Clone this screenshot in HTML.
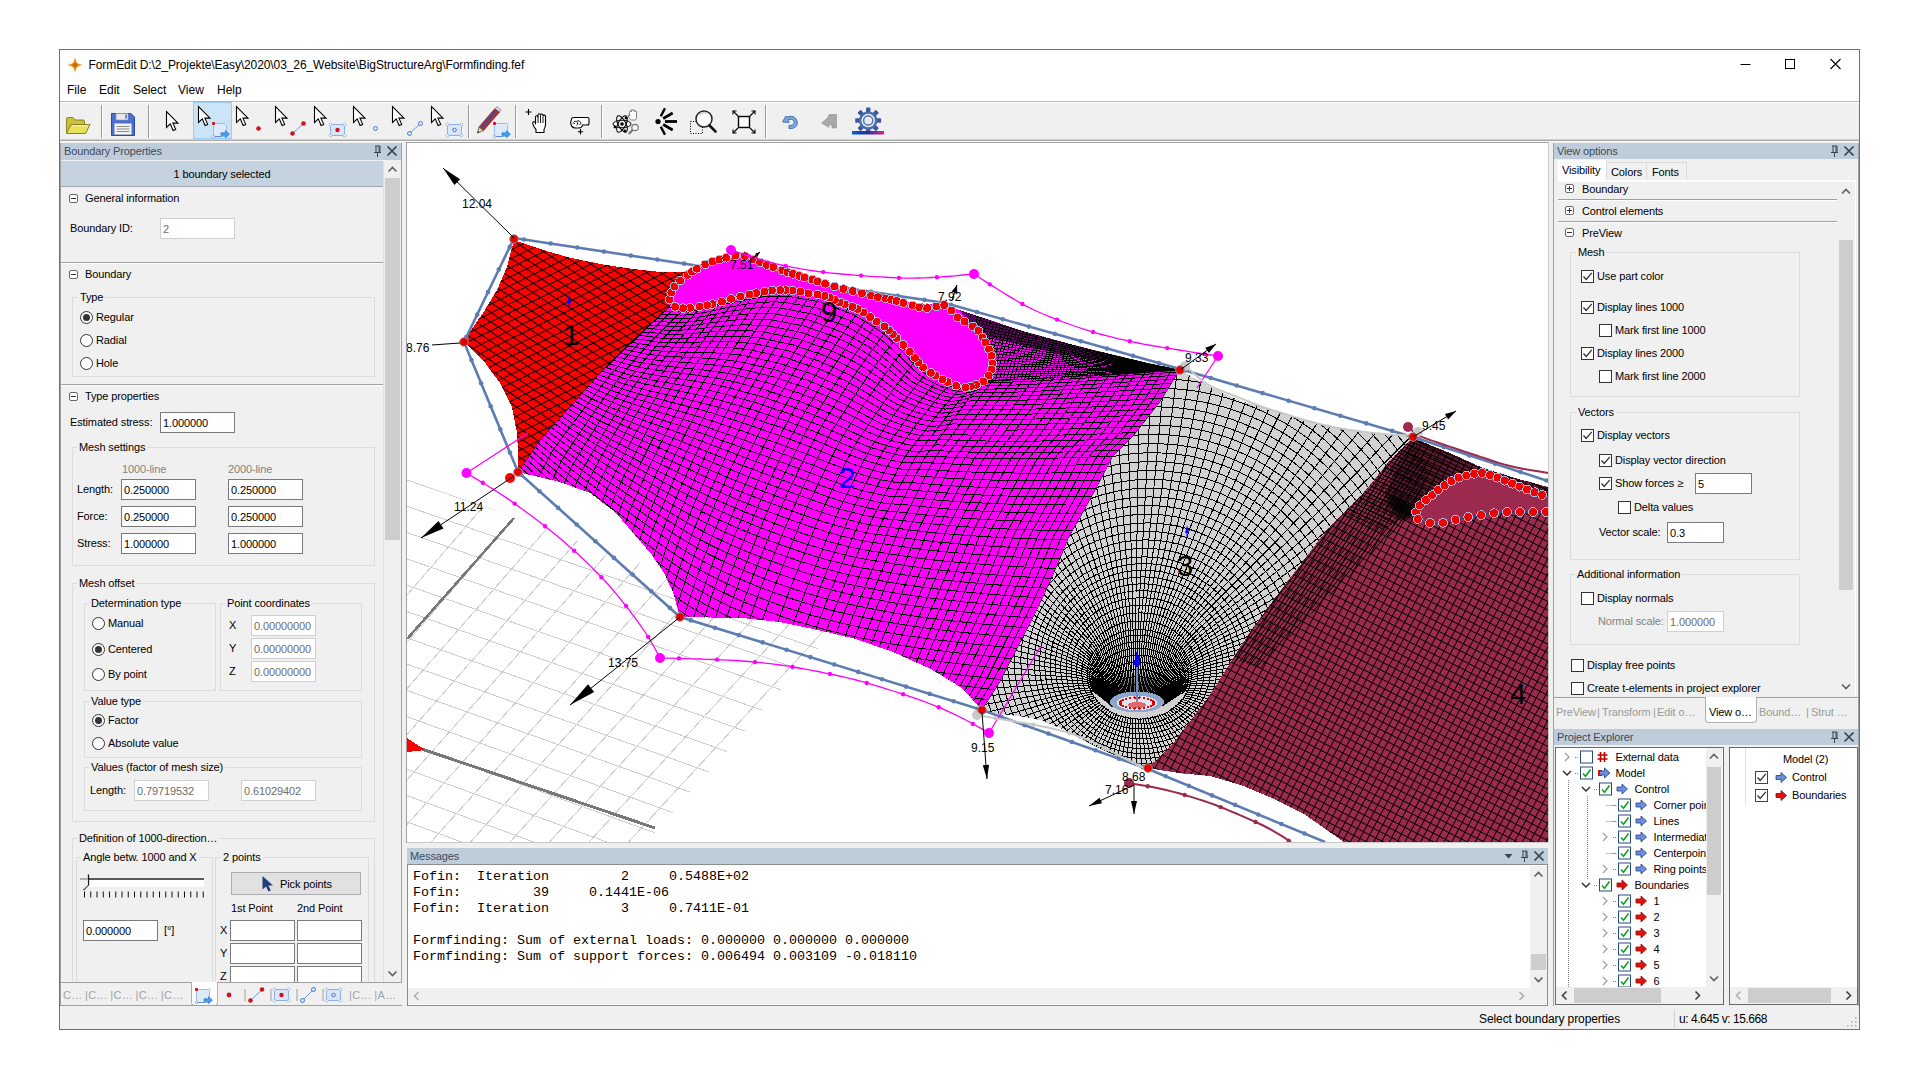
<!DOCTYPE html><html><head><meta charset="utf-8"><title>FormEdit</title><style>
*{box-sizing:border-box;margin:0;padding:0}
html,body{width:1920px;height:1080px;overflow:hidden;background:#fff}
body{font-family:"Liberation Sans",sans-serif;font-size:11px;color:#000;position:relative}
div,span,svg{position:absolute}
span{white-space:pre;line-height:14px}
.t{font-size:11px;letter-spacing:-0.12px}
.tt{font-size:12px;line-height:16px}
.m{font-family:"Liberation Mono",monospace;font-size:13.33px;line-height:16px}
</style></head><body><div style="left:59px;top:49px;width:1801px;height:981px;border:1px solid #707070;background:#f0f0f0"></div><div style="left:60px;top:50px;width:1799px;height:51px;background:#fff"></div><svg style="left:67px;top:57px" width="16" height="16" viewBox="0 0 16 16"><path d="M8 0.5 L10 6 L15.5 8 L10 10 L8 15.5 L6 10 L0.5 8 L6 6 Z" fill="#f39a1d"/><circle cx="8" cy="8" r="2.6" fill="#e0801a"/><path d="M8 5v6M5 8h6" stroke="#a85a10" stroke-width="0.7"/></svg><span class="tt" style="left:88.5px;top:56.5px;letter-spacing:-0.09px">FormEdit D:\2_Projekte\Easy\2020\03_26_Website\BigStructureArg\Formfinding.fef</span><svg style="left:1720px;top:50px" width="140" height="30" viewBox="1720 50 140 30"><path d="M1740.5 64.5 h10" stroke="#000" stroke-width="1" fill="none"/><rect x="1785.5" y="59.5" width="9" height="9" fill="none" stroke="#000" stroke-width="1"/><path d="M1830.5 59 L1840.5 69 M1840.5 59 L1830.5 69" stroke="#000" stroke-width="1.1" fill="none"/></svg><span class="tt" style="left:67px;top:82px">File</span><span class="tt" style="left:99px;top:82px">Edit</span><span class="tt" style="left:133px;top:82px">Select</span><span class="tt" style="left:178px;top:82px">View</span><span class="tt" style="left:217px;top:82px">Help</span><div style="left:60px;top:101px;width:1799px;height:1px;background:#b8b8b8"></div><div style="left:60px;top:102px;width:1799px;height:1px;background:#fdfdfd"></div><div style="left:60px;top:139px;width:1799px;height:1px;background:#d0d0d0"></div><div style="left:60px;top:140px;width:1799px;height:1px;background:#a8a8a8"></div><div style="left:60px;top:141px;width:1799px;height:1px;background:#fafafa"></div><div style="left:193px;top:102px;width:39px;height:37px;background:#cce4f7;border:1px solid #9ccbf0"></div><svg style="left:60px;top:102px" width="900" height="38" viewBox="60 102 900 38"><path d="M101.5 105 V138" stroke="#9a9a9a" stroke-width="1"/><path d="M102.5 105 V138" stroke="#fff" stroke-width="1"/><path d="M148.5 105 V138" stroke="#9a9a9a" stroke-width="1"/><path d="M149.5 105 V138" stroke="#fff" stroke-width="1"/><path d="M468.5 105 V138" stroke="#9a9a9a" stroke-width="1"/><path d="M469.5 105 V138" stroke="#fff" stroke-width="1"/><path d="M515.5 105 V138" stroke="#9a9a9a" stroke-width="1"/><path d="M516.5 105 V138" stroke="#fff" stroke-width="1"/><path d="M601.5 105 V138" stroke="#9a9a9a" stroke-width="1"/><path d="M602.5 105 V138" stroke="#fff" stroke-width="1"/><path d="M765.5 105 V138" stroke="#9a9a9a" stroke-width="1"/><path d="M766.5 105 V138" stroke="#fff" stroke-width="1"/><path d="M66.5 133.5 V119 q0-1.5 1.5-1.5 h5 l2 2.5 h8 q1.5 0 1.5 1.5 v3" fill="#c9c23a" stroke="#8a8420" stroke-width="1"/><path d="M66.5 133.5 L71 124.5 H90 L85.5 133.5 Z" fill="#e6e05a" stroke="#8a8420" stroke-width="1"/><path d="M72 126 H88" stroke="#f6f3a0" stroke-width="1.2"/><path d="M111.5 113.5 H131 L134.5 117 V135.5 H111.5 Z" fill="#4a6fd0" stroke="#2d49a0" stroke-width="1"/><rect x="116" y="113.5" width="12" height="6.5" fill="#e8e8ee" stroke="#9090a8" stroke-width="0.6"/><rect x="125" y="114.5" width="2" height="4" fill="#8088a0"/><rect x="114.5" y="123.5" width="17" height="11" fill="#f4f4f4" stroke="#b0b0c0" stroke-width="0.6"/><path d="M116.5 126.5 h13 M116.5 129 h13 M116.5 131.5 h13" stroke="#8a8a8a" stroke-width="1"/><path transform="translate(166.5,111.5)" d="M0 0 L0 16 L3.8 12.4 L6.6 19 L9.2 17.9 L6.4 11.6 L11.5 11.6 Z" fill="#fff" stroke="#000" stroke-width="1.1" stroke-linejoin="miter"/><path transform="translate(198.5,106.5)" d="M0 0 L0 16 L3.8 12.4 L6.6 19 L9.2 17.9 L6.4 11.6 L11.5 11.6 Z" fill="#fff" stroke="#000" stroke-width="1.1" stroke-linejoin="miter"/><rect x="213.5" y="123.5" width="13" height="13" fill="#dfeaf8" stroke="#9dbbe6" stroke-width="1"/><circle cx="213.5" cy="136.5" r="1.4" fill="#fff" stroke="#7fa3dc" stroke-width="0.8"/><circle cx="226.5" cy="123.5" r="1.2" fill="#fff" stroke="#9dbbe6" stroke-width="0.6"/><path d="M214.5 136.5 H221.5" stroke="#5d8fdc" stroke-width="1"/><path d="M221.0 132.8 h4.5 v-2.2 l4 3.6 l-4 3.6 v-2.2 h-4.5 z" fill="#3fa0f0" stroke="#2a6fc8" stroke-width="0.6"/><rect x="212.0" y="122.0" width="3" height="3" rx="1" fill="#d01020"/><path transform="translate(236.5,106.5)" d="M0 0 L0 16 L3.8 12.4 L6.6 19 L9.2 17.9 L6.4 11.6 L11.5 11.6 Z" fill="#fff" stroke="#000" stroke-width="1.1" stroke-linejoin="miter"/><circle cx="258.5" cy="128.5" r="2.3" fill="#d01020"/><path transform="translate(275.5,106.5)" d="M0 0 L0 16 L3.8 12.4 L6.6 19 L9.2 17.9 L6.4 11.6 L11.5 11.6 Z" fill="#fff" stroke="#000" stroke-width="1.1" stroke-linejoin="miter"/><path d="M292.5 133.5 L303.5 123.5" stroke="#6a9be0" stroke-width="1"/><circle cx="292.5" cy="133.5" r="2.3" fill="#d01020"/><circle cx="303.5" cy="123.5" r="2.3" fill="#d01020"/><path transform="translate(314.5,106.5)" d="M0 0 L0 16 L3.8 12.4 L6.6 19 L9.2 17.9 L6.4 11.6 L11.5 11.6 Z" fill="#fff" stroke="#000" stroke-width="1.1" stroke-linejoin="miter"/><rect x="330.5" y="124.5" width="14" height="11" fill="#d9e6f7" stroke="#8fb0e0" stroke-width="1"/><circle cx="330.5" cy="124.5" r="1.4" fill="#fff" stroke="#8fb0e0" stroke-width="0.8"/><circle cx="344.5" cy="124.5" r="1.4" fill="#fff" stroke="#8fb0e0" stroke-width="0.8"/><circle cx="330.5" cy="135.5" r="1.4" fill="#fff" stroke="#8fb0e0" stroke-width="0.8"/><circle cx="344.5" cy="135.5" r="1.4" fill="#fff" stroke="#8fb0e0" stroke-width="0.8"/><circle cx="337.5" cy="130.0" r="2.2" fill="#d01020"/><path transform="translate(353.5,106.5)" d="M0 0 L0 16 L3.8 12.4 L6.6 19 L9.2 17.9 L6.4 11.6 L11.5 11.6 Z" fill="#fff" stroke="#000" stroke-width="1.1" stroke-linejoin="miter"/><circle cx="375.5" cy="128.5" r="2" fill="#dbe8fa" stroke="#4a7ad0" stroke-width="1"/><path transform="translate(392.5,106.5)" d="M0 0 L0 16 L3.8 12.4 L6.6 19 L9.2 17.9 L6.4 11.6 L11.5 11.6 Z" fill="#fff" stroke="#000" stroke-width="1.1" stroke-linejoin="miter"/><path d="M409.5 133.5 L420.5 123.5" stroke="#6a9be0" stroke-width="1"/><circle cx="409.5" cy="133.5" r="2" fill="#dbe8fa" stroke="#4a7ad0" stroke-width="1"/><circle cx="420.5" cy="123.5" r="2" fill="#dbe8fa" stroke="#4a7ad0" stroke-width="1"/><path transform="translate(431.5,106.5)" d="M0 0 L0 16 L3.8 12.4 L6.6 19 L9.2 17.9 L6.4 11.6 L11.5 11.6 Z" fill="#fff" stroke="#000" stroke-width="1.1" stroke-linejoin="miter"/><rect x="447.5" y="124.5" width="14" height="11" fill="#d9e6f7" stroke="#8fb0e0" stroke-width="1"/><circle cx="447.5" cy="124.5" r="1.4" fill="#fff" stroke="#8fb0e0" stroke-width="0.8"/><circle cx="461.5" cy="124.5" r="1.4" fill="#fff" stroke="#8fb0e0" stroke-width="0.8"/><circle cx="447.5" cy="135.5" r="1.4" fill="#fff" stroke="#8fb0e0" stroke-width="0.8"/><circle cx="461.5" cy="135.5" r="1.4" fill="#fff" stroke="#8fb0e0" stroke-width="0.8"/><circle cx="454.5" cy="130" r="1.8" fill="#dbe8fa" stroke="#4a7ad0" stroke-width="1"/><path d="M479 127 L495 108.5 L499.5 112 L483.5 130.5 Z" fill="#b03030" stroke="#5a2020" stroke-width="0.7"/><path d="M480.5 128.5 L496.5 110" stroke="#3050b0" stroke-width="1.6"/><path d="M495 108.5 L497 106.5 L501 110 L499.5 112 Z" fill="#f0d0d0" stroke="#806060" stroke-width="0.6"/><path d="M479 127 L477.5 133 L483.5 130.5 Z" fill="#e8d8a0" stroke="#404040" stroke-width="0.7"/><path d="M477.5 133 l1.8-0.8 l-1.3-1.2 z" fill="#000"/><rect x="494.5" y="123.5" width="13" height="13" fill="#dfeaf8" stroke="#9dbbe6" stroke-width="1"/><circle cx="494.5" cy="136.5" r="1.4" fill="#fff" stroke="#7fa3dc" stroke-width="0.8"/><circle cx="507.5" cy="123.5" r="1.2" fill="#fff" stroke="#9dbbe6" stroke-width="0.6"/><path d="M495.5 136.5 H502.5" stroke="#5d8fdc" stroke-width="1"/><path d="M502.0 132.8 h4.5 v-2.2 l4 3.6 l-4 3.6 v-2.2 h-4.5 z" fill="#3fa0f0" stroke="#2a6fc8" stroke-width="0.6"/><rect x="493.0" y="122.0" width="3" height="3" rx="1" fill="#d01020"/><path d="M528.5 109 v6 M525.5 112 h6" stroke="#000" stroke-width="1.1"/><path d="M535.5 124 v-7 q0-1.3 1.2-1.3 q1.3 0 1.3 1.3 v-2 q0-1.3 1.3-1.3 q1.2 0 1.2 1.3 v0.3 q0-1.3 1.3-1.3 q1.2 0 1.2 1.3 v1 q0-1.2 1.2-1.2 q1.3 0 1.3 1.3 v8.2 q0 2.5-1.5 4.7 v3.2 h-8 v-3 q-2-2-3.2-5.5 q-0.5-1.6 0.8-2.2 q1.2-0.4 1.9 1 z" fill="#fff" stroke="#000" stroke-width="1.1" stroke-linejoin="round"/><path d="M538 117 v6 M540.5 116 v7 M543 117 v6" stroke="#000" stroke-width="0.9"/><path d="M571.5 119.5 q0-2 2-2 h14 q1.5 0 1.5 1.5 v4 q0 2-2 2 h-4.5 q-0.5 3-3.5 3 h-3 q-4 0-5-3.5 q-1-2.5 0.5-5 z" fill="#fff" stroke="#000" stroke-width="1.1"/><path d="M574 121.5 q2.5-1 3.5 1 q1 2-1 3 M577 121 q2.5-1 3.5 1.2 q0.6 1.8-1 2.8 M572.5 123 q1.5-0.6 2.5 0.8" fill="none" stroke="#000" stroke-width="0.9"/><path d="M580.5 129 v5.5 M577.8 131.7 h5.4" stroke="#000" stroke-width="1.1"/><g fill="none" stroke="#000" stroke-width="1"><ellipse cx="622" cy="124" rx="9" ry="3.8" transform="rotate(0 622 124)"/><ellipse cx="622" cy="124" rx="9" ry="3.8" transform="rotate(62 622 124)"/><ellipse cx="622" cy="124" rx="9" ry="3.8" transform="rotate(-62 622 124)"/></g><circle cx="622" cy="124" r="1.8" fill="#000"/><circle cx="615" cy="127" r="1.4" fill="#000"/><circle cx="626" cy="118" r="1.4" fill="#000"/><circle cx="625" cy="131" r="1.4" fill="#000"/><path d="M629.5 116 v-4 q0-1 0.9-1 q0.9 0 0.9 1 v-1.5 q0-1 0.9-1 t0.9 1 v0.5 q0-1 0.9-1 t0.9 1 v1 q0-0.9 0.8-0.9 t0.8 0.9 v5 q0 2-1 3 h-4.6 q-2-1.8-2.7-4 q-0.3-1.1 0.6-1.3 q0.8-0.2 1.3 0.8 z" fill="#fff" stroke="#666" stroke-width="0.8"/><circle cx="635" cy="127.5" r="3.2" fill="#f4f4f4" stroke="#777" stroke-width="1.2"/><path d="M632.6 130 L628.8 134" stroke="#777" stroke-width="2"/><circle cx="658" cy="121.5" r="2.6" fill="#000"/><path d="M660.8 116.2 L665.0 108.3" stroke="#000" stroke-width="2.4" stroke-linecap="butt"/><path d="M663.2 118.5 L672.7 113.0" stroke="#000" stroke-width="2.6" stroke-linecap="butt"/><path d="M665.0 121.5 L677.0 121.5" stroke="#000" stroke-width="2.8" stroke-linecap="butt"/><path d="M663.2 124.5 L672.7 130.0" stroke="#000" stroke-width="2.6" stroke-linecap="butt"/><path d="M660.8 126.8 L665.0 134.7" stroke="#000" stroke-width="2.4" stroke-linecap="butt"/><rect x="690.5" y="121.5" width="12" height="12" fill="none" stroke="#000" stroke-width="1" stroke-dasharray="1 1.5"/><circle cx="704" cy="119" r="8" fill="#fafafa" stroke="#222" stroke-width="1.5"/><path d="M699.5 115 q3-3.5 7.5-2" stroke="#ccc" stroke-width="1.5" fill="none"/><path d="M709.5 125.5 L715.5 131.5" stroke="#111" stroke-width="2.6" stroke-linecap="round"/><rect x="738.5" y="116.5" width="11" height="11" fill="#fafafa" stroke="#000" stroke-width="1.4"/><path d="M733 111 L738 116 M755 111 L750 116 M733 133 L738 128 M755 133 L750 128" stroke="#000" stroke-width="1.1"/><path d="M733 114.5 V111 H736.5 M751.5 111 H755 V114.5 M733 129.5 V133 H736.5 M751.5 133 H755 V129.5" stroke="#000" stroke-width="1.1" fill="none"/><path d="M786.5 117 q8-2.5 10.5 3.5 q1.8 6-4.5 8 h-3.5 v-3.2 h3 q3-1 2-4 q-1.5-3-6-1.5 l1.2 2.6 l-6.7-0.4 l3.3-6 z" fill="#7aa6d8" stroke="#3f6fb0" stroke-width="0.9" stroke-linejoin="round"/><path d="M829 114.5 h7.5 v13.5 h-4.5 v-3 h-3.5 l0.5 2.5 l-7.5-4.5 l6.5-5.5 z" fill="#a8a8a8" stroke="#909090" stroke-width="0.6"/><rect x="866" y="107.5" width="4.4" height="5" rx="0.8" fill="#3c5a9a" transform="rotate(0 868.2 120.5)"/><rect x="866" y="107.5" width="4.4" height="5" rx="0.8" fill="#3c5a9a" transform="rotate(45 868.2 120.5)"/><rect x="866" y="107.5" width="4.4" height="5" rx="0.8" fill="#3c5a9a" transform="rotate(90 868.2 120.5)"/><rect x="866" y="107.5" width="4.4" height="5" rx="0.8" fill="#3c5a9a" transform="rotate(135 868.2 120.5)"/><rect x="866" y="107.5" width="4.4" height="5" rx="0.8" fill="#3c5a9a" transform="rotate(180 868.2 120.5)"/><rect x="866" y="107.5" width="4.4" height="5" rx="0.8" fill="#3c5a9a" transform="rotate(225 868.2 120.5)"/><rect x="866" y="107.5" width="4.4" height="5" rx="0.8" fill="#3c5a9a" transform="rotate(270 868.2 120.5)"/><rect x="866" y="107.5" width="4.4" height="5" rx="0.8" fill="#3c5a9a" transform="rotate(315 868.2 120.5)"/><circle cx="868.2" cy="120.5" r="9.3" fill="#4a6cb0"/><circle cx="868.2" cy="120.5" r="6.8" fill="#f0f0f0"/><circle cx="868.2" cy="120.5" r="4.6" fill="none" stroke="#5a7cc0" stroke-width="1.6"/><circle cx="868.2" cy="120.5" r="2" fill="#dfe6f5"/><defs><linearGradient id="gbar" x1="0" x2="1"><stop offset="0" stop-color="#1060d0"/><stop offset="0.45" stop-color="#2030a0"/><stop offset="0.75" stop-color="#8030a0"/><stop offset="1" stop-color="#e02080"/></linearGradient></defs><rect x="852" y="131" width="32" height="3.5" fill="url(#gbar)"/></svg><div style="left:61px;top:143px;width:341px;height:17px;background:#bfcddb"></div><span class="t" style="left:64px;top:144px;color:#3d4a57">Boundary Properties</span><svg style="left:370px;top:143px" width="32" height="16" viewBox="370 143 32 16"><path d="M375.0 146 h5 M376.0 146 v6 M379.0 146 v6 M380.0 146 v6 M374.0 152.5 h7 M377.5 152.5 v4.5" fill="none" stroke="#35444e" stroke-width="1"/><path d="M387.5 146.5 L396.5 155.5 M396.5 146.5 L387.5 155.5" fill="none" stroke="#35444e" stroke-width="1.7"/></svg><div style="left:60px;top:143px;width:1px;height:863px;background:#a0a0a0"></div><div style="left:0;top:0;width:384px;height:982px;overflow:hidden;clip-path:inset(160px 0 0 61px)"><div style="left:61px;top:161px;width:322px;height:25px;background:#c5d2e0;background-image:radial-gradient(#b4c3d4 0.6px,transparent 0.7px);background-size:2px 2px"></div><div style="left:61px;top:186px;width:322px;height:1px;background:#a0a8b4"></div><span class="t" style="left:61px;top:167px;width:322px;text-align:center">1 boundary selected</span><div style="left:68.5px;top:193.5px;width:9px;height:9px;border:1px solid #6a6a6a;border-radius:2px;background:#fff"><div style="left:1px;top:3px;width:5px;height:1px;background:#333"></div></div><span class="t" style="left:85px;top:191px;">General information</span><span class="t" style="left:70px;top:221px;">Boundary ID:</span><div style="left:160px;top:218px;width:75px;height:21px;border:1px solid #d0d0d0;background:#fff"><span class="t" style="left:2px;top:2.5px;color:#6d6d6d">2</span></div><div style="left:61px;top:262px;width:322px;height:1px;background:#a0a0a0"></div><div style="left:61px;top:263px;width:322px;height:1px;background:#fff"></div><div style="left:68.5px;top:269.5px;width:9px;height:9px;border:1px solid #6a6a6a;border-radius:2px;background:#fff"><div style="left:1px;top:3px;width:5px;height:1px;background:#333"></div></div><span class="t" style="left:85px;top:267px;">Boundary</span><div style="left:72px;top:297px;width:303px;height:80px;border:1px solid #dcdcdc"></div><span class="t" style="left:78px;top:290px;background:#f0f0f0;padding:0 2px">Type</span><div style="left:80.0px;top:310.5px;width:13px;height:13px;border:1px solid #333;border-radius:50%;background:#fff"><div style="left:2px;top:2px;width:7px;height:7px;border-radius:50%;background:#333"></div></div><span class="t" style="left:96px;top:310px;">Regular</span><div style="left:80.0px;top:333.5px;width:13px;height:13px;border:1px solid #333;border-radius:50%;background:#fff"></div><span class="t" style="left:96px;top:333px;">Radial</span><div style="left:80.0px;top:356.5px;width:13px;height:13px;border:1px solid #333;border-radius:50%;background:#fff"></div><span class="t" style="left:96px;top:356px;">Hole</span><div style="left:61px;top:384px;width:322px;height:1px;background:#a0a0a0"></div><div style="left:61px;top:385px;width:322px;height:1px;background:#fff"></div><div style="left:68.5px;top:391.5px;width:9px;height:9px;border:1px solid #6a6a6a;border-radius:2px;background:#fff"><div style="left:1px;top:3px;width:5px;height:1px;background:#333"></div></div><span class="t" style="left:85px;top:389px;">Type properties</span><span class="t" style="left:70px;top:415px;">Estimated stress:</span><div style="left:160px;top:412px;width:75px;height:21px;border:1px solid #7a7a7a;background:#fff"><span class="t" style="left:2px;top:2.5px;color:#000">1.000000</span></div><div style="left:72px;top:447px;width:303px;height:119px;border:1px solid #dcdcdc"></div><span class="t" style="left:77px;top:440px;background:#f0f0f0;padding:0 2px">Mesh settings</span><span class="t" style="left:122px;top:462px;color:#838383">1000-line</span><span class="t" style="left:228px;top:462px;color:#838383">2000-line</span><span class="t" style="left:77px;top:482px;">Length:</span><div style="left:121px;top:479px;width:75px;height:21px;border:1px solid #7a7a7a;background:#fff"><span class="t" style="left:2px;top:2.5px;color:#000">0.250000</span></div><div style="left:228px;top:479px;width:75px;height:21px;border:1px solid #7a7a7a;background:#fff"><span class="t" style="left:2px;top:2.5px;color:#000">0.250000</span></div><span class="t" style="left:77px;top:509px;">Force:</span><div style="left:121px;top:506px;width:75px;height:21px;border:1px solid #7a7a7a;background:#fff"><span class="t" style="left:2px;top:2.5px;color:#000">0.250000</span></div><div style="left:228px;top:506px;width:75px;height:21px;border:1px solid #7a7a7a;background:#fff"><span class="t" style="left:2px;top:2.5px;color:#000">0.250000</span></div><span class="t" style="left:77px;top:536px;">Stress:</span><div style="left:121px;top:533px;width:75px;height:21px;border:1px solid #7a7a7a;background:#fff"><span class="t" style="left:2px;top:2.5px;color:#000">1.000000</span></div><div style="left:228px;top:533px;width:75px;height:21px;border:1px solid #7a7a7a;background:#fff"><span class="t" style="left:2px;top:2.5px;color:#000">1.000000</span></div><div style="left:72px;top:583px;width:303px;height:239px;border:1px solid #dcdcdc"></div><span class="t" style="left:77px;top:576px;background:#f0f0f0;padding:0 2px">Mesh offset</span><div style="left:84px;top:603px;width:132px;height:88px;border:1px solid #dcdcdc"></div><span class="t" style="left:89px;top:596px;background:#f0f0f0;padding:0 2px">Determination type</span><div style="left:92.0px;top:616.5px;width:13px;height:13px;border:1px solid #333;border-radius:50%;background:#fff"></div><span class="t" style="left:108px;top:616px;">Manual</span><div style="left:92.0px;top:642.5px;width:13px;height:13px;border:1px solid #333;border-radius:50%;background:#fff"><div style="left:2px;top:2px;width:7px;height:7px;border-radius:50%;background:#333"></div></div><span class="t" style="left:108px;top:642px;">Centered</span><div style="left:92.0px;top:667.5px;width:13px;height:13px;border:1px solid #333;border-radius:50%;background:#fff"></div><span class="t" style="left:108px;top:667px;">By point</span><div style="left:220px;top:603px;width:142px;height:88px;border:1px solid #dcdcdc"></div><span class="t" style="left:225px;top:596px;background:#f0f0f0;padding:0 2px">Point coordinates</span><span class="t" style="left:229px;top:618px;">X</span><div style="left:251px;top:615px;width:65px;height:21px;border:1px solid #d0d0d0;background:#fff"><span class="t" style="left:2px;top:2.5px;color:#6d6d6d">0.00000000</span></div><span class="t" style="left:229px;top:641px;">Y</span><div style="left:251px;top:638px;width:65px;height:21px;border:1px solid #d0d0d0;background:#fff"><span class="t" style="left:2px;top:2.5px;color:#6d6d6d">0.00000000</span></div><span class="t" style="left:229px;top:664px;">Z</span><div style="left:251px;top:661px;width:65px;height:21px;border:1px solid #d0d0d0;background:#fff"><span class="t" style="left:2px;top:2.5px;color:#6d6d6d">0.00000000</span></div><div style="left:84px;top:701px;width:278px;height:57px;border:1px solid #dcdcdc"></div><span class="t" style="left:89px;top:694px;background:#f0f0f0;padding:0 2px">Value type</span><div style="left:92.0px;top:713.5px;width:13px;height:13px;border:1px solid #333;border-radius:50%;background:#fff"><div style="left:2px;top:2px;width:7px;height:7px;border-radius:50%;background:#333"></div></div><span class="t" style="left:108px;top:713px;">Factor</span><div style="left:92.0px;top:736.5px;width:13px;height:13px;border:1px solid #333;border-radius:50%;background:#fff"></div><span class="t" style="left:108px;top:736px;">Absolute value</span><div style="left:84px;top:767px;width:278px;height:44px;border:1px solid #dcdcdc"></div><span class="t" style="left:89px;top:760px;background:#f0f0f0;padding:0 2px">Values (factor of mesh size)</span><span class="t" style="left:90px;top:783px;">Length:</span><div style="left:134px;top:780px;width:75px;height:21px;border:1px solid #d0d0d0;background:#fff"><span class="t" style="left:2px;top:2.5px;color:#6d6d6d">0.79719532</span></div><div style="left:241px;top:780px;width:75px;height:21px;border:1px solid #d0d0d0;background:#fff"><span class="t" style="left:2px;top:2.5px;color:#6d6d6d">0.61029402</span></div><div style="left:72px;top:838px;width:303px;height:200px;border:1px solid #dcdcdc"></div><span class="t" style="left:77px;top:831px;background:#f0f0f0;padding:0 2px">Definition of 1000-direction…</span><div style="left:76px;top:857px;width:137px;height:200px;border:1px solid #dcdcdc"></div><span class="t" style="left:81px;top:850px;background:#f0f0f0;padding:0 2px">Angle betw. 1000 and X</span><div style="left:215px;top:857px;width:154px;height:200px;border:1px solid #dcdcdc"></div><span class="t" style="left:221px;top:850px;background:#f0f0f0;padding:0 2px">2 points</span><div style="left:80px;top:878px;width:124px;height:3px;background:#5a5a5a;height:2px"></div><div style="left:80px;top:880px;width:124px;height:7px;background:#fff"></div><svg style="left:78px;top:872px" width="130" height="28" viewBox="78 872 130 28"><path d="M83.5 890 L88.5 885 V874.5" fill="none" stroke="#1a1a1a" stroke-width="1.3"/><path d="M80 878 h8 v8 l-4 3.5 l-4-3.5 z" fill="#e8e8e8" opacity="0.6"/><path d="M84.50 891.5 v6" stroke="#111" stroke-width="1"/><path d="M90.75 891.5 v6" stroke="#111" stroke-width="1"/><path d="M97.00 891.5 v6" stroke="#111" stroke-width="1"/><path d="M103.25 891.5 v6" stroke="#111" stroke-width="1"/><path d="M109.50 891.5 v6" stroke="#111" stroke-width="1"/><path d="M115.75 891.5 v6" stroke="#111" stroke-width="1"/><path d="M122.00 891.5 v6" stroke="#111" stroke-width="1"/><path d="M128.25 891.5 v6" stroke="#111" stroke-width="1"/><path d="M134.50 891.5 v6" stroke="#111" stroke-width="1"/><path d="M140.75 891.5 v6" stroke="#111" stroke-width="1"/><path d="M147.00 891.5 v6" stroke="#111" stroke-width="1"/><path d="M153.25 891.5 v6" stroke="#111" stroke-width="1"/><path d="M159.50 891.5 v6" stroke="#111" stroke-width="1"/><path d="M165.75 891.5 v6" stroke="#111" stroke-width="1"/><path d="M172.00 891.5 v6" stroke="#111" stroke-width="1"/><path d="M178.25 891.5 v6" stroke="#111" stroke-width="1"/><path d="M184.50 891.5 v6" stroke="#111" stroke-width="1"/><path d="M190.75 891.5 v6" stroke="#111" stroke-width="1"/><path d="M197.00 891.5 v6" stroke="#111" stroke-width="1"/><path d="M203.25 891.5 v6" stroke="#111" stroke-width="1"/></svg><div style="left:83px;top:920px;width:75px;height:21px;border:1px solid #7a7a7a;background:#fff"><span class="t" style="left:2px;top:2.5px;color:#000">0.000000</span></div><span class="t" style="left:164px;top:923px;">[°]</span><div style="left:231px;top:872px;width:130px;height:23px;background:#e1e1e1;border:1px solid #adadad"></div><svg style="left:260px;top:875px" width="16" height="18" viewBox="0 0 16 18"><path d="M2.5 1 L2.5 14.5 L6 11.5 L8.5 16.5 L10.8 15.4 L8.3 10.6 L13 10.4 Z" fill="#1f3f7a"/></svg><span class="t" style="left:280px;top:877px;">Pick points</span><span class="t" style="left:231px;top:901px;">1st Point</span><span class="t" style="left:297px;top:901px;">2nd Point</span><span class="t" style="left:220px;top:923px;">X</span><div style="left:230px;top:920px;width:65px;height:21px;border:1px solid #7a7a7a;background:#fff"><span class="t" style="left:2px;top:2.5px;color:#000"></span></div><div style="left:297px;top:920px;width:65px;height:21px;border:1px solid #7a7a7a;background:#fff"><span class="t" style="left:2px;top:2.5px;color:#000"></span></div><span class="t" style="left:220px;top:946px;">Y</span><div style="left:230px;top:943px;width:65px;height:21px;border:1px solid #7a7a7a;background:#fff"><span class="t" style="left:2px;top:2.5px;color:#000"></span></div><div style="left:297px;top:943px;width:65px;height:21px;border:1px solid #7a7a7a;background:#fff"><span class="t" style="left:2px;top:2.5px;color:#000"></span></div><span class="t" style="left:220px;top:969px;">Z</span><div style="left:230px;top:966px;width:65px;height:21px;border:1px solid #7a7a7a;background:#fff"><span class="t" style="left:2px;top:2.5px;color:#000"></span></div><div style="left:297px;top:966px;width:65px;height:21px;border:1px solid #7a7a7a;background:#fff"><span class="t" style="left:2px;top:2.5px;color:#000"></span></div></div><div style="left:384px;top:161px;width:17px;height:821px;background:#f0f0f0"></div><div style="left:385px;top:178px;width:15px;height:362px;background:#cdcdcd"></div><svg style="left:384px;top:161px" width="17" height="821" viewBox="0 0 17 821"><path d="M4.5 10.5 L8.5 6.5 L12.5 10.5" fill="none" stroke="#606060" stroke-width="1.6"/><path d="M4.5 810.5 L8.5 814.5 L12.5 810.5" fill="none" stroke="#606060" stroke-width="1.6"/></svg><div style="left:383px;top:161px;width:1px;height:821px;background:#e0e0e0"></div><div style="left:401px;top:143px;width:1px;height:863px;background:#a0a0a0"></div><div style="left:61px;top:982px;width:341px;height:1px;background:#a0a0a0"></div><div style="left:61px;top:983px;width:341px;height:22px;background:#f0f0f0"></div><div style="left:191px;top:982px;width:27px;height:24px;background:#fff;border:1px solid #b0b0b0;border-top:none;border-radius:0 0 4px 4px"></div><span class="t" style="left:63px;top:988px;color:#a0a0a0;letter-spacing:0.35px;word-spacing:-1px">C… |C… |C… |C… |C…</span><span class="t" style="left:349px;top:988px;color:#a0a0a0;letter-spacing:0.35px;word-spacing:-1px">|C… |A…</span><svg style="left:190px;top:983px" width="160" height="22" viewBox="190 983 160 22"><rect x="196.5" y="989.5" width="13" height="13" fill="#dfeaf8" stroke="#9dbbe6" stroke-width="1"/><circle cx="196.5" cy="1002.5" r="1.4" fill="#fff" stroke="#7fa3dc" stroke-width="0.8"/><circle cx="209.5" cy="989.5" r="1.2" fill="#fff" stroke="#9dbbe6" stroke-width="0.6"/><path d="M197.5 1002.5 H204.5" stroke="#5d8fdc" stroke-width="1"/><path d="M204.0 998.8 h4.5 v-2.2 l4 3.6 l-4 3.6 v-2.2 h-4.5 z" fill="#3fa0f0" stroke="#2a6fc8" stroke-width="0.6"/><rect x="195.0" y="988.0" width="3" height="3" rx="1" fill="#d01020"/><circle cx="229" cy="995" r="2.4" fill="#d01020"/><path d="M245 989 v12 M271 989 v12 M297 989 v12 M323 989 v12" stroke="#a0a0a0" stroke-width="1"/><path d="M250.5 1000.5 L262 989.5" stroke="#6a9be0" stroke-width="1"/><circle cx="250.5" cy="1000.5" r="2.3" fill="#d01020"/><circle cx="262" cy="989.5" r="2.3" fill="#d01020"/><rect x="274.5" y="989.5" width="14" height="11" fill="#d9e6f7" stroke="#8fb0e0" stroke-width="1"/><circle cx="274.5" cy="989.5" r="1.4" fill="#fff" stroke="#8fb0e0" stroke-width="0.8"/><circle cx="288.5" cy="989.5" r="1.4" fill="#fff" stroke="#8fb0e0" stroke-width="0.8"/><circle cx="274.5" cy="1000.5" r="1.4" fill="#fff" stroke="#8fb0e0" stroke-width="0.8"/><circle cx="288.5" cy="1000.5" r="1.4" fill="#fff" stroke="#8fb0e0" stroke-width="0.8"/><circle cx="281.5" cy="995.0" r="2.2" fill="#d01020"/><path d="M302.5 1000.5 L313.5 989.5" stroke="#6a9be0" stroke-width="1"/><circle cx="302.5" cy="1000.5" r="2" fill="#dbe8fa" stroke="#4a7ad0" stroke-width="1"/><circle cx="313.5" cy="989.5" r="2" fill="#dbe8fa" stroke="#4a7ad0" stroke-width="1"/><rect x="326.5" y="989.5" width="14" height="11" fill="#d9e6f7" stroke="#8fb0e0" stroke-width="1"/><circle cx="326.5" cy="989.5" r="1.4" fill="#fff" stroke="#8fb0e0" stroke-width="0.8"/><circle cx="340.5" cy="989.5" r="1.4" fill="#fff" stroke="#8fb0e0" stroke-width="0.8"/><circle cx="326.5" cy="1000.5" r="1.4" fill="#fff" stroke="#8fb0e0" stroke-width="0.8"/><circle cx="340.5" cy="1000.5" r="1.4" fill="#fff" stroke="#8fb0e0" stroke-width="0.8"/><circle cx="333.5" cy="995" r="1.8" fill="#dbe8fa" stroke="#4a7ad0" stroke-width="1"/></svg><div style="left:60px;top:1005px;width:342px;height:1px;background:#a0a0a0"></div><div style="left:406px;top:142px;width:1143px;height:701px;background:#fff;border-left:1px solid #a0a0a0;border-top:1px solid #a0a0a0;border-right:1px solid #c8c8c8;border-bottom:1px solid #c8c8c8"></div><svg style="left:407px;top:143px" width="1141" height="699" viewBox="407 143 1141 699" font-family="Liberation Sans, sans-serif" shape-rendering="crispEdges"><defs><pattern id="r1a" width="8" height="8" patternUnits="userSpaceOnUse" patternTransform="rotate(34)"><rect x="0" y="0" width="8" height="1" fill="#000"/></pattern><pattern id="r1b" width="8" height="8" patternUnits="userSpaceOnUse" patternTransform="rotate(-26)"><rect x="0" y="0" width="8" height="1" fill="#000"/></pattern><pattern id="r4a" width="7.6" height="7.6" patternUnits="userSpaceOnUse" patternTransform="rotate(27)"><rect x="0" y="0" width="7.6" height="1" fill="#000"/></pattern><pattern id="r4b" width="6.9" height="6.9" patternUnits="userSpaceOnUse" patternTransform="rotate(-62)"><rect x="0" y="0" width="6.9" height="1" fill="#000"/></pattern><pattern id="r4c" width="3.4" height="3.4" patternUnits="userSpaceOnUse" patternTransform="rotate(-52)"><rect x="0" y="0" width="3.4" height="1" fill="#000"/></pattern><pattern id="r4d" width="3.8" height="3.8" patternUnits="userSpaceOnUse" patternTransform="rotate(24)"><rect x="0" y="0" width="3.8" height="1" fill="#000"/></pattern><clipPath id="c1"><polygon points="514.0,240.0 540.0,249.0 567.0,257.0 600.0,264.0 633.0,269.0 660.0,272.0 693.0,272.0 696.0,270.0 681.0,280.0 673.0,288.0 669.7,300.0 668.0,308.0 633.0,340.0 600.0,373.0 567.0,410.0 540.0,440.0 518.0,472.0 518.5,460.0 517.0,433.0 512.0,407.0 500.0,383.0 483.0,360.0 464.0,342.0 467.0,336.0 483.0,313.0 497.0,290.0 507.0,267.0 514.0,240.0"/></clipPath><clipPath id="c2"><polygon points="693.0,272.0 760.0,283.0 830.0,292.0 900.0,301.0 945.0,306.0 960.0,310.0 1022.0,331.0 1085.0,348.0 1147.0,363.0 1180.0,370.0 1160.0,402.0 1135.0,434.0 1113.0,456.0 1097.0,487.0 1085.0,509.0 1069.0,537.0 1060.0,559.0 1050.0,582.0 1035.0,614.0 1019.0,645.0 1000.0,682.0 982.0,710.0 962.0,688.0 931.0,669.0 893.0,652.0 856.0,639.0 818.0,630.0 780.0,622.0 742.0,618.0 680.0,617.0 673.0,592.0 664.0,573.0 652.0,555.0 635.0,535.0 615.0,512.0 590.0,493.0 560.0,482.0 518.0,472.0 540.0,440.0 567.0,410.0 600.0,373.0 633.0,340.0 668.0,308.0 669.7,300.0 673.0,288.0 681.0,280.0"/></clipPath><clipPath id="c3"><polygon points="1180.0,370.0 1210.0,387.0 1241.0,401.0 1272.0,410.0 1304.0,420.0 1335.0,427.0 1366.0,432.0 1397.0,435.0 1413.0,437.0 1391.0,459.0 1366.0,490.0 1335.0,521.0 1319.0,540.0 1304.0,560.0 1285.0,585.0 1269.0,606.0 1250.0,632.0 1232.0,660.0 1210.0,695.0 1191.0,720.0 1172.0,745.0 1148.0,768.0 1130.0,762.0 1113.0,754.5 1097.0,747.0 1078.0,737.5 1060.0,728.0 1041.0,720.0 1022.0,716.5 1000.0,714.0 982.0,710.0 1000.0,682.0 1019.0,645.0 1035.0,614.0 1050.0,582.0 1060.0,559.0 1069.0,537.0 1085.0,509.0 1097.0,487.0 1113.0,456.0 1135.0,434.0 1160.0,402.0 1180.0,370.0"/></clipPath><clipPath id="c4"><polygon points="1413.0,438.0 1450.0,453.0 1483.0,468.0 1515.0,478.0 1548.0,487.0 1548.0,842.0 1344.0,842.0 1304.0,814.0 1272.0,798.0 1241.0,785.0 1210.0,776.0 1179.0,773.0 1148.0,768.0 1172.0,745.0 1191.0,720.0 1210.0,695.0 1232.0,660.0 1250.0,632.0 1269.0,606.0 1285.0,585.0 1304.0,560.0 1319.0,540.0 1335.0,521.0 1366.0,490.0 1391.0,459.0 1413.0,437.0"/></clipPath><radialGradient id="fun" cx="0.5" cy="0.5" r="0.5"><stop offset="0" stop-color="#000" stop-opacity="0.95"/><stop offset="0.45" stop-color="#000" stop-opacity="0.75"/><stop offset="1" stop-color="#000" stop-opacity="0"/></radialGradient><linearGradient id="wedge" x1="0" y1="0" x2="0" y2="1"><stop offset="0" stop-color="#000" stop-opacity="0.95"/><stop offset="1" stop-color="#000" stop-opacity="0"/></linearGradient><clipPath id="gridclip"><polygon points="407,479 832,632 647,842 407,842"/></clipPath></defs><g clip-path="url(#gridclip)"><path d="M407 269.6 L1100 499.1" stroke="#cecece" stroke-width="1"/><path d="M407 295.9 L1100 526.6" stroke="#cecece" stroke-width="1"/><path d="M407 322.2 L1100 554.1" stroke="#cecece" stroke-width="1"/><path d="M407 348.5 L1100 581.6" stroke="#cecece" stroke-width="1"/><path d="M407 374.8 L1100 609.1" stroke="#cecece" stroke-width="1"/><path d="M407 401.1 L1100 636.6" stroke="#cecece" stroke-width="1"/><path d="M407 427.4 L1100 664.1" stroke="#cecece" stroke-width="1"/><path d="M407 453.7 L1100 691.6" stroke="#cecece" stroke-width="1"/><path d="M407 480.0 L1100 719.1" stroke="#cecece" stroke-width="1"/><path d="M407 506.3 L1100 746.6" stroke="#cecece" stroke-width="1"/><path d="M407 532.6 L1100 774.1" stroke="#cecece" stroke-width="1"/><path d="M407 558.9 L1100 801.6" stroke="#cecece" stroke-width="1"/><path d="M407 585.2 L1100 829.1" stroke="#cecece" stroke-width="1"/><path d="M407 611.5 L1100 856.6" stroke="#cecece" stroke-width="1"/><path d="M407 637.8 L1100 884.1" stroke="#cecece" stroke-width="1"/><path d="M407 664.1 L1100 911.6" stroke="#cecece" stroke-width="1"/><path d="M407 690.4 L1100 939.1" stroke="#cecece" stroke-width="1"/><path d="M407 716.7 L1100 966.6" stroke="#cecece" stroke-width="1"/><path d="M407 743.0 L1100 994.1" stroke="#cecece" stroke-width="1"/><path d="M407 769.3 L1100 1021.6" stroke="#cecece" stroke-width="1"/><path d="M407 795.6 L1100 1049.1" stroke="#cecece" stroke-width="1"/><path d="M407 821.9 L1100 1076.6" stroke="#cecece" stroke-width="1"/><path d="M407 848.2 L1100 1104.1" stroke="#cecece" stroke-width="1"/><path d="M407 874.5 L1100 1131.6" stroke="#cecece" stroke-width="1"/><path d="M194.0 842 L575.2 400" stroke="#cecece" stroke-width="1"/><path d="M233.5 842 L617.2 400" stroke="#cecece" stroke-width="1"/><path d="M273.0 842 L659.2 400" stroke="#cecece" stroke-width="1"/><path d="M312.5 842 L701.2 400" stroke="#cecece" stroke-width="1"/><path d="M352.0 842 L743.2 400" stroke="#cecece" stroke-width="1"/><path d="M391.5 842 L785.2 400" stroke="#cecece" stroke-width="1"/><path d="M431.0 842 L827.2 400" stroke="#cecece" stroke-width="1"/><path d="M470.5 842 L869.2 400" stroke="#cecece" stroke-width="1"/><path d="M510.0 842 L911.2 400" stroke="#cecece" stroke-width="1"/><path d="M549.5 842 L953.2 400" stroke="#cecece" stroke-width="1"/><path d="M589.0 842 L995.2 400" stroke="#cecece" stroke-width="1"/><path d="M628.5 842 L1037.2 400" stroke="#cecece" stroke-width="1"/><path d="M668.0 842 L1079.2 400" stroke="#cecece" stroke-width="1"/><path d="M707.5 842 L1121.2 400" stroke="#cecece" stroke-width="1"/><path d="M747.0 842 L1163.2 400" stroke="#cecece" stroke-width="1"/><path d="M786.5 842 L1205.2 400" stroke="#cecece" stroke-width="1"/><path d="M826.0 842 L1247.2 400" stroke="#cecece" stroke-width="1"/><path d="M865.5 842 L1289.2 400" stroke="#cecece" stroke-width="1"/><path d="M905.0 842 L1331.2 400" stroke="#cecece" stroke-width="1"/><path d="M944.5 842 L1373.2 400" stroke="#cecece" stroke-width="1"/><path d="M984.0 842 L1415.2 400" stroke="#cecece" stroke-width="1"/><path d="M1023.5 842 L1457.2 400" stroke="#cecece" stroke-width="1"/><path d="M1063.0 842 L1499.2 400" stroke="#cecece" stroke-width="1"/><path d="M1102.5 842 L1541.2 400" stroke="#cecece" stroke-width="1"/><path d="M1142.0 842 L1583.2 400" stroke="#cecece" stroke-width="1"/><path d="M1181.5 842 L1625.2 400" stroke="#cecece" stroke-width="1"/></g><path d="M407 639 L514 518" stroke="#787878" stroke-width="2.5"/><path d="M407 744 L655 828" stroke="#787878" stroke-width="3"/><path d="M407 738 L425 750 L407 752 Z" fill="#ff0000"/><polygon points="514.0,240.0 540.0,249.0 567.0,257.0 600.0,264.0 633.0,269.0 660.0,272.0 693.0,272.0 696.0,270.0 681.0,280.0 673.0,288.0 669.7,300.0 668.0,308.0 633.0,340.0 600.0,373.0 567.0,410.0 540.0,440.0 518.0,472.0 518.5,460.0 517.0,433.0 512.0,407.0 500.0,383.0 483.0,360.0 464.0,342.0 467.0,336.0 483.0,313.0 497.0,290.0 507.0,267.0 514.0,240.0" fill="#ff0000"/><polygon points="693.0,272.0 760.0,283.0 830.0,292.0 900.0,301.0 945.0,306.0 960.0,310.0 1022.0,331.0 1085.0,348.0 1147.0,363.0 1180.0,370.0 1160.0,402.0 1135.0,434.0 1113.0,456.0 1097.0,487.0 1085.0,509.0 1069.0,537.0 1060.0,559.0 1050.0,582.0 1035.0,614.0 1019.0,645.0 1000.0,682.0 982.0,710.0 962.0,688.0 931.0,669.0 893.0,652.0 856.0,639.0 818.0,630.0 780.0,622.0 742.0,618.0 680.0,617.0 673.0,592.0 664.0,573.0 652.0,555.0 635.0,535.0 615.0,512.0 590.0,493.0 560.0,482.0 518.0,472.0 540.0,440.0 567.0,410.0 600.0,373.0 633.0,340.0 668.0,308.0 669.7,300.0 673.0,288.0 681.0,280.0" fill="#ff00ff"/><polygon points="1180.0,370.0 1210.0,387.0 1241.0,401.0 1272.0,410.0 1304.0,420.0 1335.0,427.0 1366.0,432.0 1397.0,435.0 1413.0,437.0 1391.0,459.0 1366.0,490.0 1335.0,521.0 1319.0,540.0 1304.0,560.0 1285.0,585.0 1269.0,606.0 1250.0,632.0 1232.0,660.0 1210.0,695.0 1191.0,720.0 1172.0,745.0 1148.0,768.0 1130.0,762.0 1113.0,754.5 1097.0,747.0 1078.0,737.5 1060.0,728.0 1041.0,720.0 1022.0,716.5 1000.0,714.0 982.0,710.0 1000.0,682.0 1019.0,645.0 1035.0,614.0 1050.0,582.0 1060.0,559.0 1069.0,537.0 1085.0,509.0 1097.0,487.0 1113.0,456.0 1135.0,434.0 1160.0,402.0 1180.0,370.0" fill="#d2d2d2"/><polygon points="1413.0,438.0 1450.0,453.0 1483.0,468.0 1515.0,478.0 1548.0,487.0 1548.0,842.0 1344.0,842.0 1304.0,814.0 1272.0,798.0 1241.0,785.0 1210.0,776.0 1179.0,773.0 1148.0,768.0 1172.0,745.0 1191.0,720.0 1210.0,695.0 1232.0,660.0 1250.0,632.0 1269.0,606.0 1285.0,585.0 1304.0,560.0 1319.0,540.0 1335.0,521.0 1366.0,490.0 1391.0,459.0 1413.0,437.0" fill="#9c2a4e"/><g clip-path="url(#c1)"><rect x="450" y="230" width="260" height="250" fill="url(#r1a)"/><rect x="450" y="230" width="260" height="250" fill="url(#r1b)"/></g><g clip-path="url(#c4)"><rect x="1140" y="430" width="410" height="415" fill="url(#r4a)"/><rect x="1140" y="430" width="410" height="415" fill="url(#r4b)"/></g><g clip-path="url(#c4)"><polygon points="1413,438 1391,459 1366,490 1335,521 1304,560 1269,606 1232,660 1262,668 1300,625 1340,585 1375,550 1400,525 1416,512 1428,470" fill="url(#r4c)"/><polygon points="1413,438 1391,459 1366,490 1345,512 1380,530 1416,514 1440,488 1470,474 1500,476 1548,497 1548,487 1483,468" fill="url(#r4d)"/></g><g clip-path="url(#c2)" fill="none" stroke="#000" stroke-width="1"><path d="M668.0 308.0 L664.6 311.1 L661.1 314.3 L657.7 317.4 L654.3 320.5 L650.9 323.7 L647.4 326.8 L644.0 329.9 L640.6 333.1 L637.2 336.2 L633.7 339.3 L630.4 342.6 L627.1 345.9 L623.9 349.1 L620.6 352.4 L617.3 355.7 L614.0 359.0 L610.7 362.3 L607.4 365.6 L604.2 368.8 L600.9 372.1 L597.7 375.5 L594.6 379.0 L591.5 382.5 L588.5 385.9 L585.4 389.4 L582.3 392.9 L579.2 396.3 L576.1 399.8 L573.0 403.3 L569.9 406.7 L566.8 410.2 L563.7 413.6 L560.6 417.1 L557.5 420.5 L554.4 424.0 L551.3 427.5 L548.2 430.9 L545.1 434.4 L542.0 437.8 L539.0 441.4 L536.4 445.2 L533.8 449.0 L531.2 452.9 L528.5 456.7 L525.9 460.5 L523.3 464.3 L520.6 468.2 L518.0 472.0"/><path d="M676.3 306.7 L672.9 310.0 L669.4 313.3 L666.0 316.6 L662.6 320.0 L659.2 323.3 L655.7 326.6 L652.3 329.9 L648.9 333.3 L645.5 336.6 L642.1 340.0 L638.9 343.4 L635.6 347.0 L632.4 350.5 L629.2 354.0 L626.0 357.5 L622.8 361.1 L619.6 364.6 L616.4 368.2 L613.2 371.7 L610.0 375.3 L607.0 379.0 L604.0 382.8 L601.1 386.5 L598.1 390.3 L595.2 394.1 L592.2 397.9 L589.3 401.7 L586.4 405.5 L583.5 409.3 L580.6 413.2 L577.7 417.0 L574.8 420.8 L571.9 424.7 L569.0 428.5 L566.1 432.4 L563.2 436.3 L560.4 440.2 L557.5 444.1 L554.7 448.0 L552.0 452.0 L549.7 456.3 L547.3 460.6 L544.9 464.9 L542.6 469.2 L540.3 473.6 L538.0 477.9 L535.7 482.2 L533.4 486.6"/><path d="M684.8 308.1 L681.4 311.4 L677.9 314.8 L674.5 318.2 L671.0 321.6 L667.6 325.0 L664.2 328.4 L660.8 331.8 L657.4 335.2 L654.0 338.6 L650.6 342.1 L647.3 345.6 L644.1 349.3 L640.9 352.9 L637.7 356.5 L634.5 360.2 L631.3 363.9 L628.1 367.5 L625.0 371.2 L621.8 374.9 L618.7 378.7 L615.7 382.5 L612.7 386.5 L609.8 390.4 L606.9 394.4 L604.0 398.3 L601.1 402.3 L598.3 406.3 L595.4 410.4 L592.6 414.4 L589.7 418.5 L586.9 422.5 L584.1 426.6 L581.3 430.7 L578.5 434.8 L575.7 438.9 L572.9 443.1 L570.2 447.2 L567.4 451.4 L564.7 455.6 L562.1 460.0 L559.9 464.5 L557.6 469.1 L555.4 473.8 L553.2 478.4 L551.0 483.1 L548.8 487.7 L546.6 492.4 L544.4 497.1"/><path d="M693.5 307.4 L690.0 310.9 L686.6 314.4 L683.1 317.9 L679.6 321.4 L676.2 324.9 L672.7 328.5 L669.3 332.1 L665.9 335.7 L662.5 339.3 L659.1 342.9 L655.8 346.6 L652.6 350.4 L649.4 354.2 L646.2 358.0 L643.0 361.8 L639.8 365.7 L636.6 369.5 L633.5 373.4 L630.3 377.3 L627.2 381.2 L624.2 385.3 L621.3 389.4 L618.4 393.6 L615.5 397.7 L612.7 401.9 L609.8 406.1 L607.0 410.3 L604.1 414.6 L601.3 418.8 L598.5 423.1 L595.7 427.4 L593.0 431.7 L590.2 436.1 L587.5 440.4 L584.7 444.8 L582.0 449.2 L579.3 453.6 L576.6 458.1 L574.0 462.5 L571.5 467.1 L569.3 472.0 L567.1 476.9 L564.9 481.7 L562.8 486.7 L560.6 491.6 L558.5 496.6 L556.4 501.6 L554.3 506.6"/><path d="M702.2 306.1 L698.7 309.7 L695.2 313.4 L691.7 317.1 L688.2 320.8 L684.8 324.5 L681.3 328.2 L677.9 332.0 L674.4 335.7 L671.0 339.5 L667.6 343.3 L664.3 347.2 L661.1 351.2 L657.9 355.1 L654.6 359.1 L651.4 363.2 L648.3 367.2 L645.1 371.2 L641.9 375.3 L638.8 379.4 L635.7 383.5 L632.7 387.8 L629.8 392.1 L626.9 396.4 L624.0 400.8 L621.1 405.2 L618.3 409.6 L615.5 414.0 L612.7 418.5 L609.9 423.0 L607.1 427.5 L604.3 432.0 L601.6 436.5 L598.9 441.1 L596.1 445.7 L593.5 450.3 L590.8 455.0 L588.1 459.6 L585.5 464.3 L582.9 469.0 L580.4 473.9 L578.2 479.0 L576.1 484.1 L573.9 489.3 L571.8 494.4 L569.7 499.6 L567.6 504.9 L565.6 510.1 L563.5 515.4"/><path d="M710.9 304.3 L707.4 308.2 L703.8 312.0 L700.3 315.9 L696.8 319.8 L693.3 323.7 L689.9 327.6 L686.4 331.5 L683.0 335.5 L679.5 339.5 L676.1 343.4 L672.8 347.5 L669.6 351.7 L666.3 355.9 L663.1 360.1 L659.9 364.3 L656.7 368.5 L653.5 372.7 L650.4 377.0 L647.2 381.3 L644.1 385.6 L641.1 390.1 L638.2 394.6 L635.3 399.1 L632.4 403.7 L629.6 408.3 L626.7 412.9 L623.9 417.6 L621.1 422.2 L618.3 426.9 L615.5 431.6 L612.8 436.4 L610.0 441.2 L607.3 445.9 L604.6 450.8 L601.9 455.6 L599.3 460.5 L596.6 465.4 L594.0 470.3 L591.4 475.3 L589.0 480.4 L586.8 485.7 L584.7 491.1 L582.6 496.5 L580.5 501.9 L578.4 507.3 L576.3 512.8 L574.3 518.3 L572.2 523.9"/><path d="M719.5 302.2 L716.0 306.3 L712.5 310.3 L708.9 314.4 L705.4 318.5 L701.9 322.6 L698.4 326.7 L695.0 330.8 L691.5 335.0 L688.1 339.2 L684.7 343.3 L681.3 347.7 L678.1 352.0 L674.8 356.4 L671.6 360.8 L668.3 365.2 L665.1 369.6 L661.9 374.0 L658.8 378.5 L655.6 383.0 L652.5 387.5 L649.5 392.2 L646.6 396.9 L643.7 401.7 L640.8 406.5 L637.9 411.3 L635.1 416.1 L632.2 420.9 L629.4 425.8 L626.6 430.7 L623.9 435.7 L621.1 440.6 L618.4 445.6 L615.7 450.6 L613.0 455.7 L610.3 460.7 L607.6 465.8 L605.0 471.0 L602.4 476.1 L599.8 481.3 L597.4 486.7 L595.2 492.2 L593.0 497.8 L590.9 503.4 L588.8 509.1 L586.7 514.8 L584.7 520.5 L582.6 526.3 L580.6 532.1"/><path d="M728.2 299.8 L724.6 304.0 L721.1 308.3 L717.5 312.6 L714.0 316.9 L710.5 321.2 L707.0 325.6 L703.5 329.9 L700.1 334.3 L696.6 338.7 L693.2 343.1 L689.8 347.6 L686.6 352.1 L683.3 356.7 L680.0 361.3 L676.8 365.9 L673.6 370.5 L670.4 375.2 L667.2 379.9 L664.0 384.6 L660.9 389.3 L657.9 394.2 L654.9 399.1 L652.0 404.1 L649.1 409.1 L646.2 414.1 L643.4 419.1 L640.5 424.2 L637.7 429.3 L634.9 434.4 L632.1 439.5 L629.4 444.7 L626.6 449.9 L623.9 455.2 L621.2 460.4 L618.5 465.7 L615.9 471.0 L613.2 476.4 L610.6 481.8 L608.0 487.2 L605.6 492.8 L603.4 498.5 L601.3 504.4 L599.1 510.2 L597.0 516.1 L594.9 522.0 L592.8 528.0 L590.8 533.9 L588.7 540.0"/><path d="M736.9 297.3 L733.3 301.8 L729.8 306.3 L726.2 310.8 L722.7 315.3 L719.2 319.8 L715.6 324.4 L712.2 328.9 L708.7 333.5 L705.2 338.1 L701.8 342.7 L698.4 347.4 L695.1 352.2 L691.8 357.0 L688.5 361.8 L685.3 366.6 L682.0 371.4 L678.8 376.3 L675.6 381.2 L672.4 386.1 L669.3 391.0 L666.3 396.1 L663.3 401.3 L660.4 406.4 L657.5 411.6 L654.6 416.8 L651.7 422.1 L648.8 427.3 L646.0 432.6 L643.2 438.0 L640.4 443.3 L637.6 448.7 L634.9 454.1 L632.1 459.6 L629.4 465.1 L626.7 470.6 L624.1 476.1 L621.4 481.7 L618.8 487.3 L616.2 492.9 L613.8 498.7 L611.5 504.7 L609.4 510.7 L607.2 516.8 L605.1 522.9 L602.9 529.0 L600.8 535.2 L598.8 541.4 L596.7 547.7"/><path d="M745.8 295.4 L742.2 300.0 L738.6 304.7 L735.1 309.4 L731.5 314.1 L728.0 318.8 L724.4 323.6 L720.9 328.3 L717.4 333.1 L714.0 337.9 L710.5 342.7 L707.1 347.6 L703.8 352.5 L700.5 357.5 L697.2 362.5 L693.9 367.5 L690.6 372.5 L687.4 377.6 L684.2 382.6 L681.0 387.7 L677.8 392.9 L674.8 398.1 L671.8 403.5 L668.8 408.8 L665.9 414.2 L663.0 419.6 L660.1 425.0 L657.2 430.5 L654.3 436.0 L651.5 441.5 L648.7 447.1 L645.9 452.7 L643.1 458.3 L640.4 463.9 L637.7 469.6 L635.0 475.3 L632.3 481.1 L629.6 486.8 L627.0 492.7 L624.3 498.5 L621.9 504.5 L619.6 510.7 L617.4 516.9 L615.2 523.2 L613.1 529.5 L610.9 535.8 L608.8 542.2 L606.7 548.6 L604.6 555.1"/><path d="M754.8 293.4 L751.2 298.3 L747.6 303.1 L744.0 308.0 L740.4 312.9 L736.9 317.8 L733.3 322.8 L729.8 327.7 L726.3 332.7 L722.8 337.6 L719.3 342.6 L715.9 347.7 L712.6 352.8 L709.2 358.0 L705.9 363.2 L702.6 368.3 L699.3 373.5 L696.0 378.8 L692.8 384.0 L689.6 389.3 L686.4 394.7 L683.3 400.1 L680.3 405.6 L677.3 411.2 L674.3 416.7 L671.4 422.3 L668.5 427.9 L665.6 433.6 L662.7 439.3 L659.8 445.0 L657.0 450.7 L654.2 456.5 L651.4 462.3 L648.6 468.2 L645.9 474.1 L643.2 480.0 L640.5 485.9 L637.8 491.9 L635.1 497.9 L632.5 504.0 L630.0 510.1 L627.7 516.5 L625.5 523.0 L623.2 529.4 L621.0 535.9 L618.8 542.5 L616.7 549.0 L614.5 555.7 L612.4 562.4"/><path d="M763.9 291.9 L760.3 296.9 L756.7 301.9 L753.1 307.0 L749.5 312.0 L745.9 317.1 L742.4 322.2 L738.8 327.3 L735.3 332.5 L731.8 337.6 L728.2 342.8 L724.8 348.0 L721.4 353.3 L718.1 358.7 L714.7 364.0 L711.4 369.4 L708.1 374.7 L704.7 380.1 L701.5 385.6 L698.2 391.0 L695.0 396.5 L691.9 402.2 L688.9 407.8 L685.9 413.6 L682.9 419.3 L679.9 425.1 L676.9 430.9 L674.0 436.7 L671.1 442.6 L668.2 448.5 L665.3 454.4 L662.5 460.4 L659.7 466.4 L656.9 472.4 L654.1 478.5 L651.4 484.6 L648.6 490.7 L645.9 496.9 L643.2 503.1 L640.6 509.4 L638.0 515.7 L635.7 522.3 L633.4 528.9 L631.1 535.6 L628.9 542.3 L626.7 549.0 L624.4 555.8 L622.2 562.6 L620.1 569.5"/><path d="M773.1 290.4 L769.5 295.6 L765.9 300.8 L762.3 306.0 L758.7 311.2 L755.1 316.5 L751.5 321.7 L747.9 327.0 L744.4 332.3 L740.8 337.6 L737.3 343.0 L733.8 348.4 L730.4 353.9 L727.0 359.3 L723.6 364.9 L720.2 370.4 L716.9 375.9 L713.5 381.5 L710.2 387.1 L706.9 392.7 L703.7 398.4 L700.6 404.2 L697.5 410.1 L694.4 416.0 L691.4 421.9 L688.4 427.8 L685.4 433.8 L682.4 439.8 L679.5 445.9 L676.5 451.9 L673.6 458.1 L670.8 464.2 L667.9 470.4 L665.1 476.6 L662.3 482.9 L659.5 489.2 L656.7 495.5 L654.0 501.9 L651.3 508.3 L648.6 514.8 L646.0 521.3 L643.6 528.1 L641.3 534.9 L638.9 541.8 L636.6 548.7 L634.4 555.6 L632.1 562.6 L629.8 569.6 L627.6 576.7"/><path d="M782.6 290.4 L778.9 295.7 L775.3 301.0 L771.7 306.3 L768.0 311.6 L764.4 317.0 L760.8 322.3 L757.2 327.7 L753.6 333.1 L750.0 338.6 L746.5 344.0 L743.0 349.6 L739.5 355.2 L736.1 360.8 L732.7 366.4 L729.2 372.0 L725.8 377.7 L722.4 383.4 L719.1 389.1 L715.8 394.9 L712.5 400.7 L709.3 406.7 L706.2 412.7 L703.1 418.7 L700.0 424.8 L697.0 430.9 L693.9 437.0 L690.9 443.2 L687.9 449.4 L684.9 455.6 L682.0 461.9 L679.1 468.2 L676.2 474.6 L673.4 481.0 L670.5 487.4 L667.7 493.9 L664.9 500.4 L662.1 506.9 L659.3 513.5 L656.6 520.2 L653.9 526.9 L651.5 533.9 L649.1 540.9 L646.7 547.9 L644.3 555.0 L642.0 562.1 L639.6 569.3 L637.3 576.5 L635.0 583.8"/><path d="M792.1 290.4 L788.5 295.8 L784.8 301.1 L781.1 306.6 L777.5 312.0 L773.8 317.5 L770.2 322.9 L766.6 328.4 L763.0 334.0 L759.4 339.5 L755.7 345.1 L752.2 350.7 L748.7 356.4 L745.3 362.2 L741.8 367.9 L738.3 373.7 L734.9 379.5 L731.4 385.3 L728.0 391.1 L724.7 397.0 L721.4 403.0 L718.2 409.1 L715.0 415.2 L711.9 421.4 L708.7 427.6 L705.6 433.9 L702.6 440.1 L699.5 446.4 L696.5 452.8 L693.4 459.2 L690.5 465.6 L687.5 472.1 L684.6 478.7 L681.7 485.2 L678.8 491.8 L675.9 498.5 L673.1 505.2 L670.2 511.9 L667.4 518.7 L664.6 525.5 L661.9 532.4 L659.4 539.6 L656.9 546.7 L654.5 554.0 L652.1 561.2 L649.7 568.6 L647.2 575.9 L644.8 583.3 L642.5 590.8"/><path d="M801.6 292.1 L798.0 297.5 L794.3 302.9 L790.6 308.3 L786.9 313.8 L783.3 319.3 L779.6 324.8 L776.0 330.4 L772.3 335.9 L768.7 341.5 L765.1 347.1 L761.5 352.9 L758.0 358.6 L754.5 364.4 L751.0 370.2 L747.5 376.1 L744.0 381.9 L740.5 387.8 L737.0 393.7 L733.6 399.7 L730.3 405.8 L727.1 412.0 L723.9 418.2 L720.7 424.5 L717.5 430.8 L714.4 437.1 L711.2 443.5 L708.1 450.0 L705.0 456.4 L702.0 463.0 L699.0 469.5 L696.0 476.2 L693.0 482.8 L690.1 489.5 L687.1 496.3 L684.2 503.1 L681.3 509.9 L678.4 516.8 L675.6 523.8 L672.7 530.8 L670.0 537.9 L667.4 545.2 L664.9 552.5 L662.4 559.9 L659.9 567.4 L657.4 574.9 L654.9 582.4 L652.4 590.0 L649.9 597.7"/><path d="M811.3 293.9 L807.6 299.3 L803.9 304.7 L800.2 310.1 L796.5 315.6 L792.8 321.1 L789.1 326.7 L785.5 332.3 L781.8 337.9 L778.2 343.5 L774.5 349.2 L770.9 355.0 L767.3 360.8 L763.8 366.6 L760.3 372.5 L756.7 378.4 L753.2 384.3 L749.7 390.3 L746.2 396.3 L742.7 402.4 L739.3 408.5 L736.1 414.8 L732.8 421.1 L729.6 427.5 L726.4 433.9 L723.2 440.4 L720.1 446.9 L716.9 453.4 L713.8 460.0 L710.6 466.7 L707.6 473.4 L704.6 480.1 L701.6 486.9 L698.6 493.8 L695.6 500.7 L692.6 507.6 L689.7 514.6 L686.8 521.7 L683.8 528.8 L680.9 535.9 L678.1 543.2 L675.5 550.7 L672.9 558.2 L670.3 565.7 L667.8 573.3 L665.2 581.0 L662.6 588.7 L660.1 596.5 L657.5 604.4"/><path d="M821.1 295.5 L817.4 300.9 L813.7 306.3 L810.0 311.8 L806.2 317.3 L802.5 322.9 L798.8 328.5 L795.1 334.1 L791.5 339.8 L787.8 345.5 L784.1 351.2 L780.5 357.0 L776.9 362.9 L773.3 368.8 L769.7 374.7 L766.1 380.7 L762.5 386.7 L759.0 392.7 L755.4 398.8 L751.9 404.9 L748.5 411.2 L745.2 417.5 L741.9 424.0 L738.7 430.4 L735.4 437.0 L732.2 443.5 L729.0 450.1 L725.8 456.8 L722.6 463.5 L719.4 470.3 L716.4 477.1 L713.3 484.0 L710.3 490.9 L707.2 497.9 L704.2 505.0 L701.2 512.0 L698.2 519.2 L695.2 526.4 L692.3 533.6 L689.3 541.0 L686.5 548.4 L683.8 556.0 L681.1 563.7 L678.4 571.4 L675.8 579.2 L673.2 587.0 L670.6 594.9 L667.9 602.8 L665.3 610.9"/><path d="M830.6 298.3 L827.0 303.6 L823.3 309.0 L819.5 314.5 L815.8 320.0 L812.1 325.5 L808.4 331.1 L804.7 336.8 L801.0 342.4 L797.3 348.1 L793.6 353.8 L790.0 359.7 L786.4 365.6 L782.8 371.5 L779.2 377.5 L775.5 383.4 L771.9 389.5 L768.3 395.5 L764.7 401.6 L761.2 407.8 L757.8 414.1 L754.4 420.6 L751.1 427.1 L747.8 433.6 L744.6 440.2 L741.3 446.8 L738.0 453.5 L734.8 460.3 L731.6 467.1 L728.4 473.9 L725.3 480.9 L722.2 487.9 L719.1 494.9 L716.0 502.0 L713.0 509.2 L709.9 516.4 L706.9 523.7 L703.9 531.0 L700.9 538.4 L697.9 545.8 L695.0 553.4 L692.2 561.2 L689.5 569.0 L686.8 576.8 L684.1 584.8 L681.4 592.8 L678.7 600.8 L676.0 608.9 L673.3 617.1"/><path d="M840.0 302.4 L836.4 307.6 L832.7 312.9 L829.0 318.3 L825.3 323.7 L821.6 329.2 L817.9 334.7 L814.2 340.3 L810.5 345.9 L806.8 351.6 L803.1 357.3 L799.5 363.0 L795.8 368.9 L792.2 374.8 L788.6 380.8 L785.0 386.7 L781.3 392.7 L777.7 398.8 L774.1 404.9 L770.5 411.1 L767.1 417.4 L763.7 423.9 L760.4 430.4 L757.1 437.0 L753.8 443.6 L750.5 450.3 L747.2 457.1 L743.9 463.9 L740.7 470.7 L737.5 477.6 L734.3 484.7 L731.2 491.7 L728.1 498.9 L725.0 506.1 L721.9 513.3 L718.8 520.7 L715.8 528.0 L712.7 535.5 L709.7 543.0 L706.7 550.6 L703.7 558.3 L700.9 566.1 L698.1 574.1 L695.3 582.1 L692.6 590.1 L689.9 598.3 L687.1 606.5 L684.3 614.7 L681.5 623.0"/><path d="M849.7 306.2 L846.1 311.3 L842.5 316.5 L838.8 321.8 L835.1 327.2 L831.4 332.6 L827.7 338.1 L824.0 343.6 L820.3 349.2 L816.6 354.8 L812.9 360.4 L809.2 366.2 L805.6 372.0 L802.0 377.9 L798.3 383.9 L794.7 389.8 L791.0 395.8 L787.3 401.9 L783.7 408.0 L780.1 414.2 L776.6 420.6 L773.3 427.1 L769.9 433.6 L766.6 440.2 L763.3 446.9 L759.9 453.6 L756.6 460.4 L753.3 467.3 L750.0 474.2 L746.8 481.2 L743.6 488.3 L740.5 495.5 L737.3 502.7 L734.2 510.0 L731.1 517.3 L728.0 524.8 L724.9 532.2 L721.8 539.8 L718.8 547.4 L715.7 555.1 L712.7 562.9 L709.8 570.9 L707.0 578.9 L704.2 587.1 L701.4 595.3 L698.6 603.5 L695.7 611.8 L692.9 620.2 L690.1 628.7"/><path d="M859.5 310.3 L855.9 315.3 L852.3 320.4 L848.6 325.6 L845.0 330.9 L841.3 336.2 L837.6 341.6 L833.9 347.1 L830.3 352.6 L826.6 358.2 L822.8 363.8 L819.2 369.6 L815.5 375.3 L811.8 381.2 L808.2 387.1 L804.5 393.1 L800.8 399.0 L797.1 405.1 L793.4 411.2 L789.8 417.4 L786.4 423.8 L783.0 430.3 L779.6 436.9 L776.3 443.5 L772.9 450.2 L769.6 457.0 L766.2 463.8 L762.9 470.7 L759.6 477.7 L756.3 484.8 L753.1 491.9 L750.0 499.2 L746.8 506.5 L743.7 513.8 L740.5 521.3 L737.4 528.8 L734.3 536.4 L731.2 544.0 L728.1 551.7 L724.9 559.5 L721.9 567.4 L719.0 575.5 L716.1 583.7 L713.2 591.9 L710.4 600.2 L707.5 608.6 L704.6 617.1 L701.7 625.6 L698.8 634.1"/><path d="M868.7 316.3 L865.2 321.0 L861.6 326.0 L858.0 331.0 L854.4 336.1 L850.8 341.3 L847.2 346.6 L843.5 351.9 L839.9 357.3 L836.2 362.8 L832.5 368.3 L828.9 373.9 L825.2 379.6 L821.6 385.4 L817.9 391.2 L814.3 397.1 L810.5 403.0 L806.8 408.9 L803.1 415.0 L799.5 421.2 L796.1 427.5 L792.7 434.0 L789.4 440.5 L786.0 447.2 L782.6 453.9 L779.3 460.6 L776.0 467.5 L772.6 474.4 L769.3 481.4 L766.0 488.5 L762.8 495.7 L759.6 502.9 L756.5 510.3 L753.3 517.7 L750.2 525.2 L747.0 532.8 L743.9 540.5 L740.7 548.2 L737.6 556.0 L734.4 563.9 L731.4 571.9 L728.4 580.1 L725.5 588.3 L722.6 596.6 L719.7 605.1 L716.8 613.6 L713.8 622.1 L710.8 630.7 L707.8 639.4"/><path d="M878.2 322.4 L874.7 327.0 L871.2 331.7 L867.7 336.6 L864.1 341.5 L860.6 346.5 L857.0 351.6 L853.4 356.8 L849.8 362.1 L846.2 367.5 L842.5 372.8 L838.9 378.3 L835.2 383.9 L831.6 389.6 L828.0 395.3 L824.3 401.1 L820.6 406.9 L816.9 412.8 L813.2 418.8 L809.6 424.9 L806.1 431.2 L802.8 437.7 L799.4 444.2 L796.0 450.8 L792.7 457.5 L789.3 464.3 L786.0 471.1 L782.6 478.1 L779.3 485.1 L775.9 492.1 L772.8 499.4 L769.6 506.7 L766.4 514.1 L763.3 521.6 L760.1 529.1 L756.9 536.8 L753.8 544.5 L750.6 552.3 L747.5 560.2 L744.3 568.1 L741.2 576.2 L738.2 584.5 L735.2 592.8 L732.2 601.2 L729.3 609.7 L726.3 618.4 L723.3 627.0 L720.2 635.7 L717.2 644.5"/><path d="M887.7 329.2 L884.3 333.5 L880.9 338.0 L877.5 342.7 L874.0 347.4 L870.5 352.3 L867.0 357.2 L863.5 362.2 L859.9 367.4 L856.3 372.5 L852.7 377.8 L849.1 383.2 L845.5 388.6 L841.9 394.2 L838.3 399.8 L834.6 405.5 L830.9 411.2 L827.2 417.0 L823.5 422.8 L819.9 428.9 L816.5 435.2 L813.1 441.6 L809.8 448.1 L806.4 454.6 L803.1 461.3 L799.7 468.0 L796.4 474.9 L793.0 481.8 L789.6 488.8 L786.3 495.9 L783.1 503.1 L779.9 510.5 L776.8 517.9 L773.6 525.4 L770.4 533.0 L767.2 540.7 L764.1 548.5 L760.9 556.3 L757.7 564.3 L754.5 572.3 L751.4 580.5 L748.3 588.8 L745.3 597.2 L742.3 605.7 L739.3 614.3 L736.3 623.0 L733.2 631.7 L730.0 640.5 L726.9 649.5"/><path d="M896.4 337.9 L893.2 341.9 L890.0 346.1 L886.7 350.4 L883.3 354.9 L879.9 359.5 L876.5 364.2 L873.1 369.0 L869.7 373.9 L866.2 378.8 L862.7 383.9 L859.1 389.0 L855.6 394.3 L852.1 399.7 L848.5 405.1 L844.9 410.6 L841.2 416.2 L837.6 421.8 L833.9 427.6 L830.3 433.5 L827.0 439.7 L823.6 446.0 L820.3 452.4 L817.0 458.9 L813.7 465.5 L810.4 472.1 L807.1 478.9 L803.7 485.8 L800.4 492.8 L797.0 499.8 L793.9 507.1 L790.7 514.4 L787.6 521.8 L784.4 529.4 L781.2 537.0 L778.1 544.7 L774.9 552.5 L771.7 560.4 L768.5 568.4 L765.3 576.5 L762.1 584.7 L759.0 593.1 L755.9 601.6 L752.9 610.2 L749.8 618.9 L746.8 627.6 L743.6 636.4 L740.4 645.3 L737.2 654.3"/><path d="M905.6 347.5 L902.7 351.1 L899.6 354.9 L896.4 358.9 L893.3 363.1 L890.0 367.4 L886.8 371.8 L883.5 376.3 L880.2 381.0 L876.8 385.7 L873.4 390.5 L869.9 395.4 L866.5 400.5 L863.0 405.6 L859.5 410.9 L856.0 416.2 L852.4 421.6 L848.7 427.0 L845.1 432.6 L841.6 438.4 L838.3 444.5 L835.0 450.6 L831.8 457.0 L828.5 463.4 L825.2 469.9 L821.9 476.5 L818.6 483.2 L815.3 490.0 L812.0 496.9 L808.6 503.9 L805.5 511.2 L802.4 518.5 L799.2 525.9 L796.1 533.5 L792.9 541.1 L789.7 548.9 L786.6 556.7 L783.4 564.6 L780.2 572.7 L776.9 580.8 L773.7 589.1 L770.6 597.5 L767.5 606.0 L764.4 614.7 L761.3 623.4 L758.2 632.3 L754.9 641.2 L751.6 650.2 L748.4 659.2"/><path d="M916.6 359.9 L913.9 363.0 L911.1 366.4 L908.1 370.0 L905.2 373.7 L902.2 377.6 L899.1 381.7 L896.0 385.8 L892.9 390.1 L889.7 394.5 L886.4 399.0 L883.1 403.6 L879.7 408.4 L876.4 413.2 L873.0 418.2 L869.6 423.3 L866.0 428.4 L862.4 433.6 L858.8 438.9 L855.4 444.5 L852.2 450.4 L849.0 456.5 L845.8 462.6 L842.6 468.9 L839.4 475.3 L836.2 481.8 L832.9 488.4 L829.6 495.1 L826.3 502.0 L823.0 508.9 L819.9 516.1 L816.8 523.4 L813.7 530.8 L810.6 538.3 L807.5 546.0 L804.3 553.7 L801.1 561.6 L797.9 569.6 L794.7 577.6 L791.4 585.8 L788.2 594.1 L785.0 602.6 L781.8 611.2 L778.7 619.9 L775.5 628.7 L772.3 637.7 L769.0 646.6 L765.6 655.7 L762.2 664.8"/><path d="M928.5 371.3 L926.1 373.9 L923.4 376.9 L920.7 380.0 L917.9 383.4 L915.1 386.9 L912.2 390.6 L909.2 394.4 L906.3 398.4 L903.2 402.5 L900.0 406.7 L896.8 411.1 L893.5 415.5 L890.3 420.2 L887.0 424.9 L883.6 429.7 L880.1 434.6 L876.5 439.6 L872.9 444.7 L869.6 450.1 L866.4 455.9 L863.3 461.8 L860.2 467.8 L857.0 474.0 L853.8 480.2 L850.6 486.6 L847.4 493.2 L844.1 499.8 L840.8 506.6 L837.5 513.5 L834.5 520.6 L831.4 527.9 L828.3 535.3 L825.2 542.8 L822.1 550.5 L818.9 558.2 L815.7 566.1 L812.5 574.1 L809.3 582.2 L806.0 590.4 L802.7 598.8 L799.5 607.3 L796.2 615.9 L793.0 624.7 L789.7 633.6 L786.5 642.6 L783.0 651.6 L779.6 660.7 L776.1 670.0"/><path d="M940.1 378.0 L937.7 380.3 L935.1 383.0 L932.5 386.0 L929.8 389.1 L927.0 392.5 L924.1 396.0 L921.3 399.6 L918.3 403.5 L915.2 407.4 L912.1 411.4 L908.9 415.6 L905.7 420.0 L902.4 424.4 L899.1 429.1 L895.7 433.8 L892.1 438.5 L888.6 443.4 L885.0 448.4 L881.6 453.7 L878.5 459.4 L875.3 465.2 L872.2 471.2 L869.1 477.3 L865.9 483.6 L862.6 489.9 L859.4 496.4 L856.1 503.0 L852.8 509.8 L849.4 516.7 L846.3 523.8 L843.3 531.1 L840.2 538.5 L837.1 546.0 L833.9 553.7 L830.7 561.5 L827.5 569.4 L824.3 577.4 L821.0 585.6 L817.7 593.8 L814.3 602.2 L811.1 610.8 L807.8 619.5 L804.5 628.3 L801.2 637.2 L797.9 646.3 L794.3 655.3 L790.7 664.5 L787.2 673.8"/><path d="M951.0 383.5 L948.7 385.7 L946.3 388.2 L943.7 390.9 L941.0 393.9 L938.3 397.1 L935.5 400.4 L932.6 403.9 L929.7 407.6 L926.6 411.4 L923.5 415.3 L920.3 419.4 L917.1 423.7 L913.8 428.0 L910.5 432.6 L907.0 437.1 L903.5 441.8 L899.8 446.6 L896.2 451.5 L892.8 456.7 L889.7 462.4 L886.5 468.2 L883.4 474.1 L880.2 480.2 L877.0 486.4 L873.8 492.7 L870.5 499.2 L867.2 505.8 L863.8 512.5 L860.5 519.4 L857.4 526.5 L854.3 533.8 L851.2 541.3 L848.1 548.8 L844.9 556.5 L841.7 564.3 L838.4 572.2 L835.2 580.3 L831.9 588.5 L828.5 596.8 L825.1 605.2 L821.8 613.8 L818.4 622.5 L815.1 631.4 L811.7 640.3 L808.3 649.5 L804.7 658.5 L801.0 667.7 L797.4 677.0"/><path d="M962.1 387.2 L959.9 389.2 L957.5 391.5 L954.9 394.2 L952.3 397.1 L949.5 400.1 L946.7 403.4 L943.9 406.8 L941.0 410.5 L937.9 414.2 L934.7 418.0 L931.5 422.1 L928.3 426.2 L925.0 430.6 L921.6 435.0 L918.1 439.6 L914.5 444.2 L910.8 448.9 L907.1 453.7 L903.7 459.0 L900.5 464.6 L897.4 470.4 L894.2 476.3 L891.0 482.4 L887.8 488.6 L884.5 494.9 L881.2 501.4 L877.8 508.0 L874.4 514.8 L871.0 521.6 L867.9 528.8 L864.9 536.2 L861.7 543.6 L858.6 551.2 L855.4 558.9 L852.1 566.8 L848.8 574.7 L845.5 582.8 L842.2 591.1 L838.8 599.4 L835.3 607.8 L831.9 616.5 L828.5 625.2 L825.1 634.1 L821.7 643.1 L818.3 652.3 L814.5 661.4 L810.8 670.6 L807.1 680.0"/><path d="M973.2 385.6 L971.0 387.7 L968.6 390.2 L966.1 392.9 L963.4 395.9 L960.7 399.1 L957.9 402.5 L955.0 406.0 L952.1 409.8 L949.0 413.6 L945.8 417.6 L942.6 421.7 L939.3 426.0 L935.9 430.4 L932.6 435.0 L929.0 439.6 L925.3 444.3 L921.6 449.1 L917.8 454.1 L914.3 459.4 L911.1 465.1 L907.9 471.0 L904.8 477.1 L901.5 483.2 L898.2 489.5 L894.9 496.0 L891.6 502.6 L888.2 509.3 L884.7 516.1 L881.3 523.1 L878.1 530.3 L875.0 537.7 L871.9 545.3 L868.7 553.0 L865.5 560.8 L862.2 568.7 L858.9 576.7 L855.5 584.9 L852.1 593.2 L848.7 601.6 L845.2 610.1 L841.7 618.8 L838.3 627.6 L834.8 636.5 L831.3 645.6 L827.8 654.8 L824.0 663.9 L820.2 673.2 L816.4 682.6"/><path d="M983.2 381.2 L981.0 383.4 L978.7 386.1 L976.2 389.1 L973.6 392.3 L970.9 395.7 L968.1 399.3 L965.3 403.1 L962.4 407.1 L959.3 411.2 L956.1 415.3 L952.8 419.6 L949.5 424.1 L946.2 428.8 L942.8 433.5 L939.2 438.3 L935.4 443.2 L931.7 448.1 L927.8 453.2 L924.3 458.7 L921.1 464.6 L917.9 470.7 L914.7 476.9 L911.5 483.3 L908.2 489.7 L904.9 496.3 L901.5 503.1 L898.0 509.9 L894.6 516.8 L891.1 523.9 L887.9 531.3 L884.8 538.9 L881.7 546.6 L878.5 554.4 L875.2 562.3 L871.9 570.3 L868.6 578.5 L865.2 586.7 L861.8 595.1 L858.2 603.6 L854.7 612.2 L851.2 620.9 L847.7 629.8 L844.2 638.8 L840.6 647.9 L837.1 657.1 L833.2 666.3 L829.3 675.6 L825.3 684.9"/><path d="M993.7 380.2 L991.6 382.5 L989.2 385.2 L986.7 388.3 L984.1 391.6 L981.4 395.1 L978.7 398.8 L975.8 402.7 L972.9 406.7 L969.8 410.9 L966.6 415.1 L963.3 419.5 L960.0 424.1 L956.6 428.8 L953.1 433.6 L949.5 438.5 L945.7 443.4 L941.8 448.4 L937.9 453.6 L934.3 459.2 L931.1 465.2 L927.9 471.3 L924.7 477.6 L921.4 484.1 L918.1 490.6 L914.7 497.3 L911.3 504.1 L907.8 511.0 L904.3 518.0 L900.8 525.2 L897.6 532.7 L894.4 540.3 L891.3 548.1 L888.0 555.9 L884.8 563.9 L881.4 572.0 L878.0 580.2 L874.6 588.5 L871.2 597.0 L867.6 605.5 L864.0 614.1 L860.4 622.9 L856.9 631.8 L853.3 640.9 L849.7 650.0 L846.1 659.3 L842.1 668.5 L838.1 677.8 L834.1 687.2"/><path d="M1004.1 379.9 L1002.0 382.1 L999.7 384.9 L997.2 388.0 L994.6 391.3 L991.9 394.9 L989.1 398.7 L986.3 402.6 L983.4 406.7 L980.2 410.9 L977.0 415.2 L973.6 419.7 L970.3 424.3 L966.8 429.1 L963.3 434.0 L959.6 438.9 L955.8 443.8 L951.8 448.9 L947.8 454.1 L944.2 459.7 L941.0 465.8 L937.8 472.0 L934.5 478.4 L931.2 484.9 L927.8 491.5 L924.4 498.2 L920.9 505.1 L917.4 512.1 L913.8 519.2 L910.2 526.4 L907.0 533.9 L903.9 541.6 L900.7 549.5 L897.4 557.4 L894.1 565.4 L890.7 573.6 L887.3 581.8 L883.8 590.2 L880.3 598.7 L876.7 607.3 L873.1 615.9 L869.5 624.8 L865.8 633.7 L862.2 642.8 L858.5 652.0 L854.9 661.3 L850.8 670.5 L846.7 679.8 L842.6 689.2"/><path d="M1014.3 379.5 L1012.3 381.8 L1010.0 384.6 L1007.5 387.7 L1004.9 391.1 L1002.2 394.7 L999.4 398.5 L996.6 402.5 L993.6 406.7 L990.5 411.0 L987.2 415.3 L983.8 419.8 L980.4 424.5 L976.9 429.3 L973.4 434.3 L969.6 439.2 L965.7 444.2 L961.7 449.3 L957.6 454.5 L953.9 460.2 L950.7 466.4 L947.4 472.7 L944.1 479.1 L940.8 485.7 L937.3 492.3 L933.9 499.1 L930.4 506.0 L926.8 513.1 L923.2 520.2 L919.5 527.5 L916.3 535.1 L913.1 542.9 L909.9 550.8 L906.6 558.7 L903.3 566.9 L899.9 575.1 L896.4 583.4 L892.9 591.8 L889.3 600.3 L885.7 608.9 L882.0 617.6 L878.3 626.5 L874.6 635.5 L870.9 644.6 L867.2 653.8 L863.5 663.1 L859.3 672.3 L855.1 681.6 L851.0 691.0"/><path d="M1024.4 379.2 L1022.4 381.5 L1020.1 384.3 L1017.6 387.4 L1015.1 390.9 L1012.4 394.5 L1009.6 398.4 L1006.7 402.4 L1003.7 406.6 L1000.6 411.0 L997.2 415.4 L993.8 419.9 L990.4 424.6 L986.8 429.5 L983.2 434.5 L979.4 439.5 L975.4 444.5 L971.3 449.6 L967.2 454.9 L963.4 460.6 L960.2 466.8 L956.9 473.2 L953.6 479.7 L950.2 486.3 L946.7 493.1 L943.2 499.9 L939.6 506.9 L936.0 514.0 L932.4 521.2 L928.7 528.5 L925.4 536.2 L922.2 544.0 L919.0 552.0 L915.6 560.0 L912.3 568.2 L908.8 576.4 L905.3 584.8 L901.8 593.3 L898.2 601.8 L894.5 610.5 L890.7 619.2 L887.0 628.1 L883.2 637.1 L879.5 646.3 L875.7 655.5 L871.9 664.9 L867.7 674.1 L863.4 683.4 L859.1 692.8"/><path d="M1034.3 378.7 L1032.3 381.0 L1030.1 383.9 L1027.6 387.1 L1025.0 390.5 L1022.3 394.2 L1019.5 398.1 L1016.7 402.2 L1013.7 406.5 L1010.5 410.9 L1007.1 415.3 L1003.7 419.9 L1000.2 424.7 L996.6 429.6 L993.0 434.7 L989.1 439.7 L985.0 444.7 L980.9 449.9 L976.6 455.2 L972.8 460.9 L969.5 467.2 L966.2 473.7 L962.9 480.2 L959.4 486.9 L955.9 493.7 L952.4 500.6 L948.8 507.6 L945.1 514.8 L941.4 522.0 L937.7 529.4 L934.4 537.1 L931.2 545.0 L927.9 553.0 L924.5 561.1 L921.2 569.4 L917.7 577.7 L914.1 586.1 L910.5 594.6 L906.9 603.2 L903.1 611.9 L899.3 620.7 L895.5 629.6 L891.7 638.6 L887.9 647.8 L884.1 657.0 L880.2 666.4 L875.9 675.6 L871.5 684.9 L867.2 694.3"/><path d="M1044.1 378.2 L1042.1 380.4 L1039.9 383.3 L1037.5 386.5 L1034.9 390.0 L1032.2 393.8 L1029.4 397.7 L1026.5 401.9 L1023.5 406.2 L1020.3 410.6 L1016.9 415.1 L1013.4 419.8 L1009.9 424.6 L1006.3 429.6 L1002.6 434.7 L998.6 439.8 L994.5 444.8 L990.3 450.0 L986.0 455.4 L982.1 461.2 L978.8 467.5 L975.4 474.0 L972.0 480.7 L968.6 487.4 L965.0 494.3 L961.5 501.2 L957.8 508.3 L954.1 515.5 L950.3 522.8 L946.6 530.2 L943.3 538.0 L940.0 546.0 L936.7 554.0 L933.3 562.2 L929.9 570.5 L926.4 578.8 L922.8 587.3 L919.2 595.8 L915.5 604.5 L911.6 613.2 L907.8 622.0 L903.9 631.0 L900.1 640.0 L896.2 649.2 L892.3 658.5 L888.4 667.9 L884.0 677.1 L879.5 686.4 L875.1 695.8"/><path d="M1053.7 377.6 L1051.8 379.9 L1049.6 382.7 L1047.2 386.0 L1044.6 389.5 L1041.9 393.3 L1039.1 397.3 L1036.2 401.5 L1033.2 405.9 L1030.0 410.4 L1026.6 414.9 L1023.0 419.6 L1019.5 424.5 L1015.8 429.5 L1012.1 434.7 L1008.1 439.8 L1003.8 444.9 L999.5 450.1 L995.2 455.5 L991.3 461.3 L987.9 467.7 L984.5 474.3 L981.1 481.0 L977.6 487.8 L974.0 494.7 L970.4 501.7 L966.7 508.9 L963.0 516.1 L959.2 523.4 L955.3 530.9 L952.0 538.8 L948.7 546.8 L945.4 554.9 L942.0 563.1 L938.5 571.4 L935.0 579.8 L931.3 588.3 L927.7 596.9 L923.9 605.6 L920.1 614.3 L916.2 623.2 L912.2 632.2 L908.3 641.2 L904.4 650.4 L900.4 659.7 L896.4 669.1 L891.9 678.3 L887.4 687.7 L882.8 697.1"/><path d="M1063.2 377.0 L1061.4 379.3 L1059.2 382.2 L1056.8 385.4 L1054.2 389.0 L1051.6 392.8 L1048.8 396.9 L1045.8 401.1 L1042.9 405.6 L1039.6 410.1 L1036.1 414.7 L1032.6 419.5 L1028.9 424.4 L1025.2 429.4 L1021.5 434.6 L1017.4 439.8 L1013.1 444.9 L1008.7 450.2 L1004.3 455.5 L1000.3 461.4 L996.9 467.9 L993.5 474.5 L990.1 481.3 L986.6 488.2 L982.9 495.1 L979.3 502.2 L975.5 509.4 L971.7 516.7 L967.9 524.1 L964.0 531.6 L960.6 539.5 L957.3 547.5 L954.0 555.7 L950.5 564.0 L947.1 572.3 L943.4 580.8 L939.8 589.3 L936.1 598.0 L932.3 606.7 L928.4 615.5 L924.4 624.3 L920.4 633.3 L916.5 642.4 L912.5 651.6 L908.4 661.0 L904.4 670.4 L899.8 679.6 L895.2 688.9 L890.5 698.3"/><path d="M1072.7 376.4 L1070.9 378.7 L1068.7 381.6 L1066.3 384.9 L1063.8 388.5 L1061.1 392.4 L1058.3 396.5 L1055.4 400.8 L1052.4 405.3 L1049.1 409.8 L1045.6 414.5 L1042.0 419.3 L1038.3 424.2 L1034.6 429.3 L1030.8 434.5 L1026.6 439.7 L1022.3 444.9 L1017.8 450.2 L1013.3 455.6 L1009.3 461.5 L1005.9 468.0 L1002.4 474.7 L998.9 481.5 L995.4 488.5 L991.7 495.5 L988.0 502.6 L984.3 509.8 L980.4 517.2 L976.5 524.6 L972.6 532.2 L969.2 540.1 L965.9 548.2 L962.5 556.5 L959.0 564.8 L955.5 573.2 L951.8 581.7 L948.1 590.2 L944.4 598.9 L940.6 607.7 L936.6 616.5 L932.6 625.4 L928.5 634.4 L924.5 643.5 L920.4 652.7 L916.3 662.1 L912.2 671.5 L907.5 680.7 L902.8 690.0 L898.1 699.4"/><path d="M1082.0 375.9 L1080.3 378.1 L1078.1 381.0 L1075.8 384.3 L1073.2 388.0 L1070.5 391.9 L1067.7 396.0 L1064.8 400.4 L1061.8 404.9 L1058.5 409.5 L1055.0 414.2 L1051.3 419.0 L1047.6 424.0 L1043.8 429.2 L1040.0 434.4 L1035.8 439.7 L1031.3 444.8 L1026.8 450.1 L1022.2 455.5 L1018.1 461.5 L1014.7 468.1 L1011.2 474.9 L1007.7 481.7 L1004.1 488.7 L1000.4 495.8 L996.7 503.0 L992.9 510.2 L989.0 517.6 L985.0 525.1 L981.0 532.7 L977.6 540.7 L974.3 548.9 L970.9 557.2 L967.4 565.5 L963.8 574.0 L960.1 582.5 L956.4 591.1 L952.6 599.8 L948.7 608.6 L944.7 617.4 L940.6 626.4 L936.5 635.4 L932.4 644.5 L928.3 653.8 L924.1 663.1 L920.0 672.6 L915.2 681.8 L910.4 691.1 L905.5 700.4"/><path d="M1091.3 375.3 L1089.6 377.5 L1087.5 380.5 L1085.1 383.8 L1082.6 387.4 L1079.9 391.4 L1077.1 395.5 L1074.2 399.9 L1071.2 404.5 L1067.8 409.2 L1064.3 413.9 L1060.6 418.8 L1056.9 423.8 L1053.0 429.0 L1049.1 434.3 L1044.9 439.5 L1040.3 444.7 L1035.7 450.0 L1031.1 455.5 L1026.9 461.5 L1023.5 468.2 L1020.0 474.9 L1016.4 481.9 L1012.8 488.9 L1009.1 496.0 L1005.3 503.3 L1001.4 510.6 L997.5 518.0 L993.5 525.5 L989.4 533.2 L986.0 541.2 L982.6 549.5 L979.2 557.8 L975.6 566.2 L972.1 574.7 L968.3 583.3 L964.5 591.9 L960.7 600.7 L956.8 609.5 L952.7 618.4 L948.6 627.3 L944.4 636.4 L940.3 645.5 L936.1 654.8 L931.9 664.1 L927.6 673.6 L922.7 682.8 L917.8 692.1 L912.9 701.4"/><path d="M1100.4 374.8 L1098.8 377.0 L1096.7 379.9 L1094.4 383.2 L1091.9 386.9 L1089.2 390.9 L1086.4 395.1 L1083.5 399.5 L1080.4 404.1 L1077.1 408.8 L1073.5 413.6 L1069.8 418.5 L1066.0 423.5 L1062.1 428.8 L1058.2 434.1 L1053.9 439.4 L1049.3 444.6 L1044.6 449.9 L1039.8 455.4 L1035.6 461.4 L1032.2 468.1 L1028.6 475.0 L1025.1 482.0 L1021.4 489.1 L1017.6 496.2 L1013.8 503.5 L1009.9 510.9 L1005.9 518.4 L1001.8 525.9 L997.7 533.6 L994.3 541.7 L990.9 550.0 L987.4 558.4 L983.8 566.8 L980.2 575.4 L976.5 584.0 L972.6 592.7 L968.8 601.5 L964.8 610.3 L960.6 619.2 L956.5 628.2 L952.2 637.3 L948.0 646.5 L943.8 655.7 L939.5 665.1 L935.2 674.6 L930.2 683.7 L925.2 693.0 L920.1 702.4"/><path d="M1109.5 374.2 L1107.9 376.4 L1105.9 379.3 L1103.6 382.7 L1101.1 386.4 L1098.4 390.4 L1095.6 394.6 L1092.7 399.1 L1089.7 403.7 L1086.3 408.4 L1082.7 413.2 L1078.9 418.2 L1075.1 423.3 L1071.2 428.5 L1067.2 433.9 L1062.8 439.2 L1058.1 444.4 L1053.4 449.8 L1048.5 455.2 L1044.3 461.3 L1040.8 468.1 L1037.2 475.0 L1033.6 482.1 L1029.9 489.2 L1026.1 496.4 L1022.2 503.7 L1018.3 511.2 L1014.2 518.7 L1010.1 526.3 L1006.0 534.0 L1002.5 542.2 L999.1 550.5 L995.6 558.9 L992.0 567.4 L988.3 576.0 L984.5 584.7 L980.6 593.4 L976.7 602.3 L972.7 611.1 L968.5 620.1 L964.3 629.1 L960.0 638.2 L955.7 647.4 L951.4 656.7 L947.0 666.0 L942.6 675.5 L937.6 684.7 L932.5 694.0 L927.3 703.3"/><path d="M1118.5 373.7 L1117.0 375.8 L1115.0 378.7 L1112.7 382.1 L1110.2 385.8 L1107.6 389.8 L1104.8 394.1 L1101.8 398.6 L1098.8 403.3 L1095.4 408.1 L1091.7 412.9 L1088.0 417.8 L1084.1 423.0 L1080.1 428.3 L1076.1 433.7 L1071.7 439.0 L1066.9 444.2 L1062.1 449.6 L1057.1 455.1 L1052.9 461.2 L1049.3 468.0 L1045.7 475.0 L1042.1 482.1 L1038.4 489.3 L1034.5 496.5 L1030.6 503.9 L1026.6 511.4 L1022.5 518.9 L1018.3 526.6 L1014.1 534.4 L1010.6 542.6 L1007.2 551.0 L1003.7 559.5 L1000.0 568.0 L996.4 576.6 L992.5 585.3 L988.6 594.1 L984.6 603.0 L980.6 611.9 L976.3 620.8 L972.0 629.9 L967.6 639.0 L963.3 648.2 L958.9 657.5 L954.5 666.9 L950.0 676.4 L944.9 685.6 L939.7 694.8 L934.4 704.2"/><path d="M1127.5 373.2 L1126.0 375.2 L1124.0 378.1 L1121.8 381.5 L1119.3 385.3 L1116.7 389.3 L1113.9 393.6 L1110.9 398.1 L1107.9 402.9 L1104.5 407.6 L1100.8 412.5 L1097.0 417.5 L1093.1 422.6 L1089.1 428.0 L1084.9 433.4 L1080.5 438.8 L1075.6 444.0 L1070.7 449.4 L1065.7 454.9 L1061.4 461.0 L1057.8 467.9 L1054.2 474.9 L1050.5 482.1 L1046.8 489.3 L1042.9 496.6 L1038.9 504.1 L1034.9 511.6 L1030.7 519.2 L1026.5 526.9 L1022.2 534.7 L1018.7 542.9 L1015.2 551.4 L1011.7 559.9 L1008.0 568.5 L1004.3 577.2 L1000.4 585.9 L996.5 594.8 L992.5 603.7 L988.4 612.6 L984.0 621.6 L979.6 630.6 L975.2 639.8 L970.8 649.0 L966.4 658.4 L961.9 667.8 L957.3 677.3 L952.1 686.5 L946.8 695.7 L941.4 705.1"/><path d="M1136.4 372.6 L1135.0 374.7 L1133.0 377.6 L1130.8 380.9 L1128.3 384.7 L1125.7 388.7 L1122.9 393.1 L1120.0 397.6 L1116.9 402.4 L1113.5 407.2 L1109.8 412.1 L1105.9 417.1 L1102.0 422.3 L1097.9 427.6 L1093.8 433.1 L1089.2 438.5 L1084.3 443.8 L1079.3 449.1 L1074.2 454.6 L1069.8 460.8 L1066.2 467.8 L1062.6 474.8 L1058.9 482.0 L1055.1 489.3 L1051.2 496.7 L1047.2 504.2 L1043.1 511.7 L1038.8 519.4 L1034.6 527.1 L1030.3 534.9 L1026.7 543.3 L1023.2 551.8 L1019.7 560.4 L1016.0 569.0 L1012.2 577.7 L1008.3 586.5 L1004.3 595.4 L1000.2 604.3 L996.1 613.3 L991.7 622.3 L987.2 631.4 L982.8 640.5 L978.3 649.8 L973.7 659.2 L969.2 668.6 L964.6 678.1 L959.2 687.3 L953.8 696.6 L948.4 705.9"/><path d="M1145.2 372.1 L1143.9 374.1 L1141.9 377.0 L1139.7 380.4 L1137.3 384.1 L1134.7 388.2 L1131.9 392.5 L1129.0 397.1 L1125.9 401.9 L1122.5 406.8 L1118.7 411.7 L1114.8 416.7 L1110.8 421.9 L1106.7 427.3 L1102.5 432.8 L1097.9 438.2 L1092.9 443.5 L1087.9 448.9 L1082.7 454.4 L1078.2 460.6 L1074.6 467.6 L1070.9 474.7 L1067.2 482.0 L1063.4 489.3 L1059.4 496.7 L1055.3 504.2 L1051.2 511.9 L1046.9 519.5 L1042.6 527.3 L1038.2 535.2 L1034.7 543.6 L1031.2 552.1 L1027.6 560.8 L1023.8 569.5 L1020.1 578.3 L1016.1 587.1 L1012.0 596.0 L1007.9 604.9 L1003.7 614.0 L999.2 623.0 L994.7 632.1 L990.2 641.3 L985.7 650.6 L981.1 660.0 L976.4 669.4 L971.8 679.0 L966.3 688.1 L960.8 697.4 L955.2 706.7"/><path d="M1154.0 371.6 L1152.7 373.5 L1150.8 376.4 L1148.6 379.8 L1146.2 383.5 L1143.6 387.6 L1140.8 392.0 L1137.9 396.6 L1134.8 401.4 L1131.4 406.3 L1127.6 411.2 L1123.7 416.3 L1119.6 421.5 L1115.5 426.9 L1111.2 432.5 L1106.6 437.9 L1101.5 443.2 L1096.3 448.6 L1091.1 454.1 L1086.5 460.3 L1082.9 467.4 L1079.2 474.5 L1075.4 481.8 L1071.6 489.3 L1067.6 496.7 L1063.5 504.3 L1059.3 511.9 L1055.0 519.7 L1050.6 527.5 L1046.2 535.4 L1042.6 543.8 L1039.0 552.5 L1035.4 561.1 L1031.6 569.9 L1027.8 578.7 L1023.8 587.6 L1019.7 596.5 L1015.6 605.5 L1011.3 614.6 L1006.8 623.7 L1002.2 632.8 L997.6 642.0 L993.0 651.3 L988.3 660.7 L983.6 670.2 L978.9 679.8 L973.3 689.0 L967.7 698.2 L962.0 707.5"/><path d="M1162.7 371.0 L1161.5 372.9 L1159.6 375.8 L1157.5 379.2 L1155.1 382.9 L1152.5 387.0 L1149.7 391.4 L1146.8 396.1 L1143.7 400.9 L1140.2 405.8 L1136.4 410.7 L1132.4 415.9 L1128.4 421.1 L1124.2 426.6 L1119.9 432.1 L1115.2 437.5 L1110.0 442.8 L1104.8 448.2 L1099.4 453.8 L1094.8 460.0 L1091.2 467.1 L1087.4 474.4 L1083.6 481.7 L1079.8 489.2 L1075.7 496.7 L1071.6 504.3 L1067.3 512.0 L1063.0 519.8 L1058.5 527.6 L1054.0 535.6 L1050.4 544.1 L1046.9 552.7 L1043.2 561.5 L1039.4 570.3 L1035.6 579.2 L1031.5 588.1 L1027.3 597.1 L1023.2 606.1 L1018.8 615.2 L1014.2 624.3 L1009.6 633.5 L1004.9 642.7 L1000.2 652.1 L995.5 661.5 L990.8 671.0 L985.9 680.6 L980.2 689.8 L974.5 699.0 L968.7 708.3"/><path d="M1171.4 370.5 L1170.2 372.4 L1168.4 375.2 L1166.3 378.6 L1163.9 382.3 L1161.3 386.4 L1158.5 390.8 L1155.6 395.5 L1152.5 400.4 L1149.0 405.3 L1145.2 410.3 L1141.2 415.4 L1137.1 420.7 L1132.9 426.1 L1128.5 431.7 L1123.7 437.2 L1118.5 442.5 L1113.2 447.9 L1107.7 453.4 L1103.1 459.7 L1099.4 466.8 L1095.6 474.1 L1091.8 481.5 L1087.9 489.1 L1083.8 496.6 L1079.6 504.3 L1075.3 512.0 L1070.9 519.8 L1066.4 527.7 L1061.9 535.7 L1058.2 544.3 L1054.6 553.0 L1050.9 561.8 L1047.1 570.7 L1043.2 579.6 L1039.1 588.6 L1034.9 597.6 L1030.7 606.7 L1026.3 615.8 L1021.7 625.0 L1017.0 634.2 L1012.2 643.4 L1007.5 652.8 L1002.7 662.3 L997.8 671.8 L992.9 681.4 L987.1 690.6 L981.3 699.8 L975.4 709.2"/><path d="M1180.0 370.0 L1178.9 371.8 L1177.1 374.6 L1175.0 377.9 L1172.7 381.7 L1170.1 385.8 L1167.3 390.3 L1164.4 394.9 L1161.3 399.9 L1157.8 404.8 L1153.9 409.8 L1149.9 414.9 L1145.8 420.2 L1141.5 425.7 L1137.1 431.3 L1132.2 436.8 L1126.9 442.1 L1121.5 447.5 L1116.0 453.0 L1111.3 459.3 L1107.6 466.6 L1103.8 473.9 L1099.9 481.4 L1096.0 488.9 L1091.8 496.5 L1087.6 504.2 L1083.3 512.0 L1078.8 519.9 L1074.2 527.8 L1069.6 535.9 L1065.9 544.5 L1062.3 553.3 L1058.6 562.1 L1054.8 571.0 L1050.9 580.0 L1046.7 589.0 L1042.5 598.1 L1038.2 607.3 L1033.7 616.5 L1029.0 625.6 L1024.2 634.8 L1019.4 644.2 L1014.6 653.6 L1009.7 663.0 L1004.8 672.6 L999.8 682.2 L993.9 691.4 L988.0 700.7 L982.0 710.0"/><path d="M668.0 308.0 L679.0 307.3 L690.3 307.6 L701.6 306.2 L712.7 303.9 L723.8 301.0 L734.7 297.9 L745.8 295.4 L757.0 293.1 L768.2 291.2 L779.5 290.4 L790.9 290.4 L802.2 292.2 L813.4 294.2 L824.6 296.1 L835.2 300.3 L845.7 304.7 L856.3 308.7 L866.1 314.5 L875.6 320.7 L885.0 327.2 L893.4 334.9 L901.4 342.9 L909.2 351.3 L916.6 359.9 L924.4 368.1 L933.9 374.4 L943.8 379.9 L954.2 384.6 L965.1 387.0 L976.2 384.6 L986.6 380.4 L998.0 380.1 L1009.4 379.7 L1020.8 379.3 L1032.2 378.9 L1043.5 378.2 L1054.9 377.5 L1066.3 376.8 L1077.6 376.1 L1089.0 375.5 L1100.4 374.8 L1111.8 374.1 L1123.1 373.4 L1134.5 372.7 L1145.9 372.0 L1157.3 371.4 L1168.6 370.7 L1180.0 370.0"/><path d="M664.3 311.4 L675.2 310.9 L686.5 311.4 L697.7 310.1 L708.9 308.1 L719.9 305.6 L730.8 302.8 L741.9 300.5 L753.1 298.4 L764.3 296.7 L775.6 296.1 L786.9 296.2 L798.2 298.1 L809.4 300.1 L820.6 301.9 L831.2 306.1 L841.7 310.3 L852.4 314.2 L862.2 319.8 L871.9 325.8 L881.3 332.0 L889.9 339.4 L898.1 347.1 L906.0 355.1 L913.6 363.3 L921.6 371.2 L931.2 377.2 L941.3 382.4 L951.7 386.9 L962.7 389.2 L973.8 386.9 L984.3 382.9 L995.7 382.6 L1007.1 382.2 L1018.6 381.8 L1030.0 381.4 L1041.4 380.7 L1052.8 380.0 L1064.3 379.3 L1075.7 378.6 L1087.1 377.9 L1098.6 377.2 L1110.0 376.5 L1121.5 375.8 L1132.9 375.0 L1144.4 374.3 L1155.8 373.5 L1167.3 372.8 L1178.7 372.0"/><path d="M660.5 314.8 L671.5 314.5 L682.7 315.2 L693.9 314.1 L705.0 312.4 L716.0 310.1 L727.0 307.6 L738.0 305.6 L749.1 303.7 L760.3 302.3 L771.6 301.9 L782.9 302.1 L794.1 304.0 L805.3 306.0 L816.5 307.9 L827.1 311.9 L837.7 316.0 L848.4 319.8 L858.3 325.3 L868.0 331.0 L877.6 337.1 L886.2 344.1 L894.6 351.5 L902.7 359.1 L910.5 367.1 L918.7 374.6 L928.4 380.3 L938.5 385.4 L949.0 389.6 L960.0 391.9 L971.1 389.7 L981.7 386.0 L993.1 385.6 L1004.6 385.3 L1016.0 385.0 L1027.5 384.5 L1038.9 383.9 L1050.4 383.2 L1061.9 382.6 L1073.3 381.9 L1084.8 381.2 L1096.3 380.5 L1107.7 379.7 L1119.2 379.0 L1130.7 378.3 L1142.2 377.5 L1153.7 376.7 L1165.3 376.0 L1176.8 375.2"/><path d="M656.8 318.3 L667.7 318.1 L678.9 318.9 L690.1 318.2 L701.2 316.7 L712.2 314.7 L723.1 312.5 L734.1 310.7 L745.2 309.1 L756.4 307.9 L767.6 307.6 L778.9 308.0 L790.1 309.9 L801.3 312.0 L812.5 313.9 L823.1 317.8 L833.7 321.9 L844.4 325.6 L854.3 330.9 L864.1 336.4 L873.8 342.2 L882.6 349.0 L891.1 356.1 L899.4 363.4 L907.3 371.0 L915.6 378.2 L925.4 383.7 L935.6 388.5 L946.2 392.6 L957.2 394.8 L968.3 392.8 L979.0 389.3 L990.4 389.1 L1001.9 388.8 L1013.3 388.5 L1024.8 388.1 L1036.2 387.5 L1047.7 386.9 L1059.2 386.2 L1070.7 385.6 L1082.2 384.9 L1093.7 384.2 L1105.2 383.5 L1116.7 382.8 L1128.2 382.0 L1139.8 381.3 L1151.3 380.5 L1162.9 379.7 L1174.4 378.9"/><path d="M653.0 321.7 L664.0 321.8 L675.2 322.7 L686.3 322.2 L697.4 321.0 L708.3 319.2 L719.2 317.3 L730.3 315.8 L741.3 314.5 L752.5 313.5 L763.7 313.4 L775.0 313.9 L786.1 315.9 L797.3 318.0 L808.4 319.9 L819.1 323.8 L829.7 327.7 L840.4 331.4 L850.4 336.5 L860.2 341.9 L869.9 347.5 L878.9 354.0 L887.5 360.8 L895.9 367.9 L904.1 375.1 L912.5 382.0 L922.4 387.3 L932.6 392.0 L943.2 395.9 L954.3 398.0 L965.4 396.2 L976.1 392.9 L987.5 392.7 L999.0 392.5 L1010.4 392.2 L1021.9 391.9 L1033.4 391.4 L1044.9 390.8 L1056.4 390.2 L1067.9 389.6 L1079.4 389.0 L1090.9 388.3 L1102.4 387.7 L1113.9 387.0 L1125.5 386.2 L1137.0 385.5 L1148.6 384.8 L1160.2 384.0 L1171.8 383.2"/><path d="M649.3 325.1 L660.3 325.4 L671.4 326.5 L682.6 326.2 L693.6 325.3 L704.5 323.8 L715.4 322.2 L726.4 321.0 L737.4 319.9 L748.6 319.1 L759.7 319.2 L771.0 319.9 L782.1 321.9 L793.2 324.0 L804.4 326.0 L815.0 329.8 L825.6 333.7 L836.4 337.3 L846.4 342.3 L856.3 347.5 L866.1 352.9 L875.1 359.1 L883.9 365.7 L892.5 372.5 L900.8 379.4 L909.4 386.0 L919.3 391.1 L929.6 395.6 L940.2 399.4 L951.2 401.5 L962.4 399.9 L973.1 396.8 L984.6 396.7 L996.0 396.5 L1007.5 396.3 L1018.9 396.0 L1030.4 395.5 L1041.9 395.0 L1053.4 394.5 L1064.9 393.9 L1076.4 393.4 L1087.9 392.8 L1099.4 392.1 L1111.0 391.5 L1122.5 390.8 L1134.1 390.1 L1145.7 389.3 L1157.3 388.6 L1168.9 387.8"/><path d="M645.6 328.5 L656.6 329.1 L667.7 330.4 L678.8 330.3 L689.8 329.6 L700.7 328.5 L711.6 327.1 L722.6 326.2 L733.6 325.3 L744.7 324.8 L755.8 325.1 L767.0 325.9 L778.1 327.9 L789.2 330.1 L800.4 332.2 L811.0 335.9 L821.6 339.7 L832.4 343.2 L842.4 348.1 L852.4 353.1 L862.2 358.4 L871.4 364.4 L880.3 370.7 L889.0 377.2 L897.4 383.9 L906.1 390.2 L916.1 395.1 L926.5 399.5 L937.1 403.2 L948.2 405.2 L959.3 403.7 L970.1 400.9 L981.5 400.8 L992.9 400.7 L1004.4 400.6 L1015.8 400.4 L1027.3 400.0 L1038.8 399.5 L1050.2 399.1 L1061.7 398.6 L1073.3 398.0 L1084.8 397.5 L1096.3 396.9 L1107.9 396.3 L1119.4 395.6 L1131.0 395.0 L1142.6 394.3 L1154.2 393.5 L1165.8 392.8"/><path d="M641.8 331.9 L652.8 332.7 L664.0 334.2 L675.0 334.4 L686.0 333.9 L696.9 333.1 L707.8 332.1 L718.8 331.4 L729.7 330.8 L740.8 330.5 L751.9 330.9 L763.1 331.9 L774.2 334.0 L785.2 336.3 L796.3 338.4 L807.0 342.0 L817.6 345.8 L828.3 349.3 L838.4 354.0 L848.5 358.9 L858.3 364.0 L867.6 369.8 L876.6 375.9 L885.4 382.1 L894.0 388.5 L902.9 394.6 L912.9 399.3 L923.3 403.5 L934.0 407.1 L945.0 409.1 L956.2 407.8 L966.9 405.2 L978.3 405.2 L989.8 405.2 L1001.2 405.1 L1012.6 405.0 L1024.1 404.6 L1035.5 404.3 L1047.0 403.8 L1058.5 403.4 L1070.0 402.9 L1081.5 402.4 L1093.0 401.9 L1104.6 401.3 L1116.1 400.7 L1127.7 400.1 L1139.3 399.5 L1150.9 398.8 L1162.5 398.0"/><path d="M638.1 335.3 L649.1 336.4 L660.2 338.1 L671.3 338.5 L682.3 338.3 L693.2 337.7 L704.0 337.0 L714.9 336.6 L725.9 336.3 L736.9 336.2 L748.0 336.8 L759.2 337.9 L770.2 340.1 L781.2 342.4 L792.3 344.6 L802.9 348.2 L813.6 351.9 L824.3 355.4 L834.4 360.0 L844.5 364.7 L854.4 369.7 L863.8 375.3 L872.9 381.1 L881.8 387.1 L890.5 393.3 L899.5 399.1 L909.6 403.7 L920.0 407.7 L930.7 411.2 L941.7 413.2 L952.9 412.0 L963.7 409.7 L975.0 409.8 L986.4 409.8 L997.8 409.8 L1009.3 409.7 L1020.7 409.4 L1032.1 409.1 L1043.6 408.8 L1055.1 408.4 L1066.5 408.0 L1078.0 407.6 L1089.5 407.1 L1101.0 406.6 L1112.6 406.0 L1124.1 405.4 L1135.7 404.8 L1147.3 404.2 L1158.8 403.5"/><path d="M634.4 338.8 L645.4 340.1 L656.5 341.9 L667.6 342.6 L678.6 342.7 L689.4 342.4 L700.3 342.0 L711.2 341.8 L722.1 341.7 L733.1 341.9 L744.1 342.7 L755.2 343.9 L766.2 346.2 L777.2 348.6 L788.3 350.8 L798.9 354.5 L809.5 358.1 L820.2 361.5 L830.4 366.0 L840.5 370.6 L850.5 375.4 L859.9 380.8 L869.1 386.5 L878.1 392.2 L887.0 398.2 L896.0 403.8 L906.2 408.2 L916.6 412.1 L927.3 415.4 L938.3 417.4 L949.4 416.4 L960.2 414.2 L971.5 414.4 L982.9 414.5 L994.2 414.5 L1005.6 414.5 L1017.0 414.3 L1028.4 414.1 L1039.8 413.8 L1051.2 413.5 L1062.7 413.1 L1074.1 412.7 L1085.6 412.3 L1097.1 411.8 L1108.5 411.3 L1120.1 410.7 L1131.6 410.1 L1143.1 409.5 L1154.6 408.9"/><path d="M630.7 342.3 L641.9 343.9 L653.0 345.9 L664.0 346.8 L674.9 347.2 L685.8 347.2 L696.6 347.0 L707.5 347.1 L718.4 347.3 L729.3 347.7 L740.3 348.7 L751.4 350.1 L762.3 352.5 L773.3 354.9 L784.3 357.2 L794.9 360.8 L805.5 364.4 L816.2 367.7 L826.4 372.1 L836.5 376.6 L846.5 381.3 L856.0 386.5 L865.3 392.0 L874.4 397.5 L883.4 403.2 L892.5 408.6 L902.7 412.8 L913.1 416.6 L923.8 419.8 L934.8 421.7 L945.9 420.9 L956.6 419.0 L967.9 419.2 L979.2 419.3 L990.5 419.5 L1001.9 419.5 L1013.2 419.4 L1024.6 419.2 L1035.9 419.0 L1047.3 418.7 L1058.7 418.4 L1070.1 418.0 L1081.5 417.6 L1092.9 417.2 L1104.4 416.7 L1115.8 416.2 L1127.3 415.7 L1138.8 415.1 L1150.3 414.4"/><path d="M627.1 345.9 L638.3 347.8 L649.4 350.0 L660.5 351.1 L671.4 351.8 L682.2 352.1 L693.0 352.2 L703.8 352.5 L714.7 352.9 L725.6 353.6 L736.6 354.7 L747.6 356.3 L758.5 358.7 L769.4 361.2 L780.3 363.6 L790.9 367.2 L801.5 370.8 L812.2 374.1 L822.4 378.4 L832.5 382.8 L842.6 387.3 L852.1 392.3 L861.5 397.6 L870.7 402.9 L879.7 408.4 L889.0 413.5 L899.2 417.6 L909.6 421.3 L920.3 424.4 L931.2 426.3 L942.3 425.6 L953.0 423.9 L964.2 424.2 L975.5 424.4 L986.8 424.6 L998.1 424.7 L1009.3 424.6 L1020.6 424.5 L1032.0 424.3 L1043.3 424.1 L1054.6 423.8 L1066.0 423.5 L1077.3 423.2 L1088.7 422.8 L1100.1 422.4 L1111.5 421.9 L1122.9 421.4 L1134.3 420.8 L1145.8 420.2"/><path d="M623.6 349.4 L634.8 351.6 L645.9 354.0 L656.9 355.4 L667.8 356.4 L678.6 356.9 L689.4 357.3 L700.2 357.9 L711.1 358.6 L721.9 359.5 L732.8 360.8 L743.8 362.5 L754.6 365.1 L765.5 367.6 L776.4 370.1 L787.0 373.6 L797.6 377.2 L808.2 380.5 L818.4 384.7 L828.6 389.0 L838.6 393.4 L848.2 398.3 L857.7 403.3 L867.0 408.5 L876.1 413.7 L885.4 418.6 L895.6 422.6 L906.0 426.1 L916.7 429.2 L927.6 431.1 L938.6 430.5 L949.3 429.0 L960.5 429.3 L971.7 429.6 L982.9 429.9 L994.2 430.0 L1005.4 430.0 L1016.6 430.0 L1027.9 429.9 L1039.2 429.7 L1050.4 429.5 L1061.7 429.2 L1073.0 428.9 L1084.3 428.6 L1095.7 428.2 L1107.0 427.8 L1118.3 427.3 L1129.7 426.8 L1141.1 426.2"/><path d="M620.0 353.0 L631.3 355.5 L642.4 358.1 L653.4 359.8 L664.3 361.0 L675.1 361.8 L685.8 362.5 L696.6 363.4 L707.4 364.3 L718.3 365.4 L729.1 366.9 L740.0 368.8 L750.8 371.4 L761.7 374.1 L772.5 376.6 L783.1 380.1 L793.6 383.7 L804.3 387.0 L814.5 391.1 L824.6 395.3 L834.7 399.6 L844.3 404.3 L853.8 409.2 L863.2 414.1 L872.4 419.2 L881.8 423.9 L892.0 427.7 L902.4 431.2 L913.1 434.1 L923.9 436.0 L934.9 435.6 L945.6 434.3 L956.7 434.7 L967.9 435.0 L979.0 435.3 L990.2 435.6 L1001.4 435.6 L1012.6 435.6 L1023.8 435.6 L1035.0 435.5 L1046.2 435.3 L1057.4 435.1 L1068.6 434.9 L1079.9 434.6 L1091.1 434.2 L1102.4 433.8 L1113.7 433.4 L1125.0 432.9 L1136.3 432.4"/><path d="M616.4 356.6 L627.8 359.4 L638.9 362.2 L649.9 364.2 L660.8 365.6 L671.6 366.8 L682.3 367.7 L693.1 368.9 L703.8 370.0 L714.6 371.3 L725.4 373.0 L736.3 375.1 L747.0 377.8 L757.8 380.5 L768.6 383.1 L779.1 386.7 L789.6 390.2 L800.2 393.5 L810.4 397.5 L820.6 401.6 L830.7 405.8 L840.3 410.4 L849.9 415.1 L859.3 419.8 L868.6 424.7 L878.0 429.2 L888.2 432.9 L898.6 436.2 L909.2 439.1 L920.1 440.9 L931.0 440.6 L941.6 439.5 L952.7 440.0 L963.7 440.4 L974.8 440.8 L985.9 441.0 L997.0 441.1 L1008.1 441.2 L1019.2 441.2 L1030.3 441.1 L1041.4 441.0 L1052.6 440.8 L1063.7 440.6 L1074.9 440.3 L1086.0 440.0 L1097.2 439.6 L1108.4 439.2 L1119.6 438.7 L1130.8 438.2"/><path d="M612.8 360.2 L624.3 363.3 L635.5 366.4 L646.5 368.5 L657.3 370.3 L668.1 371.7 L678.8 373.0 L689.5 374.3 L700.2 375.7 L711.0 377.3 L721.7 379.2 L732.5 381.4 L743.2 384.2 L753.9 387.0 L764.7 389.7 L775.1 393.2 L785.6 396.8 L796.2 400.0 L806.4 404.0 L816.5 408.0 L826.6 412.1 L836.3 416.5 L845.9 421.1 L855.4 425.6 L864.7 430.3 L874.2 434.7 L884.4 438.2 L894.7 441.4 L905.3 444.2 L916.1 446.0 L926.9 445.8 L937.5 444.9 L948.5 445.4 L959.5 445.9 L970.4 446.3 L981.4 446.6 L992.4 446.7 L1003.4 446.8 L1014.5 446.8 L1025.5 446.8 L1036.5 446.7 L1047.5 446.5 L1058.6 446.3 L1069.6 446.1 L1080.7 445.8 L1091.7 445.4 L1102.8 445.0 L1113.9 444.5 L1125.0 444.0"/><path d="M609.2 363.8 L620.9 367.2 L632.0 370.5 L643.0 373.0 L653.9 375.0 L664.6 376.7 L675.3 378.2 L686.0 379.9 L696.7 381.5 L707.3 383.3 L718.0 385.4 L728.8 387.7 L739.4 390.6 L750.1 393.6 L760.7 396.3 L771.2 399.9 L781.6 403.4 L792.2 406.7 L802.4 410.6 L812.5 414.5 L822.6 418.5 L832.3 422.8 L841.9 427.2 L851.4 431.6 L860.8 436.0 L870.3 440.2 L880.5 443.7 L890.8 446.7 L901.3 449.4 L912.0 451.2 L922.8 451.2 L933.3 450.4 L944.2 451.0 L955.1 451.5 L966.0 451.9 L976.9 452.2 L987.8 452.4 L998.7 452.5 L1009.6 452.6 L1020.5 452.6 L1031.5 452.5 L1042.4 452.4 L1053.3 452.2 L1064.3 452.0 L1075.2 451.7 L1086.1 451.3 L1097.1 450.9 L1108.0 450.5 L1119.0 450.0"/><path d="M605.6 367.4 L617.4 371.2 L628.6 374.7 L639.6 377.4 L650.4 379.7 L661.1 381.7 L671.8 383.5 L682.4 385.4 L693.1 387.3 L703.8 389.3 L714.4 391.6 L725.1 394.1 L735.6 397.1 L746.2 400.1 L756.9 403.0 L767.3 406.6 L777.7 410.1 L788.2 413.4 L798.3 417.2 L808.5 421.1 L818.5 424.9 L828.3 429.1 L837.9 433.4 L847.4 437.6 L856.9 441.9 L866.4 446.0 L876.5 449.3 L886.8 452.2 L897.3 454.9 L907.9 456.6 L918.6 456.7 L929.1 456.1 L939.9 456.7 L950.7 457.2 L961.5 457.7 L972.3 458.1 L983.1 458.3 L993.9 458.5 L1004.7 458.5 L1015.5 458.6 L1026.4 458.5 L1037.2 458.4 L1048.0 458.3 L1058.8 458.0 L1069.6 457.8 L1080.5 457.4 L1091.3 457.0 L1102.1 456.6 L1112.9 456.1"/><path d="M602.1 370.9 L614.0 375.1 L625.2 378.9 L636.2 381.9 L647.0 384.4 L657.7 386.7 L668.4 388.8 L679.0 391.0 L689.6 393.2 L700.2 395.4 L710.8 397.9 L721.4 400.6 L732.0 403.7 L742.5 406.9 L753.1 409.8 L763.5 413.4 L773.9 417.0 L784.4 420.3 L794.6 424.1 L804.7 427.9 L814.8 431.8 L824.6 435.8 L834.3 440.0 L843.9 444.1 L853.4 448.3 L863.0 452.2 L873.1 455.4 L883.5 458.4 L893.9 460.9 L904.5 462.7 L915.2 463.0 L925.6 462.5 L936.4 463.2 L947.2 463.8 L958.0 464.4 L968.7 464.9 L979.5 465.2 L990.3 465.4 L1001.1 465.6 L1011.8 465.7 L1022.6 465.7 L1033.4 465.7 L1044.2 465.6 L1055.0 465.5 L1065.7 465.3 L1076.5 465.0 L1087.3 464.7 L1098.1 464.3 L1108.9 463.9"/><path d="M598.6 374.6 L610.6 379.2 L621.9 383.2 L632.9 386.4 L643.7 389.3 L654.4 391.9 L665.0 394.3 L675.6 396.7 L686.2 399.1 L696.8 401.6 L707.4 404.3 L717.9 407.1 L728.4 410.4 L738.9 413.7 L749.5 416.8 L759.8 420.4 L770.2 424.0 L780.6 427.3 L790.8 431.1 L801.0 434.9 L811.1 438.7 L820.9 442.7 L830.7 446.7 L840.3 450.8 L849.9 454.8 L859.6 458.6 L869.7 461.8 L880.0 464.7 L890.5 467.2 L901.1 469.0 L911.7 469.4 L922.2 469.1 L932.9 469.9 L943.6 470.6 L954.4 471.3 L965.1 471.8 L975.8 472.2 L986.6 472.5 L997.3 472.8 L1008.1 472.9 L1018.8 473.1 L1029.6 473.1 L1040.3 473.1 L1051.0 473.0 L1061.8 472.9 L1072.5 472.7 L1083.3 472.5 L1094.0 472.2 L1104.8 471.9"/><path d="M595.2 378.4 L607.4 383.3 L618.7 387.6 L629.7 391.1 L640.5 394.3 L651.2 397.1 L661.8 399.8 L672.4 402.5 L682.9 405.1 L693.5 407.8 L704.0 410.8 L714.5 413.8 L724.9 417.2 L735.4 420.6 L745.9 423.8 L756.2 427.5 L766.6 431.1 L777.0 434.5 L787.2 438.3 L797.3 442.0 L807.4 445.8 L817.3 449.7 L827.1 453.7 L836.8 457.6 L846.4 461.5 L856.1 465.2 L866.3 468.3 L876.6 471.1 L887.1 473.6 L897.6 475.5 L908.2 476.0 L918.7 475.9 L929.4 476.8 L940.1 477.6 L950.8 478.3 L961.5 478.9 L972.2 479.4 L982.9 479.8 L993.6 480.1 L1004.3 480.4 L1015.0 480.6 L1025.7 480.7 L1036.4 480.8 L1047.1 480.8 L1057.8 480.7 L1068.5 480.6 L1079.2 480.5 L1089.9 480.2 L1100.6 480.0"/><path d="M591.8 382.2 L604.2 387.5 L615.5 392.0 L626.5 395.8 L637.3 399.3 L648.0 402.4 L658.6 405.4 L669.1 408.3 L679.7 411.2 L690.1 414.2 L700.6 417.3 L711.1 420.5 L721.5 424.1 L731.9 427.6 L742.3 430.9 L752.6 434.7 L762.9 438.3 L773.3 441.7 L783.5 445.5 L793.7 449.3 L803.8 453.0 L813.7 456.8 L823.5 460.7 L833.3 464.5 L842.9 468.3 L852.7 471.9 L862.9 475.0 L873.2 477.8 L883.6 480.3 L894.1 482.1 L904.7 482.8 L915.1 482.9 L925.8 483.8 L936.5 484.7 L947.1 485.5 L957.8 486.2 L968.4 486.8 L979.1 487.2 L989.7 487.6 L1000.4 488.0 L1011.1 488.2 L1021.7 488.4 L1032.4 488.6 L1043.0 488.6 L1053.7 488.7 L1064.3 488.6 L1075.0 488.6 L1085.7 488.4 L1096.3 488.2"/><path d="M588.5 385.9 L601.0 391.7 L612.3 396.5 L623.4 400.6 L634.2 404.3 L644.8 407.7 L655.4 411.0 L665.9 414.2 L676.4 417.3 L686.9 420.5 L697.3 423.8 L707.7 427.3 L718.0 431.0 L728.4 434.6 L738.7 438.0 L749.0 441.9 L759.3 445.6 L769.7 449.1 L779.8 452.8 L790.0 456.5 L800.1 460.2 L810.0 464.0 L819.9 467.8 L829.7 471.6 L839.4 475.3 L849.2 478.8 L859.4 481.8 L869.7 484.5 L880.1 487.0 L890.6 488.9 L901.1 489.7 L911.5 490.0 L922.1 491.0 L932.7 491.9 L943.3 492.8 L954.0 493.6 L964.6 494.2 L975.2 494.8 L985.8 495.2 L996.4 495.6 L1007.0 496.0 L1017.6 496.2 L1028.2 496.4 L1038.8 496.6 L1049.4 496.7 L1060.0 496.7 L1070.6 496.7 L1081.2 496.6 L1091.8 496.5"/><path d="M585.1 389.7 L597.8 395.9 L609.2 401.0 L620.3 405.4 L631.1 409.4 L641.7 413.1 L652.2 416.6 L662.7 420.1 L673.2 423.5 L683.6 426.9 L693.9 430.4 L704.3 434.1 L714.6 437.9 L724.9 441.7 L735.2 445.2 L745.4 449.1 L755.7 452.9 L766.0 456.4 L776.2 460.2 L786.3 463.9 L796.5 467.6 L806.4 471.4 L816.3 475.1 L826.1 478.8 L835.9 482.4 L845.7 485.8 L855.9 488.8 L866.2 491.5 L876.5 493.9 L887.0 495.9 L897.5 496.8 L907.9 497.2 L918.4 498.3 L929.0 499.3 L939.5 500.3 L950.1 501.1 L960.7 501.8 L971.2 502.4 L981.8 503.0 L992.3 503.4 L1002.9 503.9 L1013.4 504.2 L1024.0 504.5 L1034.5 504.7 L1045.0 504.8 L1055.6 504.9 L1066.1 505.0 L1076.7 505.0 L1087.2 505.0"/><path d="M581.7 393.5 L594.6 400.1 L606.1 405.5 L617.2 410.1 L628.0 414.5 L638.6 418.5 L649.1 422.3 L659.6 426.0 L670.0 429.7 L680.3 433.3 L690.6 437.1 L700.9 440.9 L711.2 444.9 L721.4 448.8 L731.7 452.5 L741.9 456.5 L752.1 460.3 L762.4 463.9 L772.5 467.7 L782.7 471.4 L792.8 475.1 L802.7 478.8 L812.7 482.4 L822.5 486.1 L832.3 489.6 L842.2 493.0 L852.4 495.9 L862.6 498.6 L872.9 501.0 L883.4 503.0 L893.8 504.0 L904.2 504.6 L914.7 505.8 L925.2 506.9 L935.7 507.9 L946.2 508.8 L956.7 509.6 L967.2 510.2 L977.7 510.9 L988.2 511.4 L998.6 511.8 L1009.1 512.2 L1019.6 512.6 L1030.1 512.9 L1040.6 513.1 L1051.0 513.2 L1061.5 513.4 L1072.0 513.4 L1082.5 513.5"/><path d="M578.3 397.3 L591.4 404.3 L603.0 410.0 L614.1 415.0 L624.9 419.6 L635.5 423.9 L646.0 428.0 L656.4 432.0 L666.8 435.9 L677.1 439.8 L687.4 443.8 L697.6 447.8 L707.8 451.9 L717.9 456.0 L728.2 459.8 L738.3 463.9 L748.5 467.8 L758.8 471.4 L768.9 475.3 L779.0 479.0 L789.1 482.6 L799.1 486.3 L809.0 489.9 L818.9 493.5 L828.7 497.0 L838.6 500.3 L848.8 503.2 L859.0 505.8 L869.3 508.2 L879.7 510.2 L890.1 511.4 L900.4 512.1 L910.8 513.3 L921.3 514.5 L931.7 515.6 L942.2 516.6 L952.6 517.4 L963.0 518.2 L973.5 518.8 L983.9 519.4 L994.3 520.0 L1004.7 520.4 L1015.2 520.8 L1025.6 521.1 L1036.0 521.4 L1046.4 521.6 L1056.8 521.8 L1067.2 521.9 L1077.5 522.0"/><path d="M575.0 401.1 L588.3 408.5 L599.9 414.5 L611.0 419.8 L621.8 424.7 L632.4 429.3 L642.9 433.7 L653.3 438.0 L663.7 442.2 L673.9 446.3 L684.1 450.5 L694.3 454.7 L704.4 459.0 L714.5 463.2 L724.7 467.2 L734.8 471.3 L745.0 475.3 L755.2 479.0 L765.3 482.9 L775.4 486.6 L785.5 490.3 L795.4 494.0 L805.4 497.5 L815.3 501.0 L825.1 504.5 L835.0 507.7 L845.2 510.6 L855.4 513.2 L865.6 515.6 L876.0 517.7 L886.3 518.9 L896.6 519.8 L907.0 521.1 L917.4 522.3 L927.7 523.5 L938.1 524.5 L948.5 525.4 L958.9 526.2 L969.2 527.0 L979.6 527.6 L989.9 528.2 L1000.3 528.7 L1010.6 529.2 L1021.0 529.6 L1031.3 529.9 L1041.6 530.2 L1052.0 530.4 L1062.3 530.6 L1072.6 530.8"/><path d="M571.6 404.8 L585.1 412.8 L596.8 419.1 L608.0 424.7 L618.8 429.9 L629.4 434.8 L639.9 439.5 L650.2 444.0 L660.6 448.5 L670.8 452.8 L680.9 457.3 L691.0 461.7 L701.1 466.1 L711.1 470.5 L721.2 474.7 L731.3 478.9 L741.5 482.9 L751.6 486.8 L761.7 490.7 L771.8 494.4 L781.9 498.1 L791.9 501.7 L801.8 505.3 L811.7 508.8 L821.6 512.1 L831.5 515.4 L841.6 518.2 L851.8 520.8 L862.0 523.3 L872.3 525.3 L882.7 526.6 L892.9 527.7 L903.2 529.1 L913.6 530.4 L923.9 531.6 L934.2 532.7 L944.5 533.7 L954.9 534.5 L965.2 535.3 L975.5 536.0 L985.8 536.7 L996.1 537.3 L1006.3 537.8 L1016.6 538.2 L1026.9 538.6 L1037.1 539.0 L1047.4 539.3 L1057.6 539.5 L1067.9 539.7"/><path d="M568.2 408.6 L582.0 417.1 L593.7 423.7 L605.0 429.6 L615.8 435.1 L626.4 440.3 L636.8 445.3 L647.2 450.1 L657.5 454.8 L667.7 459.4 L677.8 464.1 L687.8 468.7 L697.8 473.4 L707.8 477.9 L717.9 482.2 L727.9 486.5 L738.0 490.7 L748.2 494.6 L758.3 498.5 L768.4 502.4 L778.4 506.0 L788.4 509.7 L798.4 513.3 L808.3 516.7 L818.2 520.1 L828.2 523.2 L838.3 526.1 L848.5 528.7 L858.7 531.2 L869.0 533.3 L879.3 534.7 L889.5 535.9 L899.8 537.4 L910.1 538.8 L920.4 540.0 L930.7 541.2 L941.0 542.3 L951.3 543.2 L961.6 544.1 L971.9 544.9 L982.1 545.6 L992.4 546.2 L1002.6 546.8 L1012.9 547.4 L1023.1 547.8 L1033.3 548.3 L1043.6 548.6 L1053.8 549.0 L1064.0 549.3"/><path d="M564.8 412.4 L578.8 421.3 L590.7 428.3 L602.0 434.5 L612.8 440.4 L623.4 445.9 L633.8 451.1 L644.2 456.2 L654.4 461.2 L664.6 466.1 L674.6 470.9 L684.6 475.8 L694.6 480.6 L704.5 485.3 L714.5 489.8 L724.6 494.3 L734.6 498.5 L744.8 502.5 L754.8 506.5 L764.9 510.4 L775.0 514.1 L785.0 517.8 L795.0 521.3 L804.9 524.8 L814.9 528.1 L824.8 531.3 L835.0 534.1 L845.1 536.8 L855.4 539.2 L865.6 541.4 L875.9 542.9 L886.1 544.2 L896.4 545.8 L906.6 547.3 L916.9 548.6 L927.2 549.9 L937.5 551.0 L947.7 552.0 L958.0 553.0 L968.2 553.8 L978.4 554.6 L988.7 555.3 L998.9 556.0 L1009.1 556.6 L1019.3 557.2 L1029.5 557.7 L1039.7 558.1 L1049.9 558.5 L1060.0 558.9"/><path d="M561.5 416.2 L575.7 425.6 L587.7 432.9 L599.0 439.5 L609.8 445.6 L620.4 451.5 L630.9 457.0 L641.2 462.4 L651.4 467.6 L661.5 472.7 L671.5 477.8 L681.4 482.9 L691.3 487.9 L701.2 492.8 L711.2 497.5 L721.2 502.0 L731.2 506.4 L741.3 510.5 L751.4 514.6 L761.5 518.5 L771.5 522.3 L781.5 526.0 L791.5 529.5 L801.5 533.0 L811.5 536.3 L821.4 539.4 L831.6 542.3 L841.7 544.9 L851.9 547.4 L862.2 549.6 L872.4 551.3 L882.6 552.7 L892.8 554.4 L903.1 555.9 L913.3 557.4 L923.5 558.7 L933.8 559.9 L944.0 561.0 L954.2 562.0 L964.4 562.9 L974.6 563.7 L984.8 564.5 L995.0 565.3 L1005.1 565.9 L1015.3 566.5 L1025.4 567.1 L1035.6 567.6 L1045.7 568.1 L1055.8 568.6"/><path d="M558.1 419.9 L572.6 429.9 L584.7 437.6 L596.0 444.5 L606.9 450.9 L617.5 457.1 L627.9 462.9 L638.2 468.6 L648.4 474.1 L658.5 479.4 L668.4 484.8 L678.3 490.1 L688.1 495.3 L698.0 500.4 L707.9 505.2 L717.8 509.9 L727.8 514.4 L737.9 518.6 L748.0 522.7 L758.0 526.7 L768.1 530.5 L778.1 534.2 L788.1 537.8 L798.1 541.3 L808.0 544.6 L818.0 547.7 L828.2 550.6 L838.3 553.3 L848.5 555.8 L858.7 558.0 L868.9 559.8 L879.0 561.4 L889.3 563.1 L899.5 564.7 L909.7 566.2 L919.9 567.6 L930.0 568.9 L940.2 570.0 L950.4 571.1 L960.6 572.1 L970.7 573.0 L980.9 573.8 L991.0 574.6 L1001.1 575.4 L1011.2 576.0 L1021.3 576.7 L1031.4 577.3 L1041.5 577.8 L1051.6 578.4"/><path d="M554.7 423.7 L569.5 434.2 L581.7 442.3 L593.1 449.5 L604.0 456.3 L614.6 462.7 L625.0 468.9 L635.2 474.8 L645.4 480.5 L655.4 486.2 L665.3 491.8 L675.1 497.3 L684.9 502.7 L694.7 508.0 L704.6 513.0 L714.5 517.8 L724.5 522.4 L734.5 526.7 L744.5 531.0 L754.6 535.0 L764.6 538.9 L774.6 542.6 L784.6 546.2 L794.6 549.7 L804.6 553.0 L814.6 556.2 L824.7 559.1 L834.8 561.8 L845.0 564.3 L855.1 566.6 L865.3 568.5 L875.4 570.1 L885.6 571.9 L895.8 573.6 L905.9 575.2 L916.1 576.6 L926.2 578.0 L936.4 579.2 L946.5 580.3 L956.6 581.3 L966.7 582.3 L976.8 583.2 L986.9 584.1 L996.9 584.9 L1007.0 585.6 L1017.0 586.3 L1027.1 587.0 L1037.1 587.6 L1047.1 588.2"/><path d="M551.3 427.5 L566.4 438.5 L578.7 447.0 L590.1 454.5 L601.1 461.6 L611.7 468.4 L622.1 474.9 L632.3 481.1 L642.4 487.1 L652.4 493.0 L662.3 498.8 L672.0 504.6 L681.8 510.2 L691.5 515.6 L701.3 520.8 L711.2 525.8 L721.1 530.5 L731.1 535.0 L741.1 539.3 L751.1 543.4 L761.1 547.3 L771.1 551.1 L781.1 554.8 L791.1 558.2 L801.1 561.6 L811.1 564.7 L821.2 567.7 L831.3 570.4 L841.4 573.0 L851.5 575.3 L861.7 577.3 L871.8 579.0 L881.9 580.9 L892.0 582.6 L902.1 584.3 L912.2 585.8 L922.3 587.2 L932.4 588.4 L942.5 589.6 L952.5 590.7 L962.6 591.7 L972.6 592.7 L982.6 593.6 L992.6 594.4 L1002.6 595.2 L1012.6 596.0 L1022.6 596.7 L1032.5 597.4 L1042.5 598.1"/><path d="M547.9 431.2 L563.3 442.9 L575.7 451.7 L587.2 459.6 L598.2 467.0 L608.8 474.1 L619.2 480.9 L629.4 487.4 L639.5 493.7 L649.5 499.8 L659.2 505.9 L668.9 511.9 L678.6 517.7 L688.3 523.4 L698.0 528.7 L707.9 533.9 L717.8 538.7 L727.7 543.3 L737.7 547.7 L747.7 551.9 L757.7 555.9 L767.7 559.8 L777.7 563.4 L787.7 566.9 L797.6 570.3 L807.6 573.5 L817.7 576.4 L827.7 579.2 L837.8 581.8 L847.9 584.2 L858.0 586.2 L868.1 588.1 L878.1 590.0 L888.2 591.8 L898.3 593.5 L908.3 595.1 L918.4 596.5 L928.4 597.8 L938.4 599.1 L948.4 600.2 L958.4 601.3 L968.4 602.3 L978.3 603.2 L988.3 604.1 L998.2 605.0 L1008.1 605.8 L1018.0 606.6 L1027.9 607.3 L1037.8 608.1"/><path d="M544.5 435.0 L560.3 447.2 L572.8 456.4 L584.3 464.7 L595.3 472.5 L605.9 479.9 L616.3 486.9 L626.5 493.7 L636.6 500.3 L646.5 506.7 L656.2 513.1 L665.9 519.3 L675.5 525.3 L685.1 531.2 L694.8 536.7 L704.6 542.0 L714.4 547.0 L724.3 551.7 L734.3 556.2 L744.2 560.5 L754.2 564.6 L764.2 568.5 L774.2 572.2 L784.1 575.7 L794.1 579.1 L804.1 582.3 L814.1 585.3 L824.1 588.1 L834.2 590.7 L844.2 593.1 L854.3 595.3 L864.3 597.3 L874.3 599.2 L884.3 601.1 L894.3 602.9 L904.3 604.5 L914.3 606.0 L924.3 607.3 L934.3 608.6 L944.2 609.8 L954.1 610.9 L964.0 611.9 L973.9 612.9 L983.8 613.9 L993.6 614.8 L1003.5 615.7 L1013.3 616.5 L1023.1 617.3 L1032.9 618.1"/><path d="M541.1 438.7 L557.2 451.6 L569.8 461.2 L581.5 469.8 L592.5 478.0 L603.1 485.7 L613.5 493.1 L623.7 500.1 L633.7 507.0 L643.6 513.6 L653.3 520.2 L662.8 526.7 L672.4 533.0 L681.9 539.0 L691.6 544.7 L701.3 550.2 L711.1 555.3 L721.0 560.2 L730.9 564.8 L740.8 569.2 L750.7 573.3 L760.7 577.3 L770.6 581.1 L780.6 584.6 L790.5 588.0 L800.5 591.3 L810.5 594.3 L820.5 597.1 L830.5 599.8 L840.5 602.3 L850.5 604.5 L860.4 606.5 L870.4 608.6 L880.3 610.5 L890.3 612.3 L900.2 614.0 L910.1 615.5 L920.0 616.9 L929.9 618.2 L939.8 619.4 L949.6 620.6 L959.5 621.7 L969.3 622.7 L979.1 623.7 L988.8 624.6 L998.6 625.5 L1008.3 626.4 L1018.0 627.2 L1027.7 628.1"/><path d="M538.1 442.8 L554.5 456.3 L567.3 466.2 L579.0 475.2 L590.0 483.7 L600.6 491.7 L610.9 499.4 L621.1 506.8 L631.1 513.8 L640.9 520.8 L650.5 527.6 L660.0 534.3 L669.5 540.8 L679.0 547.1 L688.5 553.0 L698.2 558.6 L707.9 563.9 L717.7 568.8 L727.6 573.6 L737.5 578.0 L747.4 582.3 L757.3 586.3 L767.2 590.1 L777.1 593.7 L787.0 597.2 L797.0 600.5 L806.9 603.5 L816.9 606.4 L826.8 609.1 L836.7 611.6 L846.7 613.9 L856.6 616.0 L866.5 618.1 L876.4 620.1 L886.2 621.9 L896.1 623.6 L905.9 625.2 L915.8 626.6 L925.6 627.9 L935.4 629.2 L945.1 630.4 L954.9 631.5 L964.6 632.6 L974.3 633.6 L984.0 634.5 L993.7 635.5 L1003.3 636.4 L1012.9 637.3 L1022.5 638.2"/><path d="M535.2 447.0 L552.0 461.0 L564.8 471.4 L576.6 480.8 L587.6 489.6 L598.2 497.9 L608.5 505.9 L618.7 513.5 L628.6 520.9 L638.3 528.1 L647.9 535.2 L657.3 542.1 L666.7 548.8 L676.1 555.2 L685.6 561.4 L695.1 567.1 L704.8 572.6 L714.6 577.6 L724.4 582.5 L734.2 587.1 L744.1 591.4 L753.9 595.5 L763.8 599.3 L773.7 603.0 L783.6 606.5 L793.5 609.8 L803.4 612.9 L813.2 615.8 L823.1 618.5 L833.0 621.1 L842.9 623.4 L852.7 625.6 L862.6 627.7 L872.4 629.8 L882.2 631.6 L892.0 633.4 L901.7 635.0 L911.5 636.4 L921.2 637.8 L930.9 639.1 L940.6 640.3 L950.3 641.4 L959.9 642.5 L969.5 643.6 L979.1 644.6 L988.7 645.6 L998.2 646.5 L1007.8 647.5 L1017.2 648.4"/><path d="M532.3 451.1 L549.5 465.9 L562.4 476.7 L574.2 486.4 L585.3 495.5 L595.9 504.2 L606.2 512.4 L616.3 520.4 L626.2 528.0 L635.8 535.4 L645.3 542.8 L654.6 549.9 L663.9 556.9 L673.2 563.5 L682.6 569.8 L692.1 575.8 L701.8 581.3 L711.5 586.5 L721.2 591.5 L731.0 596.2 L740.8 600.6 L750.6 604.8 L760.5 608.7 L770.3 612.4 L780.1 615.9 L790.0 619.3 L799.8 622.4 L809.6 625.3 L819.5 628.1 L829.3 630.7 L839.1 633.1 L848.9 635.4 L858.6 637.5 L868.4 639.6 L878.1 641.5 L887.8 643.3 L897.5 644.9 L907.2 646.4 L916.8 647.8 L926.5 649.1 L936.1 650.3 L945.7 651.5 L955.2 652.6 L964.7 653.7 L974.2 654.7 L983.7 655.7 L993.1 656.7 L1002.6 657.7 L1012.0 658.7"/><path d="M529.5 455.3 L547.0 470.7 L560.1 481.9 L571.9 492.0 L583.0 501.4 L593.6 510.4 L603.8 519.0 L613.9 527.2 L623.7 535.1 L633.3 542.8 L642.7 550.4 L652.0 557.8 L661.2 565.0 L670.4 571.8 L679.7 578.4 L689.2 584.5 L698.7 590.2 L708.4 595.5 L718.0 600.6 L727.8 605.4 L737.5 609.9 L747.3 614.2 L757.1 618.2 L766.9 621.9 L776.7 625.5 L786.4 628.9 L796.2 632.1 L806.0 635.0 L815.8 637.9 L825.5 640.5 L835.3 643.0 L845.0 645.3 L854.7 647.5 L864.4 649.6 L874.0 651.5 L883.7 653.3 L893.3 655.0 L902.9 656.5 L912.4 657.9 L922.0 659.2 L931.5 660.5 L941.0 661.7 L950.5 662.8 L959.9 663.9 L969.3 665.0 L978.7 666.0 L988.0 667.1 L997.3 668.1 L1006.6 669.1"/><path d="M526.6 459.5 L544.5 475.5 L557.7 487.2 L569.6 497.6 L580.7 507.4 L591.3 516.8 L601.5 525.6 L611.5 534.1 L621.3 542.3 L630.9 550.3 L640.2 558.1 L649.4 565.8 L658.5 573.2 L667.6 580.2 L676.8 587.0 L686.2 593.3 L695.7 599.1 L705.3 604.6 L714.9 609.8 L724.6 614.7 L734.3 619.3 L744.0 623.7 L753.7 627.7 L763.5 631.6 L773.2 635.2 L782.9 638.7 L792.7 641.9 L802.4 644.9 L812.1 647.8 L821.8 650.5 L831.5 653.0 L841.1 655.3 L850.7 657.6 L860.3 659.7 L869.9 661.7 L879.5 663.5 L889.0 665.2 L898.5 666.7 L908.0 668.2 L917.5 669.5 L926.9 670.8 L936.3 672.0 L945.7 673.2 L955.0 674.3 L964.3 675.4 L973.6 676.4 L982.8 677.5 L992.1 678.5 L1001.2 679.6"/><path d="M523.7 463.7 L542.0 480.4 L555.4 492.5 L567.4 503.3 L578.5 513.5 L589.0 523.1 L599.2 532.3 L609.2 541.1 L619.0 549.5 L628.4 557.7 L637.6 565.9 L646.7 573.8 L655.7 581.4 L664.8 588.7 L673.9 595.6 L683.2 602.1 L692.6 608.1 L702.1 613.8 L711.7 619.1 L721.3 624.1 L730.9 628.8 L740.6 633.2 L750.2 637.4 L759.9 641.3 L769.6 645.0 L779.2 648.5 L788.9 651.7 L798.5 654.8 L808.2 657.7 L817.8 660.4 L827.4 663.0 L836.9 665.4 L846.5 667.6 L856.0 669.8 L865.4 671.8 L874.9 673.6 L884.3 675.3 L893.7 676.8 L903.1 678.3 L912.5 679.6 L921.8 680.9 L931.1 682.1 L940.3 683.2 L949.5 684.4 L958.7 685.5 L967.8 686.5 L976.9 687.6 L986.0 688.6 L995.0 689.7"/><path d="M520.9 467.8 L539.5 485.2 L553.0 497.8 L565.1 509.0 L576.3 519.5 L586.8 529.5 L597.0 539.0 L606.9 548.1 L616.6 556.8 L626.0 565.3 L635.1 573.7 L644.1 581.8 L653.0 589.7 L662.0 597.2 L671.0 604.3 L680.2 611.0 L689.6 617.2 L699.0 623.0 L708.5 628.4 L718.0 633.6 L727.5 638.4 L737.1 642.9 L746.7 647.1 L756.3 651.1 L765.9 654.9 L775.5 658.4 L785.1 661.7 L794.6 664.8 L804.2 667.7 L813.7 670.5 L823.2 673.1 L832.6 675.5 L842.1 677.7 L851.5 679.9 L860.8 681.9 L870.2 683.7 L879.5 685.5 L888.8 687.0 L898.0 688.4 L907.3 689.7 L916.5 691.0 L925.6 692.2 L934.7 693.3 L943.8 694.4 L952.8 695.5 L961.8 696.6 L970.8 697.7 L979.7 698.7 L988.5 699.8"/><path d="M518.0 472.0 L537.1 490.1 L550.7 503.1 L562.9 514.8 L574.0 525.6 L584.6 536.0 L594.7 545.8 L604.6 555.1 L614.3 564.1 L623.6 572.9 L632.6 581.5 L641.5 589.9 L650.4 598.0 L659.2 605.8 L668.2 613.2 L677.3 620.0 L686.5 626.4 L695.9 632.3 L705.3 637.9 L714.7 643.1 L724.2 648.1 L733.7 652.7 L743.2 657.0 L752.7 661.0 L762.2 664.8 L771.7 668.4 L781.2 671.8 L790.7 674.9 L800.1 677.9 L809.6 680.7 L818.9 683.3 L828.3 685.7 L837.6 688.0 L846.9 690.2 L856.2 692.2 L865.4 694.0 L874.6 695.7 L883.8 697.2 L892.9 698.7 L902.0 699.9 L911.1 701.2 L920.1 702.4 L929.1 703.5 L938.0 704.6 L946.9 705.7 L955.7 706.8 L964.5 707.8 L973.3 708.9 L982.0 710.0"/></g><clipPath id="cw"><polygon points="945,306 960,310 1022,331 1085,348 1147,363 1180,370 1130,374 1080,377 1030,380 984,382 950,384"/></clipPath><g clip-path="url(#cw)" fill="none" stroke="#000" stroke-width="1"><path d="M1180 370 L975 316.0"/><path d="M1180 370 L975 319.3"/><path d="M1180 370 L975 322.6"/><path d="M1180 370 L975 325.9"/><path d="M1180 370 L975 329.2"/><path d="M1180 370 L975 332.5"/><path d="M1180 370 L975 335.8"/><path d="M1180 370 L975 339.1"/><path d="M1180 370 L975 342.4"/><path d="M1180 370 L975 345.7"/><path d="M1180 370 L975 349.0"/><path d="M1180 370 L975 352.3"/><path d="M1180 370 L975 355.7"/><path d="M1180 370 L975 359.0"/><path d="M1180 370 L975 362.3"/><path d="M1180 370 L975 365.6"/><path d="M1180 370 L975 368.9"/><path d="M1180 370 L975 372.2"/><path d="M1180 370 L975 375.5"/><path d="M1180 370 L975 378.8"/><path d="M1180 370 L975 382.1"/><path d="M1180 370 L975 385.4"/><path d="M1180 370 L975 388.7"/><path d="M1180 370 L975 392.0"/><path d="M975.0 300 L949.0 392"/><path d="M978.6 300 L952.6 392"/><path d="M982.2 300 L956.2 392"/><path d="M985.8 300 L959.8 392"/><path d="M989.4 300 L963.4 392"/><path d="M993.0 300 L967.0 392"/><path d="M996.6 300 L970.6 392"/><path d="M1000.2 300 L974.2 392"/><path d="M1003.8 300 L977.8 392"/><path d="M1007.4 300 L981.4 392"/><path d="M1011.0 300 L985.0 392"/><path d="M1014.6 300 L988.6 392"/><path d="M1018.2 300 L992.2 392"/><path d="M1021.8 300 L995.8 392"/><path d="M1025.4 300 L999.4 392"/><path d="M1029.0 300 L1003.0 392"/><path d="M1032.6 300 L1006.6 392"/><path d="M1036.2 300 L1010.2 392"/><path d="M1039.8 300 L1013.8 392"/><path d="M1043.4 300 L1017.4 392"/><path d="M1047.0 300 L1021.0 392"/><path d="M1050.6 300 L1024.6 392"/><path d="M1054.2 300 L1028.2 392"/><path d="M1057.8 300 L1031.8 392"/><path d="M1061.4 300 L1035.4 392"/><path d="M1065.0 300 L1039.0 392"/><path d="M1068.6 300 L1042.6 392"/><path d="M1072.2 300 L1046.2 392"/><path d="M1075.8 300 L1049.8 392"/><path d="M1079.4 300 L1053.4 392"/><path d="M1083.0 300 L1057.0 392"/><path d="M1086.6 300 L1060.6 392"/><path d="M1090.2 300 L1064.2 392"/><path d="M1093.8 300 L1067.8 392"/><path d="M1097.4 300 L1071.4 392"/><path d="M1101.0 300 L1075.0 392"/><path d="M1104.6 300 L1078.6 392"/><path d="M1108.2 300 L1082.2 392"/><path d="M1111.8 300 L1085.8 392"/><path d="M1115.4 300 L1089.4 392"/><path d="M1119.0 300 L1093.0 392"/><path d="M1122.6 300 L1096.6 392"/><path d="M1126.2 300 L1100.2 392"/><path d="M1129.8 300 L1103.8 392"/><path d="M1133.4 300 L1107.4 392"/><path d="M1137.0 300 L1111.0 392"/><path d="M1140.6 300 L1114.6 392"/><path d="M1144.2 300 L1118.2 392"/><path d="M1147.8 300 L1121.8 392"/><path d="M1151.4 300 L1125.4 392"/><path d="M1155.0 300 L1129.0 392"/><path d="M1158.6 300 L1132.6 392"/><path d="M1162.2 300 L1136.2 392"/><path d="M1165.8 300 L1139.8 392"/><path d="M1169.4 300 L1143.4 392"/><path d="M1173.0 300 L1147.0 392"/><path d="M1176.6 300 L1150.6 392"/><path d="M1180.2 300 L1154.2 392"/><path d="M1183.8 300 L1157.8 392"/><path d="M1187.4 300 L1161.4 392"/></g><polygon points="960,310 1022,331 1085,348 1147,363 1180,370 1120,364 1060,354 1000,340 975,333" fill="#000" opacity="0.6"/><g clip-path="url(#c2)" fill="none" stroke="#000" stroke-width="1"><path d="M670 306 L600 373.0"/><path d="M670 306 L605 367.5"/><path d="M670 306 L610 362.0"/><path d="M670 306 L615 356.5"/><path d="M670 306 L620 351.0"/><path d="M670 306 L625 345.5"/><path d="M670 306 L630 340.0"/><path d="M670 306 L635 334.5"/><path d="M670 306 L640 329.0"/><path d="M670 306 L645 323.5"/><path d="M670 306 L650 318.0"/><path d="M670 306 L655 312.5"/><path d="M670 306 L660 307.0"/><path d="M670 306 L665 301.5"/></g><g clip-path="url(#c3)" fill="none" stroke="#000" stroke-width="1"><path d="M1164.9 704.4 L1165.8 703.1 L1166.5 701.7 L1166.9 700.3 L1167.1 698.9 L1166.9 697.4 L1166.4 696.0 L1165.7 694.6 L1164.7 693.3 L1163.5 692.0 L1162.0 690.8 L1160.2 689.7 L1158.3 688.6 L1156.1 687.6 L1153.7 686.8 L1151.2 686.1 L1148.6 685.5 L1145.9 685.0 L1143.0 684.6 L1140.2 684.4 L1137.3 684.4 L1134.3 684.4 L1131.5 684.6 L1128.6 685.0 L1125.9 685.5 L1123.3 686.1 L1120.8 686.8 L1118.4 687.6 L1116.3 688.6 L1114.3 689.7 L1112.5 690.8 L1111.0 692.0 L1109.8 693.3 L1108.8 694.6 L1108.1 696.0 L1107.6 697.4 L1107.5 698.9 L1107.6 700.3 L1108.0 701.7 L1108.7 703.1 L1109.6 704.4"/><path d="M1167.7 702.5 L1168.8 700.8 L1169.5 699.0 L1170.0 697.2 L1170.1 695.4 L1169.9 693.5 L1169.4 691.7 L1168.6 690.0 L1167.6 688.3 L1166.2 686.6 L1164.5 685.1 L1162.6 683.6 L1160.5 682.2 L1158.1 681.0 L1155.5 679.9 L1152.8 679.0 L1149.9 678.2 L1146.9 677.6 L1143.8 677.2 L1140.7 676.9 L1137.5 676.8 L1134.3 676.9 L1131.2 677.2 L1128.1 677.6 L1125.1 678.2 L1122.2 679.0 L1119.5 679.9 L1116.9 681.0 L1114.5 682.2 L1112.4 683.6 L1110.5 685.1 L1108.8 686.6 L1107.5 688.3 L1106.4 690.0 L1105.6 691.7 L1105.1 693.5 L1104.9 695.4 L1105.0 697.2 L1105.5 699.0 L1106.2 700.8 L1107.3 702.5"/><path d="M1170.6 700.6 L1171.7 698.5 L1172.5 696.3 L1173.0 694.1 L1173.2 691.9 L1173.0 689.7 L1172.4 687.5 L1171.6 685.4 L1170.4 683.3 L1168.9 681.3 L1167.1 679.4 L1165.0 677.6 L1162.7 676.0 L1160.1 674.5 L1157.3 673.2 L1154.4 672.1 L1151.2 671.1 L1148.0 670.4 L1144.6 669.9 L1141.2 669.5 L1137.8 669.4 L1134.3 669.5 L1130.9 669.9 L1127.5 670.4 L1124.3 671.1 L1121.1 672.1 L1118.2 673.2 L1115.4 674.5 L1112.8 676.0 L1110.5 677.6 L1108.4 679.4 L1106.6 681.3 L1105.1 683.3 L1103.9 685.4 L1103.1 687.5 L1102.5 689.7 L1102.4 691.9 L1102.5 694.1 L1103.0 696.3 L1103.8 698.5 L1104.9 700.6"/><path d="M1173.4 698.7 L1174.7 696.3 L1175.5 693.7 L1176.1 691.2 L1176.2 688.6 L1176.0 686.0 L1175.4 683.4 L1174.5 680.9 L1173.2 678.5 L1171.6 676.1 L1169.7 673.9 L1167.4 671.8 L1164.9 669.9 L1162.2 668.2 L1159.1 666.6 L1155.9 665.3 L1152.6 664.2 L1149.0 663.3 L1145.4 662.7 L1141.7 662.3 L1138.0 662.2 L1134.3 662.3 L1130.6 662.7 L1127.0 663.3 L1123.5 664.2 L1120.1 665.3 L1116.9 666.6 L1113.9 668.2 L1111.1 669.9 L1108.6 671.8 L1106.3 673.9 L1104.4 676.1 L1102.8 678.5 L1101.5 680.9 L1100.6 683.4 L1100.0 686.0 L1099.8 688.6 L1100.0 691.2 L1100.5 693.7 L1101.4 696.3 L1102.6 698.7"/><path d="M1176.3 696.9 L1177.6 694.1 L1178.5 691.2 L1179.1 688.3 L1179.3 685.3 L1179.0 682.4 L1178.4 679.4 L1177.4 676.5 L1176.1 673.8 L1174.3 671.1 L1172.3 668.5 L1169.9 666.2 L1167.2 664.0 L1164.2 662.0 L1160.9 660.2 L1157.5 658.7 L1153.9 657.4 L1150.1 656.4 L1146.2 655.7 L1142.3 655.3 L1138.3 655.1 L1134.3 655.3 L1130.3 655.7 L1126.4 656.4 L1122.6 657.4 L1119.0 658.7 L1115.6 660.2 L1112.3 662.0 L1109.4 664.0 L1106.7 666.2 L1104.3 668.5 L1102.2 671.1 L1100.5 673.8 L1099.1 676.5 L1098.1 679.4 L1097.5 682.4 L1097.3 685.3 L1097.4 688.3 L1098.0 691.2 L1098.9 694.1 L1100.2 696.9"/><path d="M1179.1 695.2 L1180.5 692.0 L1181.5 688.8 L1182.1 685.5 L1182.3 682.2 L1182.1 678.8 L1181.4 675.5 L1180.4 672.3 L1178.9 669.2 L1177.0 666.2 L1174.8 663.3 L1172.3 660.7 L1169.4 658.2 L1166.2 656.0 L1162.8 654.0 L1159.1 652.3 L1155.2 650.9 L1151.2 649.8 L1147.0 648.9 L1142.8 648.5 L1138.5 648.3 L1134.2 648.5 L1130.0 648.9 L1125.9 649.8 L1121.8 650.9 L1117.9 652.3 L1114.3 654.0 L1110.8 656.0 L1107.6 658.2 L1104.8 660.7 L1102.2 663.3 L1100.0 666.2 L1098.1 669.2 L1096.7 672.3 L1095.6 675.5 L1095.0 678.8 L1094.7 682.2 L1094.9 685.5 L1095.5 688.8 L1096.5 692.0 L1097.9 695.2"/><path d="M1182.0 693.5 L1183.5 690.0 L1184.5 686.4 L1185.2 682.8 L1185.4 679.1 L1185.1 675.4 L1184.4 671.8 L1183.3 668.2 L1181.7 664.8 L1179.8 661.4 L1177.4 658.3 L1174.7 655.3 L1171.6 652.6 L1168.2 650.1 L1164.6 648.0 L1160.6 646.1 L1156.5 644.5 L1152.2 643.3 L1147.8 642.4 L1143.3 641.8 L1138.8 641.7 L1134.2 641.8 L1129.7 642.4 L1125.3 643.3 L1121.0 644.5 L1116.9 646.1 L1113.0 648.0 L1109.3 650.1 L1105.9 652.6 L1102.9 655.3 L1100.1 658.3 L1097.8 661.4 L1095.8 664.8 L1094.2 668.2 L1093.1 671.8 L1092.4 675.4 L1092.2 679.1 L1092.4 682.8 L1093.0 686.4 L1094.1 690.0 L1095.6 693.5"/><path d="M1184.8 691.9 L1186.4 688.1 L1187.5 684.2 L1188.2 680.2 L1188.4 676.2 L1188.1 672.1 L1187.4 668.1 L1186.2 664.2 L1184.6 660.5 L1182.5 656.8 L1180.0 653.4 L1177.1 650.2 L1173.8 647.2 L1170.2 644.5 L1166.4 642.1 L1162.2 640.0 L1157.8 638.3 L1153.3 637.0 L1148.6 636.0 L1143.8 635.4 L1139.0 635.2 L1134.2 635.4 L1129.4 636.0 L1124.7 637.0 L1120.2 638.3 L1115.8 640.0 L1111.7 642.1 L1107.8 644.5 L1104.2 647.2 L1101.0 650.2 L1098.1 653.4 L1095.6 656.8 L1093.5 660.5 L1091.8 664.2 L1090.6 668.1 L1089.9 672.1 L1089.6 676.2 L1089.8 680.2 L1090.5 684.2 L1091.6 688.1 L1093.2 691.9"/><ellipse cx="1139.3" cy="674.4" rx="52.2" ry="44.7"/><ellipse cx="1139.8" cy="672.5" rx="58.0" ry="51.5"/><ellipse cx="1140.3" cy="670.9" rx="63.8" ry="58.0"/><ellipse cx="1140.8" cy="669.5" rx="69.6" ry="64.3"/><ellipse cx="1141.4" cy="668.3" rx="75.4" ry="70.5"/><ellipse cx="1141.9" cy="667.2" rx="81.2" ry="76.5"/><ellipse cx="1142.4" cy="666.2" rx="87.0" ry="82.4"/><ellipse cx="1142.9" cy="665.2" rx="92.8" ry="88.3"/><ellipse cx="1143.4" cy="664.3" rx="98.6" ry="94.1"/><ellipse cx="1144.0" cy="663.5" rx="104.4" ry="99.9"/><ellipse cx="1144.5" cy="662.6" rx="110.2" ry="105.7"/><ellipse cx="1145.2" cy="661.5" rx="117.6" ry="113.1"/><ellipse cx="1145.8" cy="660.4" rx="125.0" ry="120.5"/><ellipse cx="1146.5" cy="659.3" rx="132.4" ry="127.9"/><ellipse cx="1147.2" cy="658.2" rx="139.8" ry="135.3"/><ellipse cx="1147.8" cy="657.0" rx="147.2" ry="142.8"/><ellipse cx="1148.5" cy="655.8" rx="154.6" ry="150.2"/><ellipse cx="1149.2" cy="654.6" rx="162.0" ry="157.7"/><ellipse cx="1149.8" cy="653.4" rx="169.4" ry="165.3"/><ellipse cx="1150.5" cy="652.1" rx="176.8" ry="172.8"/><ellipse cx="1151.1" cy="650.8" rx="184.2" ry="180.4"/><ellipse cx="1151.8" cy="649.5" rx="191.6" ry="188.0"/><ellipse cx="1152.5" cy="648.2" rx="199.0" ry="195.6"/><ellipse cx="1153.1" cy="646.8" rx="206.4" ry="203.3"/><ellipse cx="1153.8" cy="645.4" rx="213.8" ry="211.0"/><ellipse cx="1154.5" cy="644.0" rx="221.2" ry="218.7"/><ellipse cx="1155.1" cy="642.6" rx="228.6" ry="226.4"/><ellipse cx="1155.8" cy="641.1" rx="236.0" ry="234.2"/><ellipse cx="1156.5" cy="639.6" rx="243.4" ry="242.0"/><ellipse cx="1157.1" cy="638.0" rx="250.8" ry="249.8"/><ellipse cx="1157.8" cy="636.5" rx="258.2" ry="257.6"/><ellipse cx="1158.5" cy="634.9" rx="265.6" ry="265.5"/><ellipse cx="1159.1" cy="633.3" rx="273.0" ry="273.4"/><ellipse cx="1159.8" cy="631.7" rx="280.4" ry="281.3"/><ellipse cx="1160.5" cy="630.0" rx="287.8" ry="289.3"/><ellipse cx="1161.1" cy="628.3" rx="295.2" ry="297.3"/><ellipse cx="1161.8" cy="626.6" rx="302.6" ry="305.3"/><ellipse cx="1162.5" cy="624.8" rx="310.0" ry="313.3"/><ellipse cx="1163.1" cy="623.0" rx="317.4" ry="321.4"/><ellipse cx="1163.8" cy="621.2" rx="324.8" ry="329.5"/><ellipse cx="1164.5" cy="619.4" rx="332.2" ry="337.6"/><ellipse cx="1165.1" cy="617.5" rx="339.6" ry="345.8"/><ellipse cx="1165.8" cy="615.7" rx="347.0" ry="353.9"/><ellipse cx="1166.5" cy="613.7" rx="354.4" ry="362.1"/><ellipse cx="1167.1" cy="611.8" rx="361.8" ry="370.4"/><ellipse cx="1167.8" cy="609.8" rx="369.2" ry="378.6"/><ellipse cx="1168.5" cy="607.8" rx="376.6" ry="386.9"/><ellipse cx="1169.1" cy="605.8" rx="384.0" ry="395.2"/><ellipse cx="1169.8" cy="603.8" rx="391.4" ry="403.6"/><ellipse cx="1170.5" cy="601.7" rx="398.8" ry="411.9"/><ellipse cx="1171.1" cy="599.6" rx="406.2" ry="420.3"/><ellipse cx="1171.8" cy="597.5" rx="413.6" ry="428.8"/><path d="M1164.0 702.2 L1164.6 701.5 L1165.8 700.0 L1167.5 698.0 L1169.6 695.6 L1172.0 692.8 L1174.7 689.7 L1177.8 686.4 L1181.0 682.9 L1184.6 679.3 L1188.4 675.5 L1192.4 673.0 L1196.6 671.6 L1201.1 670.3 L1205.7 669.1 L1210.6 667.9 L1215.7 666.8 L1220.9 665.8 L1226.4 664.7 L1232.0 663.8 L1237.8 662.8 L1243.8 661.8 L1250.0 660.8 L1256.3 659.8 L1262.8 658.8 L1269.5 657.7 L1276.4 656.6 L1283.3 655.5 L1290.5 654.3 L1297.8 653.1 L1305.3 651.9 L1312.9 650.5 L1320.6 649.2 L1328.5 647.8 L1336.6 646.3 L1344.8 644.8 L1353.1 643.2 L1361.6 641.6 L1370.2 639.9 L1379.0 638.1 L1387.8 636.3 L1396.9 634.4 L1406.0 632.5 L1415.3 630.5 L1424.7 628.4 L1434.3 626.3 L1443.9 624.1 L1453.7 621.8 L1463.7 619.5 L1473.7 617.0 L1483.9 614.5 L1494.2 612.0 L1504.6 609.3 L1515.2 606.6 L1525.8 603.8 L1536.6 600.9 L1547.5 597.9 L1558.5 594.9 L1569.6 591.7 L1580.9 588.5 L1592.3 585.2"/><path d="M1163.9 701.7 L1164.5 701.0 L1165.8 699.4 L1167.5 697.3 L1169.5 694.8 L1172.0 691.8 L1174.7 688.6 L1177.7 685.1 L1180.9 681.4 L1184.5 677.5 L1188.2 673.6 L1192.2 670.8 L1196.5 669.2 L1200.9 667.7 L1205.6 666.2 L1210.4 664.8 L1215.5 663.5 L1220.7 662.2 L1226.2 661.0 L1231.8 659.7 L1237.6 658.5 L1243.6 657.3 L1249.8 656.0 L1256.1 654.7 L1262.6 653.4 L1269.2 652.1 L1276.1 650.7 L1283.0 649.2 L1290.2 647.7 L1297.5 646.2 L1304.9 644.6 L1312.5 643.0 L1320.2 641.3 L1328.1 639.5 L1336.2 637.7 L1344.3 635.8 L1352.7 633.8 L1361.1 631.8 L1369.7 629.7 L1378.4 627.6 L1387.3 625.4 L1396.3 623.1 L1405.5 620.7 L1414.7 618.3 L1424.1 615.8 L1433.6 613.2 L1443.3 610.5 L1453.1 607.8 L1463.0 605.0 L1473.0 602.1 L1483.2 599.1 L1493.4 596.0 L1503.8 592.9 L1514.4 589.7 L1525.0 586.3 L1535.8 582.9 L1546.6 579.4 L1557.6 575.8 L1568.7 572.1 L1580.0 568.4 L1591.3 564.5"/><path d="M1163.8 701.2 L1164.4 700.4 L1165.7 698.8 L1167.3 696.6 L1169.4 693.9 L1171.8 690.8 L1174.5 687.4 L1177.5 683.7 L1180.7 679.8 L1184.3 675.8 L1188.0 671.6 L1192.0 668.7 L1196.2 666.8 L1200.6 665.1 L1205.3 663.4 L1210.1 661.8 L1215.2 660.2 L1220.4 658.7 L1225.8 657.2 L1231.4 655.7 L1237.2 654.2 L1243.2 652.7 L1249.3 651.2 L1255.6 649.6 L1262.0 648.0 L1268.7 646.4 L1275.5 644.7 L1282.4 643.0 L1289.5 641.2 L1296.8 639.3 L1304.2 637.4 L1311.8 635.4 L1319.5 633.4 L1327.3 631.3 L1335.3 629.1 L1343.5 626.8 L1351.8 624.5 L1360.2 622.1 L1368.7 619.6 L1377.4 617.1 L1386.3 614.4 L1395.2 611.7 L1404.3 609.0 L1413.6 606.1 L1422.9 603.2 L1432.4 600.1 L1442.0 597.0 L1451.8 593.8 L1461.6 590.5 L1471.6 587.2 L1481.7 583.7 L1492.0 580.2 L1502.3 576.5 L1512.8 572.8 L1523.4 568.9 L1534.1 565.0 L1544.9 561.0 L1555.9 556.8 L1566.9 552.6 L1578.1 548.3 L1589.4 543.8"/><path d="M1163.6 700.7 L1164.2 699.9 L1165.5 698.2 L1167.1 695.9 L1169.2 693.0 L1171.6 689.8 L1174.2 686.2 L1177.2 682.4 L1180.5 678.3 L1184.0 674.0 L1187.7 669.7 L1191.6 666.5 L1195.8 664.5 L1200.2 662.5 L1204.8 660.6 L1209.6 658.7 L1214.7 656.9 L1219.9 655.2 L1225.2 653.4 L1230.8 651.7 L1236.6 650.0 L1242.5 648.2 L1248.6 646.4 L1254.8 644.6 L1261.3 642.7 L1267.8 640.8 L1274.6 638.8 L1281.5 636.8 L1288.6 634.6 L1295.8 632.5 L1303.1 630.2 L1310.7 627.9 L1318.3 625.5 L1326.1 623.1 L1334.1 620.5 L1342.2 617.9 L1350.4 615.2 L1358.8 612.4 L1367.3 609.6 L1375.9 606.6 L1384.7 603.6 L1393.6 600.5 L1402.6 597.3 L1411.8 594.0 L1421.1 590.6 L1430.5 587.1 L1440.1 583.6 L1449.8 579.9 L1459.6 576.2 L1469.5 572.3 L1479.5 568.4 L1489.7 564.4 L1500.0 560.2 L1510.4 556.0 L1520.9 551.6 L1531.6 547.2 L1542.4 542.6 L1553.2 537.9 L1564.2 533.2 L1575.3 528.3 L1586.6 523.3"/><path d="M1163.4 700.2 L1164.0 699.4 L1165.2 697.6 L1166.9 695.2 L1168.9 692.2 L1171.3 688.8 L1173.9 685.1 L1176.9 681.0 L1180.1 676.8 L1183.5 672.3 L1187.2 667.7 L1191.2 664.4 L1195.3 662.1 L1199.7 659.9 L1204.3 657.8 L1209.0 655.7 L1214.0 653.7 L1219.1 651.7 L1224.5 649.7 L1230.0 647.7 L1235.7 645.7 L1241.6 643.7 L1247.6 641.7 L1253.8 639.6 L1260.2 637.4 L1266.7 635.2 L1273.4 632.9 L1280.3 630.6 L1287.3 628.2 L1294.4 625.7 L1301.7 623.1 L1309.2 620.5 L1316.8 617.7 L1324.5 614.9 L1332.4 612.0 L1340.4 609.0 L1348.6 606.0 L1356.9 602.8 L1365.3 599.6 L1373.9 596.2 L1382.6 592.8 L1391.4 589.3 L1400.4 585.7 L1409.5 582.0 L1418.7 578.2 L1428.1 574.3 L1437.5 570.3 L1447.1 566.2 L1456.9 561.9 L1466.7 557.6 L1476.7 553.2 L1486.7 548.7 L1496.9 544.1 L1507.3 539.3 L1517.7 534.5 L1528.3 529.5 L1538.9 524.4 L1549.7 519.2 L1560.6 513.9 L1571.6 508.5 L1582.8 502.9"/><path d="M1163.1 699.7 L1163.7 698.8 L1164.9 697.0 L1166.5 694.4 L1168.5 691.4 L1170.9 687.8 L1173.5 683.9 L1176.4 679.7 L1179.6 675.2 L1183.0 670.6 L1186.7 665.8 L1190.6 662.3 L1194.7 659.8 L1199.0 657.4 L1203.5 655.0 L1208.2 652.7 L1213.1 650.5 L1218.2 648.2 L1223.5 646.0 L1229.0 643.8 L1234.6 641.6 L1240.4 639.3 L1246.4 637.0 L1252.6 634.6 L1258.9 632.2 L1265.3 629.7 L1272.0 627.1 L1278.7 624.5 L1285.7 621.8 L1292.7 619.0 L1300.0 616.1 L1307.3 613.1 L1314.9 610.0 L1322.5 606.9 L1330.3 603.6 L1338.3 600.3 L1346.3 596.9 L1354.6 593.3 L1362.9 589.7 L1371.4 586.0 L1380.0 582.2 L1388.7 578.2 L1397.6 574.2 L1406.6 570.1 L1415.7 565.9 L1425.0 561.5 L1434.3 557.1 L1443.8 552.5 L1453.5 547.9 L1463.2 543.1 L1473.1 538.2 L1483.0 533.2 L1493.1 528.1 L1503.4 522.8 L1513.7 517.5 L1524.1 512.0 L1534.7 506.4 L1545.4 500.7 L1556.1 494.8 L1567.0 488.8 L1578.1 482.7"/><path d="M1162.7 699.3 L1163.3 698.3 L1164.5 696.4 L1166.1 693.7 L1168.1 690.5 L1170.4 686.9 L1173.0 682.8 L1175.9 678.4 L1179.0 673.8 L1182.4 668.9 L1186.0 664.0 L1189.9 660.2 L1193.9 657.5 L1198.2 654.9 L1202.6 652.3 L1207.3 649.8 L1212.2 647.3 L1217.2 644.8 L1222.4 642.4 L1227.8 639.9 L1233.4 637.4 L1239.1 634.9 L1245.0 632.3 L1251.1 629.7 L1257.3 627.0 L1263.7 624.2 L1270.2 621.4 L1276.9 618.4 L1283.7 615.4 L1290.7 612.3 L1297.9 609.1 L1305.2 605.8 L1312.6 602.4 L1320.1 598.9 L1327.8 595.3 L1335.7 591.6 L1343.7 587.8 L1351.8 584.0 L1360.0 580.0 L1368.4 575.8 L1376.9 571.6 L1385.5 567.3 L1394.3 562.9 L1403.1 558.4 L1412.2 553.7 L1421.3 548.9 L1430.5 544.1 L1439.9 539.1 L1449.4 533.9 L1459.0 528.7 L1468.8 523.4 L1478.6 517.9 L1488.6 512.3 L1498.7 506.6 L1508.9 500.7 L1519.2 494.7 L1529.6 488.6 L1540.1 482.4 L1550.8 476.0 L1561.6 469.5 L1572.4 462.8"/><path d="M1162.3 698.8 L1162.9 697.8 L1164.0 695.8 L1165.6 693.1 L1167.6 689.7 L1169.9 685.9 L1172.4 681.7 L1175.3 677.1 L1178.4 672.3 L1181.7 667.3 L1185.3 662.1 L1189.0 658.1 L1193.0 655.2 L1197.2 652.4 L1201.6 649.6 L1206.2 646.9 L1211.0 644.2 L1216.0 641.5 L1221.1 638.8 L1226.4 636.1 L1231.9 633.4 L1237.5 630.6 L1243.4 627.8 L1249.3 624.9 L1255.5 621.9 L1261.7 618.9 L1268.2 615.7 L1274.8 612.5 L1281.5 609.2 L1288.4 605.8 L1295.4 602.3 L1302.6 598.6 L1309.9 594.9 L1317.4 591.1 L1325.0 587.2 L1332.7 583.1 L1340.5 579.0 L1348.5 574.7 L1356.6 570.4 L1364.9 565.9 L1373.3 561.3 L1381.8 556.6 L1390.4 551.7 L1399.1 546.8 L1408.0 541.7 L1417.0 536.5 L1426.1 531.2 L1435.4 525.8 L1444.7 520.2 L1454.2 514.6 L1463.8 508.7 L1473.5 502.8 L1483.3 496.7 L1493.2 490.5 L1503.3 484.2 L1513.4 477.7 L1523.7 471.1 L1534.1 464.3 L1544.6 457.4 L1555.2 450.4 L1565.9 443.2"/><path d="M1161.8 698.3 L1162.4 697.3 L1163.5 695.2 L1165.1 692.4 L1167.0 688.9 L1169.3 685.0 L1171.8 680.6 L1174.6 675.9 L1177.6 670.9 L1180.9 665.6 L1184.4 660.3 L1188.1 656.1 L1192.0 653.0 L1196.1 650.0 L1200.5 647.0 L1205.0 644.0 L1209.7 641.1 L1214.6 638.2 L1219.6 635.3 L1224.8 632.4 L1230.2 629.4 L1235.8 626.4 L1241.5 623.3 L1247.3 620.1 L1253.4 616.9 L1259.6 613.6 L1265.9 610.2 L1272.4 606.7 L1279.0 603.1 L1285.8 599.3 L1292.7 595.5 L1299.7 591.6 L1306.9 587.6 L1314.2 583.4 L1321.7 579.1 L1329.3 574.8 L1337.0 570.3 L1344.8 565.6 L1352.8 560.9 L1360.9 556.1 L1369.1 551.1 L1377.5 546.0 L1386.0 540.8 L1394.6 535.4 L1403.3 530.0 L1412.1 524.4 L1421.1 518.6 L1430.2 512.8 L1439.4 506.8 L1448.7 500.7 L1458.1 494.4 L1467.6 488.0 L1477.3 481.5 L1487.1 474.8 L1496.9 467.9 L1506.9 461.0 L1517.0 453.9 L1527.2 446.6 L1537.5 439.2 L1547.9 431.6 L1558.5 423.9"/><path d="M1161.3 697.9 L1161.8 696.8 L1163.0 694.7 L1164.5 691.7 L1166.4 688.2 L1168.6 684.1 L1171.1 679.5 L1173.8 674.6 L1176.8 669.4 L1180.0 664.1 L1183.4 658.5 L1187.0 654.1 L1190.9 650.8 L1194.9 647.6 L1199.2 644.4 L1203.6 641.2 L1208.2 638.1 L1213.0 635.0 L1217.9 631.8 L1223.1 628.7 L1228.3 625.5 L1233.8 622.2 L1239.4 618.9 L1245.1 615.5 L1251.0 612.0 L1257.1 608.4 L1263.3 604.7 L1269.7 601.0 L1276.2 597.1 L1282.8 593.1 L1289.6 588.9 L1296.5 584.7 L1303.5 580.3 L1310.7 575.9 L1318.0 571.3 L1325.4 566.6 L1333.0 561.7 L1340.7 556.8 L1348.5 551.7 L1356.5 546.5 L1364.5 541.1 L1372.7 535.6 L1381.1 530.0 L1389.5 524.3 L1398.0 518.4 L1406.7 512.4 L1415.5 506.3 L1424.4 500.0 L1433.4 493.6 L1442.5 487.0 L1451.8 480.3 L1461.1 473.5 L1470.6 466.5 L1480.1 459.3 L1489.8 452.0 L1499.6 444.6 L1509.5 437.0 L1519.5 429.3 L1529.6 421.3 L1539.8 413.3 L1550.2 405.0"/><path d="M1160.7 697.4 L1161.2 696.3 L1162.3 694.1 L1163.8 691.1 L1165.7 687.4 L1167.8 683.2 L1170.2 678.5 L1172.9 673.4 L1175.8 668.1 L1179.0 662.5 L1182.3 656.8 L1185.9 652.2 L1189.7 648.7 L1193.6 645.3 L1197.8 641.9 L1202.1 638.5 L1206.6 635.2 L1211.3 631.8 L1216.1 628.5 L1221.1 625.1 L1226.3 621.7 L1231.6 618.2 L1237.1 614.6 L1242.7 611.0 L1248.5 607.2 L1254.4 603.4 L1260.5 599.4 L1266.7 595.4 L1273.0 591.2 L1279.5 586.9 L1286.1 582.5 L1292.9 578.0 L1299.8 573.3 L1306.8 568.5 L1314.0 563.6 L1321.2 558.6 L1328.6 553.4 L1336.2 548.1 L1343.8 542.6 L1351.6 537.1 L1359.5 531.4 L1367.5 525.5 L1375.6 519.6 L1383.9 513.4 L1392.2 507.2 L1400.7 500.8 L1409.3 494.2 L1418.0 487.5 L1426.8 480.7 L1435.7 473.7 L1444.8 466.6 L1453.9 459.3 L1463.2 451.9 L1472.5 444.3 L1482.0 436.5 L1491.6 428.6 L1501.2 420.5 L1511.0 412.3 L1520.9 403.9 L1530.9 395.3 L1541.0 386.6"/><path d="M1160.1 697.0 L1160.6 695.9 L1161.7 693.6 L1163.1 690.4 L1164.9 686.7 L1167.0 682.3 L1169.4 677.5 L1172.0 672.2 L1174.8 666.7 L1177.9 661.0 L1181.2 655.1 L1184.6 650.3 L1188.3 646.6 L1192.2 643.0 L1196.2 639.4 L1200.4 635.9 L1204.8 632.3 L1209.4 628.8 L1214.1 625.2 L1219.0 621.6 L1224.0 617.9 L1229.2 614.2 L1234.6 610.4 L1240.0 606.5 L1245.7 602.6 L1251.5 598.5 L1257.4 594.3 L1263.4 589.9 L1269.6 585.5 L1276.0 580.9 L1282.4 576.2 L1289.0 571.4 L1295.7 566.4 L1302.6 561.3 L1309.6 556.1 L1316.6 550.7 L1323.9 545.3 L1331.2 539.6 L1338.7 533.8 L1346.3 527.9 L1353.9 521.9 L1361.8 515.7 L1369.7 509.3 L1377.7 502.8 L1385.9 496.2 L1394.2 489.4 L1402.5 482.5 L1411.0 475.4 L1419.6 468.1 L1428.3 460.8 L1437.1 453.2 L1446.1 445.5 L1455.1 437.6 L1464.2 429.6 L1473.5 421.4 L1482.8 413.0 L1492.2 404.5 L1501.8 395.8 L1511.4 386.9 L1521.2 377.8 L1531.0 368.6"/><path d="M1159.4 696.6 L1159.9 695.4 L1160.9 693.0 L1162.3 689.8 L1164.1 685.9 L1166.1 681.4 L1168.4 676.5 L1171.0 671.1 L1173.7 665.4 L1176.7 659.5 L1179.9 653.4 L1183.3 648.5 L1186.8 644.6 L1190.6 640.8 L1194.5 637.0 L1198.6 633.3 L1202.9 629.5 L1207.3 625.8 L1211.9 622.0 L1216.7 618.2 L1221.6 614.3 L1226.6 610.4 L1231.8 606.4 L1237.2 602.2 L1242.7 598.0 L1248.3 593.7 L1254.0 589.2 L1259.9 584.6 L1266.0 579.9 L1272.1 575.1 L1278.4 570.1 L1284.8 565.0 L1291.3 559.8 L1298.0 554.4 L1304.8 548.8 L1311.7 543.2 L1318.7 537.4 L1325.8 531.4 L1333.1 525.3 L1340.5 519.0 L1348.0 512.6 L1355.6 506.1 L1363.3 499.4 L1371.1 492.6 L1379.0 485.5 L1387.1 478.4 L1395.2 471.1 L1403.5 463.6 L1411.9 456.0 L1420.3 448.2 L1428.9 440.2 L1437.6 432.1 L1446.4 423.8 L1455.2 415.3 L1464.2 406.7 L1473.3 397.9 L1482.5 388.9 L1491.8 379.7 L1501.1 370.4 L1510.6 360.9 L1520.2 351.2"/><path d="M1158.6 696.2 L1159.1 695.0 L1160.1 692.5 L1161.5 689.2 L1163.2 685.2 L1165.2 680.6 L1167.4 675.5 L1169.9 670.0 L1172.5 664.2 L1175.4 658.1 L1178.5 651.8 L1181.8 646.7 L1185.3 642.7 L1188.9 638.7 L1192.7 634.7 L1196.7 630.8 L1200.8 626.8 L1205.1 622.9 L1209.6 618.9 L1214.2 614.9 L1219.0 610.8 L1223.9 606.7 L1228.9 602.4 L1234.1 598.1 L1239.4 593.6 L1244.9 589.1 L1250.4 584.4 L1256.2 579.5 L1262.0 574.6 L1268.0 569.5 L1274.1 564.2 L1280.3 558.8 L1286.6 553.3 L1293.1 547.6 L1299.7 541.8 L1306.4 535.8 L1313.2 529.7 L1320.1 523.4 L1327.1 517.0 L1334.3 510.4 L1341.6 503.7 L1348.9 496.8 L1356.4 489.8 L1364.0 482.6 L1371.7 475.2 L1379.5 467.7 L1387.4 460.0 L1395.4 452.2 L1403.5 444.1 L1411.7 436.0 L1420.0 427.6 L1428.5 419.1 L1437.0 410.4 L1445.6 401.5 L1454.3 392.4 L1463.1 383.2 L1472.0 373.8 L1481.0 364.2 L1490.1 354.4 L1499.3 344.4 L1508.6 334.3"/><path d="M1157.8 695.8 L1158.3 694.5 L1159.3 692.1 L1160.6 688.7 L1162.3 684.6 L1164.2 679.8 L1166.3 674.6 L1168.7 668.9 L1171.3 662.9 L1174.1 656.7 L1177.1 650.3 L1180.2 645.0 L1183.6 640.8 L1187.1 636.6 L1190.8 632.5 L1194.6 628.4 L1198.7 624.2 L1202.8 620.1 L1207.1 615.9 L1211.6 611.7 L1216.2 607.5 L1220.9 603.1 L1225.8 598.6 L1230.8 594.1 L1235.9 589.4 L1241.2 584.6 L1246.6 579.7 L1252.1 574.6 L1257.8 569.4 L1263.6 564.0 L1269.5 558.5 L1275.5 552.9 L1281.6 547.1 L1287.8 541.1 L1294.2 535.0 L1300.7 528.7 L1307.3 522.3 L1314.0 515.8 L1320.8 509.0 L1327.7 502.1 L1334.7 495.1 L1341.8 487.9 L1349.1 480.5 L1356.4 473.0 L1363.9 465.3 L1371.4 457.4 L1379.0 449.3 L1386.8 441.1 L1394.6 432.7 L1402.6 424.2 L1410.6 415.4 L1418.8 406.5 L1427.0 397.4 L1435.3 388.1 L1443.7 378.7 L1452.3 369.0 L1460.9 359.2 L1469.6 349.2 L1478.4 339.0 L1487.3 328.6 L1496.2 317.9"/><path d="M1157.0 695.4 L1157.4 694.1 L1158.4 691.6 L1159.7 688.1 L1161.3 683.9 L1163.1 679.1 L1165.2 673.7 L1167.5 667.9 L1170.0 661.8 L1172.7 655.4 L1175.5 648.8 L1178.6 643.4 L1181.8 639.0 L1185.2 634.7 L1188.8 630.3 L1192.5 626.0 L1196.3 621.7 L1200.3 617.4 L1204.5 613.1 L1208.8 608.7 L1213.2 604.2 L1217.8 599.6 L1222.5 595.0 L1227.3 590.2 L1232.3 585.3 L1237.4 580.3 L1242.6 575.1 L1247.9 569.8 L1253.3 564.4 L1258.9 558.8 L1264.6 553.0 L1270.4 547.1 L1276.3 541.1 L1282.3 534.8 L1288.4 528.5 L1294.7 521.9 L1301.0 515.2 L1307.5 508.4 L1314.0 501.4 L1320.7 494.2 L1327.5 486.8 L1334.3 479.3 L1341.3 471.6 L1348.4 463.7 L1355.6 455.7 L1362.8 447.5 L1370.2 439.1 L1377.7 430.5 L1385.2 421.8 L1392.9 412.9 L1400.6 403.8 L1408.5 394.5 L1416.4 385.0 L1424.4 375.3 L1432.5 365.5 L1440.8 355.4 L1449.1 345.2 L1457.4 334.8 L1465.9 324.1 L1474.5 313.3 L1483.1 302.3"/><path d="M1156.1 695.0 L1156.5 693.7 L1157.4 691.1 L1158.7 687.6 L1160.2 683.3 L1162.0 678.3 L1164.0 672.8 L1166.2 666.9 L1168.6 660.6 L1171.1 654.1 L1173.9 647.4 L1176.8 641.8 L1179.9 637.3 L1183.2 632.8 L1186.6 628.3 L1190.2 623.8 L1193.9 619.3 L1197.7 614.9 L1201.7 610.3 L1205.9 605.8 L1210.1 601.1 L1214.5 596.3 L1219.0 591.5 L1223.6 586.5 L1228.4 581.4 L1233.3 576.2 L1238.3 570.8 L1243.4 565.3 L1248.6 559.6 L1254.0 553.8 L1259.4 547.8 L1265.0 541.6 L1270.7 535.3 L1276.5 528.9 L1282.3 522.2 L1288.3 515.4 L1294.4 508.4 L1300.6 501.3 L1306.9 494.0 L1313.3 486.5 L1319.8 478.9 L1326.4 471.0 L1333.1 463.0 L1339.9 454.9 L1346.8 446.5 L1353.8 438.0 L1360.9 429.3 L1368.0 420.4 L1375.3 411.3 L1382.7 402.0 L1390.1 392.6 L1397.6 382.9 L1405.2 373.1 L1413.0 363.0 L1420.8 352.8 L1428.6 342.4 L1436.6 331.8 L1444.7 320.9 L1452.8 309.9 L1461.0 298.7 L1469.4 287.2"/><path d="M1155.2 694.7 L1155.6 693.4 L1156.5 690.7 L1157.6 687.1 L1159.1 682.7 L1160.8 677.6 L1162.7 672.0 L1164.8 666.0 L1167.1 659.6 L1169.6 652.9 L1172.2 646.0 L1175.0 640.3 L1178.0 635.6 L1181.1 631.0 L1184.4 626.3 L1187.8 621.7 L1191.3 617.1 L1195.0 612.4 L1198.8 607.7 L1202.8 603.0 L1206.8 598.1 L1211.0 593.2 L1215.4 588.2 L1219.8 583.0 L1224.3 577.7 L1229.0 572.3 L1233.8 566.7 L1238.7 560.9 L1243.7 555.1 L1248.8 549.0 L1254.0 542.8 L1259.4 536.4 L1264.8 529.9 L1270.3 523.1 L1276.0 516.2 L1281.7 509.2 L1287.5 502.0 L1293.5 494.6 L1299.5 487.0 L1305.6 479.2 L1311.8 471.3 L1318.1 463.2 L1324.5 454.9 L1331.0 446.4 L1337.6 437.8 L1344.3 428.9 L1351.1 419.9 L1357.9 410.7 L1364.9 401.3 L1371.9 391.7 L1379.1 381.9 L1386.3 371.9 L1393.6 361.7 L1400.9 351.3 L1408.4 340.8 L1415.9 330.0 L1423.6 319.0 L1431.3 307.8 L1439.1 296.4 L1446.9 284.7 L1454.9 272.9"/><path d="M1154.2 694.4 L1154.6 693.0 L1155.4 690.3 L1156.6 686.6 L1157.9 682.1 L1159.5 677.0 L1161.4 671.3 L1163.4 665.1 L1165.6 658.6 L1167.9 651.8 L1170.4 644.7 L1173.1 638.9 L1175.9 634.1 L1178.9 629.2 L1182.0 624.5 L1185.3 619.7 L1188.6 614.9 L1192.2 610.1 L1195.8 605.2 L1199.6 600.3 L1203.4 595.3 L1207.4 590.2 L1211.5 585.0 L1215.8 579.7 L1220.1 574.2 L1224.6 568.5 L1229.1 562.8 L1233.8 556.8 L1238.6 550.7 L1243.4 544.5 L1248.4 538.0 L1253.5 531.4 L1258.6 524.7 L1263.9 517.7 L1269.3 510.6 L1274.8 503.3 L1280.3 495.8 L1286.0 488.2 L1291.7 480.3 L1297.5 472.3 L1303.5 464.1 L1309.5 455.7 L1315.6 447.2 L1321.8 438.4 L1328.1 429.5 L1334.4 420.3 L1340.9 411.0 L1347.4 401.5 L1354.0 391.8 L1360.7 381.9 L1367.5 371.8 L1374.4 361.5 L1381.3 350.9 L1388.4 340.2 L1395.5 329.3 L1402.7 318.2 L1409.9 306.8 L1417.3 295.3 L1424.7 283.5 L1432.2 271.5 L1439.8 259.3"/><path d="M1153.2 694.0 L1153.6 692.7 L1154.4 689.9 L1155.4 686.2 L1156.7 681.6 L1158.3 676.3 L1160.0 670.5 L1161.9 664.2 L1164.0 657.6 L1166.2 650.7 L1168.6 643.5 L1171.1 637.5 L1173.8 632.6 L1176.6 627.6 L1179.6 622.7 L1182.7 617.8 L1185.9 612.9 L1189.2 607.9 L1192.6 602.9 L1196.2 597.8 L1199.9 592.7 L1203.7 587.4 L1207.6 582.0 L1211.6 576.5 L1215.7 570.8 L1219.9 565.0 L1224.3 559.1 L1228.7 552.9 L1233.2 546.7 L1237.8 540.2 L1242.5 533.6 L1247.4 526.7 L1252.3 519.8 L1257.3 512.6 L1262.4 505.2 L1267.5 497.7 L1272.8 490.0 L1278.2 482.1 L1283.6 474.0 L1289.2 465.8 L1294.8 457.3 L1300.5 448.7 L1306.3 439.9 L1312.1 430.9 L1318.1 421.6 L1324.1 412.2 L1330.3 402.6 L1336.5 392.8 L1342.7 382.8 L1349.1 372.6 L1355.5 362.2 L1362.0 351.6 L1368.6 340.8 L1375.3 329.7 L1382.0 318.5 L1388.9 307.0 L1395.8 295.4 L1402.7 283.5 L1409.8 271.4 L1416.9 259.0 L1424.1 246.5"/><path d="M1152.1 693.7 L1152.5 692.4 L1153.2 689.6 L1154.3 685.7 L1155.5 681.1 L1156.9 675.8 L1158.6 669.8 L1160.4 663.5 L1162.3 656.7 L1164.4 649.7 L1166.7 642.4 L1169.1 636.3 L1171.6 631.2 L1174.3 626.1 L1177.0 621.1 L1180.0 616.0 L1183.0 610.9 L1186.1 605.8 L1189.4 600.7 L1192.7 595.5 L1196.2 590.2 L1199.8 584.8 L1203.5 579.2 L1207.3 573.5 L1211.1 567.7 L1215.1 561.7 L1219.2 555.6 L1223.4 549.3 L1227.7 542.8 L1232.0 536.2 L1236.5 529.3 L1241.0 522.3 L1245.6 515.2 L1250.4 507.8 L1255.2 500.2 L1260.1 492.5 L1265.0 484.6 L1270.1 476.5 L1275.2 468.2 L1280.5 459.7 L1285.8 451.0 L1291.1 442.1 L1296.6 433.0 L1302.2 423.8 L1307.8 414.3 L1313.5 404.6 L1319.2 394.8 L1325.1 384.7 L1331.0 374.4 L1337.0 363.9 L1343.1 353.2 L1349.2 342.3 L1355.5 331.2 L1361.8 319.9 L1368.1 308.4 L1374.6 296.6 L1381.1 284.6 L1387.6 272.4 L1394.3 260.0 L1401.0 247.3 L1407.8 234.5"/><path d="M1151.1 693.5 L1151.4 692.1 L1152.1 689.2 L1153.0 685.4 L1154.2 680.6 L1155.6 675.2 L1157.1 669.2 L1158.8 662.7 L1160.6 655.9 L1162.6 648.7 L1164.7 641.3 L1166.9 635.1 L1169.3 629.9 L1171.8 624.7 L1174.4 619.5 L1177.2 614.3 L1180.0 609.2 L1182.9 603.9 L1186.0 598.6 L1189.2 593.3 L1192.4 587.8 L1195.8 582.3 L1199.2 576.6 L1202.8 570.8 L1206.4 564.8 L1210.2 558.7 L1214.0 552.4 L1217.9 545.9 L1221.9 539.3 L1226.0 532.4 L1230.2 525.4 L1234.5 518.2 L1238.8 510.9 L1243.2 503.3 L1247.7 495.6 L1252.3 487.6 L1257.0 479.5 L1261.7 471.2 L1266.6 462.7 L1271.5 454.0 L1276.5 445.1 L1281.5 435.9 L1286.6 426.6 L1291.8 417.1 L1297.1 407.4 L1302.5 397.5 L1307.9 387.4 L1313.4 377.1 L1318.9 366.6 L1324.6 355.8 L1330.3 344.9 L1336.0 333.7 L1341.9 322.3 L1347.8 310.7 L1353.7 298.9 L1359.8 286.9 L1365.9 274.6 L1372.1 262.1 L1378.3 249.4 L1384.6 236.4 L1391.0 223.2"/><path d="M1149.9 693.2 L1150.3 691.8 L1150.9 688.9 L1151.8 685.0 L1152.9 680.2 L1154.1 674.7 L1155.6 668.6 L1157.1 662.0 L1158.8 655.1 L1160.7 647.8 L1162.7 640.4 L1164.8 634.0 L1167.0 628.7 L1169.3 623.4 L1171.7 618.1 L1174.3 612.8 L1176.9 607.5 L1179.7 602.2 L1182.5 596.8 L1185.5 591.3 L1188.5 585.7 L1191.6 580.0 L1194.9 574.2 L1198.2 568.2 L1201.6 562.1 L1205.1 555.8 L1208.6 549.4 L1212.3 542.8 L1216.0 536.0 L1219.8 529.0 L1223.7 521.8 L1227.7 514.4 L1231.8 506.9 L1235.9 499.2 L1240.1 491.2 L1244.4 483.1 L1248.7 474.8 L1253.2 466.3 L1257.7 457.6 L1262.2 448.7 L1266.9 439.6 L1271.6 430.3 L1276.4 420.7 L1281.2 411.0 L1286.1 401.1 L1291.1 391.0 L1296.2 380.6 L1301.3 370.1 L1306.5 359.3 L1311.7 348.3 L1317.1 337.2 L1322.4 325.7 L1327.9 314.1 L1333.4 302.2 L1338.9 290.2 L1344.6 277.9 L1350.3 265.3 L1356.0 252.6 L1361.8 239.6 L1367.7 226.3 L1373.7 212.9"/><path d="M1148.8 693.0 L1149.1 691.6 L1149.7 688.6 L1150.5 684.7 L1151.5 679.8 L1152.7 674.2 L1154.0 668.1 L1155.5 661.4 L1157.0 654.4 L1158.7 647.0 L1160.6 639.5 L1162.5 633.0 L1164.6 627.6 L1166.7 622.2 L1169.0 616.8 L1171.3 611.4 L1173.8 606.0 L1176.3 600.5 L1179.0 595.0 L1181.7 589.4 L1184.5 583.7 L1187.4 577.9 L1190.4 572.0 L1193.5 565.9 L1196.6 559.6 L1199.8 553.2 L1203.1 546.6 L1206.5 539.9 L1210.0 532.9 L1213.5 525.8 L1217.1 518.5 L1220.8 511.0 L1224.5 503.3 L1228.4 495.4 L1232.3 487.3 L1236.2 479.0 L1240.3 470.5 L1244.3 461.8 L1248.5 452.9 L1252.7 443.8 L1257.0 434.5 L1261.4 425.0 L1265.8 415.3 L1270.3 405.4 L1274.9 395.3 L1279.5 385.0 L1284.2 374.4 L1288.9 363.7 L1293.7 352.7 L1298.6 341.5 L1303.5 330.1 L1308.5 318.4 L1313.5 306.6 L1318.6 294.5 L1323.8 282.2 L1329.0 269.6 L1334.2 256.8 L1339.6 243.8 L1345.0 230.6 L1350.4 217.1 L1355.9 203.3"/><path d="M1147.6 692.8 L1147.9 691.3 L1148.5 688.4 L1149.2 684.4 L1150.1 679.5 L1151.2 673.8 L1152.4 667.6 L1153.7 660.9 L1155.2 653.7 L1156.8 646.3 L1158.4 638.6 L1160.2 632.1 L1162.1 626.6 L1164.1 621.1 L1166.2 615.6 L1168.3 610.1 L1170.6 604.6 L1172.9 599.1 L1175.3 593.4 L1177.8 587.7 L1180.4 581.9 L1183.1 576.0 L1185.8 570.0 L1188.6 563.8 L1191.5 557.4 L1194.5 550.9 L1197.5 544.2 L1200.6 537.3 L1203.8 530.2 L1207.0 522.9 L1210.3 515.5 L1213.7 507.8 L1217.2 500.0 L1220.7 491.9 L1224.2 483.7 L1227.9 475.2 L1231.6 466.6 L1235.3 457.8 L1239.2 448.7 L1243.0 439.4 L1247.0 430.0 L1251.0 420.3 L1255.0 410.4 L1259.2 400.3 L1263.3 390.0 L1267.6 379.5 L1271.9 368.8 L1276.2 357.8 L1280.6 346.7 L1285.1 335.3 L1289.6 323.6 L1294.2 311.8 L1298.8 299.7 L1303.5 287.4 L1308.2 274.9 L1313.0 262.1 L1317.8 249.1 L1322.7 235.9 L1327.7 222.4 L1332.7 208.7 L1337.7 194.7"/><path d="M1146.4 692.6 L1146.7 691.1 L1147.2 688.1 L1147.9 684.1 L1148.7 679.1 L1149.7 673.5 L1150.8 667.2 L1152.0 660.4 L1153.3 653.2 L1154.7 645.7 L1156.3 637.9 L1157.9 631.3 L1159.6 625.7 L1161.4 620.1 L1163.3 614.6 L1165.2 609.0 L1167.3 603.4 L1169.4 597.7 L1171.6 592.0 L1173.9 586.2 L1176.2 580.3 L1178.6 574.3 L1181.1 568.2 L1183.7 561.9 L1186.3 555.4 L1189.0 548.8 L1191.7 541.9 L1194.6 534.9 L1197.5 527.7 L1200.4 520.4 L1203.4 512.8 L1206.5 505.0 L1209.6 497.0 L1212.8 488.8 L1216.0 480.5 L1219.3 471.9 L1222.7 463.1 L1226.1 454.1 L1229.6 444.9 L1233.1 435.5 L1236.7 425.9 L1240.3 416.1 L1244.0 406.0 L1247.8 395.8 L1251.6 385.3 L1255.4 374.6 L1259.3 363.7 L1263.3 352.6 L1267.3 341.3 L1271.3 329.7 L1275.4 317.9 L1279.6 305.9 L1283.8 293.6 L1288.1 281.1 L1292.4 268.4 L1296.7 255.4 L1301.1 242.2 L1305.5 228.8 L1310.0 215.1 L1314.6 201.2 L1319.1 187.0"/><path d="M1145.2 692.4 L1145.4 691.0 L1145.9 687.9 L1146.5 683.8 L1147.3 678.9 L1148.1 673.1 L1149.1 666.8 L1150.2 659.9 L1151.4 652.7 L1152.7 645.1 L1154.0 637.3 L1155.5 630.6 L1157.0 624.9 L1158.6 619.3 L1160.3 613.6 L1162.1 608.0 L1163.9 602.3 L1165.8 596.6 L1167.8 590.8 L1169.8 584.9 L1172.0 578.9 L1174.1 572.8 L1176.4 566.6 L1178.7 560.2 L1181.0 553.6 L1183.4 546.9 L1185.9 540.0 L1188.4 532.9 L1191.0 525.6 L1193.7 518.1 L1196.4 510.4 L1199.1 502.5 L1201.9 494.4 L1204.8 486.1 L1207.7 477.6 L1210.7 468.9 L1213.7 460.0 L1216.8 450.9 L1219.9 441.6 L1223.0 432.1 L1226.3 422.3 L1229.5 412.4 L1232.8 402.2 L1236.2 391.8 L1239.6 381.2 L1243.1 370.4 L1246.6 359.3 L1250.1 348.0 L1253.7 336.5 L1257.3 324.8 L1261.0 312.8 L1264.8 300.7 L1268.5 288.2 L1272.3 275.6 L1276.2 262.7 L1280.1 249.5 L1284.1 236.2 L1288.0 222.6 L1292.1 208.7 L1296.1 194.6 L1300.3 180.2"/><path d="M1144.0 692.3 L1144.2 690.8 L1144.6 687.8 L1145.1 683.6 L1145.8 678.6 L1146.6 672.8 L1147.4 666.4 L1148.4 659.5 L1149.4 652.2 L1150.6 644.6 L1151.8 636.7 L1153.1 630.0 L1154.4 624.3 L1155.9 618.6 L1157.3 612.8 L1158.9 607.1 L1160.5 601.4 L1162.2 595.6 L1164.0 589.7 L1165.8 583.8 L1167.6 577.7 L1169.5 571.6 L1171.5 565.2 L1173.5 558.8 L1175.6 552.1 L1177.8 545.3 L1180.0 538.3 L1182.2 531.1 L1184.5 523.7 L1186.8 516.1 L1189.2 508.4 L1191.6 500.4 L1194.1 492.2 L1196.7 483.8 L1199.2 475.2 L1201.9 466.4 L1204.5 457.4 L1207.2 448.2 L1210.0 438.7 L1212.8 429.1 L1215.6 419.2 L1218.5 409.2 L1221.5 398.9 L1224.4 388.4 L1227.4 377.6 L1230.5 366.7 L1233.6 355.5 L1236.7 344.1 L1239.9 332.4 L1243.1 320.6 L1246.4 308.5 L1249.7 296.2 L1253.0 283.6 L1256.4 270.8 L1259.8 257.8 L1263.3 244.5 L1266.7 231.0 L1270.3 217.2 L1273.8 203.2 L1277.4 188.9 L1281.1 174.4"/><path d="M1142.7 692.2 L1142.9 690.7 L1143.3 687.6 L1143.7 683.5 L1144.3 678.4 L1145.0 672.6 L1145.7 666.2 L1146.6 659.2 L1147.5 651.8 L1148.5 644.2 L1149.5 636.3 L1150.6 629.5 L1151.8 623.7 L1153.0 617.9 L1154.3 612.2 L1155.7 606.4 L1157.1 600.6 L1158.5 594.7 L1160.1 588.8 L1161.6 582.8 L1163.2 576.7 L1164.9 570.5 L1166.6 564.1 L1168.4 557.6 L1170.2 550.8 L1172.0 544.0 L1173.9 536.9 L1175.9 529.6 L1177.9 522.2 L1179.9 514.5 L1182.0 506.7 L1184.1 498.6 L1186.2 490.3 L1188.4 481.9 L1190.7 473.2 L1192.9 464.3 L1195.3 455.2 L1197.6 445.9 L1200.0 436.3 L1202.4 426.6 L1204.9 416.6 L1207.4 406.5 L1209.9 396.1 L1212.5 385.5 L1215.1 374.6 L1217.8 363.6 L1220.5 352.3 L1223.2 340.8 L1225.9 329.0 L1228.7 317.0 L1231.6 304.8 L1234.4 292.4 L1237.3 279.7 L1240.2 266.8 L1243.2 253.6 L1246.2 240.2 L1249.2 226.6 L1252.3 212.7 L1255.4 198.5 L1258.5 184.1 L1261.6 169.5"/><path d="M1141.5 692.1 L1141.6 690.6 L1141.9 687.5 L1142.3 683.3 L1142.8 678.3 L1143.4 672.4 L1144.0 665.9 L1144.7 658.9 L1145.5 651.6 L1146.3 643.8 L1147.2 635.9 L1148.1 629.0 L1149.1 623.2 L1150.2 617.4 L1151.3 611.6 L1152.4 605.8 L1153.6 600.0 L1154.8 594.1 L1156.1 588.1 L1157.4 582.1 L1158.8 575.9 L1160.2 569.6 L1161.7 563.2 L1163.2 556.6 L1164.7 549.8 L1166.3 542.9 L1167.9 535.8 L1169.5 528.4 L1171.2 520.9 L1172.9 513.2 L1174.6 505.3 L1176.4 497.2 L1178.3 488.8 L1180.1 480.3 L1182.0 471.5 L1183.9 462.6 L1185.9 453.4 L1187.9 444.0 L1189.9 434.4 L1191.9 424.6 L1194.0 414.6 L1196.1 404.3 L1198.3 393.8 L1200.5 383.2 L1202.7 372.2 L1204.9 361.1 L1207.2 349.7 L1209.5 338.1 L1211.8 326.3 L1214.2 314.2 L1216.6 301.9 L1219.0 289.4 L1221.4 276.6 L1223.9 263.6 L1226.4 250.3 L1229.0 236.8 L1231.5 223.1 L1234.1 209.1 L1236.7 194.8 L1239.4 180.3 L1242.0 165.6"/><path d="M1140.2 692.0 L1140.3 690.5 L1140.6 687.4 L1140.9 683.2 L1141.3 678.1 L1141.7 672.3 L1142.3 665.8 L1142.8 658.8 L1143.5 651.3 L1144.1 643.6 L1144.9 635.6 L1145.6 628.7 L1146.5 622.9 L1147.3 617.1 L1148.2 611.2 L1149.1 605.4 L1150.1 599.5 L1151.1 593.6 L1152.2 587.6 L1153.2 581.5 L1154.3 575.3 L1155.5 569.0 L1156.7 562.5 L1157.9 555.9 L1159.1 549.1 L1160.4 542.1 L1161.7 534.9 L1163.1 527.5 L1164.4 520.0 L1165.8 512.2 L1167.3 504.2 L1168.7 496.1 L1170.2 487.7 L1171.7 479.1 L1173.3 470.3 L1174.8 461.3 L1176.4 452.1 L1178.1 442.6 L1179.7 433.0 L1181.4 423.1 L1183.1 413.0 L1184.8 402.7 L1186.6 392.2 L1188.3 381.4 L1190.1 370.4 L1192.0 359.2 L1193.8 347.8 L1195.7 336.1 L1197.6 324.2 L1199.5 312.1 L1201.5 299.7 L1203.5 287.1 L1205.4 274.3 L1207.5 261.2 L1209.5 247.8 L1211.6 234.3 L1213.7 220.4 L1215.8 206.4 L1217.9 192.0 L1220.1 177.4 L1222.2 162.6"/><path d="M1138.9 692.0 L1139.0 690.4 L1139.2 687.4 L1139.5 683.2 L1139.8 678.0 L1140.1 672.2 L1140.5 665.7 L1141.0 658.6 L1141.4 651.2 L1142.0 643.4 L1142.5 635.4 L1143.1 628.5 L1143.8 622.7 L1144.4 616.8 L1145.1 611.0 L1145.8 605.1 L1146.6 599.2 L1147.4 593.2 L1148.2 587.2 L1149.0 581.1 L1149.9 574.9 L1150.7 568.5 L1151.7 562.0 L1152.6 555.4 L1153.6 548.5 L1154.6 541.5 L1155.6 534.3 L1156.6 526.9 L1157.7 519.4 L1158.7 511.6 L1159.8 503.6 L1161.0 495.4 L1162.1 486.9 L1163.3 478.3 L1164.5 469.5 L1165.7 460.4 L1166.9 451.2 L1168.2 441.7 L1169.5 432.0 L1170.8 422.1 L1172.1 412.0 L1173.4 401.6 L1174.8 391.0 L1176.1 380.2 L1177.5 369.2 L1178.9 358.0 L1180.4 346.5 L1181.8 334.8 L1183.3 322.8 L1184.8 310.7 L1186.3 298.2 L1187.8 285.6 L1189.4 272.7 L1190.9 259.6 L1192.5 246.2 L1194.1 232.5 L1195.7 218.7 L1197.3 204.5 L1199.0 190.2 L1200.7 175.5 L1202.3 160.6"/><path d="M1137.6 691.9 L1137.7 690.4 L1137.8 687.3 L1138.0 683.1 L1138.2 678.0 L1138.5 672.1 L1138.8 665.6 L1139.1 658.6 L1139.4 651.1 L1139.8 643.3 L1140.2 635.3 L1140.6 628.4 L1141.0 622.6 L1141.5 616.7 L1142.0 610.8 L1142.5 604.9 L1143.0 599.0 L1143.6 593.1 L1144.2 587.0 L1144.7 580.9 L1145.4 574.7 L1146.0 568.3 L1146.6 561.8 L1147.3 555.1 L1148.0 548.3 L1148.7 541.3 L1149.4 534.1 L1150.1 526.6 L1150.9 519.0 L1151.6 511.2 L1152.4 503.2 L1153.2 495.0 L1154.0 486.6 L1154.8 477.9 L1155.7 469.1 L1156.5 460.0 L1157.4 450.7 L1158.3 441.2 L1159.2 431.5 L1160.1 421.6 L1161.0 411.4 L1162.0 401.1 L1162.9 390.5 L1163.9 379.7 L1164.9 368.6 L1165.9 357.3 L1166.9 345.8 L1167.9 334.1 L1168.9 322.1 L1170.0 309.9 L1171.0 297.5 L1172.1 284.8 L1173.2 271.9 L1174.3 258.8 L1175.4 245.3 L1176.6 231.7 L1177.7 217.8 L1178.8 203.6 L1180.0 189.2 L1181.2 174.6 L1182.4 159.6"/><path d="M1136.4 691.9 L1136.4 690.4 L1136.5 687.3 L1136.6 683.1 L1136.7 678.0 L1136.8 672.1 L1137.0 665.6 L1137.2 658.6 L1137.4 651.1 L1137.6 643.3 L1137.8 635.3 L1138.1 628.4 L1138.3 622.6 L1138.6 616.7 L1138.9 610.8 L1139.2 604.9 L1139.5 599.0 L1139.8 593.1 L1140.1 587.0 L1140.5 580.9 L1140.8 574.7 L1141.2 568.3 L1141.6 561.8 L1142.0 555.1 L1142.4 548.3 L1142.8 541.3 L1143.2 534.1 L1143.6 526.6 L1144.0 519.0 L1144.5 511.2 L1144.9 503.2 L1145.4 495.0 L1145.9 486.6 L1146.4 477.9 L1146.8 469.1 L1147.3 460.0 L1147.8 450.7 L1148.4 441.2 L1148.9 431.5 L1149.4 421.6 L1150.0 411.4 L1150.5 401.1 L1151.1 390.5 L1151.6 379.7 L1152.2 368.6 L1152.8 357.3 L1153.4 345.8 L1154.0 334.1 L1154.6 322.1 L1155.2 309.9 L1155.8 297.5 L1156.4 284.8 L1157.1 271.9 L1157.7 258.8 L1158.3 245.3 L1159.0 231.7 L1159.7 217.8 L1160.3 203.6 L1161.0 189.2 L1161.7 174.6 L1162.4 159.6"/><path d="M1135.1 692.0 L1135.1 690.4 L1135.1 687.4 L1135.1 683.2 L1135.2 678.0 L1135.2 672.2 L1135.3 665.7 L1135.3 658.6 L1135.4 651.2 L1135.4 643.4 L1135.5 635.4 L1135.6 628.5 L1135.6 622.7 L1135.7 616.8 L1135.8 611.0 L1135.9 605.1 L1136.0 599.2 L1136.0 593.2 L1136.1 587.2 L1136.2 581.1 L1136.3 574.9 L1136.4 568.5 L1136.5 562.0 L1136.7 555.4 L1136.8 548.5 L1136.9 541.5 L1137.0 534.3 L1137.1 526.9 L1137.2 519.4 L1137.4 511.6 L1137.5 503.6 L1137.6 495.4 L1137.8 486.9 L1137.9 478.3 L1138.0 469.5 L1138.2 460.4 L1138.3 451.2 L1138.5 441.7 L1138.6 432.0 L1138.8 422.1 L1138.9 412.0 L1139.1 401.6 L1139.2 391.0 L1139.4 380.2 L1139.5 369.2 L1139.7 358.0 L1139.9 346.5 L1140.0 334.8 L1140.2 322.8 L1140.4 310.7 L1140.6 298.2 L1140.7 285.6 L1140.9 272.7 L1141.1 259.6 L1141.3 246.2 L1141.5 232.5 L1141.6 218.7 L1141.8 204.5 L1142.0 190.2 L1142.2 175.5 L1142.4 160.6"/><path d="M1133.8 692.0 L1133.8 690.5 L1133.7 687.4 L1133.7 683.2 L1133.6 678.1 L1133.6 672.3 L1133.5 665.8 L1133.4 658.8 L1133.3 651.3 L1133.3 643.6 L1133.2 635.6 L1133.0 628.7 L1132.9 622.9 L1132.8 617.1 L1132.7 611.2 L1132.6 605.4 L1132.4 599.5 L1132.3 593.6 L1132.2 587.6 L1132.0 581.5 L1131.8 575.3 L1131.7 569.0 L1131.5 562.5 L1131.4 555.9 L1131.2 549.1 L1131.0 542.1 L1130.8 534.9 L1130.6 527.5 L1130.5 520.0 L1130.3 512.2 L1130.1 504.2 L1129.9 496.1 L1129.7 487.7 L1129.5 479.1 L1129.2 470.3 L1129.0 461.3 L1128.8 452.1 L1128.6 442.6 L1128.4 433.0 L1128.1 423.1 L1127.9 413.0 L1127.7 402.7 L1127.4 392.2 L1127.2 381.4 L1126.9 370.4 L1126.7 359.2 L1126.4 347.8 L1126.2 336.1 L1125.9 324.2 L1125.6 312.1 L1125.4 299.7 L1125.1 287.1 L1124.8 274.3 L1124.5 261.2 L1124.3 247.8 L1124.0 234.3 L1123.7 220.4 L1123.4 206.4 L1123.1 192.0 L1122.8 177.4 L1122.5 162.6"/><path d="M1132.5 692.1 L1132.5 690.6 L1132.4 687.5 L1132.3 683.3 L1132.1 678.3 L1132.0 672.4 L1131.8 665.9 L1131.6 658.9 L1131.3 651.6 L1131.1 643.8 L1130.8 635.9 L1130.5 629.0 L1130.3 623.2 L1129.9 617.4 L1129.6 611.6 L1129.3 605.8 L1128.9 600.0 L1128.6 594.1 L1128.2 588.1 L1127.8 582.1 L1127.4 575.9 L1127.0 569.6 L1126.5 563.2 L1126.1 556.6 L1125.6 549.8 L1125.2 542.9 L1124.7 535.8 L1124.2 528.4 L1123.7 520.9 L1123.2 513.2 L1122.7 505.3 L1122.2 497.2 L1121.6 488.8 L1121.1 480.3 L1120.5 471.5 L1119.9 462.6 L1119.4 453.4 L1118.8 444.0 L1118.2 434.4 L1117.6 424.6 L1116.9 414.6 L1116.3 404.3 L1115.7 393.8 L1115.0 383.2 L1114.4 372.2 L1113.7 361.1 L1113.0 349.7 L1112.4 338.1 L1111.7 326.3 L1111.0 314.2 L1110.3 301.9 L1109.5 289.4 L1108.8 276.6 L1108.1 263.6 L1107.3 250.3 L1106.6 236.8 L1105.8 223.1 L1105.1 209.1 L1104.3 194.8 L1103.5 180.3 L1102.7 165.6"/><path d="M1131.3 692.2 L1131.2 690.7 L1131.1 687.6 L1130.9 683.5 L1130.6 678.4 L1130.4 672.6 L1130.1 666.2 L1129.7 659.2 L1129.3 651.8 L1128.9 644.2 L1128.5 636.3 L1128.1 629.5 L1127.6 623.7 L1127.1 617.9 L1126.6 612.2 L1126.0 606.4 L1125.4 600.6 L1124.9 594.7 L1124.2 588.8 L1123.6 582.8 L1123.0 576.7 L1122.3 570.5 L1121.6 564.1 L1120.9 557.6 L1120.1 550.8 L1119.4 544.0 L1118.6 536.9 L1117.8 529.6 L1117.0 522.2 L1116.2 514.5 L1115.4 506.7 L1114.5 498.6 L1113.6 490.3 L1112.8 481.9 L1111.8 473.2 L1110.9 464.3 L1110.0 455.2 L1109.0 445.9 L1108.1 436.3 L1107.1 426.6 L1106.1 416.6 L1105.1 406.5 L1104.0 396.1 L1103.0 385.5 L1101.9 374.6 L1100.9 363.6 L1099.8 352.3 L1098.7 340.8 L1097.6 329.0 L1096.4 317.0 L1095.3 304.8 L1094.1 292.4 L1092.9 279.7 L1091.8 266.8 L1090.6 253.6 L1089.4 240.2 L1088.1 226.6 L1086.9 212.7 L1085.6 198.5 L1084.4 184.1 L1083.1 169.5"/><path d="M1130.0 692.3 L1129.9 690.8 L1129.7 687.8 L1129.5 683.6 L1129.1 678.6 L1128.8 672.8 L1128.3 666.4 L1127.9 659.5 L1127.4 652.2 L1126.8 644.6 L1126.2 636.7 L1125.6 630.0 L1125.0 624.3 L1124.3 618.6 L1123.5 612.8 L1122.8 607.1 L1122.0 601.4 L1121.2 595.6 L1120.3 589.7 L1119.5 583.8 L1118.6 577.7 L1117.6 571.6 L1116.7 565.2 L1115.7 558.8 L1114.7 552.1 L1113.7 545.3 L1112.6 538.3 L1111.5 531.1 L1110.4 523.7 L1109.3 516.1 L1108.1 508.4 L1106.9 500.4 L1105.7 492.2 L1104.5 483.8 L1103.3 475.2 L1102.0 466.4 L1100.7 457.4 L1099.4 448.2 L1098.1 438.7 L1096.7 429.1 L1095.3 419.2 L1093.9 409.2 L1092.5 398.9 L1091.1 388.4 L1089.6 377.6 L1088.1 366.7 L1086.6 355.5 L1085.1 344.1 L1083.6 332.4 L1082.0 320.6 L1080.5 308.5 L1078.9 296.2 L1077.2 283.6 L1075.6 270.8 L1074.0 257.8 L1072.3 244.5 L1070.6 231.0 L1068.9 217.2 L1067.2 203.2 L1065.4 188.9 L1063.7 174.4"/><path d="M1128.8 692.4 L1128.7 691.0 L1128.4 687.9 L1128.1 683.8 L1127.7 678.9 L1127.2 673.1 L1126.7 666.8 L1126.1 659.9 L1125.4 652.7 L1124.7 645.1 L1124.0 637.3 L1123.2 630.6 L1122.4 624.9 L1121.5 619.3 L1120.6 613.6 L1119.6 608.0 L1118.6 602.3 L1117.6 596.6 L1116.5 590.8 L1115.4 584.9 L1114.2 578.9 L1113.1 572.8 L1111.9 566.6 L1110.6 560.2 L1109.3 553.6 L1108.0 546.9 L1106.7 540.0 L1105.3 532.9 L1103.9 525.6 L1102.4 518.1 L1101.0 510.4 L1099.5 502.5 L1097.9 494.4 L1096.4 486.1 L1094.8 477.6 L1093.2 468.9 L1091.6 460.0 L1089.9 450.9 L1088.2 441.6 L1086.5 432.1 L1084.7 422.3 L1082.9 412.4 L1081.1 402.2 L1079.3 391.8 L1077.5 381.2 L1075.6 370.4 L1073.7 359.3 L1071.7 348.0 L1069.8 336.5 L1067.8 324.8 L1065.8 312.8 L1063.8 300.7 L1061.7 288.2 L1059.7 275.6 L1057.6 262.7 L1055.4 249.5 L1053.3 236.2 L1051.1 222.6 L1048.9 208.7 L1046.7 194.6 L1044.5 180.2"/><path d="M1127.6 692.6 L1127.4 691.1 L1127.1 688.1 L1126.7 684.1 L1126.2 679.1 L1125.7 673.5 L1125.0 667.2 L1124.3 660.4 L1123.5 653.2 L1122.7 645.7 L1121.8 637.9 L1120.8 631.3 L1119.8 625.7 L1118.7 620.1 L1117.6 614.6 L1116.5 609.0 L1115.3 603.4 L1114.0 597.7 L1112.7 592.0 L1111.4 586.2 L1110.0 580.3 L1108.6 574.3 L1107.1 568.2 L1105.6 561.9 L1104.0 555.4 L1102.4 548.8 L1100.8 541.9 L1099.1 534.9 L1097.4 527.7 L1095.7 520.4 L1093.9 512.8 L1092.1 505.0 L1090.3 497.0 L1088.4 488.8 L1086.5 480.5 L1084.5 471.9 L1082.5 463.1 L1080.5 454.1 L1078.5 444.9 L1076.4 435.5 L1074.3 425.9 L1072.1 416.1 L1069.9 406.0 L1067.7 395.8 L1065.5 385.3 L1063.2 374.6 L1060.9 363.7 L1058.6 352.6 L1056.2 341.3 L1053.8 329.7 L1051.4 317.9 L1048.9 305.9 L1046.5 293.6 L1044.0 281.1 L1041.4 268.4 L1038.8 255.4 L1036.3 242.2 L1033.6 228.8 L1031.0 215.1 L1028.3 201.2 L1025.6 187.0"/><path d="M1126.4 692.8 L1126.2 691.3 L1125.9 688.4 L1125.4 684.4 L1124.8 679.5 L1124.1 673.8 L1123.4 667.6 L1122.5 660.9 L1121.6 653.7 L1120.6 646.3 L1119.6 638.6 L1118.5 632.1 L1117.3 626.6 L1116.0 621.1 L1114.7 615.6 L1113.4 610.1 L1112.0 604.6 L1110.5 599.1 L1109.0 593.4 L1107.4 587.7 L1105.8 581.9 L1104.1 576.0 L1102.4 570.0 L1100.6 563.8 L1098.8 557.4 L1097.0 550.9 L1095.1 544.2 L1093.1 537.3 L1091.1 530.2 L1089.1 522.9 L1087.0 515.5 L1084.9 507.8 L1082.7 500.0 L1080.5 491.9 L1078.3 483.7 L1076.0 475.2 L1073.7 466.6 L1071.3 457.8 L1068.9 448.7 L1066.5 439.4 L1064.0 430.0 L1061.5 420.3 L1058.9 410.4 L1056.3 400.3 L1053.7 390.0 L1051.1 379.5 L1048.4 368.8 L1045.6 357.8 L1042.9 346.7 L1040.1 335.3 L1037.2 323.6 L1034.4 311.8 L1031.5 299.7 L1028.5 287.4 L1025.5 274.9 L1022.5 262.1 L1019.5 249.1 L1016.4 235.9 L1013.3 222.4 L1010.2 208.7 L1007.0 194.7"/><path d="M1125.2 693.0 L1125.0 691.6 L1124.6 688.6 L1124.1 684.7 L1123.4 679.8 L1122.6 674.2 L1121.8 668.1 L1120.8 661.4 L1119.8 654.4 L1118.7 647.0 L1117.4 639.5 L1116.2 633.0 L1114.8 627.6 L1113.4 622.2 L1111.9 616.8 L1110.4 611.4 L1108.8 606.0 L1107.1 600.5 L1105.3 595.0 L1103.5 589.4 L1101.7 583.7 L1099.8 577.9 L1097.8 572.0 L1095.8 565.9 L1093.7 559.6 L1091.6 553.2 L1089.4 546.6 L1087.2 539.9 L1084.9 532.9 L1082.6 525.8 L1080.2 518.5 L1077.8 511.0 L1075.3 503.3 L1072.8 495.4 L1070.3 487.3 L1067.6 479.0 L1065.0 470.5 L1062.3 461.8 L1059.5 452.9 L1056.8 443.8 L1053.9 434.5 L1051.1 425.0 L1048.1 415.3 L1045.2 405.4 L1042.2 395.3 L1039.2 385.0 L1036.1 374.4 L1033.0 363.7 L1029.8 352.7 L1026.6 341.5 L1023.4 330.1 L1020.1 318.4 L1016.8 306.6 L1013.4 294.5 L1010.0 282.2 L1006.6 269.6 L1003.1 256.8 L999.6 243.8 L996.1 230.6 L992.5 217.1 L988.9 203.3"/><path d="M1124.1 693.2 L1123.8 691.8 L1123.4 688.9 L1122.8 685.0 L1122.1 680.2 L1121.2 674.7 L1120.2 668.6 L1119.1 662.0 L1118.0 655.1 L1116.7 647.8 L1115.4 640.4 L1113.9 634.0 L1112.4 628.7 L1110.8 623.4 L1109.2 618.1 L1107.4 612.8 L1105.6 607.5 L1103.7 602.2 L1101.8 596.8 L1099.8 591.3 L1097.7 585.7 L1095.5 580.0 L1093.3 574.2 L1091.1 568.2 L1088.7 562.1 L1086.4 555.8 L1083.9 549.4 L1081.4 542.8 L1078.9 536.0 L1076.3 529.0 L1073.6 521.8 L1070.9 514.4 L1068.1 506.9 L1065.3 499.2 L1062.4 491.2 L1059.5 483.1 L1056.5 474.8 L1053.5 466.3 L1050.4 457.6 L1047.3 448.7 L1044.1 439.6 L1040.9 430.3 L1037.6 420.7 L1034.3 411.0 L1030.9 401.1 L1027.5 391.0 L1024.1 380.6 L1020.6 370.1 L1017.0 359.3 L1013.4 348.3 L1009.8 337.2 L1006.1 325.7 L1002.4 314.1 L998.6 302.2 L994.8 290.2 L991.0 277.9 L987.1 265.3 L983.1 252.6 L979.2 239.6 L975.1 226.3 L971.1 212.9"/><path d="M1122.9 693.5 L1122.7 692.1 L1122.2 689.2 L1121.5 685.4 L1120.7 680.6 L1119.8 675.2 L1118.7 669.2 L1117.5 662.7 L1116.2 655.9 L1114.8 648.7 L1113.3 641.3 L1111.7 635.1 L1110.1 629.9 L1108.3 624.7 L1106.5 619.5 L1104.5 614.3 L1102.5 609.2 L1100.5 603.9 L1098.3 598.6 L1096.1 593.3 L1093.8 587.8 L1091.4 582.3 L1089.0 576.6 L1086.5 570.8 L1083.9 564.8 L1081.3 558.7 L1078.6 552.4 L1075.8 545.9 L1073.0 539.3 L1070.1 532.4 L1067.1 525.4 L1064.1 518.2 L1061.1 510.9 L1057.9 503.3 L1054.8 495.6 L1051.5 487.6 L1048.2 479.5 L1044.9 471.2 L1041.5 462.7 L1038.0 454.0 L1034.5 445.1 L1031.0 435.9 L1027.3 426.6 L1023.7 417.1 L1020.0 407.4 L1016.2 397.5 L1012.4 387.4 L1008.5 377.1 L1004.6 366.6 L1000.6 355.8 L996.6 344.9 L992.5 333.7 L988.4 322.3 L984.2 310.7 L980.0 298.9 L975.8 286.9 L971.5 274.6 L967.1 262.1 L962.7 249.4 L958.3 236.4 L953.8 223.2"/><path d="M1121.9 693.7 L1121.6 692.4 L1121.1 689.6 L1120.3 685.7 L1119.4 681.1 L1118.4 675.8 L1117.2 669.8 L1115.9 663.5 L1114.5 656.7 L1113.0 649.7 L1111.3 642.4 L1109.6 636.3 L1107.8 631.2 L1105.9 626.1 L1103.8 621.1 L1101.7 616.0 L1099.6 610.9 L1097.3 605.8 L1094.9 600.7 L1092.5 595.5 L1090.0 590.2 L1087.4 584.8 L1084.7 579.2 L1082.0 573.5 L1079.2 567.7 L1076.3 561.7 L1073.4 555.6 L1070.3 549.3 L1067.2 542.8 L1064.1 536.2 L1060.9 529.3 L1057.6 522.3 L1054.2 515.2 L1050.8 507.8 L1047.3 500.2 L1043.8 492.5 L1040.2 484.6 L1036.5 476.5 L1032.8 468.2 L1029.1 459.7 L1025.2 451.0 L1021.3 442.1 L1017.4 433.0 L1013.4 423.8 L1009.3 414.3 L1005.2 404.6 L1001.0 394.8 L996.8 384.7 L992.5 374.4 L988.1 363.9 L983.7 353.2 L979.3 342.3 L974.8 331.2 L970.2 319.9 L965.6 308.4 L961.0 296.6 L956.3 284.6 L951.5 272.4 L946.7 260.0 L941.9 247.3 L937.0 234.5"/><path d="M1120.8 694.0 L1120.5 692.7 L1120.0 689.9 L1119.2 686.2 L1118.2 681.6 L1117.1 676.3 L1115.8 670.5 L1114.4 664.2 L1112.9 657.6 L1111.2 650.7 L1109.4 643.5 L1107.6 637.5 L1105.6 632.6 L1103.5 627.6 L1101.3 622.7 L1099.0 617.8 L1096.7 612.9 L1094.2 607.9 L1091.7 602.9 L1089.0 597.8 L1086.3 592.7 L1083.5 587.4 L1080.6 582.0 L1077.7 576.5 L1074.6 570.8 L1071.5 565.0 L1068.3 559.1 L1065.0 552.9 L1061.7 546.7 L1058.3 540.2 L1054.8 533.6 L1051.2 526.7 L1047.6 519.8 L1043.9 512.6 L1040.2 505.2 L1036.3 497.7 L1032.4 490.0 L1028.5 482.1 L1024.4 474.0 L1020.4 465.8 L1016.2 457.3 L1012.0 448.7 L1007.7 439.9 L1003.4 430.9 L999.0 421.6 L994.5 412.2 L990.0 402.6 L985.4 392.8 L980.8 382.8 L976.1 372.6 L971.3 362.2 L966.5 351.6 L961.6 340.8 L956.7 329.7 L951.7 318.5 L946.7 307.0 L941.6 295.4 L936.4 283.5 L931.2 271.4 L926.0 259.0 L920.7 246.5"/><path d="M1119.8 694.4 L1119.5 693.0 L1118.9 690.3 L1118.0 686.6 L1117.0 682.1 L1115.8 677.0 L1114.4 671.3 L1112.9 665.1 L1111.3 658.6 L1109.5 651.8 L1107.6 644.7 L1105.6 638.9 L1103.4 634.1 L1101.2 629.2 L1098.9 624.5 L1096.4 619.7 L1093.9 614.9 L1091.2 610.1 L1088.5 605.2 L1085.7 600.3 L1082.8 595.3 L1079.8 590.2 L1076.7 585.0 L1073.5 579.7 L1070.2 574.2 L1066.9 568.5 L1063.4 562.8 L1059.9 556.8 L1056.3 550.7 L1052.7 544.5 L1048.9 538.0 L1045.1 531.4 L1041.2 524.7 L1037.3 517.7 L1033.2 510.6 L1029.1 503.3 L1024.9 495.8 L1020.7 488.2 L1016.4 480.3 L1012.0 472.3 L1007.5 464.1 L1003.0 455.7 L998.4 447.2 L993.7 438.4 L989.0 429.5 L984.2 420.3 L979.4 411.0 L974.4 401.5 L969.5 391.8 L964.4 381.9 L959.3 371.8 L954.2 361.5 L948.9 350.9 L943.6 340.2 L938.3 329.3 L932.9 318.2 L927.4 306.8 L921.9 295.3 L916.3 283.5 L910.7 271.5 L905.0 259.3"/><path d="M1118.8 694.7 L1118.5 693.4 L1117.8 690.7 L1116.9 687.1 L1115.8 682.7 L1114.5 677.6 L1113.1 672.0 L1111.5 666.0 L1109.7 659.6 L1107.8 652.9 L1105.8 646.0 L1103.7 640.3 L1101.4 635.6 L1099.0 631.0 L1096.5 626.3 L1093.9 621.7 L1091.2 617.1 L1088.4 612.4 L1085.5 607.7 L1082.5 603.0 L1079.4 598.1 L1076.1 593.2 L1072.9 588.2 L1069.5 583.0 L1066.0 577.7 L1062.4 572.3 L1058.8 566.7 L1055.0 560.9 L1051.2 555.1 L1047.3 549.0 L1043.3 542.8 L1039.2 536.4 L1035.1 529.9 L1030.9 523.1 L1026.6 516.2 L1022.2 509.2 L1017.7 502.0 L1013.2 494.6 L1008.6 487.0 L1003.9 479.2 L999.1 471.3 L994.3 463.2 L989.4 454.9 L984.5 446.4 L979.4 437.8 L974.3 428.9 L969.2 419.9 L963.9 410.7 L958.6 401.3 L953.2 391.7 L947.8 381.9 L942.3 371.9 L936.7 361.7 L931.1 351.3 L925.4 340.8 L919.6 330.0 L913.8 319.0 L907.9 307.8 L901.9 296.4 L895.9 284.7 L889.9 272.9"/><path d="M1117.9 695.0 L1117.6 693.7 L1116.9 691.1 L1115.9 687.6 L1114.7 683.3 L1113.4 678.3 L1111.8 672.8 L1110.1 666.9 L1108.3 660.6 L1106.3 654.1 L1104.1 647.4 L1101.8 641.8 L1099.4 637.3 L1096.9 632.8 L1094.3 628.3 L1091.5 623.8 L1088.6 619.3 L1085.7 614.9 L1082.6 610.3 L1079.4 605.8 L1076.1 601.1 L1072.7 596.3 L1069.2 591.5 L1065.6 586.5 L1061.9 581.4 L1058.1 576.2 L1054.3 570.8 L1050.3 565.3 L1046.3 559.6 L1042.1 553.8 L1037.9 547.8 L1033.6 541.6 L1029.2 535.3 L1024.7 528.9 L1020.2 522.2 L1015.5 515.4 L1010.8 508.4 L1006.0 501.3 L1001.1 494.0 L996.2 486.5 L991.1 478.9 L986.0 471.0 L980.8 463.0 L975.6 454.9 L970.3 446.5 L964.9 438.0 L959.4 429.3 L953.8 420.4 L948.2 411.3 L942.5 402.0 L936.7 392.6 L930.9 382.9 L925.0 373.1 L919.0 363.0 L913.0 352.8 L906.9 342.4 L900.7 331.8 L894.5 320.9 L888.2 309.9 L881.8 298.7 L875.4 287.2"/><path d="M1117.0 695.4 L1116.7 694.1 L1115.9 691.6 L1114.9 688.1 L1113.7 683.9 L1112.2 679.1 L1110.6 673.7 L1108.8 667.9 L1106.9 661.8 L1104.7 655.4 L1102.5 648.8 L1100.1 643.4 L1097.6 639.0 L1094.9 634.7 L1092.1 630.3 L1089.2 626.0 L1086.2 621.7 L1083.1 617.4 L1079.8 613.1 L1076.4 608.7 L1073.0 604.2 L1069.4 599.6 L1065.7 595.0 L1061.9 590.2 L1058.1 585.3 L1054.1 580.3 L1050.0 575.1 L1045.8 569.8 L1041.6 564.4 L1037.2 558.8 L1032.8 553.0 L1028.2 547.1 L1023.6 541.1 L1018.9 534.8 L1014.1 528.5 L1009.2 521.9 L1004.2 515.2 L999.2 508.4 L994.0 501.4 L988.8 494.2 L983.5 486.8 L978.1 479.3 L972.7 471.6 L967.1 463.7 L961.5 455.7 L955.8 447.5 L950.0 439.1 L944.2 430.5 L938.3 421.8 L932.3 412.9 L926.2 403.8 L920.1 394.5 L913.9 385.0 L907.6 375.3 L901.2 365.5 L894.8 355.4 L888.3 345.2 L881.7 334.8 L875.1 324.1 L868.4 313.3 L861.6 302.3"/><path d="M1116.2 695.8 L1115.8 694.5 L1115.0 692.1 L1114.0 688.7 L1112.7 684.6 L1111.2 679.8 L1109.5 674.6 L1107.6 668.9 L1105.5 662.9 L1103.3 656.7 L1101.0 650.3 L1098.4 645.0 L1095.8 640.8 L1093.0 636.6 L1090.1 632.5 L1087.1 628.4 L1083.9 624.2 L1080.6 620.1 L1077.2 615.9 L1073.7 611.7 L1070.0 607.5 L1066.3 603.1 L1062.4 598.6 L1058.5 594.1 L1054.4 589.4 L1050.2 584.6 L1045.9 579.7 L1041.6 574.6 L1037.1 569.4 L1032.5 564.0 L1027.9 558.5 L1023.1 552.9 L1018.3 547.1 L1013.3 541.1 L1008.3 535.0 L1003.2 528.7 L998.0 522.3 L992.7 515.8 L987.3 509.0 L981.8 502.1 L976.3 495.1 L970.6 487.9 L964.9 480.5 L959.1 473.0 L953.2 465.3 L947.2 457.4 L941.2 449.3 L935.1 441.1 L928.9 432.7 L922.6 424.2 L916.2 415.4 L909.8 406.5 L903.3 397.4 L896.7 388.1 L890.0 378.7 L883.3 369.0 L876.5 359.2 L869.6 349.2 L862.6 339.0 L855.6 328.6 L848.5 317.9"/><path d="M1115.4 696.2 L1115.0 695.0 L1114.2 692.5 L1113.1 689.2 L1111.7 685.2 L1110.1 680.6 L1108.4 675.5 L1106.4 670.0 L1104.3 664.2 L1102.0 658.1 L1099.5 651.8 L1096.9 646.7 L1094.1 642.7 L1091.2 638.7 L1088.2 634.7 L1085.0 630.8 L1081.7 626.8 L1078.3 622.9 L1074.7 618.9 L1071.0 614.9 L1067.2 610.8 L1063.3 606.7 L1059.3 602.4 L1055.2 598.1 L1050.9 593.6 L1046.6 589.1 L1042.1 584.4 L1037.6 579.5 L1032.9 574.6 L1028.1 569.5 L1023.3 564.2 L1018.3 558.8 L1013.2 553.3 L1008.1 547.6 L1002.8 541.8 L997.5 535.8 L992.1 529.7 L986.5 523.4 L980.9 517.0 L975.2 510.4 L969.4 503.7 L963.5 496.8 L957.6 489.8 L951.5 482.6 L945.4 475.2 L939.2 467.7 L932.8 460.0 L926.5 452.2 L920.0 444.1 L913.4 436.0 L906.8 427.6 L900.1 419.1 L893.3 410.4 L886.4 401.5 L879.5 392.4 L872.4 383.2 L865.3 373.8 L858.1 364.2 L850.9 354.4 L843.6 344.4 L836.1 334.3"/><path d="M1114.6 696.6 L1114.2 695.4 L1113.4 693.0 L1112.2 689.8 L1110.8 685.9 L1109.2 681.4 L1107.4 676.5 L1105.3 671.1 L1103.1 665.4 L1100.7 659.5 L1098.1 653.4 L1095.4 648.5 L1092.6 644.6 L1089.5 640.8 L1086.4 637.0 L1083.1 633.3 L1079.6 629.5 L1076.1 625.8 L1072.4 622.0 L1068.6 618.2 L1064.6 614.3 L1060.6 610.4 L1056.4 606.4 L1052.1 602.2 L1047.7 598.0 L1043.2 593.7 L1038.5 589.2 L1033.8 584.6 L1028.9 579.9 L1024.0 575.1 L1018.9 570.1 L1013.8 565.0 L1008.5 559.8 L1003.2 554.4 L997.7 548.8 L992.2 543.2 L986.5 537.4 L980.8 531.4 L975.0 525.3 L969.0 519.0 L963.0 512.6 L956.9 506.1 L950.7 499.4 L944.4 492.6 L938.0 485.5 L931.6 478.4 L925.0 471.1 L918.4 463.6 L911.6 456.0 L904.8 448.2 L897.9 440.2 L891.0 432.1 L883.9 423.8 L876.8 415.3 L869.6 406.7 L862.2 397.9 L854.9 388.9 L847.4 379.7 L839.9 370.4 L832.2 360.9 L824.5 351.2"/><path d="M1113.9 697.0 L1113.5 695.9 L1112.6 693.6 L1111.5 690.4 L1110.0 686.7 L1108.3 682.3 L1106.4 677.5 L1104.3 672.2 L1102.0 666.7 L1099.5 661.0 L1096.9 655.1 L1094.1 650.3 L1091.1 646.6 L1088.0 643.0 L1084.7 639.4 L1081.3 635.9 L1077.7 632.3 L1074.0 628.8 L1070.2 625.2 L1066.3 621.6 L1062.2 617.9 L1058.0 614.2 L1053.7 610.4 L1049.2 606.5 L1044.6 602.6 L1040.0 598.5 L1035.2 594.3 L1030.3 589.9 L1025.3 585.5 L1020.1 580.9 L1014.9 576.2 L1009.6 571.4 L1004.1 566.4 L998.6 561.3 L993.0 556.1 L987.2 550.7 L981.4 545.3 L975.4 539.6 L969.4 533.8 L963.3 527.9 L957.0 521.9 L950.7 515.7 L944.3 509.3 L937.8 502.8 L931.2 496.2 L924.5 489.4 L917.7 482.5 L910.8 475.4 L903.9 468.1 L896.8 460.8 L889.7 453.2 L882.5 445.5 L875.2 437.6 L867.8 429.6 L860.3 421.4 L852.8 413.0 L845.1 404.5 L837.4 395.8 L829.6 386.9 L821.7 377.8 L813.7 368.6"/><path d="M1113.3 697.4 L1112.9 696.3 L1112.0 694.1 L1110.7 691.1 L1109.2 687.4 L1107.5 683.2 L1105.5 678.5 L1103.4 673.4 L1101.0 668.1 L1098.4 662.5 L1095.7 656.8 L1092.8 652.2 L1089.7 648.7 L1086.5 645.3 L1083.1 641.9 L1079.6 638.5 L1076.0 635.2 L1072.1 631.8 L1068.2 628.5 L1064.1 625.1 L1059.9 621.7 L1055.6 618.2 L1051.1 614.6 L1046.6 611.0 L1041.8 607.2 L1037.0 603.4 L1032.1 599.4 L1027.0 595.4 L1021.9 591.2 L1016.6 586.9 L1011.2 582.5 L1005.7 578.0 L1000.1 573.3 L994.4 568.5 L988.5 563.6 L982.6 558.6 L976.6 553.4 L970.5 548.1 L964.2 542.6 L957.9 537.1 L951.5 531.4 L945.0 525.5 L938.4 519.6 L931.6 513.4 L924.8 507.2 L917.9 500.8 L910.9 494.2 L903.9 487.5 L896.7 480.7 L889.4 473.7 L882.1 466.6 L874.6 459.3 L867.1 451.9 L859.5 444.3 L851.8 436.5 L844.0 428.6 L836.1 420.5 L828.1 412.3 L820.1 403.9 L812.0 395.3 L803.7 386.6"/><path d="M1112.7 697.9 L1112.3 696.8 L1111.3 694.7 L1110.1 691.7 L1108.5 688.2 L1106.7 684.1 L1104.7 679.5 L1102.5 674.6 L1100.1 669.4 L1097.4 664.1 L1094.6 658.5 L1091.6 654.1 L1088.5 650.8 L1085.2 647.6 L1081.7 644.4 L1078.1 641.2 L1074.3 638.1 L1070.4 635.0 L1066.4 631.8 L1062.2 628.7 L1057.9 625.5 L1053.4 622.2 L1048.8 618.9 L1044.1 615.5 L1039.3 612.0 L1034.3 608.4 L1029.2 604.7 L1024.1 601.0 L1018.7 597.1 L1013.3 593.1 L1007.8 588.9 L1002.1 584.7 L996.4 580.3 L990.5 575.9 L984.5 571.3 L978.4 566.6 L972.2 561.7 L965.9 556.8 L959.5 551.7 L953.0 546.5 L946.4 541.1 L939.7 535.6 L932.9 530.0 L926.0 524.3 L919.0 518.4 L911.9 512.4 L904.8 506.3 L897.5 500.0 L890.1 493.6 L882.6 487.0 L875.1 480.3 L867.4 473.5 L859.7 466.5 L851.9 459.3 L843.9 452.0 L835.9 444.6 L827.8 437.0 L819.7 429.3 L811.4 421.3 L803.0 413.3 L794.6 405.0"/><path d="M1112.2 698.3 L1111.7 697.3 L1110.8 695.2 L1109.5 692.4 L1107.9 688.9 L1106.1 685.0 L1104.0 680.6 L1101.7 675.9 L1099.2 670.9 L1096.5 665.6 L1093.6 660.3 L1090.6 656.1 L1087.4 653.0 L1084.0 650.0 L1080.4 647.0 L1076.7 644.0 L1072.9 641.1 L1068.9 638.2 L1064.7 635.3 L1060.4 632.4 L1056.0 629.4 L1051.4 626.4 L1046.7 623.3 L1041.9 620.1 L1037.0 616.9 L1031.9 613.6 L1026.7 610.2 L1021.4 606.7 L1015.9 603.1 L1010.3 599.3 L1004.7 595.5 L998.9 591.6 L993.0 587.6 L987.0 583.4 L980.8 579.1 L974.6 574.8 L968.3 570.3 L961.8 565.6 L955.3 560.9 L948.6 556.1 L941.8 551.1 L935.0 546.0 L928.0 540.8 L920.9 535.4 L913.8 530.0 L906.5 524.4 L899.1 518.6 L891.7 512.8 L884.1 506.8 L876.5 500.7 L868.7 494.4 L860.9 488.0 L853.0 481.5 L845.0 474.8 L836.8 467.9 L828.6 461.0 L820.3 453.9 L812.0 446.6 L803.5 439.2 L794.9 431.6 L786.3 423.9"/><path d="M1111.7 698.8 L1111.2 697.8 L1110.3 695.8 L1108.9 693.1 L1107.3 689.7 L1105.5 685.9 L1103.3 681.7 L1101.0 677.1 L1098.5 672.3 L1095.7 667.3 L1092.8 662.1 L1089.7 658.1 L1086.4 655.2 L1082.9 652.4 L1079.3 649.6 L1075.5 646.9 L1071.5 644.2 L1067.5 641.5 L1063.2 638.8 L1058.8 636.1 L1054.3 633.4 L1049.6 630.6 L1044.9 627.8 L1039.9 624.9 L1034.9 621.9 L1029.7 618.9 L1024.4 615.7 L1018.9 612.5 L1013.4 609.2 L1007.7 605.8 L1001.9 602.3 L996.0 598.6 L990.0 594.9 L983.8 591.1 L977.6 587.2 L971.2 583.1 L964.7 579.0 L958.1 574.7 L951.4 570.4 L944.6 565.9 L937.7 561.3 L930.7 556.6 L923.6 551.7 L916.4 546.8 L909.1 541.7 L901.6 536.5 L894.1 531.2 L886.5 525.8 L878.8 520.2 L871.0 514.6 L863.1 508.7 L855.1 502.8 L847.0 496.7 L838.8 490.5 L830.5 484.2 L822.1 477.7 L813.6 471.1 L805.1 464.3 L796.4 457.4 L787.7 450.4 L778.9 443.2"/><path d="M1111.3 699.3 L1110.8 698.3 L1109.8 696.4 L1108.5 693.7 L1106.8 690.5 L1104.9 686.9 L1102.8 682.8 L1100.4 678.4 L1097.8 673.8 L1095.0 668.9 L1092.0 664.0 L1088.8 660.2 L1085.5 657.5 L1081.9 654.9 L1078.3 652.3 L1074.4 649.8 L1070.4 647.3 L1066.2 644.8 L1061.9 642.4 L1057.4 639.9 L1052.8 637.4 L1048.1 634.9 L1043.2 632.3 L1038.2 629.7 L1033.0 627.0 L1027.8 624.2 L1022.3 621.4 L1016.8 618.4 L1011.2 615.4 L1005.4 612.3 L999.5 609.1 L993.4 605.8 L987.3 602.4 L981.0 598.9 L974.7 595.3 L968.2 591.6 L961.6 587.8 L954.9 584.0 L948.1 580.0 L941.1 575.8 L934.1 571.6 L927.0 567.3 L919.7 562.9 L912.4 558.4 L904.9 553.7 L897.4 548.9 L889.7 544.1 L881.9 539.1 L874.1 533.9 L866.1 528.7 L858.1 523.4 L849.9 517.9 L841.7 512.3 L833.3 506.6 L824.9 500.7 L816.4 494.7 L807.7 488.6 L799.0 482.4 L790.2 476.0 L781.3 469.5 L772.3 462.8"/><path d="M1110.9 699.7 L1110.4 698.8 L1109.4 697.0 L1108.1 694.4 L1106.4 691.4 L1104.5 687.8 L1102.3 683.9 L1099.9 679.7 L1097.2 675.2 L1094.4 670.6 L1091.3 665.8 L1088.1 662.3 L1084.7 659.8 L1081.1 657.4 L1077.4 655.0 L1073.5 652.7 L1069.4 650.5 L1065.2 648.2 L1060.8 646.0 L1056.2 643.8 L1051.6 641.6 L1046.7 639.3 L1041.8 637.0 L1036.7 634.6 L1031.5 632.2 L1026.1 629.7 L1020.6 627.1 L1015.0 624.5 L1009.2 621.8 L1003.4 619.0 L997.4 616.1 L991.2 613.1 L985.0 610.0 L978.7 606.9 L972.2 603.6 L965.6 600.3 L958.9 596.9 L952.1 593.3 L945.2 589.7 L938.1 586.0 L931.0 582.2 L923.7 578.2 L916.4 574.2 L908.9 570.1 L901.3 565.9 L893.7 561.5 L885.9 557.1 L878.0 552.5 L870.0 547.9 L862.0 543.1 L853.8 538.2 L845.5 533.2 L837.1 528.1 L828.7 522.8 L820.1 517.5 L811.4 512.0 L802.7 506.4 L793.8 500.7 L784.9 494.8 L775.8 488.8 L766.7 482.7"/><path d="M1110.6 700.2 L1110.1 699.4 L1109.1 697.6 L1107.7 695.2 L1106.0 692.2 L1104.1 688.8 L1101.9 685.1 L1099.4 681.0 L1096.7 676.8 L1093.9 672.3 L1090.8 667.7 L1087.5 664.4 L1084.1 662.1 L1080.4 659.9 L1076.6 657.8 L1072.7 655.7 L1068.6 653.7 L1064.3 651.7 L1059.8 649.7 L1055.2 647.7 L1050.5 645.7 L1045.6 643.7 L1040.6 641.7 L1035.4 639.6 L1030.1 637.4 L1024.7 635.2 L1019.1 632.9 L1013.4 630.6 L1007.6 628.2 L1001.7 625.7 L995.6 623.1 L989.4 620.5 L983.1 617.7 L976.7 614.9 L970.1 612.0 L963.4 609.0 L956.6 606.0 L949.7 602.8 L942.7 599.6 L935.6 596.2 L928.4 592.8 L921.0 589.3 L913.6 585.7 L906.0 582.0 L898.4 578.2 L890.6 574.3 L882.7 570.3 L874.7 566.2 L866.6 561.9 L858.5 557.6 L850.2 553.2 L841.8 548.7 L833.3 544.1 L824.7 539.3 L816.1 534.5 L807.3 529.5 L798.4 524.4 L789.4 519.2 L780.4 513.9 L771.2 508.5 L762.0 502.9"/><path d="M1110.4 700.7 L1109.9 699.9 L1108.8 698.2 L1107.5 695.9 L1105.7 693.0 L1103.8 689.8 L1101.5 686.2 L1099.1 682.4 L1096.4 678.3 L1093.4 674.0 L1090.3 669.7 L1087.0 666.5 L1083.6 664.5 L1079.9 662.5 L1076.1 660.6 L1072.0 658.7 L1067.9 656.9 L1063.6 655.2 L1059.1 653.4 L1054.4 651.7 L1049.6 650.0 L1044.7 648.2 L1039.6 646.4 L1034.4 644.6 L1029.1 642.7 L1023.6 640.8 L1018.0 638.8 L1012.2 636.8 L1006.3 634.6 L1000.3 632.5 L994.2 630.2 L987.9 627.9 L981.6 625.5 L975.1 623.1 L968.4 620.5 L961.7 617.9 L954.8 615.2 L947.9 612.4 L940.8 609.6 L933.6 606.6 L926.3 603.6 L918.9 600.5 L911.3 597.3 L903.7 594.0 L896.0 590.6 L888.1 587.1 L880.2 583.6 L872.1 579.9 L863.9 576.2 L855.7 572.3 L847.3 568.4 L838.8 564.4 L830.3 560.2 L821.6 556.0 L812.8 551.6 L804.0 547.2 L795.0 542.6 L785.9 537.9 L776.8 533.2 L767.5 528.3 L758.2 523.3"/><path d="M1110.2 701.2 L1109.7 700.4 L1108.7 698.8 L1107.3 696.6 L1105.5 693.9 L1103.5 690.8 L1101.3 687.4 L1098.8 683.7 L1096.1 679.8 L1093.1 675.8 L1090.0 671.6 L1086.7 668.7 L1083.2 666.8 L1079.5 665.1 L1075.6 663.4 L1071.6 661.8 L1067.4 660.2 L1063.0 658.7 L1058.5 657.2 L1053.8 655.7 L1049.0 654.2 L1044.0 652.7 L1038.9 651.2 L1033.7 649.6 L1028.3 648.0 L1022.8 646.4 L1017.1 644.7 L1011.3 643.0 L1005.4 641.2 L999.3 639.3 L993.1 637.4 L986.8 635.4 L980.4 633.4 L973.9 631.3 L967.2 629.1 L960.4 626.8 L953.5 624.5 L946.5 622.1 L939.3 619.6 L932.1 617.1 L924.7 614.4 L917.2 611.7 L909.7 609.0 L902.0 606.1 L894.2 603.2 L886.2 600.1 L878.2 597.0 L870.1 593.8 L861.9 590.5 L853.6 587.2 L845.1 583.7 L836.6 580.2 L828.0 576.5 L819.2 572.8 L810.4 568.9 L801.5 565.0 L792.4 561.0 L783.3 556.8 L774.1 552.6 L764.8 548.3 L755.3 543.8"/><path d="M1110.1 701.7 L1109.6 701.0 L1108.5 699.4 L1107.1 697.3 L1105.4 694.8 L1103.4 691.8 L1101.1 688.6 L1098.6 685.1 L1095.9 681.4 L1092.9 677.5 L1089.8 673.6 L1086.4 670.8 L1082.9 669.2 L1079.2 667.7 L1075.3 666.2 L1071.3 664.8 L1067.0 663.5 L1062.7 662.2 L1058.1 661.0 L1053.4 659.7 L1048.6 658.5 L1043.6 657.3 L1038.4 656.0 L1033.2 654.7 L1027.7 653.4 L1022.2 652.1 L1016.5 650.7 L1010.7 649.2 L1004.7 647.7 L998.6 646.2 L992.4 644.6 L986.1 643.0 L979.6 641.3 L973.0 639.5 L966.3 637.7 L959.5 635.8 L952.6 633.8 L945.5 631.8 L938.3 629.7 L931.1 627.6 L923.7 625.4 L916.1 623.1 L908.5 620.7 L900.8 618.3 L892.9 615.8 L885.0 613.2 L876.9 610.5 L868.8 607.8 L860.5 605.0 L852.1 602.1 L843.7 599.1 L835.1 596.0 L826.4 592.9 L817.6 589.7 L808.8 586.3 L799.8 582.9 L790.7 579.4 L781.5 575.8 L772.3 572.1 L762.9 568.4 L753.4 564.5"/><path d="M1110.0 702.2 L1109.5 701.5 L1108.5 700.0 L1107.0 698.0 L1105.3 695.6 L1103.3 692.8 L1101.0 689.7 L1098.5 686.4 L1095.8 682.9 L1092.8 679.3 L1089.7 675.5 L1086.3 673.0 L1082.8 671.6 L1079.1 670.3 L1075.2 669.1 L1071.1 667.9 L1066.9 666.8 L1062.5 665.8 L1057.9 664.7 L1053.2 663.8 L1048.4 662.8 L1043.4 661.8 L1038.2 660.8 L1032.9 659.8 L1027.5 658.8 L1021.9 657.7 L1016.2 656.6 L1010.4 655.5 L1004.4 654.3 L998.3 653.1 L992.1 651.9 L985.7 650.5 L979.2 649.2 L972.6 647.8 L965.9 646.3 L959.1 644.8 L952.1 643.2 L945.0 641.6 L937.9 639.9 L930.6 638.1 L923.1 636.3 L915.6 634.4 L908.0 632.5 L900.2 630.5 L892.3 628.4 L884.4 626.3 L876.3 624.1 L868.1 621.8 L859.8 619.5 L851.4 617.0 L842.9 614.5 L834.4 612.0 L825.7 609.3 L816.9 606.6 L808.0 603.8 L799.0 600.9 L789.9 597.9 L780.7 594.9 L771.4 591.7 L762.0 588.5 L752.5 585.2"/><path d="M1110.0 702.7 L1109.5 702.0 L1108.5 700.7 L1107.0 698.8 L1105.3 696.5 L1103.3 693.8 L1101.0 690.9 L1098.5 687.8 L1095.8 684.5 L1092.8 681.0 L1089.7 677.5 L1086.3 675.2 L1082.8 674.0 L1079.1 672.9 L1075.2 671.9 L1071.1 671.0 L1066.9 670.1 L1062.5 669.3 L1057.9 668.5 L1053.2 667.8 L1048.4 667.1 L1043.4 666.4 L1038.2 665.6 L1032.9 664.9 L1027.5 664.2 L1021.9 663.4 L1016.2 662.6 L1010.4 661.8 L1004.4 660.9 L998.3 660.0 L992.1 659.1 L985.7 658.1 L979.2 657.1 L972.6 656.1 L965.9 654.9 L959.1 653.8 L952.1 652.6 L945.0 651.3 L937.9 650.0 L930.6 648.7 L923.1 647.3 L915.6 645.8 L908.0 644.3 L900.2 642.7 L892.3 641.1 L884.4 639.4 L876.3 637.7 L868.1 635.8 L859.8 634.0 L851.4 632.0 L842.9 630.0 L834.4 627.9 L825.7 625.8 L816.9 623.6 L808.0 621.3 L799.0 618.9 L789.9 616.5 L780.7 614.0 L771.4 611.4 L762.0 608.7 L752.5 606.0"/><path d="M1110.1 703.2 L1109.6 702.6 L1108.5 701.3 L1107.1 699.5 L1105.4 697.3 L1103.4 694.8 L1101.1 692.1 L1098.6 689.1 L1095.9 686.0 L1092.9 682.8 L1089.8 679.4 L1086.4 677.3 L1082.9 676.4 L1079.2 675.5 L1075.3 674.7 L1071.3 674.0 L1067.0 673.4 L1062.7 672.8 L1058.1 672.3 L1053.4 671.8 L1048.6 671.4 L1043.6 670.9 L1038.4 670.5 L1033.2 670.0 L1027.7 669.6 L1022.2 669.1 L1016.5 668.6 L1010.7 668.1 L1004.7 667.5 L998.6 667.0 L992.4 666.3 L986.1 665.7 L979.6 665.0 L973.0 664.3 L966.3 663.6 L959.5 662.8 L952.6 662.0 L945.5 661.1 L938.3 660.2 L931.1 659.2 L923.7 658.2 L916.1 657.2 L908.5 656.1 L900.8 654.9 L892.9 653.8 L885.0 652.5 L876.9 651.2 L868.8 649.9 L860.5 648.4 L852.1 647.0 L843.7 645.4 L835.1 643.9 L826.4 642.2 L817.6 640.5 L808.8 638.7 L799.8 636.9 L790.7 635.0 L781.5 633.0 L772.3 631.0 L762.9 628.9 L753.4 626.7"/><path d="M1110.2 703.7 L1109.7 703.1 L1108.7 701.9 L1107.3 700.2 L1105.5 698.2 L1103.5 695.8 L1101.3 693.3 L1098.8 690.5 L1096.1 687.5 L1093.1 684.5 L1090.0 681.4 L1086.7 679.5 L1083.2 678.8 L1079.5 678.1 L1075.6 677.6 L1071.6 677.1 L1067.4 676.7 L1063.0 676.4 L1058.5 676.1 L1053.8 675.9 L1049.0 675.6 L1044.0 675.5 L1038.9 675.3 L1033.7 675.1 L1028.3 674.9 L1022.8 674.7 L1017.1 674.5 L1011.3 674.3 L1005.4 674.1 L999.3 673.8 L993.1 673.6 L986.8 673.3 L980.4 672.9 L973.9 672.6 L967.2 672.2 L960.4 671.8 L953.5 671.3 L946.5 670.8 L939.3 670.3 L932.1 669.7 L924.7 669.2 L917.2 668.5 L909.7 667.8 L902.0 667.1 L894.2 666.4 L886.2 665.6 L878.2 664.7 L870.1 663.8 L861.9 662.9 L853.6 661.9 L845.1 660.8 L836.6 659.7 L828.0 658.6 L819.2 657.4 L810.4 656.1 L801.5 654.8 L792.4 653.5 L783.3 652.0 L774.1 650.5 L764.8 649.0 L755.3 647.4"/><path d="M1110.4 704.2 L1109.9 703.7 L1108.8 702.5 L1107.5 700.9 L1105.7 699.0 L1103.8 696.8 L1101.5 694.4 L1099.1 691.8 L1096.4 689.1 L1093.4 686.2 L1090.3 683.3 L1087.0 681.6 L1083.6 681.1 L1079.9 680.7 L1076.1 680.4 L1072.0 680.1 L1067.9 680.0 L1063.6 679.9 L1059.1 679.8 L1054.4 679.9 L1049.6 679.9 L1044.7 680.0 L1039.6 680.1 L1034.4 680.2 L1029.1 680.3 L1023.6 680.4 L1018.0 680.5 L1012.2 680.6 L1006.3 680.6 L1000.3 680.7 L994.2 680.7 L987.9 680.8 L981.6 680.8 L975.1 680.8 L968.4 680.7 L961.7 680.7 L954.8 680.6 L947.9 680.5 L940.8 680.4 L933.6 680.2 L926.3 680.0 L918.9 679.8 L911.3 679.5 L903.7 679.2 L896.0 678.9 L888.1 678.5 L880.2 678.1 L872.1 677.7 L863.9 677.2 L855.7 676.7 L847.3 676.1 L838.8 675.5 L830.3 674.9 L821.6 674.2 L812.8 673.4 L804.0 672.6 L795.0 671.8 L785.9 670.9 L776.8 670.0 L767.5 669.0 L758.2 667.9"/><path d="M1110.6 704.7 L1110.1 704.2 L1109.1 703.1 L1107.7 701.6 L1106.0 699.9 L1104.1 697.8 L1101.9 695.6 L1099.4 693.2 L1096.7 690.6 L1093.9 688.0 L1090.8 685.2 L1087.5 683.8 L1084.1 683.5 L1080.4 683.3 L1076.6 683.2 L1072.7 683.1 L1068.6 683.2 L1064.3 683.4 L1059.8 683.6 L1055.2 683.8 L1050.5 684.1 L1045.6 684.4 L1040.6 684.8 L1035.4 685.2 L1030.1 685.6 L1024.7 685.9 L1019.1 686.3 L1013.4 686.7 L1007.6 687.1 L1001.7 687.5 L995.6 687.9 L989.4 688.2 L983.1 688.6 L976.7 688.9 L970.1 689.2 L963.4 689.5 L956.6 689.8 L949.7 690.1 L942.7 690.3 L935.6 690.6 L928.4 690.8 L921.0 691.0 L913.6 691.1 L906.0 691.2 L898.4 691.3 L890.6 691.4 L882.7 691.5 L874.7 691.5 L866.6 691.5 L858.5 691.4 L850.2 691.3 L841.8 691.2 L833.3 691.0 L824.7 690.8 L816.1 690.6 L807.3 690.3 L798.4 690.0 L789.4 689.6 L780.4 689.2 L771.2 688.8 L762.0 688.3"/><path d="M1110.9 705.2 L1110.4 704.7 L1109.4 703.7 L1108.1 702.4 L1106.4 700.7 L1104.5 698.8 L1102.3 696.7 L1099.9 694.5 L1097.2 692.1 L1094.4 689.7 L1091.3 687.1 L1088.1 685.9 L1084.7 685.8 L1081.1 685.8 L1077.4 685.9 L1073.5 686.1 L1069.4 686.4 L1065.2 686.8 L1060.8 687.2 L1056.2 687.7 L1051.6 688.3 L1046.7 688.9 L1041.8 689.5 L1036.7 690.1 L1031.5 690.8 L1026.1 691.5 L1020.6 692.1 L1015.0 692.8 L1009.2 693.5 L1003.4 694.2 L997.4 694.9 L991.2 695.6 L985.0 696.3 L978.7 697.0 L972.2 697.6 L965.6 698.3 L958.9 698.9 L952.1 699.6 L945.2 700.2 L938.1 700.8 L931.0 701.4 L923.7 702.0 L916.4 702.6 L908.9 703.1 L901.3 703.7 L893.7 704.2 L885.9 704.7 L878.0 705.1 L870.0 705.6 L862.0 706.0 L853.8 706.4 L845.5 706.7 L837.1 707.0 L828.7 707.3 L820.1 707.6 L811.4 707.8 L802.7 708.0 L793.8 708.2 L784.9 708.3 L775.8 708.4 L766.7 708.4"/><path d="M1111.3 705.7 L1110.8 705.2 L1109.8 704.3 L1108.5 703.1 L1106.8 701.5 L1104.9 699.8 L1102.8 697.9 L1100.4 695.8 L1097.8 693.6 L1095.0 691.3 L1092.0 689.0 L1088.8 688.0 L1085.5 688.1 L1081.9 688.3 L1078.3 688.6 L1074.4 689.1 L1070.4 689.6 L1066.2 690.2 L1061.9 690.9 L1057.4 691.6 L1052.8 692.4 L1048.1 693.3 L1043.2 694.1 L1038.2 695.0 L1033.0 696.0 L1027.8 696.9 L1022.3 697.9 L1016.8 698.9 L1011.2 699.9 L1005.4 700.9 L999.5 701.9 L993.4 702.9 L987.3 703.9 L981.0 704.9 L974.7 705.9 L968.2 706.9 L961.6 708.0 L954.9 709.0 L948.1 710.0 L941.1 711.0 L934.1 712.0 L927.0 712.9 L919.7 713.9 L912.4 714.9 L904.9 715.8 L897.4 716.8 L889.7 717.7 L881.9 718.6 L874.1 719.5 L866.1 720.3 L858.1 721.2 L849.9 722.0 L841.7 722.8 L833.3 723.6 L824.9 724.4 L816.4 725.1 L807.7 725.8 L799.0 726.5 L790.2 727.1 L781.3 727.8 L772.3 728.4"/><path d="M1111.7 706.1 L1111.2 705.7 L1110.3 704.9 L1108.9 703.7 L1107.3 702.3 L1105.5 700.7 L1103.3 699.0 L1101.0 697.1 L1098.5 695.1 L1095.7 693.0 L1092.8 690.9 L1089.7 690.0 L1086.4 690.4 L1082.9 690.8 L1079.3 691.3 L1075.5 692.0 L1071.5 692.7 L1067.5 693.6 L1063.2 694.5 L1058.8 695.4 L1054.3 696.5 L1049.6 697.6 L1044.9 698.7 L1039.9 699.9 L1034.9 701.1 L1029.7 702.3 L1024.4 703.5 L1018.9 704.8 L1013.4 706.1 L1007.7 707.4 L1001.9 708.7 L996.0 710.0 L990.0 711.4 L983.8 712.7 L977.6 714.1 L971.2 715.5 L964.7 716.8 L958.1 718.2 L951.4 719.6 L944.6 720.9 L937.7 722.3 L930.7 723.7 L923.6 725.1 L916.4 726.4 L909.1 727.8 L901.6 729.1 L894.1 730.5 L886.5 731.8 L878.8 733.2 L871.0 734.5 L863.1 735.8 L855.1 737.1 L847.0 738.4 L838.8 739.6 L830.5 740.9 L822.1 742.1 L813.6 743.3 L805.1 744.5 L796.4 745.7 L787.7 746.8 L778.9 748.0"/><path d="M1092.3 691.8 L1090.6 692.0 L1087.4 692.6 L1084.0 693.2 L1080.4 694.0 L1076.7 694.8 L1072.9 695.8 L1068.9 696.8 L1064.7 698.0 L1060.4 699.2 L1056.0 700.5 L1051.4 701.8 L1046.7 703.2 L1041.9 704.6 L1037.0 706.1 L1031.9 707.6 L1026.7 709.1 L1021.4 710.6 L1015.9 712.2 L1010.3 713.8 L1004.7 715.4 L998.9 717.1 L993.0 718.7 L987.0 720.4 L980.8 722.1 L974.6 723.8 L968.3 725.5 L961.8 727.3 L955.3 729.0 L948.6 730.7 L941.8 732.5 L935.0 734.3 L928.0 736.0 L920.9 737.8 L913.8 739.6 L906.5 741.3 L899.1 743.1 L891.7 744.9 L884.1 746.6 L876.5 748.4 L868.7 750.2 L860.9 751.9 L853.0 753.7 L845.0 755.4 L836.8 757.1 L828.6 758.8 L820.3 760.5 L812.0 762.2 L803.5 763.9 L794.9 765.6 L786.3 767.2"/><path d="M1093.3 693.7 L1091.6 694.0 L1088.5 694.7 L1085.2 695.6 L1081.7 696.6 L1078.1 697.6 L1074.3 698.8 L1070.4 700.1 L1066.4 701.4 L1062.2 702.9 L1057.9 704.4 L1053.4 705.9 L1048.8 707.6 L1044.1 709.2 L1039.3 711.0 L1034.3 712.7 L1029.2 714.5 L1024.1 716.4 L1018.7 718.2 L1013.3 720.1 L1007.8 722.0 L1002.1 724.0 L996.4 726.0 L990.5 728.0 L984.5 730.0 L978.4 732.0 L972.2 734.1 L965.9 736.2 L959.5 738.2 L953.0 740.4 L946.4 742.5 L939.7 744.6 L932.9 746.8 L926.0 748.9 L919.0 751.1 L911.9 753.3 L904.8 755.4 L897.5 757.6 L890.1 759.8 L882.6 762.0 L875.1 764.2 L867.4 766.4 L859.7 768.6 L851.9 770.8 L843.9 773.0 L835.9 775.2 L827.8 777.4 L819.7 779.6 L811.4 781.8 L803.0 784.0 L794.6 786.1"/><path d="M1094.4 695.5 L1092.8 696.0 L1089.7 696.9 L1086.5 697.9 L1083.1 699.1 L1079.6 700.4 L1076.0 701.7 L1072.1 703.2 L1068.2 704.8 L1064.1 706.5 L1059.9 708.2 L1055.6 710.0 L1051.1 711.9 L1046.6 713.8 L1041.8 715.7 L1037.0 717.8 L1032.1 719.8 L1027.0 721.9 L1021.9 724.1 L1016.6 726.3 L1011.2 728.5 L1005.7 730.7 L1000.1 733.0 L994.4 735.3 L988.5 737.7 L982.6 740.0 L976.6 742.4 L970.5 744.8 L964.2 747.3 L957.9 749.7 L951.5 752.2 L945.0 754.7 L938.4 757.2 L931.6 759.8 L924.8 762.3 L917.9 764.9 L910.9 767.5 L903.9 770.1 L896.7 772.7 L889.4 775.3 L882.1 778.0 L874.6 780.6 L867.1 783.2 L859.5 785.9 L851.8 788.6 L844.0 791.2 L836.1 793.9 L828.1 796.6 L820.1 799.2 L812.0 801.9 L803.7 804.6"/><path d="M1095.6 697.3 L1094.1 697.8 L1091.1 698.9 L1088.0 700.2 L1084.7 701.5 L1081.3 703.0 L1077.7 704.6 L1074.0 706.3 L1070.2 708.1 L1066.3 710.0 L1062.2 711.9 L1058.0 713.9 L1053.7 716.0 L1049.2 718.2 L1044.6 720.4 L1040.0 722.7 L1035.2 725.0 L1030.3 727.4 L1025.3 729.8 L1020.1 732.3 L1014.9 734.8 L1009.6 737.3 L1004.1 739.9 L998.6 742.5 L993.0 745.1 L987.2 747.8 L981.4 750.5 L975.4 753.3 L969.4 756.1 L963.3 758.9 L957.0 761.7 L950.7 764.6 L944.3 767.5 L937.8 770.4 L931.2 773.3 L924.5 776.3 L917.7 779.3 L910.8 782.2 L903.9 785.3 L896.8 788.3 L889.7 791.4 L882.5 794.4 L875.2 797.5 L867.8 800.6 L860.3 803.7 L852.8 806.8 L845.1 809.9 L837.4 813.1 L829.6 816.2 L821.7 819.4 L813.7 822.5"/><path d="M1096.9 699.0 L1095.4 699.7 L1092.6 701.0 L1089.5 702.4 L1086.4 703.9 L1083.1 705.6 L1079.6 707.4 L1076.1 709.3 L1072.4 711.3 L1068.6 713.4 L1064.6 715.5 L1060.6 717.8 L1056.4 720.1 L1052.1 722.5 L1047.7 724.9 L1043.2 727.5 L1038.5 730.0 L1033.8 732.7 L1028.9 735.3 L1024.0 738.1 L1018.9 740.9 L1013.8 743.7 L1008.5 746.5 L1003.2 749.5 L997.7 752.4 L992.2 755.4 L986.5 758.4 L980.8 761.5 L975.0 764.6 L969.0 767.8 L963.0 770.9 L956.9 774.2 L950.7 777.4 L944.4 780.7 L938.0 784.0 L931.6 787.3 L925.0 790.7 L918.4 794.1 L911.6 797.5 L904.8 800.9 L897.9 804.4 L891.0 807.8 L883.9 811.3 L876.8 814.9 L869.6 818.4 L862.2 822.0 L854.9 825.5 L847.4 829.1 L839.9 832.7 L832.2 836.4 L824.5 840.0"/><path d="M1098.3 700.7 L1096.9 701.4 L1094.1 702.9 L1091.2 704.5 L1088.2 706.2 L1085.0 708.1 L1081.7 710.1 L1078.3 712.2 L1074.7 714.4 L1071.0 716.6 L1067.2 719.0 L1063.3 721.5 L1059.3 724.0 L1055.2 726.7 L1050.9 729.3 L1046.6 732.1 L1042.1 734.9 L1037.6 737.8 L1032.9 740.7 L1028.1 743.7 L1023.3 746.8 L1018.3 749.9 L1013.2 753.0 L1008.1 756.2 L1002.8 759.5 L997.5 762.8 L992.1 766.1 L986.5 769.5 L980.9 772.9 L975.2 776.4 L969.4 779.9 L963.5 783.4 L957.6 787.0 L951.5 790.6 L945.4 794.3 L939.2 798.0 L932.8 801.7 L926.5 805.5 L920.0 809.3 L913.4 813.1 L906.8 817.0 L900.1 820.8 L893.3 824.7 L886.4 828.7 L879.5 832.6 L872.4 836.6 L865.3 840.6 L858.1 844.7 L850.9 848.7 L843.6 852.8 L836.1 856.9"/><path d="M1099.8 702.3 L1098.4 703.1 L1095.8 704.8 L1093.0 706.6 L1090.1 708.5 L1087.1 710.5 L1083.9 712.7 L1080.6 714.9 L1077.2 717.3 L1073.7 719.8 L1070.0 722.4 L1066.3 725.1 L1062.4 727.8 L1058.5 730.7 L1054.4 733.6 L1050.2 736.6 L1045.9 739.6 L1041.6 742.7 L1037.1 745.9 L1032.5 749.2 L1027.9 752.5 L1023.1 755.8 L1018.3 759.2 L1013.3 762.7 L1008.3 766.3 L1003.2 769.8 L998.0 773.5 L992.7 777.2 L987.3 780.9 L981.8 784.7 L976.3 788.5 L970.6 792.4 L964.9 796.3 L959.1 800.3 L953.2 804.3 L947.2 808.3 L941.2 812.4 L935.1 816.5 L928.9 820.7 L922.6 824.9 L916.2 829.1 L909.8 833.4 L903.3 837.7 L896.7 842.0 L890.0 846.4 L883.3 850.8 L876.5 855.2 L869.6 859.7 L862.6 864.2 L855.6 868.7 L848.5 873.2"/><path d="M1101.4 703.9 L1100.1 704.8 L1097.6 706.6 L1094.9 708.5 L1092.1 710.6 L1089.2 712.8 L1086.2 715.2 L1083.1 717.6 L1079.8 720.2 L1076.4 722.9 L1073.0 725.6 L1069.4 728.5 L1065.7 731.5 L1061.9 734.5 L1058.1 737.6 L1054.1 740.8 L1050.0 744.1 L1045.8 747.5 L1041.6 750.9 L1037.2 754.4 L1032.8 757.9 L1028.2 761.6 L1023.6 765.2 L1018.9 769.0 L1014.1 772.8 L1009.2 776.6 L1004.2 780.6 L999.2 784.5 L994.0 788.6 L988.8 792.6 L983.5 796.8 L978.1 801.0 L972.7 805.2 L967.1 809.5 L961.5 813.8 L955.8 818.2 L950.0 822.6 L944.2 827.1 L938.3 831.6 L932.3 836.2 L926.2 840.8 L920.1 845.4 L913.9 850.1 L907.6 854.8 L901.2 859.6 L894.8 864.4 L888.3 869.2 L881.7 874.1 L875.1 879.0 L868.4 883.9 L861.6 888.9"/><path d="M1103.1 705.3 L1101.8 706.4 L1099.4 708.3 L1096.9 710.4 L1094.3 712.7 L1091.5 715.1 L1088.6 717.6 L1085.7 720.2 L1082.6 722.9 L1079.4 725.8 L1076.1 728.8 L1072.7 731.8 L1069.2 735.0 L1065.6 738.2 L1061.9 741.5 L1058.1 745.0 L1054.3 748.5 L1050.3 752.0 L1046.3 755.7 L1042.1 759.4 L1037.9 763.2 L1033.6 767.0 L1029.2 771.0 L1024.7 775.0 L1020.2 779.0 L1015.5 783.2 L1010.8 787.4 L1006.0 791.6 L1001.1 795.9 L996.2 800.3 L991.1 804.7 L986.0 809.2 L980.8 813.8 L975.6 818.3 L970.3 823.0 L964.9 827.7 L959.4 832.5 L953.8 837.3 L948.2 842.1 L942.5 847.0 L936.7 852.0 L930.9 857.0 L925.0 862.0 L919.0 867.1 L913.0 872.2 L906.9 877.4 L900.7 882.6 L894.5 887.9 L888.2 893.2 L881.8 898.5 L875.4 903.9"/><path d="M1104.9 706.8 L1103.7 707.9 L1101.4 710.0 L1099.0 712.2 L1096.5 714.6 L1093.9 717.2 L1091.2 719.8 L1088.4 722.6 L1085.5 725.6 L1082.5 728.6 L1079.4 731.7 L1076.1 735.0 L1072.9 738.3 L1069.5 741.7 L1066.0 745.3 L1062.4 748.9 L1058.8 752.6 L1055.0 756.4 L1051.2 760.2 L1047.3 764.2 L1043.3 768.2 L1039.2 772.3 L1035.1 776.5 L1030.9 780.7 L1026.6 785.0 L1022.2 789.4 L1017.7 793.8 L1013.2 798.4 L1008.6 802.9 L1003.9 807.6 L999.1 812.3 L994.3 817.1 L989.4 821.9 L984.5 826.8 L979.4 831.7 L974.3 836.8 L969.2 841.8 L963.9 846.9 L958.6 852.1 L953.2 857.4 L947.8 862.7 L942.3 868.0 L936.7 873.4 L931.1 878.8 L925.4 884.3 L919.6 889.9 L913.8 895.4 L907.9 901.1 L901.9 906.8 L895.9 912.5 L889.9 918.3"/><path d="M1106.7 708.1 L1105.6 709.3 L1103.4 711.5 L1101.2 713.9 L1098.9 716.5 L1096.4 719.2 L1093.9 722.0 L1091.2 725.0 L1088.5 728.0 L1085.7 731.2 L1082.8 734.5 L1079.8 738.0 L1076.7 741.5 L1073.5 745.1 L1070.2 748.8 L1066.9 752.6 L1063.4 756.5 L1059.9 760.5 L1056.3 764.5 L1052.7 768.7 L1048.9 772.9 L1045.1 777.2 L1041.2 781.6 L1037.3 786.1 L1033.2 790.7 L1029.1 795.3 L1024.9 800.0 L1020.7 804.7 L1016.4 809.6 L1012.0 814.5 L1007.5 819.5 L1003.0 824.5 L998.4 829.6 L993.7 834.8 L989.0 840.0 L984.2 845.3 L979.4 850.7 L974.4 856.1 L969.5 861.6 L964.4 867.2 L959.3 872.8 L954.2 878.4 L948.9 884.2 L943.6 889.9 L938.3 895.8 L932.9 901.6 L927.4 907.6 L921.9 913.6 L916.3 919.6 L910.7 925.7 L905.0 931.8"/><path d="M1108.6 709.4 L1107.6 710.6 L1105.6 713.0 L1103.5 715.6 L1101.3 718.2 L1099.0 721.1 L1096.7 724.1 L1094.2 727.2 L1091.7 730.4 L1089.0 733.7 L1086.3 737.2 L1083.5 740.8 L1080.6 744.5 L1077.7 748.2 L1074.6 752.1 L1071.5 756.1 L1068.3 760.2 L1065.0 764.4 L1061.7 768.6 L1058.3 773.0 L1054.8 777.4 L1051.2 781.9 L1047.6 786.5 L1043.9 791.2 L1040.2 796.0 L1036.3 800.9 L1032.4 805.8 L1028.5 810.8 L1024.4 815.9 L1020.4 821.0 L1016.2 826.3 L1012.0 831.6 L1007.7 836.9 L1003.4 842.4 L999.0 847.9 L994.5 853.5 L990.0 859.1 L985.4 864.8 L980.8 870.6 L976.1 876.4 L971.3 882.3 L966.5 888.3 L961.6 894.3 L956.7 900.4 L951.7 906.6 L946.7 912.8 L941.6 919.0 L936.4 925.4 L931.2 931.7 L926.0 938.2 L920.7 944.7"/><path d="M1110.6 710.6 L1109.6 711.9 L1107.8 714.4 L1105.9 717.1 L1103.8 719.9 L1101.7 722.9 L1099.6 726.0 L1097.3 729.2 L1094.9 732.6 L1092.5 736.1 L1090.0 739.7 L1087.4 743.4 L1084.7 747.3 L1082.0 751.2 L1079.2 755.3 L1076.3 759.4 L1073.4 763.7 L1070.3 768.0 L1067.2 772.5 L1064.1 777.0 L1060.9 781.6 L1057.6 786.3 L1054.2 791.1 L1050.8 796.0 L1047.3 801.0 L1043.8 806.1 L1040.2 811.2 L1036.5 816.5 L1032.8 821.8 L1029.1 827.1 L1025.2 832.6 L1021.3 838.2 L1017.4 843.8 L1013.4 849.5 L1009.3 855.2 L1005.2 861.1 L1001.0 867.0 L996.8 872.9 L992.5 879.0 L988.1 885.1 L983.7 891.3 L979.3 897.6 L974.8 903.9 L970.2 910.3 L965.6 916.7 L961.0 923.2 L956.3 929.8 L951.5 936.4 L946.7 943.1 L941.9 949.9 L937.0 956.7"/><path d="M1112.6 711.7 L1111.7 713.1 L1110.1 715.7 L1108.3 718.5 L1106.5 721.4 L1104.5 724.5 L1102.5 727.8 L1100.5 731.1 L1098.3 734.6 L1096.1 738.3 L1093.8 742.0 L1091.4 745.9 L1089.0 749.9 L1086.5 754.0 L1083.9 758.2 L1081.3 762.5 L1078.6 766.9 L1075.8 771.4 L1073.0 776.0 L1070.1 780.7 L1067.1 785.5 L1064.1 790.4 L1061.1 795.4 L1057.9 800.5 L1054.8 805.7 L1051.5 811.0 L1048.2 816.3 L1044.9 821.7 L1041.5 827.3 L1038.0 832.9 L1034.5 838.5 L1031.0 844.3 L1027.3 850.2 L1023.7 856.1 L1020.0 862.1 L1016.2 868.2 L1012.4 874.3 L1008.5 880.5 L1004.6 886.8 L1000.6 893.2 L996.6 899.7 L992.5 906.2 L988.4 912.8 L984.2 919.4 L980.0 926.2 L975.8 933.0 L971.5 939.8 L967.1 946.8 L962.7 953.7 L958.3 960.8 L953.8 967.9"/><path d="M1114.7 712.7 L1113.9 714.1 L1112.4 716.9 L1110.8 719.8 L1109.2 722.9 L1107.4 726.1 L1105.6 729.4 L1103.7 732.9 L1101.8 736.5 L1099.8 740.3 L1097.7 744.2 L1095.5 748.2 L1093.3 752.3 L1091.1 756.5 L1088.7 760.9 L1086.4 765.3 L1083.9 769.9 L1081.4 774.5 L1078.9 779.3 L1076.3 784.2 L1073.6 789.2 L1070.9 794.2 L1068.1 799.4 L1065.3 804.7 L1062.4 810.0 L1059.5 815.5 L1056.5 821.0 L1053.5 826.6 L1050.4 832.3 L1047.3 838.1 L1044.1 844.0 L1040.9 850.0 L1037.6 856.1 L1034.3 862.2 L1030.9 868.4 L1027.5 874.7 L1024.1 881.1 L1020.6 887.6 L1017.0 894.1 L1013.4 900.7 L1009.8 907.4 L1006.1 914.2 L1002.4 921.0 L998.6 927.9 L994.8 934.9 L991.0 942.0 L987.1 949.1 L983.1 956.3 L979.2 963.6 L975.1 970.9 L971.1 978.3"/><path d="M1116.9 713.7 L1116.2 715.1 L1114.8 718.0 L1113.4 721.0 L1111.9 724.2 L1110.4 727.5 L1108.8 730.9 L1107.1 734.5 L1105.3 738.3 L1103.5 742.1 L1101.7 746.1 L1099.8 750.2 L1097.8 754.5 L1095.8 758.9 L1093.7 763.3 L1091.6 767.9 L1089.4 772.6 L1087.2 777.4 L1084.9 782.3 L1082.6 787.4 L1080.2 792.5 L1077.8 797.7 L1075.3 803.0 L1072.8 808.5 L1070.3 814.0 L1067.6 819.6 L1065.0 825.3 L1062.3 831.1 L1059.5 837.0 L1056.8 843.0 L1053.9 849.0 L1051.1 855.2 L1048.1 861.5 L1045.2 867.8 L1042.2 874.2 L1039.2 880.7 L1036.1 887.3 L1033.0 894.0 L1029.8 900.7 L1026.6 907.6 L1023.4 914.5 L1020.1 921.5 L1016.8 928.5 L1013.4 935.7 L1010.0 942.9 L1006.6 950.2 L1003.1 957.6 L999.6 965.0 L996.1 972.6 L992.5 980.2 L988.9 987.8"/><path d="M1119.1 714.5 L1118.5 716.0 L1117.3 719.0 L1116.0 722.1 L1114.7 725.3 L1113.4 728.7 L1112.0 732.3 L1110.5 736.0 L1109.0 739.8 L1107.4 743.8 L1105.8 747.9 L1104.1 752.1 L1102.4 756.5 L1100.6 761.0 L1098.8 765.6 L1097.0 770.3 L1095.1 775.1 L1093.1 780.0 L1091.1 785.1 L1089.1 790.2 L1087.0 795.5 L1084.9 800.9 L1082.7 806.3 L1080.5 811.9 L1078.3 817.6 L1076.0 823.3 L1073.7 829.2 L1071.3 835.2 L1068.9 841.2 L1066.5 847.4 L1064.0 853.6 L1061.5 859.9 L1058.9 866.4 L1056.3 872.9 L1053.7 879.5 L1051.1 886.2 L1048.4 892.9 L1045.6 899.8 L1042.9 906.8 L1040.1 913.8 L1037.2 920.9 L1034.4 928.1 L1031.5 935.4 L1028.5 942.7 L1025.5 950.2 L1022.5 957.7 L1019.5 965.3 L1016.4 973.0 L1013.3 980.7 L1010.2 988.5 L1007.0 996.4"/><path d="M1121.3 715.3 L1120.8 716.9 L1119.8 719.9 L1118.7 723.0 L1117.6 726.4 L1116.5 729.9 L1115.3 733.5 L1114.0 737.3 L1112.7 741.2 L1111.4 745.3 L1110.0 749.5 L1108.6 753.8 L1107.1 758.3 L1105.6 762.9 L1104.0 767.6 L1102.4 772.4 L1100.8 777.3 L1099.1 782.4 L1097.4 787.5 L1095.7 792.8 L1093.9 798.2 L1092.1 803.7 L1090.3 809.3 L1088.4 815.0 L1086.5 820.8 L1084.5 826.7 L1082.5 832.7 L1080.5 838.8 L1078.5 845.0 L1076.4 851.3 L1074.3 857.7 L1072.1 864.2 L1069.9 870.7 L1067.7 877.4 L1065.5 884.2 L1063.2 891.0 L1060.9 898.0 L1058.6 905.0 L1056.2 912.1 L1053.8 919.4 L1051.4 926.6 L1048.9 934.0 L1046.5 941.5 L1044.0 949.0 L1041.4 956.7 L1038.8 964.4 L1036.3 972.2 L1033.6 980.1 L1031.0 988.0 L1028.3 996.0 L1025.6 1004.2"/><path d="M1123.6 715.9 L1123.2 717.6 L1122.4 720.7 L1121.5 723.9 L1120.6 727.3 L1119.6 730.9 L1118.6 734.6 L1117.6 738.5 L1116.5 742.5 L1115.4 746.6 L1114.2 750.9 L1113.1 755.3 L1111.9 759.9 L1110.6 764.5 L1109.3 769.3 L1108.0 774.2 L1106.7 779.3 L1105.3 784.4 L1103.9 789.7 L1102.4 795.1 L1101.0 800.6 L1099.5 806.2 L1097.9 811.9 L1096.4 817.7 L1094.8 823.6 L1093.2 829.6 L1091.6 835.8 L1089.9 842.0 L1088.2 848.3 L1086.5 854.7 L1084.7 861.3 L1082.9 867.9 L1081.1 874.6 L1079.3 881.4 L1077.5 888.3 L1075.6 895.3 L1073.7 902.4 L1071.7 909.6 L1069.8 916.9 L1067.8 924.3 L1065.8 931.7 L1063.8 939.2 L1061.7 946.9 L1059.7 954.6 L1057.6 962.4 L1055.4 970.3 L1053.3 978.2 L1051.1 986.3 L1048.9 994.4 L1046.7 1002.6 L1044.5 1010.9"/><path d="M1126.0 716.5 L1125.6 718.2 L1125.0 721.3 L1124.3 724.6 L1123.5 728.1 L1122.8 731.8 L1122.0 735.5 L1121.2 739.5 L1120.3 743.6 L1119.5 747.8 L1118.6 752.1 L1117.6 756.6 L1116.7 761.2 L1115.7 766.0 L1114.7 770.9 L1113.7 775.8 L1112.6 781.0 L1111.5 786.2 L1110.4 791.6 L1109.3 797.0 L1108.1 802.6 L1106.9 808.3 L1105.7 814.1 L1104.5 820.0 L1103.3 826.0 L1102.0 832.2 L1100.7 838.4 L1099.4 844.7 L1098.1 851.2 L1096.7 857.7 L1095.3 864.4 L1093.9 871.1 L1092.5 877.9 L1091.1 884.9 L1089.6 891.9 L1088.1 899.0 L1086.6 906.2 L1085.1 913.6 L1083.6 921.0 L1082.0 928.5 L1080.5 936.1 L1078.9 943.7 L1077.2 951.5 L1075.6 959.4 L1074.0 967.3 L1072.3 975.3 L1070.6 983.5 L1068.9 991.7 L1067.2 1000.0 L1065.4 1008.3 L1063.7 1016.8"/><path d="M1128.3 717.0 L1128.1 718.7 L1127.6 721.9 L1127.1 725.3 L1126.6 728.8 L1126.0 732.5 L1125.4 736.3 L1124.9 740.3 L1124.2 744.4 L1123.6 748.7 L1123.0 753.1 L1122.3 757.7 L1121.6 762.4 L1120.9 767.2 L1120.1 772.1 L1119.4 777.2 L1118.6 782.4 L1117.8 787.7 L1117.0 793.1 L1116.2 798.7 L1115.4 804.3 L1114.5 810.1 L1113.6 816.0 L1112.8 822.0 L1111.8 828.1 L1110.9 834.3 L1110.0 840.6 L1109.0 847.0 L1108.1 853.6 L1107.1 860.2 L1106.1 866.9 L1105.1 873.8 L1104.0 880.7 L1103.0 887.8 L1101.9 894.9 L1100.9 902.1 L1099.8 909.4 L1098.7 916.9 L1097.6 924.4 L1096.4 932.0 L1095.3 939.7 L1094.1 947.5 L1092.9 955.4 L1091.8 963.4 L1090.6 971.4 L1089.4 979.6 L1088.1 987.8 L1086.9 996.2 L1085.6 1004.6 L1084.4 1013.1 L1083.1 1021.7"/><path d="M1130.7 717.4 L1130.5 719.1 L1130.3 722.3 L1129.9 725.8 L1129.6 729.3 L1129.3 733.1 L1128.9 736.9 L1128.6 741.0 L1128.2 745.2 L1127.8 749.5 L1127.4 753.9 L1127.0 758.5 L1126.5 763.3 L1126.1 768.1 L1125.6 773.1 L1125.2 778.3 L1124.7 783.5 L1124.2 788.9 L1123.7 794.4 L1123.2 800.0 L1122.7 805.7 L1122.2 811.5 L1121.6 817.5 L1121.1 823.5 L1120.5 829.7 L1119.9 836.0 L1119.4 842.4 L1118.8 848.9 L1118.2 855.5 L1117.6 862.2 L1116.9 869.0 L1116.3 875.9 L1115.7 883.0 L1115.0 890.1 L1114.4 897.3 L1113.7 904.6 L1113.0 912.0 L1112.4 919.5 L1111.7 927.1 L1111.0 934.8 L1110.3 942.6 L1109.5 950.5 L1108.8 958.5 L1108.1 966.6 L1107.3 974.7 L1106.6 983.0 L1105.8 991.3 L1105.1 999.8 L1104.3 1008.3 L1103.5 1016.9 L1102.7 1025.6"/><path d="M1133.1 717.7 L1133.0 719.4 L1132.9 722.7 L1132.8 726.1 L1132.7 729.7 L1132.6 733.5 L1132.4 737.4 L1132.3 741.5 L1132.2 745.7 L1132.0 750.1 L1131.8 754.6 L1131.7 759.2 L1131.5 764.0 L1131.4 768.9 L1131.2 773.9 L1131.0 779.1 L1130.8 784.4 L1130.6 789.8 L1130.5 795.3 L1130.3 800.9 L1130.1 806.7 L1129.9 812.6 L1129.7 818.6 L1129.5 824.7 L1129.2 830.9 L1129.0 837.3 L1128.8 843.7 L1128.6 850.3 L1128.4 856.9 L1128.1 863.7 L1127.9 870.6 L1127.7 877.6 L1127.4 884.6 L1127.2 891.8 L1126.9 899.1 L1126.7 906.5 L1126.4 913.9 L1126.2 921.5 L1125.9 929.2 L1125.6 937.0 L1125.4 944.8 L1125.1 952.8 L1124.8 960.8 L1124.5 969.0 L1124.3 977.2 L1124.0 985.6 L1123.7 994.0 L1123.4 1002.5 L1123.1 1011.1 L1122.8 1019.8 L1122.5 1028.6"/><path d="M1135.5 717.9 L1135.6 719.6 L1135.6 722.9 L1135.7 726.4 L1135.8 730.0 L1135.9 733.8 L1136.0 737.7 L1136.0 741.8 L1136.1 746.1 L1136.2 750.4 L1136.3 755.0 L1136.4 759.6 L1136.5 764.4 L1136.7 769.4 L1136.8 774.4 L1136.9 779.6 L1137.0 784.9 L1137.1 790.4 L1137.2 795.9 L1137.4 801.6 L1137.5 807.4 L1137.6 813.3 L1137.8 819.4 L1137.9 825.5 L1138.0 831.8 L1138.2 838.1 L1138.3 844.6 L1138.5 851.2 L1138.6 857.9 L1138.8 864.7 L1138.9 871.6 L1139.1 878.6 L1139.2 885.8 L1139.4 893.0 L1139.5 900.3 L1139.7 907.7 L1139.9 915.2 L1140.0 922.9 L1140.2 930.6 L1140.4 938.4 L1140.6 946.3 L1140.7 954.3 L1140.9 962.4 L1141.1 970.6 L1141.3 978.9 L1141.5 987.3 L1141.6 995.7 L1141.8 1004.3 L1142.0 1013.0 L1142.2 1021.7 L1142.4 1030.5"/><path d="M1137.9 718.0 L1138.1 719.7 L1138.3 723.0 L1138.6 726.5 L1138.9 730.1 L1139.2 733.9 L1139.5 737.9 L1139.8 742.0 L1140.1 746.2 L1140.5 750.6 L1140.8 755.2 L1141.2 759.8 L1141.6 764.7 L1142.0 769.6 L1142.4 774.7 L1142.8 779.9 L1143.2 785.2 L1143.6 790.7 L1144.0 796.2 L1144.5 801.9 L1144.9 807.8 L1145.4 813.7 L1145.9 819.7 L1146.4 825.9 L1146.8 832.2 L1147.3 838.6 L1147.8 845.1 L1148.4 851.7 L1148.9 858.4 L1149.4 865.2 L1150.0 872.1 L1150.5 879.2 L1151.1 886.3 L1151.6 893.6 L1152.2 900.9 L1152.8 908.3 L1153.4 915.9 L1154.0 923.5 L1154.6 931.3 L1155.2 939.1 L1155.8 947.0 L1156.4 955.1 L1157.1 963.2 L1157.7 971.4 L1158.3 979.7 L1159.0 988.1 L1159.7 996.6 L1160.3 1005.2 L1161.0 1013.9 L1161.7 1022.7 L1162.4 1031.5"/><path d="M1140.4 718.0 L1140.6 719.7 L1141.0 723.0 L1141.5 726.5 L1142.0 730.1 L1142.5 733.9 L1143.0 737.9 L1143.6 742.0 L1144.2 746.2 L1144.7 750.6 L1145.4 755.2 L1146.0 759.8 L1146.6 764.7 L1147.3 769.6 L1148.0 774.7 L1148.7 779.9 L1149.4 785.2 L1150.1 790.7 L1150.9 796.2 L1151.6 801.9 L1152.4 807.8 L1153.2 813.7 L1154.0 819.7 L1154.8 825.9 L1155.7 832.2 L1156.5 838.6 L1157.4 845.1 L1158.3 851.7 L1159.2 858.4 L1160.1 865.2 L1161.0 872.1 L1162.0 879.2 L1162.9 886.3 L1163.9 893.6 L1164.9 900.9 L1165.9 908.3 L1166.9 915.9 L1167.9 923.5 L1168.9 931.3 L1170.0 939.1 L1171.0 947.0 L1172.1 955.1 L1173.2 963.2 L1174.3 971.4 L1175.4 979.7 L1176.6 988.1 L1177.7 996.6 L1178.8 1005.2 L1180.0 1013.9 L1181.2 1022.7 L1182.4 1031.5"/><path d="M1142.8 717.9 L1143.1 719.6 L1143.8 722.9 L1144.4 726.4 L1145.1 730.0 L1145.8 733.8 L1146.6 737.7 L1147.4 741.8 L1148.2 746.1 L1149.0 750.4 L1149.9 755.0 L1150.7 759.6 L1151.7 764.4 L1152.6 769.4 L1153.6 774.4 L1154.6 779.6 L1155.6 784.9 L1156.6 790.4 L1157.7 795.9 L1158.7 801.6 L1159.8 807.4 L1161.0 813.3 L1162.1 819.4 L1163.3 825.5 L1164.5 831.8 L1165.7 838.1 L1166.9 844.6 L1168.2 851.2 L1169.5 857.9 L1170.8 864.7 L1172.1 871.6 L1173.4 878.6 L1174.8 885.8 L1176.1 893.0 L1177.5 900.3 L1178.9 907.7 L1180.4 915.2 L1181.8 922.9 L1183.3 930.6 L1184.8 938.4 L1186.3 946.3 L1187.8 954.3 L1189.4 962.4 L1190.9 970.6 L1192.5 978.9 L1194.1 987.3 L1195.7 995.7 L1197.3 1004.3 L1199.0 1013.0 L1200.7 1021.7 L1202.3 1030.5"/><path d="M1145.2 717.7 L1145.6 719.4 L1146.5 722.7 L1147.3 726.1 L1148.2 729.7 L1149.1 733.5 L1150.1 737.4 L1151.1 741.5 L1152.2 745.7 L1153.2 750.1 L1154.3 754.6 L1155.5 759.2 L1156.7 764.0 L1157.9 768.9 L1159.1 773.9 L1160.4 779.1 L1161.7 784.4 L1163.1 789.8 L1164.4 795.3 L1165.8 800.9 L1167.3 806.7 L1168.7 812.6 L1170.2 818.6 L1171.7 824.7 L1173.3 830.9 L1174.8 837.3 L1176.4 843.7 L1178.1 850.3 L1179.7 856.9 L1181.4 863.7 L1183.1 870.6 L1184.8 877.6 L1186.6 884.6 L1188.3 891.8 L1190.1 899.1 L1192.0 906.5 L1193.8 913.9 L1195.7 921.5 L1197.6 929.2 L1199.5 937.0 L1201.5 944.8 L1203.5 952.8 L1205.4 960.8 L1207.5 969.0 L1209.5 977.2 L1211.6 985.6 L1213.7 994.0 L1215.8 1002.5 L1217.9 1011.1 L1220.1 1019.8 L1222.2 1028.6"/><path d="M1147.6 717.4 L1148.1 719.1 L1149.1 722.3 L1150.2 725.8 L1151.3 729.3 L1152.4 733.1 L1153.6 736.9 L1154.8 741.0 L1156.1 745.2 L1157.4 749.5 L1158.8 753.9 L1160.2 758.5 L1161.7 763.3 L1163.2 768.1 L1164.7 773.1 L1166.3 778.3 L1167.9 783.5 L1169.5 788.9 L1171.2 794.4 L1172.9 800.0 L1174.6 805.7 L1176.4 811.5 L1178.3 817.5 L1180.1 823.5 L1182.0 829.7 L1183.9 836.0 L1185.9 842.4 L1187.9 848.9 L1189.9 855.5 L1191.9 862.2 L1194.0 869.0 L1196.1 875.9 L1198.3 883.0 L1200.5 890.1 L1202.7 897.3 L1204.9 904.6 L1207.2 912.0 L1209.5 919.5 L1211.8 927.1 L1214.2 934.8 L1216.6 942.6 L1219.0 950.5 L1221.4 958.5 L1223.9 966.6 L1226.4 974.7 L1229.0 983.0 L1231.5 991.3 L1234.1 999.8 L1236.7 1008.3 L1239.4 1016.9 L1242.0 1025.6"/><path d="M1150.0 717.0 L1150.6 718.7 L1151.8 721.9 L1153.0 725.3 L1154.3 728.8 L1155.7 732.5 L1157.1 736.3 L1158.5 740.3 L1160.1 744.4 L1161.6 748.7 L1163.2 753.1 L1164.9 757.7 L1166.6 762.4 L1168.4 767.2 L1170.2 772.1 L1172.0 777.2 L1173.9 782.4 L1175.9 787.7 L1177.9 793.1 L1179.9 798.7 L1182.0 804.3 L1184.1 810.1 L1186.2 816.0 L1188.4 822.0 L1190.7 828.1 L1192.9 834.3 L1195.3 840.6 L1197.6 847.0 L1200.0 853.6 L1202.4 860.2 L1204.9 866.9 L1207.4 873.8 L1209.9 880.7 L1212.5 887.8 L1215.1 894.9 L1217.8 902.1 L1220.5 909.4 L1223.2 916.9 L1225.9 924.4 L1228.7 932.0 L1231.6 939.7 L1234.4 947.5 L1237.3 955.4 L1240.2 963.4 L1243.2 971.4 L1246.2 979.6 L1249.2 987.8 L1252.3 996.2 L1255.4 1004.6 L1258.5 1013.1 L1261.6 1021.7"/><path d="M1152.4 716.5 L1153.1 718.2 L1154.4 721.3 L1155.9 724.6 L1157.3 728.1 L1158.9 731.8 L1160.5 735.5 L1162.2 739.5 L1164.0 743.6 L1165.8 747.8 L1167.6 752.1 L1169.5 756.6 L1171.5 761.2 L1173.5 766.0 L1175.6 770.9 L1177.8 775.8 L1180.0 781.0 L1182.2 786.2 L1184.5 791.6 L1186.8 797.0 L1189.2 802.6 L1191.6 808.3 L1194.1 814.1 L1196.7 820.0 L1199.2 826.0 L1201.9 832.2 L1204.5 838.4 L1207.2 844.7 L1210.0 851.2 L1212.8 857.7 L1215.6 864.4 L1218.5 871.1 L1221.5 877.9 L1224.4 884.9 L1227.4 891.9 L1230.5 899.0 L1233.6 906.2 L1236.7 913.6 L1239.9 921.0 L1243.1 928.5 L1246.4 936.1 L1249.7 943.7 L1253.0 951.5 L1256.4 959.4 L1259.8 967.3 L1263.3 975.3 L1266.7 983.5 L1270.3 991.7 L1273.8 1000.0 L1277.4 1008.3 L1281.1 1016.8"/><path d="M1154.7 715.9 L1155.5 717.6 L1157.0 720.7 L1158.6 723.9 L1160.3 727.3 L1162.1 730.9 L1163.9 734.6 L1165.8 738.5 L1167.8 742.5 L1169.8 746.6 L1172.0 750.9 L1174.1 755.3 L1176.4 759.9 L1178.7 764.5 L1181.0 769.3 L1183.4 774.2 L1185.9 779.3 L1188.4 784.4 L1191.0 789.7 L1193.7 795.1 L1196.4 800.6 L1199.1 806.2 L1201.9 811.9 L1204.8 817.7 L1207.7 823.6 L1210.7 829.6 L1213.7 835.8 L1216.8 842.0 L1219.9 848.3 L1223.0 854.7 L1226.3 861.3 L1229.5 867.9 L1232.8 874.6 L1236.2 881.4 L1239.6 888.3 L1243.1 895.3 L1246.6 902.4 L1250.1 909.6 L1253.7 916.9 L1257.3 924.3 L1261.0 931.7 L1264.8 939.2 L1268.5 946.9 L1272.3 954.6 L1276.2 962.4 L1280.1 970.3 L1284.1 978.2 L1288.0 986.3 L1292.1 994.4 L1296.1 1002.6 L1300.3 1010.9"/><path d="M1157.0 715.3 L1157.9 716.9 L1159.6 719.9 L1161.4 723.0 L1163.3 726.4 L1165.2 729.9 L1167.3 733.5 L1169.4 737.3 L1171.6 741.2 L1173.9 745.3 L1176.2 749.5 L1178.6 753.8 L1181.1 758.3 L1183.7 762.9 L1186.3 767.6 L1189.0 772.4 L1191.7 777.3 L1194.6 782.4 L1197.5 787.5 L1200.4 792.8 L1203.4 798.2 L1206.5 803.7 L1209.6 809.3 L1212.8 815.0 L1216.0 820.8 L1219.3 826.7 L1222.7 832.7 L1226.1 838.8 L1229.6 845.0 L1233.1 851.3 L1236.7 857.7 L1240.3 864.2 L1244.0 870.7 L1247.8 877.4 L1251.6 884.2 L1255.4 891.0 L1259.3 898.0 L1263.3 905.0 L1267.3 912.1 L1271.3 919.4 L1275.4 926.6 L1279.6 934.0 L1283.8 941.5 L1288.1 949.0 L1292.4 956.7 L1296.7 964.4 L1301.1 972.2 L1305.5 980.1 L1310.0 988.0 L1314.6 996.0 L1319.1 1004.2"/><path d="M1159.2 714.5 L1160.2 716.0 L1162.1 719.0 L1164.1 722.1 L1166.2 725.3 L1168.3 728.7 L1170.6 732.3 L1172.9 736.0 L1175.3 739.8 L1177.8 743.8 L1180.4 747.9 L1183.1 752.1 L1185.8 756.5 L1188.6 761.0 L1191.5 765.6 L1194.5 770.3 L1197.5 775.1 L1200.6 780.0 L1203.8 785.1 L1207.0 790.2 L1210.3 795.5 L1213.7 800.9 L1217.2 806.3 L1220.7 811.9 L1224.2 817.6 L1227.9 823.3 L1231.6 829.2 L1235.3 835.2 L1239.2 841.2 L1243.0 847.4 L1247.0 853.6 L1251.0 859.9 L1255.0 866.4 L1259.2 872.9 L1263.3 879.5 L1267.6 886.2 L1271.9 892.9 L1276.2 899.8 L1280.6 906.8 L1285.1 913.8 L1289.6 920.9 L1294.2 928.1 L1298.8 935.4 L1303.5 942.7 L1308.2 950.2 L1313.0 957.7 L1317.8 965.3 L1322.7 973.0 L1327.7 980.7 L1332.7 988.5 L1337.7 996.4"/><path d="M1161.4 713.7 L1162.5 715.1 L1164.6 718.0 L1166.7 721.0 L1169.0 724.2 L1171.3 727.5 L1173.8 730.9 L1176.3 734.5 L1179.0 738.3 L1181.7 742.1 L1184.5 746.1 L1187.4 750.2 L1190.4 754.5 L1193.5 758.9 L1196.6 763.3 L1199.8 767.9 L1203.1 772.6 L1206.5 777.4 L1210.0 782.3 L1213.5 787.4 L1217.1 792.5 L1220.8 797.7 L1224.5 803.0 L1228.4 808.5 L1232.3 814.0 L1236.2 819.6 L1240.3 825.3 L1244.3 831.1 L1248.5 837.0 L1252.7 843.0 L1257.0 849.0 L1261.4 855.2 L1265.8 861.5 L1270.3 867.8 L1274.9 874.2 L1279.5 880.7 L1284.2 887.3 L1288.9 894.0 L1293.7 900.7 L1298.6 907.6 L1303.5 914.5 L1308.5 921.5 L1313.5 928.5 L1318.6 935.7 L1323.8 942.9 L1329.0 950.2 L1334.2 957.6 L1339.6 965.0 L1345.0 972.6 L1350.4 980.2 L1355.9 987.8"/><path d="M1163.6 712.7 L1164.8 714.1 L1167.0 716.9 L1169.3 719.8 L1171.7 722.9 L1174.3 726.1 L1176.9 729.4 L1179.7 732.9 L1182.5 736.5 L1185.5 740.3 L1188.5 744.2 L1191.6 748.2 L1194.9 752.3 L1198.2 756.5 L1201.6 760.9 L1205.1 765.3 L1208.6 769.9 L1212.3 774.5 L1216.0 779.3 L1219.8 784.2 L1223.7 789.2 L1227.7 794.2 L1231.8 799.4 L1235.9 804.7 L1240.1 810.0 L1244.4 815.5 L1248.7 821.0 L1253.2 826.6 L1257.7 832.3 L1262.2 838.1 L1266.9 844.0 L1271.6 850.0 L1276.4 856.1 L1281.2 862.2 L1286.1 868.4 L1291.1 874.7 L1296.2 881.1 L1301.3 887.6 L1306.5 894.1 L1311.7 900.7 L1317.1 907.4 L1322.4 914.2 L1327.9 921.0 L1333.4 927.9 L1338.9 934.9 L1344.6 942.0 L1350.3 949.1 L1356.0 956.3 L1361.8 963.6 L1367.7 970.9 L1373.7 978.3"/><path d="M1165.7 711.7 L1166.9 713.1 L1169.3 715.7 L1171.8 718.5 L1174.4 721.4 L1177.2 724.5 L1180.0 727.8 L1182.9 731.1 L1186.0 734.6 L1189.2 738.3 L1192.4 742.0 L1195.8 745.9 L1199.2 749.9 L1202.8 754.0 L1206.4 758.2 L1210.2 762.5 L1214.0 766.9 L1217.9 771.4 L1221.9 776.0 L1226.0 780.7 L1230.2 785.5 L1234.5 790.4 L1238.8 795.4 L1243.2 800.5 L1247.7 805.7 L1252.3 811.0 L1257.0 816.3 L1261.7 821.7 L1266.6 827.3 L1271.5 832.9 L1276.5 838.5 L1281.5 844.3 L1286.6 850.2 L1291.8 856.1 L1297.1 862.1 L1302.5 868.2 L1307.9 874.3 L1313.4 880.5 L1318.9 886.8 L1324.6 893.2 L1330.3 899.7 L1336.0 906.2 L1341.9 912.8 L1347.8 919.4 L1353.7 926.2 L1359.8 933.0 L1365.9 939.8 L1372.1 946.8 L1378.3 953.7 L1384.6 960.8 L1391.0 967.9"/><path d="M1167.7 710.6 L1169.1 711.9 L1171.6 714.4 L1174.3 717.1 L1177.0 719.9 L1180.0 722.9 L1183.0 726.0 L1186.1 729.2 L1189.4 732.6 L1192.7 736.1 L1196.2 739.7 L1199.8 743.4 L1203.5 747.3 L1207.3 751.2 L1211.1 755.3 L1215.1 759.4 L1219.2 763.7 L1223.4 768.0 L1227.7 772.5 L1232.0 777.0 L1236.5 781.6 L1241.0 786.3 L1245.6 791.1 L1250.4 796.0 L1255.2 801.0 L1260.1 806.1 L1265.0 811.2 L1270.1 816.5 L1275.2 821.8 L1280.5 827.1 L1285.8 832.6 L1291.1 838.2 L1296.6 843.8 L1302.2 849.5 L1307.8 855.2 L1313.5 861.1 L1319.2 867.0 L1325.1 872.9 L1331.0 879.0 L1337.0 885.1 L1343.1 891.3 L1349.2 897.6 L1355.5 903.9 L1361.8 910.3 L1368.1 916.7 L1374.6 923.2 L1381.1 929.8 L1387.6 936.4 L1394.3 943.1 L1401.0 949.9 L1407.8 956.7"/><path d="M1169.7 709.4 L1171.1 710.6 L1173.8 713.0 L1176.6 715.6 L1179.6 718.2 L1182.7 721.1 L1185.9 724.1 L1189.2 727.2 L1192.6 730.4 L1196.2 733.7 L1199.9 737.2 L1203.7 740.8 L1207.6 744.5 L1211.6 748.2 L1215.7 752.1 L1219.9 756.1 L1224.3 760.2 L1228.7 764.4 L1233.2 768.6 L1237.8 773.0 L1242.5 777.4 L1247.4 781.9 L1252.3 786.5 L1257.3 791.2 L1262.4 796.0 L1267.5 800.9 L1272.8 805.8 L1278.2 810.8 L1283.6 815.9 L1289.2 821.0 L1294.8 826.3 L1300.5 831.6 L1306.3 836.9 L1312.1 842.4 L1318.1 847.9 L1324.1 853.5 L1330.3 859.1 L1336.5 864.8 L1342.7 870.6 L1349.1 876.4 L1355.5 882.3 L1362.0 888.3 L1368.6 894.3 L1375.3 900.4 L1382.0 906.6 L1388.9 912.8 L1395.8 919.0 L1402.7 925.4 L1409.8 931.7 L1416.9 938.2 L1424.1 944.7"/><path d="M1171.6 708.1 L1173.1 709.3 L1175.9 711.5 L1178.9 713.9 L1182.0 716.5 L1185.3 719.2 L1188.6 722.0 L1192.2 725.0 L1195.8 728.0 L1199.6 731.2 L1203.4 734.5 L1207.4 738.0 L1211.5 741.5 L1215.8 745.1 L1220.1 748.8 L1224.6 752.6 L1229.1 756.5 L1233.8 760.5 L1238.6 764.5 L1243.4 768.7 L1248.4 772.9 L1253.5 777.2 L1258.6 781.6 L1263.9 786.1 L1269.3 790.7 L1274.8 795.3 L1280.3 800.0 L1286.0 804.7 L1291.7 809.6 L1297.5 814.5 L1303.5 819.5 L1309.5 824.5 L1315.6 829.6 L1321.8 834.8 L1328.1 840.0 L1334.4 845.3 L1340.9 850.7 L1347.4 856.1 L1354.0 861.6 L1360.7 867.2 L1367.5 872.8 L1374.4 878.4 L1381.3 884.2 L1388.4 889.9 L1395.5 895.8 L1402.7 901.6 L1409.9 907.6 L1417.3 913.6 L1424.7 919.6 L1432.2 925.7 L1439.8 931.8"/><path d="M1173.5 706.8 L1175.0 707.9 L1178.0 710.0 L1181.1 712.2 L1184.4 714.6 L1187.8 717.2 L1191.3 719.8 L1195.0 722.6 L1198.8 725.6 L1202.8 728.6 L1206.8 731.7 L1211.0 735.0 L1215.4 738.3 L1219.8 741.7 L1224.3 745.3 L1229.0 748.9 L1233.8 752.6 L1238.7 756.4 L1243.7 760.2 L1248.8 764.2 L1254.0 768.2 L1259.4 772.3 L1264.8 776.5 L1270.3 780.7 L1276.0 785.0 L1281.7 789.4 L1287.5 793.8 L1293.5 798.4 L1299.5 802.9 L1305.6 807.6 L1311.8 812.3 L1318.1 817.1 L1324.5 821.9 L1331.0 826.8 L1337.6 831.7 L1344.3 836.8 L1351.1 841.8 L1357.9 846.9 L1364.9 852.1 L1371.9 857.4 L1379.1 862.7 L1386.3 868.0 L1393.6 873.4 L1400.9 878.8 L1408.4 884.3 L1415.9 889.9 L1423.6 895.4 L1431.3 901.1 L1439.1 906.8 L1446.9 912.5 L1454.9 918.3"/><path d="M1175.2 705.3 L1176.8 706.4 L1179.9 708.3 L1183.2 710.4 L1186.6 712.7 L1190.2 715.1 L1193.9 717.6 L1197.7 720.2 L1201.7 722.9 L1205.9 725.8 L1210.1 728.8 L1214.5 731.8 L1219.0 735.0 L1223.6 738.2 L1228.4 741.5 L1233.3 745.0 L1238.3 748.5 L1243.4 752.0 L1248.6 755.7 L1254.0 759.4 L1259.4 763.2 L1265.0 767.0 L1270.7 771.0 L1276.5 775.0 L1282.3 779.0 L1288.3 783.2 L1294.4 787.4 L1300.6 791.6 L1306.9 795.9 L1313.3 800.3 L1319.8 804.7 L1326.4 809.2 L1333.1 813.8 L1339.9 818.3 L1346.8 823.0 L1353.8 827.7 L1360.9 832.5 L1368.0 837.3 L1375.3 842.1 L1382.7 847.0 L1390.1 852.0 L1397.6 857.0 L1405.2 862.0 L1413.0 867.1 L1420.8 872.2 L1428.6 877.4 L1436.6 882.6 L1444.7 887.9 L1452.8 893.2 L1461.0 898.5 L1469.4 903.9"/><path d="M1176.9 703.9 L1178.6 704.8 L1181.8 706.6 L1185.2 708.5 L1188.8 710.6 L1192.5 712.8 L1196.3 715.2 L1200.3 717.6 L1204.5 720.2 L1208.8 722.9 L1213.2 725.6 L1217.8 728.5 L1222.5 731.5 L1227.3 734.5 L1232.3 737.6 L1237.4 740.8 L1242.6 744.1 L1247.9 747.5 L1253.3 750.9 L1258.9 754.4 L1264.6 757.9 L1270.4 761.6 L1276.3 765.2 L1282.3 769.0 L1288.4 772.8 L1294.7 776.6 L1301.0 780.6 L1307.5 784.5 L1314.0 788.6 L1320.7 792.6 L1327.5 796.8 L1334.3 801.0 L1341.3 805.2 L1348.4 809.5 L1355.6 813.8 L1362.8 818.2 L1370.2 822.6 L1377.7 827.1 L1385.2 831.6 L1392.9 836.2 L1400.6 840.8 L1408.5 845.4 L1416.4 850.1 L1424.4 854.8 L1432.5 859.6 L1440.8 864.4 L1449.1 869.2 L1457.4 874.1 L1465.9 879.0 L1474.5 883.9 L1483.1 888.9"/><path d="M1178.5 702.3 L1180.2 703.1 L1183.6 704.8 L1187.1 706.6 L1190.8 708.5 L1194.6 710.5 L1198.7 712.7 L1202.8 714.9 L1207.1 717.3 L1211.6 719.8 L1216.2 722.4 L1220.9 725.1 L1225.8 727.8 L1230.8 730.7 L1235.9 733.6 L1241.2 736.6 L1246.6 739.6 L1252.1 742.7 L1257.8 745.9 L1263.6 749.2 L1269.5 752.5 L1275.5 755.8 L1281.6 759.2 L1287.8 762.7 L1294.2 766.3 L1300.7 769.8 L1307.3 773.5 L1314.0 777.2 L1320.8 780.9 L1327.7 784.7 L1334.7 788.5 L1341.8 792.4 L1349.1 796.3 L1356.4 800.3 L1363.9 804.3 L1371.4 808.3 L1379.0 812.4 L1386.8 816.5 L1394.6 820.7 L1402.6 824.9 L1410.6 829.1 L1418.8 833.4 L1427.0 837.7 L1435.3 842.0 L1443.7 846.4 L1452.3 850.8 L1460.9 855.2 L1469.6 859.7 L1478.4 864.2 L1487.3 868.7 L1496.2 873.2"/><path d="M1180.0 700.7 L1181.8 701.4 L1185.3 702.9 L1188.9 704.5 L1192.7 706.2 L1196.7 708.1 L1200.8 710.1 L1205.1 712.2 L1209.6 714.4 L1214.2 716.6 L1219.0 719.0 L1223.9 721.5 L1228.9 724.0 L1234.1 726.7 L1239.4 729.3 L1244.9 732.1 L1250.4 734.9 L1256.2 737.8 L1262.0 740.7 L1268.0 743.7 L1274.1 746.8 L1280.3 749.9 L1286.6 753.0 L1293.1 756.2 L1299.7 759.5 L1306.4 762.8 L1313.2 766.1 L1320.1 769.5 L1327.1 772.9 L1334.3 776.4 L1341.6 779.9 L1348.9 783.4 L1356.4 787.0 L1364.0 790.6 L1371.7 794.3 L1379.5 798.0 L1387.4 801.7 L1395.4 805.5 L1403.5 809.3 L1411.7 813.1 L1420.0 817.0 L1428.5 820.8 L1437.0 824.7 L1445.6 828.7 L1454.3 832.6 L1463.1 836.6 L1472.0 840.6 L1481.0 844.7 L1490.1 848.7 L1499.3 852.8 L1508.6 856.9"/><path d="M1181.4 699.0 L1183.3 699.7 L1186.8 701.0 L1190.6 702.4 L1194.5 703.9 L1198.6 705.6 L1202.9 707.4 L1207.3 709.3 L1211.9 711.3 L1216.7 713.4 L1221.6 715.5 L1226.6 717.8 L1231.8 720.1 L1237.2 722.5 L1242.7 724.9 L1248.3 727.5 L1254.0 730.0 L1259.9 732.7 L1266.0 735.3 L1272.1 738.1 L1278.4 740.9 L1284.8 743.7 L1291.3 746.5 L1298.0 749.5 L1304.8 752.4 L1311.7 755.4 L1318.7 758.4 L1325.8 761.5 L1333.1 764.6 L1340.5 767.8 L1348.0 770.9 L1355.6 774.2 L1363.3 777.4 L1371.1 780.7 L1379.0 784.0 L1387.1 787.3 L1395.2 790.7 L1403.5 794.1 L1411.9 797.5 L1420.3 800.9 L1428.9 804.4 L1437.6 807.8 L1446.4 811.3 L1455.2 814.9 L1464.2 818.4 L1473.3 822.0 L1482.5 825.5 L1491.8 829.1 L1501.1 832.7 L1510.6 836.4 L1520.2 840.0"/><path d="M1182.7 697.3 L1184.6 697.8 L1188.3 698.9 L1192.2 700.2 L1196.2 701.5 L1200.4 703.0 L1204.8 704.6 L1209.4 706.3 L1214.1 708.1 L1219.0 710.0 L1224.0 711.9 L1229.2 713.9 L1234.6 716.0 L1240.0 718.2 L1245.7 720.4 L1251.5 722.7 L1257.4 725.0 L1263.4 727.4 L1269.6 729.8 L1276.0 732.3 L1282.4 734.8 L1289.0 737.3 L1295.7 739.9 L1302.6 742.5 L1309.6 745.1 L1316.6 747.8 L1323.9 750.5 L1331.2 753.3 L1338.7 756.1 L1346.3 758.9 L1353.9 761.7 L1361.8 764.6 L1369.7 767.5 L1377.7 770.4 L1385.9 773.3 L1394.2 776.3 L1402.5 779.3 L1411.0 782.2 L1419.6 785.3 L1428.3 788.3 L1437.1 791.4 L1446.1 794.4 L1455.1 797.5 L1464.2 800.6 L1473.5 803.7 L1482.8 806.8 L1492.2 809.9 L1501.8 813.1 L1511.4 816.2 L1521.2 819.4 L1531.0 822.5"/><path d="M1183.9 695.5 L1185.9 696.0 L1189.7 696.9 L1193.6 697.9 L1197.8 699.1 L1202.1 700.4 L1206.6 701.7 L1211.3 703.2 L1216.1 704.8 L1221.1 706.5 L1226.3 708.2 L1231.6 710.0 L1237.1 711.9 L1242.7 713.8 L1248.5 715.7 L1254.4 717.8 L1260.5 719.8 L1266.7 721.9 L1273.0 724.1 L1279.5 726.3 L1286.1 728.5 L1292.9 730.7 L1299.8 733.0 L1306.8 735.3 L1314.0 737.7 L1321.2 740.0 L1328.6 742.4 L1336.2 744.8 L1343.8 747.3 L1351.6 749.7 L1359.5 752.2 L1367.5 754.7 L1375.6 757.2 L1383.9 759.8 L1392.2 762.3 L1400.7 764.9 L1409.3 767.5 L1418.0 770.1 L1426.8 772.7 L1435.7 775.3 L1444.8 778.0 L1453.9 780.6 L1463.2 783.2 L1472.5 785.9 L1482.0 788.6 L1491.6 791.2 L1501.2 793.9 L1511.0 796.6 L1520.9 799.2 L1530.9 801.9 L1541.0 804.6"/><path d="M1185.0 693.7 L1187.0 694.0 L1190.9 694.7 L1194.9 695.6 L1199.2 696.6 L1203.6 697.6 L1208.2 698.8 L1213.0 700.1 L1217.9 701.4 L1223.1 702.9 L1228.3 704.4 L1233.8 705.9 L1239.4 707.6 L1245.1 709.2 L1251.0 711.0 L1257.1 712.7 L1263.3 714.5 L1269.7 716.4 L1276.2 718.2 L1282.8 720.1 L1289.6 722.0 L1296.5 724.0 L1303.5 726.0 L1310.7 728.0 L1318.0 730.0 L1325.4 732.0 L1333.0 734.1 L1340.7 736.2 L1348.5 738.2 L1356.5 740.4 L1364.5 742.5 L1372.7 744.6 L1381.1 746.8 L1389.5 748.9 L1398.0 751.1 L1406.7 753.3 L1415.5 755.4 L1424.4 757.6 L1433.4 759.8 L1442.5 762.0 L1451.8 764.2 L1461.1 766.4 L1470.6 768.6 L1480.1 770.8 L1489.8 773.0 L1499.6 775.2 L1509.5 777.4 L1519.5 779.6 L1529.6 781.8 L1539.8 784.0 L1550.2 786.1"/><path d="M1186.0 691.8 L1188.1 692.0 L1192.0 692.6 L1196.1 693.2 L1200.5 694.0 L1205.0 694.8 L1209.7 695.8 L1214.6 696.8 L1219.6 698.0 L1224.8 699.2 L1230.2 700.5 L1235.8 701.8 L1241.5 703.2 L1247.3 704.6 L1253.4 706.1 L1259.6 707.6 L1265.9 709.1 L1272.4 710.6 L1279.0 712.2 L1285.8 713.8 L1292.7 715.4 L1299.7 717.1 L1306.9 718.7 L1314.2 720.4 L1321.7 722.1 L1329.3 723.8 L1337.0 725.5 L1344.8 727.3 L1352.8 729.0 L1360.9 730.7 L1369.1 732.5 L1377.5 734.3 L1386.0 736.0 L1394.6 737.8 L1403.3 739.6 L1412.1 741.3 L1421.1 743.1 L1430.2 744.9 L1439.4 746.6 L1448.7 748.4 L1458.1 750.2 L1467.6 751.9 L1477.3 753.7 L1487.1 755.4 L1496.9 757.1 L1506.9 758.8 L1517.0 760.5 L1527.2 762.2 L1537.5 763.9 L1547.9 765.6 L1558.5 767.2"/><path d="M1162.3 706.1 L1162.9 705.7 L1164.0 704.9 L1165.6 703.7 L1167.6 702.3 L1169.9 700.7 L1172.4 699.0 L1175.3 697.1 L1178.4 695.1 L1181.7 693.0 L1185.3 690.9 L1189.0 690.0 L1193.0 690.4 L1197.2 690.8 L1201.6 691.3 L1206.2 692.0 L1211.0 692.7 L1216.0 693.6 L1221.1 694.5 L1226.4 695.4 L1231.9 696.5 L1237.5 697.6 L1243.4 698.7 L1249.3 699.9 L1255.5 701.1 L1261.7 702.3 L1268.2 703.5 L1274.8 704.8 L1281.5 706.1 L1288.4 707.4 L1295.4 708.7 L1302.6 710.0 L1309.9 711.4 L1317.4 712.7 L1325.0 714.1 L1332.7 715.5 L1340.5 716.8 L1348.5 718.2 L1356.6 719.6 L1364.9 720.9 L1373.3 722.3 L1381.8 723.7 L1390.4 725.1 L1399.1 726.4 L1408.0 727.8 L1417.0 729.1 L1426.1 730.5 L1435.4 731.8 L1444.7 733.2 L1454.2 734.5 L1463.8 735.8 L1473.5 737.1 L1483.3 738.4 L1493.2 739.6 L1503.3 740.9 L1513.4 742.1 L1523.7 743.3 L1534.1 744.5 L1544.6 745.7 L1555.2 746.8 L1565.9 748.0"/><path d="M1162.7 705.7 L1163.3 705.2 L1164.5 704.3 L1166.1 703.1 L1168.1 701.5 L1170.4 699.8 L1173.0 697.9 L1175.9 695.8 L1179.0 693.6 L1182.4 691.3 L1186.0 689.0 L1189.9 688.0 L1193.9 688.1 L1198.2 688.3 L1202.6 688.6 L1207.3 689.1 L1212.2 689.6 L1217.2 690.2 L1222.4 690.9 L1227.8 691.6 L1233.4 692.4 L1239.1 693.3 L1245.0 694.1 L1251.1 695.0 L1257.3 696.0 L1263.7 696.9 L1270.2 697.9 L1276.9 698.9 L1283.7 699.9 L1290.7 700.9 L1297.9 701.9 L1305.2 702.9 L1312.6 703.9 L1320.1 704.9 L1327.8 705.9 L1335.7 706.9 L1343.7 708.0 L1351.8 709.0 L1360.0 710.0 L1368.4 711.0 L1376.9 712.0 L1385.5 712.9 L1394.3 713.9 L1403.1 714.9 L1412.2 715.8 L1421.3 716.8 L1430.5 717.7 L1439.9 718.6 L1449.4 719.5 L1459.0 720.3 L1468.8 721.2 L1478.6 722.0 L1488.6 722.8 L1498.7 723.6 L1508.9 724.4 L1519.2 725.1 L1529.6 725.8 L1540.1 726.5 L1550.8 727.1 L1561.6 727.8 L1572.4 728.4"/><path d="M1163.1 705.2 L1163.7 704.7 L1164.9 703.7 L1166.5 702.4 L1168.5 700.7 L1170.9 698.8 L1173.5 696.7 L1176.4 694.5 L1179.6 692.1 L1183.0 689.7 L1186.7 687.1 L1190.6 685.9 L1194.7 685.8 L1199.0 685.8 L1203.5 685.9 L1208.2 686.1 L1213.1 686.4 L1218.2 686.8 L1223.5 687.2 L1229.0 687.7 L1234.6 688.3 L1240.4 688.9 L1246.4 689.5 L1252.6 690.1 L1258.9 690.8 L1265.3 691.5 L1272.0 692.1 L1278.7 692.8 L1285.7 693.5 L1292.7 694.2 L1300.0 694.9 L1307.3 695.6 L1314.9 696.3 L1322.5 697.0 L1330.3 697.6 L1338.3 698.3 L1346.3 698.9 L1354.6 699.6 L1362.9 700.2 L1371.4 700.8 L1380.0 701.4 L1388.7 702.0 L1397.6 702.6 L1406.6 703.1 L1415.7 703.7 L1425.0 704.2 L1434.3 704.7 L1443.8 705.1 L1453.5 705.6 L1463.2 706.0 L1473.1 706.4 L1483.0 706.7 L1493.1 707.0 L1503.4 707.3 L1513.7 707.6 L1524.1 707.8 L1534.7 708.0 L1545.4 708.2 L1556.1 708.3 L1567.0 708.4 L1578.1 708.4"/><path d="M1163.4 704.7 L1164.0 704.2 L1165.2 703.1 L1166.9 701.6 L1168.9 699.9 L1171.3 697.8 L1173.9 695.6 L1176.9 693.2 L1180.1 690.6 L1183.5 688.0 L1187.2 685.2 L1191.2 683.8 L1195.3 683.5 L1199.7 683.3 L1204.3 683.2 L1209.0 683.1 L1214.0 683.2 L1219.1 683.4 L1224.5 683.6 L1230.0 683.8 L1235.7 684.1 L1241.6 684.4 L1247.6 684.8 L1253.8 685.2 L1260.2 685.6 L1266.7 685.9 L1273.4 686.3 L1280.3 686.7 L1287.3 687.1 L1294.4 687.5 L1301.7 687.9 L1309.2 688.2 L1316.8 688.6 L1324.5 688.9 L1332.4 689.2 L1340.4 689.5 L1348.6 689.8 L1356.9 690.1 L1365.3 690.3 L1373.9 690.6 L1382.6 690.8 L1391.4 691.0 L1400.4 691.1 L1409.5 691.2 L1418.7 691.3 L1428.1 691.4 L1437.5 691.5 L1447.1 691.5 L1456.9 691.5 L1466.7 691.4 L1476.7 691.3 L1486.7 691.2 L1496.9 691.0 L1507.3 690.8 L1517.7 690.6 L1528.3 690.3 L1538.9 690.0 L1549.7 689.6 L1560.6 689.2 L1571.6 688.8 L1582.8 688.3"/><path d="M1163.6 704.2 L1164.2 703.7 L1165.5 702.5 L1167.1 700.9 L1169.2 699.0 L1171.6 696.8 L1174.2 694.4 L1177.2 691.8 L1180.5 689.1 L1184.0 686.2 L1187.7 683.3 L1191.6 681.6 L1195.8 681.1 L1200.2 680.7 L1204.8 680.4 L1209.6 680.1 L1214.7 680.0 L1219.9 679.9 L1225.2 679.8 L1230.8 679.9 L1236.6 679.9 L1242.5 680.0 L1248.6 680.1 L1254.8 680.2 L1261.3 680.3 L1267.8 680.4 L1274.6 680.5 L1281.5 680.6 L1288.6 680.6 L1295.8 680.7 L1303.1 680.7 L1310.7 680.8 L1318.3 680.8 L1326.1 680.8 L1334.1 680.7 L1342.2 680.7 L1350.4 680.6 L1358.8 680.5 L1367.3 680.4 L1375.9 680.2 L1384.7 680.0 L1393.6 679.8 L1402.6 679.5 L1411.8 679.2 L1421.1 678.9 L1430.5 678.5 L1440.1 678.1 L1449.8 677.7 L1459.6 677.2 L1469.5 676.7 L1479.5 676.1 L1489.7 675.5 L1500.0 674.9 L1510.4 674.2 L1520.9 673.4 L1531.6 672.6 L1542.4 671.8 L1553.2 670.9 L1564.2 670.0 L1575.3 669.0 L1586.6 667.9"/><path d="M1163.8 703.7 L1164.4 703.1 L1165.7 701.9 L1167.3 700.2 L1169.4 698.2 L1171.8 695.8 L1174.5 693.3 L1177.5 690.5 L1180.7 687.5 L1184.3 684.5 L1188.0 681.4 L1192.0 679.5 L1196.2 678.8 L1200.6 678.1 L1205.3 677.6 L1210.1 677.1 L1215.2 676.7 L1220.4 676.4 L1225.8 676.1 L1231.4 675.9 L1237.2 675.6 L1243.2 675.5 L1249.3 675.3 L1255.6 675.1 L1262.0 674.9 L1268.7 674.7 L1275.5 674.5 L1282.4 674.3 L1289.5 674.1 L1296.8 673.8 L1304.2 673.6 L1311.8 673.3 L1319.5 672.9 L1327.3 672.6 L1335.3 672.2 L1343.5 671.8 L1351.8 671.3 L1360.2 670.8 L1368.7 670.3 L1377.4 669.7 L1386.3 669.2 L1395.2 668.5 L1404.3 667.8 L1413.6 667.1 L1422.9 666.4 L1432.4 665.6 L1442.0 664.7 L1451.8 663.8 L1461.6 662.9 L1471.6 661.9 L1481.7 660.8 L1492.0 659.7 L1502.3 658.6 L1512.8 657.4 L1523.4 656.1 L1534.1 654.8 L1544.9 653.5 L1555.9 652.0 L1566.9 650.5 L1578.1 649.0 L1589.4 647.4"/><path d="M1163.9 703.2 L1164.5 702.6 L1165.8 701.3 L1167.5 699.5 L1169.5 697.3 L1172.0 694.8 L1174.7 692.1 L1177.7 689.1 L1180.9 686.0 L1184.5 682.8 L1188.2 679.4 L1192.2 677.3 L1196.5 676.4 L1200.9 675.5 L1205.6 674.7 L1210.4 674.0 L1215.5 673.4 L1220.7 672.8 L1226.2 672.3 L1231.8 671.8 L1237.6 671.4 L1243.6 670.9 L1249.8 670.5 L1256.1 670.0 L1262.6 669.6 L1269.2 669.1 L1276.1 668.6 L1283.0 668.1 L1290.2 667.5 L1297.5 667.0 L1304.9 666.3 L1312.5 665.7 L1320.2 665.0 L1328.1 664.3 L1336.2 663.6 L1344.3 662.8 L1352.7 662.0 L1361.1 661.1 L1369.7 660.2 L1378.4 659.2 L1387.3 658.2 L1396.3 657.2 L1405.5 656.1 L1414.7 654.9 L1424.1 653.8 L1433.6 652.5 L1443.3 651.2 L1453.1 649.9 L1463.0 648.4 L1473.0 647.0 L1483.2 645.4 L1493.4 643.9 L1503.8 642.2 L1514.4 640.5 L1525.0 638.7 L1535.8 636.9 L1546.6 635.0 L1557.6 633.0 L1568.7 631.0 L1580.0 628.9 L1591.3 626.7"/><path d="M1164.0 702.7 L1164.6 702.0 L1165.8 700.7 L1167.5 698.8 L1169.6 696.5 L1172.0 693.8 L1174.7 690.9 L1177.8 687.8 L1181.0 684.5 L1184.6 681.0 L1188.4 677.5 L1192.4 675.2 L1196.6 674.0 L1201.1 672.9 L1205.7 671.9 L1210.6 671.0 L1215.7 670.1 L1220.9 669.3 L1226.4 668.5 L1232.0 667.8 L1237.8 667.1 L1243.8 666.4 L1250.0 665.6 L1256.3 664.9 L1262.8 664.2 L1269.5 663.4 L1276.4 662.6 L1283.3 661.8 L1290.5 660.9 L1297.8 660.0 L1305.3 659.1 L1312.9 658.1 L1320.6 657.1 L1328.5 656.1 L1336.6 654.9 L1344.8 653.8 L1353.1 652.6 L1361.6 651.3 L1370.2 650.0 L1379.0 648.7 L1387.8 647.3 L1396.9 645.8 L1406.0 644.3 L1415.3 642.7 L1424.7 641.1 L1434.3 639.4 L1443.9 637.7 L1453.7 635.8 L1463.7 634.0 L1473.7 632.0 L1483.9 630.0 L1494.2 627.9 L1504.6 625.8 L1515.2 623.6 L1525.8 621.3 L1536.6 618.9 L1547.5 616.5 L1558.5 614.0 L1569.6 611.4 L1580.9 608.7 L1592.3 606.0"/></g><path d="M1109 700 Q1098 690 1100 680 Q1112 688 1122 694 Q1114 700 1112 708 Z" fill="#000" opacity="0.9"/><path d="M1165 700 Q1180 692 1186 676 Q1172 684 1156 692 Q1162 698 1163 707 Z" fill="#000" opacity="0.9"/><ellipse cx="1139" cy="690" rx="42" ry="20" fill="url(#fun)" opacity="0.55"/><ellipse cx="1137" cy="702" rx="27" ry="10.5" fill="#8ea6cc"/><ellipse cx="1137" cy="703" rx="20" ry="7.5" fill="#dfe6f2"/><circle cx="1154.0" cy="703.0" r="1.3" fill="#e00000"/><circle cx="1153.3" cy="704.5" r="1.3" fill="#e00000"/><circle cx="1151.3" cy="706.0" r="1.3" fill="#e00000"/><circle cx="1148.1" cy="707.2" r="1.3" fill="#e00000"/><circle cx="1144.1" cy="708.0" r="1.3" fill="#e00000"/><circle cx="1139.4" cy="708.4" r="1.3" fill="#e00000"/><circle cx="1134.6" cy="708.4" r="1.3" fill="#e00000"/><circle cx="1129.9" cy="708.0" r="1.3" fill="#e00000"/><circle cx="1125.9" cy="707.2" r="1.3" fill="#e00000"/><circle cx="1122.7" cy="706.0" r="1.3" fill="#e00000"/><circle cx="1120.7" cy="704.5" r="1.3" fill="#e00000"/><circle cx="1120.0" cy="703.0" r="1.3" fill="#e00000"/><circle cx="1120.7" cy="701.5" r="1.3" fill="#e00000"/><circle cx="1122.7" cy="700.0" r="1.3" fill="#e00000"/><circle cx="1125.9" cy="698.8" r="1.3" fill="#e00000"/><circle cx="1129.9" cy="698.0" r="1.3" fill="#e00000"/><circle cx="1134.6" cy="697.6" r="1.3" fill="#e00000"/><circle cx="1139.4" cy="697.6" r="1.3" fill="#e00000"/><circle cx="1144.1" cy="698.0" r="1.3" fill="#e00000"/><circle cx="1148.1" cy="698.8" r="1.3" fill="#e00000"/><circle cx="1151.3" cy="700.0" r="1.3" fill="#e00000"/><circle cx="1153.3" cy="701.5" r="1.3" fill="#e00000"/><ellipse cx="1137" cy="705" rx="9" ry="3" fill="#e03030" opacity="0.7"/><path d="M1137 702 V662" stroke="#6d8cc4" stroke-width="2"/><path d="M1137 650 L1133.5 664 L1137 668 L1140.5 664 Z" fill="#0000ff"/><polygon points="1413,438 1450,453 1483,468 1515,478 1548,487 1548,497 1523,488 1490,475 1480,473 1458,478 1442,487 1430,497 1420,505 1415,513 1400,520 1385,495 1398,462" fill="#000" opacity="0.38" clip-path="url(#c4)"/><ellipse cx="1402" cy="508" rx="22" ry="11" fill="url(#fun)" transform="rotate(35 1402 508)" clip-path="url(#c4)"/><polygon points="1415.0,514.0 1415.5,513.0 1416.1,511.6 1416.9,510.0 1417.8,508.3 1418.8,506.5 1420.0,505.0 1421.4,503.6 1422.9,502.3 1424.6,501.1 1426.3,499.8 1428.2,498.4 1430.0,497.0 1431.8,495.4 1433.7,493.8 1435.6,492.1 1437.6,490.3 1439.7,488.6 1442.0,487.0 1444.4,485.4 1446.8,483.8 1449.4,482.2 1452.1,480.7 1454.9,479.3 1458.0,478.0 1461.5,476.9 1465.3,475.8 1469.4,474.8 1473.3,474.0 1477.0,473.4 1480.0,473.0 1482.3,472.9 1483.9,473.0 1485.2,473.2 1486.5,473.7 1488.0,474.3 1490.0,475.0 1492.6,475.9 1495.5,477.0 1498.7,478.2 1501.9,479.6 1505.1,480.8 1508.0,482.0 1510.7,483.1 1513.3,484.1 1515.8,485.1 1518.2,486.1 1520.6,487.1 1523.0,488.0 1525.4,488.9 1527.9,489.8 1530.2,490.6 1532.6,491.4 1534.9,492.2 1537.0,493.0 1539.1,493.6 1541.3,494.0 1543.4,494.4 1545.3,494.9 1546.8,495.7 1548.0,497.0 1549.0,499.0 1550.0,501.7 1550.6,504.8 1550.7,507.7 1549.9,510.2 1548.0,512.0 1544.5,512.9 1539.4,513.1 1533.6,512.9 1527.4,512.5 1521.7,512.1 1517.0,512.0 1513.4,512.0 1510.3,512.1 1507.7,512.1 1505.2,512.2 1502.7,512.3 1500.0,512.5 1497.1,512.8 1494.1,513.2 1491.1,513.6 1488.1,514.1 1485.1,514.5 1482.0,515.0 1478.9,515.4 1475.8,515.9 1472.7,516.3 1469.5,516.8 1466.3,517.4 1463.0,518.0 1459.5,518.8 1455.8,519.7 1452.1,520.7 1448.4,521.6 1445.0,522.4 1442.0,523.0 1439.5,523.3 1437.3,523.5 1435.4,523.6 1433.7,523.5 1431.9,523.3 1430.0,523.0 1427.9,522.6 1425.7,522.0 1423.4,521.3 1421.3,520.6 1419.5,519.8 1418.0,519.0 1416.9,518.2 1416.2,517.2 1415.8,516.2 1415.4,515.3 1415.2,514.6 1415.0,514.0" fill="#9c2a4e"/><path d="M1548.0 512.0 L1545.5 512.0 L1542.1 512.0 L1538.0 512.0 L1533.6 512.0 L1529.0 512.0 L1524.5 512.0 L1520.4 512.0 L1517.0 512.0 L1514.2 512.0 L1511.8 512.0 L1509.6 512.1 L1507.7 512.1 L1505.8 512.1 L1504.0 512.2 L1502.1 512.3 L1500.0 512.5 L1497.8 512.7 L1495.6 513.0 L1493.4 513.3 L1491.1 513.6 L1488.9 513.9 L1486.6 514.3 L1484.3 514.6 L1482.0 515.0 L1479.7 515.3 L1477.4 515.7 L1475.0 516.0 L1472.7 516.3 L1470.3 516.7 L1467.9 517.1 L1465.5 517.5 L1463.0 518.0 L1460.4 518.6 L1457.7 519.2 L1454.9 519.9 L1452.1 520.7 L1449.3 521.4 L1446.7 522.1 L1444.2 522.6 L1442.0 523.0 L1440.1 523.3 L1438.4 523.4 L1436.8 523.5 L1435.4 523.6 L1434.1 523.5 L1432.8 523.4 L1431.4 523.2 L1430.0 523.0 L1428.4 522.7 L1426.8 522.3 L1425.1 521.8 L1423.4 521.3 L1421.8 520.7 L1420.4 520.2 L1419.1 519.6 L1418.0 519.0 L1417.2 518.4 L1416.5 517.7 L1416.1 517.0 L1415.8 516.2 L1415.5 515.6 L1415.3 514.9 L1415.2 514.4 L1415.0 514.0" fill="none" stroke="#2c4a80" stroke-width="1.5"/><circle cx="1415.9" cy="512.2" r="4.4" fill="#f00000" stroke="#aebbdc" stroke-width="1"/><circle cx="1419.8" cy="505.3" r="4.4" fill="#f00000" stroke="#aebbdc" stroke-width="1"/><circle cx="1425.9" cy="500.1" r="4.4" fill="#f00000" stroke="#aebbdc" stroke-width="1"/><circle cx="1432.2" cy="495.2" r="4.4" fill="#f00000" stroke="#aebbdc" stroke-width="1"/><circle cx="1438.2" cy="489.9" r="4.4" fill="#f00000" stroke="#aebbdc" stroke-width="1"/><circle cx="1444.7" cy="485.2" r="4.4" fill="#f00000" stroke="#aebbdc" stroke-width="1"/><circle cx="1451.5" cy="481.0" r="4.4" fill="#f00000" stroke="#aebbdc" stroke-width="1"/><circle cx="1458.8" cy="477.7" r="4.4" fill="#f00000" stroke="#aebbdc" stroke-width="1"/><circle cx="1466.4" cy="475.5" r="4.4" fill="#f00000" stroke="#aebbdc" stroke-width="1"/><circle cx="1474.3" cy="473.8" r="4.4" fill="#f00000" stroke="#aebbdc" stroke-width="1"/><circle cx="1482.2" cy="472.9" r="4.4" fill="#f00000" stroke="#aebbdc" stroke-width="1"/><circle cx="1489.9" cy="475.0" r="4.4" fill="#f00000" stroke="#aebbdc" stroke-width="1"/><circle cx="1497.4" cy="477.7" r="4.4" fill="#f00000" stroke="#aebbdc" stroke-width="1"/><circle cx="1504.8" cy="480.7" r="4.4" fill="#f00000" stroke="#aebbdc" stroke-width="1"/><circle cx="1512.2" cy="483.7" r="4.4" fill="#f00000" stroke="#aebbdc" stroke-width="1"/><circle cx="1519.6" cy="486.7" r="4.4" fill="#f00000" stroke="#aebbdc" stroke-width="1"/><circle cx="1527.1" cy="489.5" r="4.4" fill="#f00000" stroke="#aebbdc" stroke-width="1"/><circle cx="1534.7" cy="492.2" r="4.4" fill="#f00000" stroke="#aebbdc" stroke-width="1"/><circle cx="1542.2" cy="494.9" r="4.4" fill="#f00000" stroke="#aebbdc" stroke-width="1"/><circle cx="1546.0" cy="512.0" r="4.4" fill="#f00000" stroke="#aebbdc" stroke-width="1"/><circle cx="1533.0" cy="512.0" r="4.4" fill="#f00000" stroke="#aebbdc" stroke-width="1"/><circle cx="1520.0" cy="512.0" r="4.4" fill="#f00000" stroke="#aebbdc" stroke-width="1"/><circle cx="1507.0" cy="512.1" r="4.4" fill="#f00000" stroke="#aebbdc" stroke-width="1"/><circle cx="1494.1" cy="513.2" r="4.4" fill="#f00000" stroke="#aebbdc" stroke-width="1"/><circle cx="1481.2" cy="515.1" r="4.4" fill="#f00000" stroke="#aebbdc" stroke-width="1"/><circle cx="1468.3" cy="517.0" r="4.4" fill="#f00000" stroke="#aebbdc" stroke-width="1"/><circle cx="1455.6" cy="519.8" r="4.4" fill="#f00000" stroke="#aebbdc" stroke-width="1"/><circle cx="1443.0" cy="522.8" r="4.4" fill="#f00000" stroke="#aebbdc" stroke-width="1"/><circle cx="1430.1" cy="523.0" r="4.4" fill="#f00000" stroke="#aebbdc" stroke-width="1"/><circle cx="1417.8" cy="518.9" r="4.4" fill="#f00000" stroke="#aebbdc" stroke-width="1"/><path d="M514.0 238.0 L945.0 303.0 L1180.0 369.0 L1413.0 437.0 L1548.0 481.0" fill="none" stroke="#5d7db0" stroke-width="2.6" shape-rendering="auto"/><path d="M514.0 238.0 L464.0 342.0 L518.0 472.0 L680.0 617.0 L982.0 710.0 L1148.0 769.0 L1325.0 842.0" fill="none" stroke="#5d7db0" stroke-width="2.6" shape-rendering="auto"/><g shape-rendering="auto"><circle cx="523.9" cy="239.5" r="2.3" fill="#5d7db0"/><circle cx="550.6" cy="243.5" r="2.3" fill="#5d7db0"/><circle cx="577.3" cy="247.5" r="2.3" fill="#5d7db0"/><circle cx="604.0" cy="251.6" r="2.3" fill="#5d7db0"/><circle cx="630.7" cy="255.6" r="2.3" fill="#5d7db0"/><circle cx="657.4" cy="259.6" r="2.3" fill="#5d7db0"/><circle cx="684.1" cy="263.6" r="2.3" fill="#5d7db0"/><circle cx="710.8" cy="267.7" r="2.3" fill="#5d7db0"/><circle cx="737.5" cy="271.7" r="2.3" fill="#5d7db0"/><circle cx="764.2" cy="275.7" r="2.3" fill="#5d7db0"/><circle cx="790.9" cy="279.8" r="2.3" fill="#5d7db0"/><circle cx="817.6" cy="283.8" r="2.3" fill="#5d7db0"/><circle cx="844.3" cy="287.8" r="2.3" fill="#5d7db0"/><circle cx="871.0" cy="291.8" r="2.3" fill="#5d7db0"/><circle cx="897.7" cy="295.9" r="2.3" fill="#5d7db0"/><circle cx="924.4" cy="299.9" r="2.3" fill="#5d7db0"/><circle cx="950.9" cy="304.7" r="2.3" fill="#5d7db0"/><circle cx="976.9" cy="312.0" r="2.3" fill="#5d7db0"/><circle cx="1002.9" cy="319.3" r="2.3" fill="#5d7db0"/><circle cx="1028.9" cy="326.6" r="2.3" fill="#5d7db0"/><circle cx="1054.9" cy="333.9" r="2.3" fill="#5d7db0"/><circle cx="1080.9" cy="341.2" r="2.3" fill="#5d7db0"/><circle cx="1106.9" cy="348.5" r="2.3" fill="#5d7db0"/><circle cx="1132.9" cy="355.8" r="2.3" fill="#5d7db0"/><circle cx="1158.9" cy="363.1" r="2.3" fill="#5d7db0"/><circle cx="1184.8" cy="370.4" r="2.3" fill="#5d7db0"/><circle cx="1210.8" cy="378.0" r="2.3" fill="#5d7db0"/><circle cx="1236.7" cy="385.5" r="2.3" fill="#5d7db0"/><circle cx="1262.6" cy="393.1" r="2.3" fill="#5d7db0"/><circle cx="1288.5" cy="400.7" r="2.3" fill="#5d7db0"/><circle cx="1314.4" cy="408.2" r="2.3" fill="#5d7db0"/><circle cx="1340.3" cy="415.8" r="2.3" fill="#5d7db0"/><circle cx="1366.3" cy="423.4" r="2.3" fill="#5d7db0"/><circle cx="1392.2" cy="430.9" r="2.3" fill="#5d7db0"/><circle cx="1418.1" cy="438.6" r="2.3" fill="#5d7db0"/><circle cx="1443.7" cy="447.0" r="2.3" fill="#5d7db0"/><circle cx="1469.4" cy="455.4" r="2.3" fill="#5d7db0"/><circle cx="1495.1" cy="463.7" r="2.3" fill="#5d7db0"/><circle cx="1520.7" cy="472.1" r="2.3" fill="#5d7db0"/><circle cx="1546.4" cy="480.5" r="2.3" fill="#5d7db0"/><circle cx="509.7" cy="247.0" r="2.3" fill="#5d7db0"/><circle cx="498.8" cy="269.5" r="2.3" fill="#5d7db0"/><circle cx="488.0" cy="292.1" r="2.3" fill="#5d7db0"/><circle cx="477.2" cy="314.6" r="2.3" fill="#5d7db0"/><circle cx="466.3" cy="337.1" r="2.3" fill="#5d7db0"/><circle cx="471.5" cy="360.1" r="2.3" fill="#5d7db0"/><circle cx="481.1" cy="383.2" r="2.3" fill="#5d7db0"/><circle cx="490.7" cy="406.3" r="2.3" fill="#5d7db0"/><circle cx="500.3" cy="429.4" r="2.3" fill="#5d7db0"/><circle cx="509.9" cy="452.5" r="2.3" fill="#5d7db0"/><circle cx="520.9" cy="474.6" r="2.3" fill="#5d7db0"/><circle cx="539.5" cy="491.2" r="2.3" fill="#5d7db0"/><circle cx="558.1" cy="507.9" r="2.3" fill="#5d7db0"/><circle cx="576.7" cy="524.6" r="2.3" fill="#5d7db0"/><circle cx="595.4" cy="541.3" r="2.3" fill="#5d7db0"/><circle cx="614.0" cy="557.9" r="2.3" fill="#5d7db0"/><circle cx="632.6" cy="574.6" r="2.3" fill="#5d7db0"/><circle cx="651.3" cy="591.3" r="2.3" fill="#5d7db0"/><circle cx="669.9" cy="607.9" r="2.3" fill="#5d7db0"/><circle cx="690.9" cy="620.4" r="2.3" fill="#5d7db0"/><circle cx="714.8" cy="627.7" r="2.3" fill="#5d7db0"/><circle cx="738.7" cy="635.1" r="2.3" fill="#5d7db0"/><circle cx="762.6" cy="642.4" r="2.3" fill="#5d7db0"/><circle cx="786.5" cy="649.8" r="2.3" fill="#5d7db0"/><circle cx="810.4" cy="657.1" r="2.3" fill="#5d7db0"/><circle cx="834.3" cy="664.5" r="2.3" fill="#5d7db0"/><circle cx="858.2" cy="671.9" r="2.3" fill="#5d7db0"/><circle cx="882.1" cy="679.2" r="2.3" fill="#5d7db0"/><circle cx="906.0" cy="686.6" r="2.3" fill="#5d7db0"/><circle cx="929.8" cy="693.9" r="2.3" fill="#5d7db0"/><circle cx="953.7" cy="701.3" r="2.3" fill="#5d7db0"/><circle cx="977.6" cy="708.7" r="2.3" fill="#5d7db0"/><circle cx="1001.2" cy="716.8" r="2.3" fill="#5d7db0"/><circle cx="1024.8" cy="725.2" r="2.3" fill="#5d7db0"/><circle cx="1048.4" cy="733.6" r="2.3" fill="#5d7db0"/><circle cx="1071.9" cy="742.0" r="2.3" fill="#5d7db0"/><circle cx="1095.5" cy="750.3" r="2.3" fill="#5d7db0"/><circle cx="1119.0" cy="758.7" r="2.3" fill="#5d7db0"/><circle cx="1142.6" cy="767.1" r="2.3" fill="#5d7db0"/><circle cx="1165.8" cy="776.3" r="2.3" fill="#5d7db0"/><circle cx="1188.9" cy="785.9" r="2.3" fill="#5d7db0"/><circle cx="1212.0" cy="795.4" r="2.3" fill="#5d7db0"/><circle cx="1235.1" cy="804.9" r="2.3" fill="#5d7db0"/><circle cx="1258.2" cy="814.5" r="2.3" fill="#5d7db0"/><circle cx="1281.4" cy="824.0" r="2.3" fill="#5d7db0"/><circle cx="1304.5" cy="833.5" r="2.3" fill="#5d7db0"/></g><polygon points="669.7,299.3 669.9,297.2 670.5,294.7 671.4,292.1 672.5,289.6 673.7,287.4 674.9,285.6 676.3,284.0 677.8,282.6 679.6,281.1 681.6,279.5 684.0,277.6 686.7,275.5 689.6,273.4 692.5,271.4 695.4,269.6 698.2,268.0 701.0,266.5 703.7,265.1 706.5,263.8 709.3,262.7 712.1,261.7 715.0,260.8 717.8,260.1 720.6,259.4 723.2,258.7 725.7,258.0 728.1,257.2 730.4,256.6 732.7,256.0 735.0,255.7 737.4,255.6 739.7,255.6 742.1,255.7 744.5,256.1 747.0,256.7 749.6,257.6 752.4,258.8 755.2,260.1 758.0,261.5 760.8,262.7 763.6,263.7 766.3,264.7 769.1,265.7 771.8,266.6 774.6,267.6 777.3,268.6 779.9,269.5 782.5,270.5 785.3,271.5 788.5,272.6 792.0,273.7 795.7,274.8 799.7,276.0 803.9,277.2 808.3,278.5 813.2,280.0 818.4,281.7 823.9,283.4 829.1,285.0 834.0,286.4 838.4,287.6 842.4,288.6 846.2,289.5 850.0,290.5 853.9,291.4 857.9,292.4 861.8,293.4 865.8,294.4 869.7,295.4 873.7,296.3 877.5,297.1 881.1,297.8 884.7,298.5 888.8,299.3 893.5,300.3 899.2,301.8 905.8,303.7 912.7,305.7 919.2,307.3 925.0,308.2 929.9,308.0 934.2,307.0 938.1,305.7 941.7,304.8 945.0,305.0 947.8,306.4 950.0,308.7 952.0,311.5 954.2,314.4 957.0,317.0 960.6,319.4 964.9,321.8 969.2,324.2 973.3,326.6 976.6,329.0 979.0,331.4 980.7,333.8 982.0,336.2 983.2,338.6 984.5,341.0 985.9,343.4 987.2,345.8 988.5,348.2 989.6,350.6 990.5,352.8 991.2,354.9 991.8,356.9 992.2,358.8 992.4,360.8 992.5,362.7 992.4,364.7 992.2,366.8 991.8,368.8 991.2,370.7 990.5,372.6 989.6,374.4 988.6,376.0 987.4,377.7 986.0,379.1 984.5,380.5 982.8,381.7 980.9,382.8 978.9,383.8 976.8,384.7 974.6,385.4 972.4,386.1 970.0,386.7 967.6,387.2 965.2,387.4 962.8,387.4 960.4,387.0 958.0,386.3 955.5,385.4 953.2,384.4 950.9,383.5 948.8,382.6 946.9,381.7 945.0,380.7 943.1,379.6 941.0,378.5 938.7,377.2 936.2,375.8 933.6,374.4 931.2,373.0 929.0,371.6 927.1,370.4 925.5,369.3 924.0,368.2 922.5,367.0 921.0,365.6 919.5,363.9 918.1,362.1 916.7,360.1 915.1,357.9 913.3,355.7 911.2,353.3 908.9,350.8 906.5,348.2 904.0,345.6 901.4,342.9 898.7,340.1 895.8,337.1 892.9,334.1 890.1,331.4 887.5,329.0 885.4,327.3 883.7,326.0 882.1,324.9 880.1,323.7 877.6,322.0 874.2,319.7 870.2,317.0 865.9,314.1 861.7,311.4 857.8,309.2 854.4,307.6 851.2,306.4 848.1,305.4 845.1,304.4 842.0,303.3 838.8,301.9 835.7,300.4 832.5,298.9 829.3,297.5 826.0,296.3 822.5,295.5 819.0,294.8 815.3,294.4 811.7,293.9 808.3,293.4 805.1,292.8 802.0,292.1 799.0,291.4 795.9,290.8 792.5,290.4 788.8,290.2 784.8,290.0 780.7,290.0 776.6,290.2 772.7,290.4 769.0,290.8 765.4,291.3 761.9,292.0 758.4,292.7 754.9,293.4 751.3,294.1 747.7,294.8 744.2,295.6 740.6,296.4 737.0,297.3 733.3,298.3 729.6,299.3 725.9,300.4 722.4,301.4 719.2,302.3 716.4,303.0 714.0,303.7 711.8,304.2 709.6,304.7 707.3,305.2 704.9,305.7 702.5,306.1 700.2,306.5 697.8,306.9 695.4,307.2 693.0,307.5 690.6,307.8 688.2,308.1 685.8,308.2 683.6,308.2 681.4,308.1 679.2,307.9 677.1,307.5 675.3,307.0 673.7,306.2 672.4,305.2 671.3,304.0 670.4,302.7 669.9,301.1" fill="#ff00ff"/><circle cx="669.7" cy="299.3" r="4.3" fill="#f00000" stroke="#aebbdc" stroke-width="1"/><circle cx="671.3" cy="292.5" r="4.3" fill="#f00000" stroke="#aebbdc" stroke-width="1"/><circle cx="674.5" cy="286.3" r="4.3" fill="#f00000" stroke="#aebbdc" stroke-width="1"/><circle cx="680.1" cy="280.7" r="4.3" fill="#f00000" stroke="#aebbdc" stroke-width="1"/><circle cx="687.6" cy="274.9" r="4.3" fill="#f00000" stroke="#aebbdc" stroke-width="1"/><circle cx="692.1" cy="271.7" r="4.3" fill="#f00000" stroke="#aebbdc" stroke-width="1"/><circle cx="696.8" cy="268.8" r="4.3" fill="#f00000" stroke="#aebbdc" stroke-width="1"/><circle cx="705.2" cy="264.4" r="4.3" fill="#f00000" stroke="#aebbdc" stroke-width="1"/><circle cx="712.7" cy="261.5" r="4.3" fill="#f00000" stroke="#aebbdc" stroke-width="1"/><circle cx="719.4" cy="259.7" r="4.3" fill="#f00000" stroke="#aebbdc" stroke-width="1"/><circle cx="726.2" cy="257.8" r="4.3" fill="#f00000" stroke="#aebbdc" stroke-width="1"/><circle cx="735.4" cy="255.7" r="4.3" fill="#f00000" stroke="#aebbdc" stroke-width="1"/><circle cx="744.9" cy="256.2" r="4.3" fill="#f00000" stroke="#aebbdc" stroke-width="1"/><circle cx="753.8" cy="259.4" r="4.3" fill="#f00000" stroke="#aebbdc" stroke-width="1"/><circle cx="760.1" cy="262.4" r="4.3" fill="#f00000" stroke="#aebbdc" stroke-width="1"/><circle cx="766.7" cy="264.9" r="4.3" fill="#f00000" stroke="#aebbdc" stroke-width="1"/><circle cx="773.3" cy="267.1" r="4.3" fill="#f00000" stroke="#aebbdc" stroke-width="1"/><circle cx="782.2" cy="270.4" r="4.3" fill="#f00000" stroke="#aebbdc" stroke-width="1"/><circle cx="787.4" cy="272.2" r="4.3" fill="#f00000" stroke="#aebbdc" stroke-width="1"/><circle cx="792.6" cy="273.9" r="4.3" fill="#f00000" stroke="#aebbdc" stroke-width="1"/><circle cx="799.3" cy="275.9" r="4.3" fill="#f00000" stroke="#aebbdc" stroke-width="1"/><circle cx="804.6" cy="277.4" r="4.3" fill="#f00000" stroke="#aebbdc" stroke-width="1"/><circle cx="812.3" cy="279.7" r="4.3" fill="#f00000" stroke="#aebbdc" stroke-width="1"/><circle cx="817.5" cy="281.4" r="4.3" fill="#f00000" stroke="#aebbdc" stroke-width="1"/><circle cx="825.2" cy="283.8" r="4.3" fill="#f00000" stroke="#aebbdc" stroke-width="1"/><circle cx="834.3" cy="286.5" r="4.3" fill="#f00000" stroke="#aebbdc" stroke-width="1"/><circle cx="843.5" cy="288.9" r="4.3" fill="#f00000" stroke="#aebbdc" stroke-width="1"/><circle cx="852.7" cy="291.1" r="4.3" fill="#f00000" stroke="#aebbdc" stroke-width="1"/><circle cx="861.9" cy="293.4" r="4.3" fill="#f00000" stroke="#aebbdc" stroke-width="1"/><circle cx="871.1" cy="295.7" r="4.3" fill="#f00000" stroke="#aebbdc" stroke-width="1"/><circle cx="878.0" cy="297.2" r="4.3" fill="#f00000" stroke="#aebbdc" stroke-width="1"/><circle cx="885.8" cy="298.7" r="4.3" fill="#f00000" stroke="#aebbdc" stroke-width="1"/><circle cx="891.2" cy="299.8" r="4.3" fill="#f00000" stroke="#aebbdc" stroke-width="1"/><circle cx="896.5" cy="301.1" r="4.3" fill="#f00000" stroke="#aebbdc" stroke-width="1"/><circle cx="903.3" cy="303.0" r="4.3" fill="#f00000" stroke="#aebbdc" stroke-width="1"/><circle cx="912.4" cy="305.6" r="4.3" fill="#f00000" stroke="#aebbdc" stroke-width="1"/><circle cx="919.2" cy="307.3" r="4.3" fill="#f00000" stroke="#aebbdc" stroke-width="1"/><circle cx="927.1" cy="308.1" r="4.3" fill="#f00000" stroke="#aebbdc" stroke-width="1"/><circle cx="936.4" cy="306.3" r="4.3" fill="#f00000" stroke="#aebbdc" stroke-width="1"/><circle cx="944.2" cy="305.0" r="4.3" fill="#f00000" stroke="#aebbdc" stroke-width="1"/><circle cx="951.4" cy="310.6" r="4.3" fill="#f00000" stroke="#aebbdc" stroke-width="1"/><circle cx="957.8" cy="317.6" r="4.3" fill="#f00000" stroke="#aebbdc" stroke-width="1"/><circle cx="964.7" cy="321.7" r="4.3" fill="#f00000" stroke="#aebbdc" stroke-width="1"/><circle cx="972.9" cy="326.4" r="4.3" fill="#f00000" stroke="#aebbdc" stroke-width="1"/><circle cx="978.4" cy="330.8" r="4.3" fill="#f00000" stroke="#aebbdc" stroke-width="1"/><circle cx="982.7" cy="337.5" r="4.3" fill="#f00000" stroke="#aebbdc" stroke-width="1"/><circle cx="985.3" cy="342.3" r="4.3" fill="#f00000" stroke="#aebbdc" stroke-width="1"/><circle cx="989.0" cy="349.4" r="4.3" fill="#f00000" stroke="#aebbdc" stroke-width="1"/><circle cx="991.5" cy="355.9" r="4.3" fill="#f00000" stroke="#aebbdc" stroke-width="1"/><circle cx="992.5" cy="363.8" r="4.3" fill="#f00000" stroke="#aebbdc" stroke-width="1"/><circle cx="991.6" cy="369.3" r="4.3" fill="#f00000" stroke="#aebbdc" stroke-width="1"/><circle cx="988.8" cy="375.6" r="4.3" fill="#f00000" stroke="#aebbdc" stroke-width="1"/><circle cx="983.3" cy="381.3" r="4.3" fill="#f00000" stroke="#aebbdc" stroke-width="1"/><circle cx="976.2" cy="384.9" r="4.3" fill="#f00000" stroke="#aebbdc" stroke-width="1"/><circle cx="970.9" cy="386.5" r="4.3" fill="#f00000" stroke="#aebbdc" stroke-width="1"/><circle cx="965.5" cy="387.4" r="4.3" fill="#f00000" stroke="#aebbdc" stroke-width="1"/><circle cx="956.2" cy="385.7" r="4.3" fill="#f00000" stroke="#aebbdc" stroke-width="1"/><circle cx="947.5" cy="382.0" r="4.3" fill="#f00000" stroke="#aebbdc" stroke-width="1"/><circle cx="942.6" cy="379.4" r="4.3" fill="#f00000" stroke="#aebbdc" stroke-width="1"/><circle cx="935.6" cy="375.5" r="4.3" fill="#f00000" stroke="#aebbdc" stroke-width="1"/><circle cx="930.9" cy="372.8" r="4.3" fill="#f00000" stroke="#aebbdc" stroke-width="1"/><circle cx="923.0" cy="367.4" r="4.3" fill="#f00000" stroke="#aebbdc" stroke-width="1"/><circle cx="918.3" cy="362.3" r="4.3" fill="#f00000" stroke="#aebbdc" stroke-width="1"/><circle cx="915.0" cy="357.9" r="4.3" fill="#f00000" stroke="#aebbdc" stroke-width="1"/><circle cx="909.8" cy="351.8" r="4.3" fill="#f00000" stroke="#aebbdc" stroke-width="1"/><circle cx="903.3" cy="344.9" r="4.3" fill="#f00000" stroke="#aebbdc" stroke-width="1"/><circle cx="896.7" cy="338.0" r="4.3" fill="#f00000" stroke="#aebbdc" stroke-width="1"/><circle cx="892.9" cy="334.1" r="4.3" fill="#f00000" stroke="#aebbdc" stroke-width="1"/><circle cx="888.9" cy="330.3" r="4.3" fill="#f00000" stroke="#aebbdc" stroke-width="1"/><circle cx="884.7" cy="326.7" r="4.3" fill="#f00000" stroke="#aebbdc" stroke-width="1"/><circle cx="876.8" cy="321.5" r="4.3" fill="#f00000" stroke="#aebbdc" stroke-width="1"/><circle cx="870.2" cy="317.0" r="4.3" fill="#f00000" stroke="#aebbdc" stroke-width="1"/><circle cx="863.5" cy="312.6" r="4.3" fill="#f00000" stroke="#aebbdc" stroke-width="1"/><circle cx="857.5" cy="309.1" r="4.3" fill="#f00000" stroke="#aebbdc" stroke-width="1"/><circle cx="852.4" cy="306.9" r="4.3" fill="#f00000" stroke="#aebbdc" stroke-width="1"/><circle cx="844.8" cy="304.3" r="4.3" fill="#f00000" stroke="#aebbdc" stroke-width="1"/><circle cx="839.7" cy="302.3" r="4.3" fill="#f00000" stroke="#aebbdc" stroke-width="1"/><circle cx="834.8" cy="299.9" r="4.3" fill="#f00000" stroke="#aebbdc" stroke-width="1"/><circle cx="829.8" cy="297.7" r="4.3" fill="#f00000" stroke="#aebbdc" stroke-width="1"/><circle cx="824.6" cy="295.9" r="4.3" fill="#f00000" stroke="#aebbdc" stroke-width="1"/><circle cx="817.7" cy="294.7" r="4.3" fill="#f00000" stroke="#aebbdc" stroke-width="1"/><circle cx="808.3" cy="293.4" r="4.3" fill="#f00000" stroke="#aebbdc" stroke-width="1"/><circle cx="800.4" cy="291.7" r="4.3" fill="#f00000" stroke="#aebbdc" stroke-width="1"/><circle cx="792.6" cy="290.4" r="4.3" fill="#f00000" stroke="#aebbdc" stroke-width="1"/><circle cx="785.6" cy="290.1" r="4.3" fill="#f00000" stroke="#aebbdc" stroke-width="1"/><circle cx="780.1" cy="290.1" r="4.3" fill="#f00000" stroke="#aebbdc" stroke-width="1"/><circle cx="772.1" cy="290.5" r="4.3" fill="#f00000" stroke="#aebbdc" stroke-width="1"/><circle cx="764.2" cy="291.6" r="4.3" fill="#f00000" stroke="#aebbdc" stroke-width="1"/><circle cx="756.3" cy="293.1" r="4.3" fill="#f00000" stroke="#aebbdc" stroke-width="1"/><circle cx="749.4" cy="294.5" r="4.3" fill="#f00000" stroke="#aebbdc" stroke-width="1"/><circle cx="740.2" cy="296.5" r="4.3" fill="#f00000" stroke="#aebbdc" stroke-width="1"/><circle cx="731.0" cy="298.9" r="4.3" fill="#f00000" stroke="#aebbdc" stroke-width="1"/><circle cx="721.9" cy="301.6" r="4.3" fill="#f00000" stroke="#aebbdc" stroke-width="1"/><circle cx="712.7" cy="304.0" r="4.3" fill="#f00000" stroke="#aebbdc" stroke-width="1"/><circle cx="707.3" cy="305.2" r="4.3" fill="#f00000" stroke="#aebbdc" stroke-width="1"/><circle cx="699.4" cy="306.6" r="4.3" fill="#f00000" stroke="#aebbdc" stroke-width="1"/><circle cx="690.0" cy="307.9" r="4.3" fill="#f00000" stroke="#aebbdc" stroke-width="1"/><circle cx="683.0" cy="308.2" r="4.3" fill="#f00000" stroke="#aebbdc" stroke-width="1"/><circle cx="675.2" cy="306.9" r="4.3" fill="#f00000" stroke="#aebbdc" stroke-width="1"/><g shape-rendering="auto" fill="none" stroke-width="1.3"><path d="M731.0 250.0 L735.0 251.3 L740.4 253.2 L746.9 255.4 L754.1 257.7 L761.6 260.0 L769.0 262.0 L776.3 263.8 L783.7 265.5 L791.4 267.1 L799.6 268.7 L808.4 270.1 L818.0 271.5 L829.0 272.8 L841.4 274.0 L854.5 275.1 L867.4 276.1 L879.5 276.9 L890.0 277.5 L898.6 277.9 L905.9 278.1 L912.3 278.1 L918.3 278.0 L924.4 277.8 L931.0 277.5 L938.5 277.1 L946.8 276.5 L955.1 275.8 L962.8 275.0 L969.3 274.4 L974.0 274.0" stroke="#ff00ff"/><path d="M974.0 274.0 L977.0 276.0 L981.2 278.7 L986.1 281.9 L991.5 285.4 L996.9 288.8 L1002.0 292.0 L1006.8 294.9 L1011.7 297.9 L1016.6 300.8 L1021.6 303.6 L1026.7 306.4 L1032.0 309.0 L1037.4 311.5 L1043.0 314.0 L1048.8 316.4 L1054.5 318.7 L1060.3 320.9 L1066.0 323.0 L1071.6 325.0 L1077.2 327.0 L1082.8 328.8 L1088.4 330.6 L1094.1 332.3 L1100.0 334.0 L1106.1 335.6 L1112.3 337.2 L1118.6 338.8 L1125.0 340.2 L1131.4 341.6 L1138.0 343.0 L1144.7 344.3 L1151.5 345.5 L1158.4 346.7 L1165.4 347.8 L1172.2 348.9 L1179.0 350.0 L1186.1 351.1 L1193.6 352.3 L1201.1 353.4 L1208.0 354.5 L1213.8 355.4 L1218.0 356.0" stroke="#ff00ff"/><path d="M466.5 473.0 L470.1 475.2 L475.0 478.1 L480.9 481.7 L487.1 485.5 L493.4 489.4 L499.0 493.0 L504.2 496.4 L509.3 499.9 L514.3 503.4 L519.3 507.0 L524.2 510.5 L529.0 514.0 L533.7 517.5 L538.3 520.9 L542.8 524.4 L547.2 527.9 L551.6 531.4 L556.0 535.0 L560.4 538.7 L564.9 542.5 L569.2 546.4 L573.6 550.3 L577.9 554.1 L582.0 558.0 L586.0 561.8 L590.0 565.6 L593.8 569.4 L597.6 573.2 L601.3 577.1 L605.0 581.0 L608.6 585.0 L612.1 589.0 L615.6 593.1 L619.1 597.3 L622.5 601.6 L626.0 606.0 L629.6 610.7 L633.3 615.6 L637.0 620.6 L640.6 625.6 L644.0 630.5 L647.0 635.0 L649.8 639.4 L652.4 644.0 L654.8 648.3 L656.9 652.3 L658.7 655.6 L660.0 658.0" stroke="#ff00ff"/><path d="M660.0 658.0 L664.3 658.1 L670.3 658.2 L677.4 658.4 L685.0 658.6 L692.8 658.8 L700.0 659.0 L706.9 659.3 L714.0 659.5 L721.1 659.8 L728.2 660.1 L735.2 660.5 L742.0 661.0 L748.6 661.5 L755.0 662.1 L761.2 662.7 L767.5 663.4 L773.7 664.2 L780.0 665.0 L786.3 665.9 L792.7 666.9 L799.0 668.0 L805.3 669.1 L811.7 670.3 L818.0 671.5 L824.3 672.8 L830.7 674.1 L837.1 675.5 L843.4 676.9 L849.7 678.4 L856.0 680.0 L862.2 681.7 L868.5 683.4 L874.7 685.3 L880.9 687.2 L887.0 689.1 L893.0 691.0 L899.0 692.9 L905.0 694.9 L910.9 696.9 L916.8 698.9 L922.5 700.9 L928.0 703.0 L933.3 705.1 L938.3 707.1 L943.2 709.2 L948.1 711.3 L953.0 713.6 L958.0 716.0 L963.5 718.8 L969.4 722.0 L975.4 725.3 L980.9 728.4 L985.6 731.1 L989.0 733.0" stroke="#ff00ff"/><path d="M1218.0 356.0 L1197.0 388.0" stroke="#ff00ff"/><path d="M466.5 473.0 L528.0 433.0" stroke="#ff00ff"/><path d="M989.0 733.0 L1041.0 646.0" stroke="#ff00ff"/><path d="M1185.0 365.0 L1187.3 367.1 L1190.5 370.2 L1194.2 373.8 L1198.4 377.5 L1202.7 381.0 L1207.0 384.0 L1211.2 386.4 L1215.6 388.4 L1220.1 390.3 L1224.8 392.1 L1229.7 394.0 L1235.0 396.0 L1240.3 398.2 L1245.7 400.4 L1251.3 402.7 L1257.4 405.0 L1264.2 407.4 L1272.0 410.0 L1281.0 412.8 L1291.1 415.9 L1301.9 419.2 L1313.1 422.3 L1324.3 425.1 L1335.0 427.5 L1345.9 429.5 L1357.3 431.1 L1368.6 432.5 L1379.4 433.6 L1389.1 434.5 L1397.0 435.0 L1403.1 435.1 L1407.8 434.7 L1411.4 434.0 L1414.1 433.2 L1416.2 432.4 L1418.0 432.0" stroke="#c8c8c8" stroke-width="2"/><path d="M977.0 715.0 L985.3 716.4 L997.2 718.4 L1011.1 720.8 L1025.6 723.3 L1039.0 725.7 L1050.0 728.0 L1058.4 730.0 L1065.4 731.9 L1071.4 733.8 L1076.9 735.7 L1082.3 737.7 L1088.0 740.0 L1094.0 742.6 L1100.1 745.5 L1106.0 748.6 L1111.7 751.6 L1117.1 754.5 L1122.0 757.0 L1126.6 759.3 L1131.0 761.5 L1135.1 763.6 L1138.7 765.4 L1141.7 766.9 L1144.0 768.0" stroke="#c8c8c8" stroke-width="2"/><path d="M1408.0 427.0 L1409.2 428.0 L1410.7 429.4 L1412.6 431.0 L1414.8 432.7 L1417.3 434.5 L1420.0 436.0 L1423.0 437.4 L1426.2 438.6 L1429.7 439.9 L1433.5 441.1 L1437.6 442.5 L1442.0 444.0 L1446.8 445.7 L1452.1 447.4 L1457.7 449.3 L1463.4 451.2 L1469.3 453.1 L1475.0 455.0 L1480.7 456.9 L1486.4 458.8 L1492.2 460.8 L1498.0 462.6 L1504.0 464.4 L1510.0 466.0 L1516.6 467.5 L1523.9 468.9 L1531.2 470.2 L1538.0 471.3 L1543.8 472.3 L1548.0 473.0" stroke="#9c2a4e" stroke-width="2"/><path d="M1129.0 783.0 L1133.0 783.7 L1138.6 784.7 L1145.1 785.8 L1152.2 787.1 L1159.3 788.5 L1166.0 790.0 L1172.4 791.6 L1178.9 793.3 L1185.4 795.2 L1191.8 797.1 L1198.1 799.1 L1204.0 801.0 L1209.5 802.9 L1214.8 804.8 L1219.8 806.8 L1224.8 808.7 L1229.8 810.8 L1235.0 813.0 L1240.5 815.3 L1246.2 817.8 L1252.0 820.4 L1257.7 823.0 L1263.1 825.5 L1268.0 828.0 L1272.7 830.6 L1277.3 833.3 L1281.6 835.9 L1285.4 838.4 L1288.6 840.5 L1291.0 842.0" stroke="#9c2a4e" stroke-width="2"/></g><g shape-rendering="auto"><circle cx="749.0" cy="256.1" r="2.2" fill="#ff00ff"/><circle cx="785.7" cy="265.9" r="2.2" fill="#ff00ff"/><circle cx="823.2" cy="272.1" r="2.2" fill="#ff00ff"/><circle cx="861.0" cy="275.6" r="2.2" fill="#ff00ff"/><circle cx="898.9" cy="277.9" r="2.2" fill="#ff00ff"/><circle cx="936.9" cy="277.2" r="2.2" fill="#ff00ff"/><circle cx="989.9" cy="284.4" r="2.2" fill="#ff00ff"/><circle cx="1022.4" cy="304.0" r="2.2" fill="#ff00ff"/><circle cx="1057.0" cy="319.6" r="2.2" fill="#ff00ff"/><circle cx="1093.0" cy="332.0" r="2.2" fill="#ff00ff"/><circle cx="1129.8" cy="341.3" r="2.2" fill="#ff00ff"/><circle cx="1167.2" cy="348.1" r="2.2" fill="#ff00ff"/><circle cx="1204.7" cy="354.0" r="2.2" fill="#ff00ff"/><circle cx="482.8" cy="482.8" r="2.2" fill="#ff00ff"/><circle cx="514.6" cy="503.6" r="2.2" fill="#ff00ff"/><circle cx="545.1" cy="526.2" r="2.2" fill="#ff00ff"/><circle cx="574.1" cy="550.7" r="2.2" fill="#ff00ff"/><circle cx="601.4" cy="577.2" r="2.2" fill="#ff00ff"/><circle cx="626.1" cy="606.1" r="2.2" fill="#ff00ff"/><circle cx="648.2" cy="636.9" r="2.2" fill="#ff00ff"/><circle cx="679.0" cy="658.4" r="2.2" fill="#ff00ff"/><circle cx="717.0" cy="659.6" r="2.2" fill="#ff00ff"/><circle cx="754.9" cy="662.1" r="2.2" fill="#ff00ff"/><circle cx="792.6" cy="666.9" r="2.2" fill="#ff00ff"/><circle cx="829.9" cy="673.9" r="2.2" fill="#ff00ff"/><circle cx="866.8" cy="683.0" r="2.2" fill="#ff00ff"/><circle cx="903.1" cy="694.3" r="2.2" fill="#ff00ff"/><circle cx="938.8" cy="707.3" r="2.2" fill="#ff00ff"/><circle cx="972.9" cy="723.9" r="2.2" fill="#ff00ff"/><circle cx="1147.7" cy="786.3" r="2.2" fill="#9c2a4e"/><circle cx="1184.7" cy="795.0" r="2.2" fill="#9c2a4e"/><circle cx="1220.7" cy="807.1" r="2.2" fill="#9c2a4e"/><circle cx="1255.6" cy="822.0" r="2.2" fill="#9c2a4e"/><circle cx="1288.7" cy="840.6" r="2.2" fill="#9c2a4e"/><circle cx="995.7" cy="718.2" r="2.2" fill="#c8c8c8"/><circle cx="1033.2" cy="724.7" r="2.2" fill="#c8c8c8"/><circle cx="1070.1" cy="733.3" r="2.2" fill="#c8c8c8"/><circle cx="1105.1" cy="748.1" r="2.2" fill="#c8c8c8"/><circle cx="1138.9" cy="765.5" r="2.2" fill="#c8c8c8"/><circle cx="731" cy="250" r="5" fill="#ff00ff"/><circle cx="974" cy="274" r="5" fill="#ff00ff"/><circle cx="1218" cy="356" r="5" fill="#ff00ff"/><circle cx="466.5" cy="473" r="5" fill="#ff00ff"/><circle cx="660" cy="658" r="5" fill="#ff00ff"/><circle cx="989" cy="733" r="5" fill="#ff00ff"/><circle cx="1185" cy="366" r="5" fill="#c8c8c8"/><circle cx="1418" cy="432" r="5" fill="#c8c8c8"/><circle cx="977" cy="715" r="5" fill="#c8c8c8"/><circle cx="1408" cy="427" r="5" fill="#9c2a4e"/><circle cx="1129" cy="783" r="5" fill="#9c2a4e"/><circle cx="514" cy="239" r="4.3" fill="#e80000" stroke="#9a8a94" stroke-width="1"/><circle cx="464" cy="342" r="4.3" fill="#e80000" stroke="#9a8a94" stroke-width="1"/><circle cx="518" cy="472" r="4.3" fill="#e80000" stroke="#9a8a94" stroke-width="1"/><circle cx="680" cy="617" r="4.3" fill="#e80000" stroke="#9a8a94" stroke-width="1"/><circle cx="982" cy="710" r="4.3" fill="#e80000" stroke="#9a8a94" stroke-width="1"/><circle cx="1180" cy="370" r="4.3" fill="#e80000" stroke="#9a8a94" stroke-width="1"/><circle cx="1413" cy="437" r="4.3" fill="#e80000" stroke="#9a8a94" stroke-width="1"/><circle cx="1148" cy="768" r="4.3" fill="#e80000" stroke="#9a8a94" stroke-width="1"/><circle cx="510" cy="478" r="5" fill="#ff0000"/></g><g shape-rendering="auto"><path d="M514.0 238.0 L443.0 168.0" stroke="#000" stroke-width="1"/><path d="M443.0 168.0 L460.1 179.2 L454.4 184.9 Z" fill="#000"/><text x="462" y="208" font-size="12" fill="#000">12.04</text><path d="M460.0 343.0 L432.0 345.0" stroke="#000" stroke-width="1"/><path d="M432.0 345.0 L432.0 345.0 L432.0 345.0 Z" fill="#000"/><text x="406" y="352" font-size="12" fill="#000">8.76</text><path d="M514.0 476.0 L421.0 538.0" stroke="#000" stroke-width="1"/><path d="M421.0 538.0 L438.5 520.9 L443.5 528.4 Z" fill="#000"/><text x="454" y="511" font-size="12" fill="#000">11.24</text><path d="M680.0 617.0 L570.0 705.0" stroke="#000" stroke-width="1"/><path d="M570.0 705.0 L588.0 684.2 L594.2 692.0 Z" fill="#000"/><text x="608" y="667" font-size="12" fill="#000">13.75</text><path d="M982.0 712.0 L987.0 779.0" stroke="#000" stroke-width="1"/><path d="M987.0 779.0 L982.8 765.3 L989.1 764.8 Z" fill="#000"/><text x="971" y="752" font-size="12" fill="#000">9.15</text><path d="M1134.0 785.0 L1134.0 814.0" stroke="#000" stroke-width="1"/><path d="M1134.0 814.0 L1131.0 801.0 L1137.0 801.0 Z" fill="#000"/><text x="1122" y="781" font-size="12" fill="#000">8.68</text><path d="M1134.0 785.0 L1089.0 806.0" stroke="#000" stroke-width="1"/><path d="M1089.0 806.0 L1099.5 797.8 L1102.0 803.2 Z" fill="#000"/><text x="1105" y="794" font-size="12" fill="#000">7.16</text><path d="M1180.0 370.0 L1216.0 344.0" stroke="#000" stroke-width="1"/><path d="M1216.0 344.0 L1209.0 353.0 L1205.2 347.8 Z" fill="#000"/><text x="1185" y="362" font-size="12" fill="#000">9.33</text><path d="M1413.0 437.0 L1456.0 411.0" stroke="#000" stroke-width="1"/><path d="M1456.0 411.0 L1448.2 419.4 L1444.9 414.0 Z" fill="#000"/><text x="1422" y="430" font-size="12" fill="#000">9.45</text><path d="M952.0 300.0 L957.0 285.0" stroke="#000" stroke-width="1"/><path d="M957.0 285.0 L957.3 293.5 L951.6 291.6 Z" fill="#000"/><text x="938" y="301" font-size="12" fill="#000">7.92</text><path d="M748.0 262.0 L760.0 252.0" stroke="#000" stroke-width="1"/><path d="M760.0 252.0 L757.4 256.7 L754.9 253.7 Z" fill="#000"/><text x="730" y="269" font-size="12" fill="#000">7.51</text><path d="M569 308 V298" stroke="#0000ff" stroke-width="1"/><path d="M569 295 l-2 8 h4 z" fill="#0000ff"/><path d="M1187 538 V528" stroke="#0000ff" stroke-width="1"/><path d="M1187 525 l-2 8 h4 z" fill="#0000ff"/><text x="563" y="345" font-size="29" fill="#000">1</text><text x="821" y="322" font-size="29" fill="#000">9</text><text x="839" y="488" font-size="29" fill="#0000ff">2</text><text x="1177" y="576" font-size="29" fill="#000">3</text><text x="1510" y="704" font-size="29" fill="#000">4</text></g></svg><div style="left:407px;top:848px;width:1141px;height:16px;background:#bfcddb"></div><span class="t" style="left:410px;top:849px;color:#3d4a57">Messages</span><svg style="left:1500px;top:848px" width="48" height="16" viewBox="1500 848 48 16"><path d="M1504.5 854 h8 l-4 4.5 z" fill="#35444e"/><path d="M1522.0 851 h5 M1523.0 851 v6 M1526.0 851 v6 M1527.0 851 v6 M1521.0 857.5 h7 M1524.5 857.5 v4.5" fill="none" stroke="#35444e" stroke-width="1"/><path d="M1534.5 851.5 L1543.5 860.5 M1543.5 851.5 L1534.5 860.5" fill="none" stroke="#35444e" stroke-width="1.7"/></svg><div style="left:407px;top:864px;width:1141px;height:142px;background:#fff;border:1px solid #8c8c8c"></div><span class="m" style="left:413px;top:869px">Fofin:  Iteration         2     0.5488E+02</span><span class="m" style="left:413px;top:885px">Fofin:         39     0.1441E-06</span><span class="m" style="left:413px;top:901px">Fofin:  Iteration         3     0.7411E-01</span><span class="m" style="left:413px;top:917px"></span><span class="m" style="left:413px;top:933px">Formfinding: Sum of external loads: 0.000000 0.000000 0.000000</span><span class="m" style="left:413px;top:949px">Formfinding: Sum of support forces: 0.006494 0.003109 -0.018110</span><div style="left:1530px;top:866px;width:17px;height:122px;background:#f0f0f0"></div><div style="left:1531px;top:954px;width:15px;height:16px;background:#cdcdcd"></div><svg style="left:1530px;top:866px" width="17" height="122" viewBox="0 0 17 122"><path d="M4.5 10.5 L8.5 6.5 L12.5 10.5" fill="none" stroke="#606060" stroke-width="1.6"/><path d="M4.5 111.5 L8.5 115.5 L12.5 111.5" fill="none" stroke="#606060" stroke-width="1.6"/></svg><div style="left:408px;top:988px;width:1122px;height:16px;background:#f0f0f0"></div><svg style="left:408px;top:988px" width="1122" height="16" viewBox="0 0 1122 16"><path d="M10.5 4.0 L6.5 8.0 L10.5 12.0" fill="none" stroke="#b0b0b0" stroke-width="1.6"/><path d="M1111.5 4.0 L1115.5 8.0 L1111.5 12.0" fill="none" stroke="#b0b0b0" stroke-width="1.6"/></svg><div style="left:1530px;top:988px;width:17px;height:16px;background:#f0f0f0"></div><div style="left:1553px;top:143px;width:1px;height:863px;background:#a0a0a0"></div><div style="left:1554px;top:143px;width:305px;height:16px;background:#bfcddb"></div><span class="t" style="left:1557px;top:144px;color:#3d4a57">View options</span><svg style="left:1826px;top:143px" width="32" height="16" viewBox="1826 143 32 16"><path d="M1832.0 146 h5 M1833.0 146 v6 M1836.0 146 v6 M1837.0 146 v6 M1831.0 152.5 h7 M1834.5 152.5 v4.5" fill="none" stroke="#35444e" stroke-width="1"/><path d="M1844.5 146.5 L1853.5 155.5 M1853.5 146.5 L1844.5 155.5" fill="none" stroke="#35444e" stroke-width="1.7"/></svg><div style="left:1606px;top:162px;width:41px;height:19px;border:1px solid #d9d9d9;border-bottom:none;background:#f0f0f0"></div><div style="left:1646px;top:162px;width:41px;height:19px;border:1px solid #d9d9d9;border-bottom:none;background:#f0f0f0"></div><div style="left:1606px;top:180px;width:250px;height:1px;background:#fff"></div><div style="left:1855px;top:180px;width:1px;height:515px;background:#fff"></div><div style="left:1558px;top:181px;width:298px;height:1px;background:#fbfbfb"></div><div style="left:1558px;top:160px;width:48px;height:22px;background:#fff"></div><span class="t" style="left:1562px;top:163px;">Visibility</span><span class="t" style="left:1611px;top:165px;">Colors</span><span class="t" style="left:1652px;top:165px;">Fonts</span><div style="left:0;top:0;width:1837px;height:695px;clip-path:inset(183px 0 0 1558px)"><div style="left:1565.0px;top:184.0px;width:9px;height:9px;border:1px solid #6a6a6a;border-radius:2px;background:#fff"><div style="left:1px;top:3px;width:5px;height:1px;background:#333"></div><div style="left:3px;top:1px;width:1px;height:5px;background:#333"></div></div><span class="t" style="left:1582px;top:182px;">Boundary</span><div style="left:1558px;top:199px;width:279px;height:1px;background:#a0a0a0"></div><div style="left:1558px;top:200px;width:279px;height:1px;background:#fff"></div><div style="left:1565.0px;top:206.0px;width:9px;height:9px;border:1px solid #6a6a6a;border-radius:2px;background:#fff"><div style="left:1px;top:3px;width:5px;height:1px;background:#333"></div><div style="left:3px;top:1px;width:1px;height:5px;background:#333"></div></div><span class="t" style="left:1582px;top:204px;">Control elements</span><div style="left:1558px;top:221px;width:279px;height:1px;background:#a0a0a0"></div><div style="left:1558px;top:222px;width:279px;height:1px;background:#fff"></div><div style="left:1565.0px;top:228.0px;width:9px;height:9px;border:1px solid #6a6a6a;border-radius:2px;background:#fff"><div style="left:1px;top:3px;width:5px;height:1px;background:#333"></div></div><span class="t" style="left:1582px;top:226px;">PreView</span><div style="left:1570px;top:252px;width:230px;height:145px;border:1px solid #dcdcdc"></div><span class="t" style="left:1576px;top:245px;background:#f0f0f0;padding:0 2px">Mesh</span><div style="left:1581px;top:269.5px;width:13px;height:13px;border:1px solid #333;background:#fff"><svg width="11" height="11" viewBox="0 0 11 11" style="position:absolute;left:0;top:0"><path d="M1.5 5.5 L4.2 8.5 L9.8 1.8" fill="none" stroke="#333" stroke-width="1.3"/></svg></div><span class="t" style="left:1597px;top:269px;">Use part color</span><div style="left:1581px;top:300.5px;width:13px;height:13px;border:1px solid #333;background:#fff"><svg width="11" height="11" viewBox="0 0 11 11" style="position:absolute;left:0;top:0"><path d="M1.5 5.5 L4.2 8.5 L9.8 1.8" fill="none" stroke="#333" stroke-width="1.3"/></svg></div><span class="t" style="left:1597px;top:300px;">Display lines 1000</span><div style="left:1599px;top:323.5px;width:13px;height:13px;border:1px solid #333;background:#fff"></div><span class="t" style="left:1615px;top:323px;">Mark first line 1000</span><div style="left:1581px;top:346.5px;width:13px;height:13px;border:1px solid #333;background:#fff"><svg width="11" height="11" viewBox="0 0 11 11" style="position:absolute;left:0;top:0"><path d="M1.5 5.5 L4.2 8.5 L9.8 1.8" fill="none" stroke="#333" stroke-width="1.3"/></svg></div><span class="t" style="left:1597px;top:346px;">Display lines 2000</span><div style="left:1599px;top:369.5px;width:13px;height:13px;border:1px solid #333;background:#fff"></div><span class="t" style="left:1615px;top:369px;">Mark first line 2000</span><div style="left:1570px;top:412px;width:230px;height:148px;border:1px solid #dcdcdc"></div><span class="t" style="left:1576px;top:405px;background:#f0f0f0;padding:0 2px">Vectors</span><div style="left:1581px;top:428.5px;width:13px;height:13px;border:1px solid #333;background:#fff"><svg width="11" height="11" viewBox="0 0 11 11" style="position:absolute;left:0;top:0"><path d="M1.5 5.5 L4.2 8.5 L9.8 1.8" fill="none" stroke="#333" stroke-width="1.3"/></svg></div><span class="t" style="left:1597px;top:428px;">Display vectors</span><div style="left:1599px;top:453.5px;width:13px;height:13px;border:1px solid #333;background:#fff"><svg width="11" height="11" viewBox="0 0 11 11" style="position:absolute;left:0;top:0"><path d="M1.5 5.5 L4.2 8.5 L9.8 1.8" fill="none" stroke="#333" stroke-width="1.3"/></svg></div><span class="t" style="left:1615px;top:453px;">Display vector direction</span><div style="left:1599px;top:476.5px;width:13px;height:13px;border:1px solid #333;background:#fff"><svg width="11" height="11" viewBox="0 0 11 11" style="position:absolute;left:0;top:0"><path d="M1.5 5.5 L4.2 8.5 L9.8 1.8" fill="none" stroke="#333" stroke-width="1.3"/></svg></div><span class="t" style="left:1615px;top:476px;">Show forces ≥</span><div style="left:1695px;top:473px;width:57px;height:21px;border:1px solid #7a7a7a;background:#fff"><span class="t" style="left:2px;top:2.5px;color:#000">5</span></div><div style="left:1618px;top:500.5px;width:13px;height:13px;border:1px solid #333;background:#fff"></div><span class="t" style="left:1634px;top:500px;">Delta values</span><span class="t" style="left:1599px;top:525px;">Vector scale:</span><div style="left:1667px;top:522px;width:57px;height:21px;border:1px solid #7a7a7a;background:#fff"><span class="t" style="left:2px;top:2.5px;color:#000">0.3</span></div><div style="left:1570px;top:574px;width:230px;height:71px;border:1px solid #dcdcdc"></div><span class="t" style="left:1575px;top:567px;background:#f0f0f0;padding:0 2px">Additional information</span><div style="left:1581px;top:591.5px;width:13px;height:13px;border:1px solid #333;background:#fff"></div><span class="t" style="left:1597px;top:591px;">Display normals</span><span class="t" style="left:1598px;top:614px;color:#838383">Normal scale:</span><div style="left:1667px;top:611px;width:57px;height:21px;border:1px solid #d0d0d0;background:#fff"><span class="t" style="left:2px;top:2.5px;color:#6d6d6d">1.000000</span></div><div style="left:1571px;top:658.5px;width:13px;height:13px;border:1px solid #333;background:#fff"></div><span class="t" style="left:1587px;top:658px;">Display free points</span><div style="left:1571px;top:681.5px;width:13px;height:13px;border:1px solid #333;background:#fff"></div><span class="t" style="left:1587px;top:681px;">Create t-elements in project explorer</span></div><div style="left:1838px;top:183px;width:16px;height:512px;background:#f0f0f0"></div><div style="left:1839px;top:240px;width:14px;height:350px;background:#cdcdcd"></div><svg style="left:1838px;top:183px" width="16" height="512" viewBox="0 0 16 512"><path d="M4.0 10.5 L8.0 6.5 L12.0 10.5" fill="none" stroke="#606060" stroke-width="1.6"/><path d="M4.0 501.5 L8.0 505.5 L12.0 501.5" fill="none" stroke="#606060" stroke-width="1.6"/></svg><div style="left:1554px;top:697px;width:305px;height:1px;background:#a0a0a0"></div><div style="left:1705px;top:697px;width:52px;height:26px;background:#fff;border:1px solid #b0b0b0;border-top:none;border-radius:0 0 4px 4px"></div><span class="t" style="left:1556px;top:705px;color:#9a9a9a">PreView</span><span class="t" style="left:1597px;top:705px;color:#9a9a9a">|</span><span class="t" style="left:1602px;top:705px;color:#9a9a9a">Transform</span><span class="t" style="left:1653px;top:705px;color:#9a9a9a">|</span><span class="t" style="left:1657px;top:705px;color:#9a9a9a">Edit o…</span><span class="t" style="left:1709px;top:705px;">View o…</span><span class="t" style="left:1759px;top:705px;color:#9a9a9a">Bound…</span><span class="t" style="left:1806px;top:705px;color:#9a9a9a">|</span><span class="t" style="left:1811px;top:705px;color:#9a9a9a">Strut …</span><div style="left:1554px;top:729px;width:305px;height:16px;background:#bfcddb"></div><span class="t" style="left:1557px;top:730px;color:#3d4a57">Project Explorer</span><svg style="left:1826px;top:729px" width="32" height="16" viewBox="1826 729 32 16"><path d="M1832.0 732 h5 M1833.0 732 v6 M1836.0 732 v6 M1837.0 732 v6 M1831.0 738.5 h7 M1834.5 738.5 v4.5" fill="none" stroke="#35444e" stroke-width="1"/><path d="M1844.5 732.5 L1853.5 741.5 M1853.5 732.5 L1844.5 741.5" fill="none" stroke="#35444e" stroke-width="1.7"/></svg><div style="left:1555px;top:747px;width:169px;height:258px;background:#fff;border:1px solid #6a6a6a"></div><div style="left:1729px;top:747px;width:129px;height:258px;background:#fff;border:1px solid #6a6a6a"></div><div style="left:0;top:0;width:1706px;height:987px;clip-path:inset(748px 0 0 1556px)"><span class="t" style="left:1615.5px;top:750px;">External data</span><span class="t" style="left:1615.5px;top:766px;">Model</span><span class="t" style="left:1634.5px;top:782px;">Control</span><span class="t" style="left:1653.5px;top:798px;">Corner points</span><span class="t" style="left:1653.5px;top:814px;">Lines</span><span class="t" style="left:1653.5px;top:830px;">Intermediate</span><span class="t" style="left:1653.5px;top:846px;">Centerpoints</span><span class="t" style="left:1653.5px;top:862px;">Ring points</span><span class="t" style="left:1634.5px;top:878px;">Boundaries</span><span class="t" style="left:1653.5px;top:894px;">1</span><span class="t" style="left:1653.5px;top:910px;">2</span><span class="t" style="left:1653.5px;top:926px;">3</span><span class="t" style="left:1653.5px;top:942px;">4</span><span class="t" style="left:1653.5px;top:958px;">5</span><span class="t" style="left:1653.5px;top:974px;">6</span></div><svg style="left:1555px;top:747px" width="152" height="240" viewBox="1555 747 152 240"><g stroke="#808080" stroke-width="1" stroke-dasharray="1 1" fill="none"><path d="M1568.5 780 V988"/><path d="M1587.5 796 V880"/></g><path d="M1565 753 L1569 757 L1565 761" fill="none" stroke="#a0a0a0" stroke-width="1.3"/><path d="M1575 757.5 H1579" stroke="#808080" stroke-dasharray="1 1"/><rect x="1580.5" y="751" width="12" height="12" fill="#fff" stroke="#2a4a7a" stroke-width="1"/><path d="M1600.5 752 v10 M1604.5 752 v10 M1597.5 755 h10 M1597.5 759 h10" stroke="#c00000" stroke-width="1.6"/><path d="M1563 771 L1567 775 L1571 771" fill="none" stroke="#303030" stroke-width="1.5"/><path d="M1575 773.5 H1579" stroke="#808080" stroke-dasharray="1 1"/><rect x="1580.5" y="767" width="12" height="12" fill="#fff" stroke="#2a4a7a" stroke-width="1"/><path d="M1583 773.5 L1585.5 776.2 L1590.5 769.5" fill="none" stroke="#10a020" stroke-width="1.6"/><rect x="1598" y="770" width="4" height="6" fill="#e01010"/><path d="M1599.5 771 h5 v-3 l5.5 5 l-5.5 5 v-3 h-5 z" fill="#6a8fd8" stroke="#1f3f90" stroke-width="0.8" stroke-linejoin="round"/><path d="M1582 787 L1586 791 L1590 787" fill="none" stroke="#303030" stroke-width="1.5"/><path d="M1594 789.5 H1598" stroke="#808080" stroke-dasharray="1 1"/><rect x="1599.5" y="783" width="12" height="12" fill="#fff" stroke="#2a4a7a" stroke-width="1"/><path d="M1602 789.5 L1604.5 792.2 L1609.5 785.5" fill="none" stroke="#10a020" stroke-width="1.6"/><path d="M1617 787 h5 v-3 l5.5 5 l-5.5 5 v-3 h-5 z" fill="#6a8fd8" stroke="#1f3f90" stroke-width="0.8" stroke-linejoin="round"/><path d="M1606.5 805.5 H1617" stroke="#808080" stroke-dasharray="1 1"/><path d="M1613 805.5 H1617" stroke="#808080" stroke-dasharray="1 1"/><rect x="1618.5" y="799" width="12" height="12" fill="#fff" stroke="#2a4a7a" stroke-width="1"/><path d="M1621 805.5 L1623.5 808.2 L1628.5 801.5" fill="none" stroke="#10a020" stroke-width="1.6"/><path d="M1636 803 h5 v-3 l5.5 5 l-5.5 5 v-3 h-5 z" fill="#6a8fd8" stroke="#1f3f90" stroke-width="0.8" stroke-linejoin="round"/><path d="M1606.5 821.5 H1617" stroke="#808080" stroke-dasharray="1 1"/><path d="M1613 821.5 H1617" stroke="#808080" stroke-dasharray="1 1"/><rect x="1618.5" y="815" width="12" height="12" fill="#fff" stroke="#2a4a7a" stroke-width="1"/><path d="M1621 821.5 L1623.5 824.2 L1628.5 817.5" fill="none" stroke="#10a020" stroke-width="1.6"/><path d="M1636 819 h5 v-3 l5.5 5 l-5.5 5 v-3 h-5 z" fill="#6a8fd8" stroke="#1f3f90" stroke-width="0.8" stroke-linejoin="round"/><path d="M1603 833 L1607 837 L1603 841" fill="none" stroke="#a0a0a0" stroke-width="1.3"/><path d="M1613 837.5 H1617" stroke="#808080" stroke-dasharray="1 1"/><rect x="1618.5" y="831" width="12" height="12" fill="#fff" stroke="#2a4a7a" stroke-width="1"/><path d="M1621 837.5 L1623.5 840.2 L1628.5 833.5" fill="none" stroke="#10a020" stroke-width="1.6"/><path d="M1636 835 h5 v-3 l5.5 5 l-5.5 5 v-3 h-5 z" fill="#6a8fd8" stroke="#1f3f90" stroke-width="0.8" stroke-linejoin="round"/><path d="M1606.5 853.5 H1617" stroke="#808080" stroke-dasharray="1 1"/><path d="M1613 853.5 H1617" stroke="#808080" stroke-dasharray="1 1"/><rect x="1618.5" y="847" width="12" height="12" fill="#fff" stroke="#2a4a7a" stroke-width="1"/><path d="M1621 853.5 L1623.5 856.2 L1628.5 849.5" fill="none" stroke="#10a020" stroke-width="1.6"/><path d="M1636 851 h5 v-3 l5.5 5 l-5.5 5 v-3 h-5 z" fill="#6a8fd8" stroke="#1f3f90" stroke-width="0.8" stroke-linejoin="round"/><path d="M1603 865 L1607 869 L1603 873" fill="none" stroke="#a0a0a0" stroke-width="1.3"/><path d="M1613 869.5 H1617" stroke="#808080" stroke-dasharray="1 1"/><rect x="1618.5" y="863" width="12" height="12" fill="#fff" stroke="#2a4a7a" stroke-width="1"/><path d="M1621 869.5 L1623.5 872.2 L1628.5 865.5" fill="none" stroke="#10a020" stroke-width="1.6"/><path d="M1636 867 h5 v-3 l5.5 5 l-5.5 5 v-3 h-5 z" fill="#6a8fd8" stroke="#1f3f90" stroke-width="0.8" stroke-linejoin="round"/><path d="M1582 883 L1586 887 L1590 883" fill="none" stroke="#303030" stroke-width="1.5"/><path d="M1594 885.5 H1598" stroke="#808080" stroke-dasharray="1 1"/><rect x="1599.5" y="879" width="12" height="12" fill="#fff" stroke="#2a4a7a" stroke-width="1"/><path d="M1602 885.5 L1604.5 888.2 L1609.5 881.5" fill="none" stroke="#10a020" stroke-width="1.6"/><path d="M1617 883 h5 v-3 l5.5 5 l-5.5 5 v-3 h-5 z" fill="#e01010" stroke="#a00000" stroke-width="0.8" stroke-linejoin="round"/><path d="M1603 897 L1607 901 L1603 905" fill="none" stroke="#a0a0a0" stroke-width="1.3"/><path d="M1613 901.5 H1617" stroke="#808080" stroke-dasharray="1 1"/><rect x="1618.5" y="895" width="12" height="12" fill="#fff" stroke="#2a4a7a" stroke-width="1"/><path d="M1621 901.5 L1623.5 904.2 L1628.5 897.5" fill="none" stroke="#10a020" stroke-width="1.6"/><path d="M1636 899 h5 v-3 l5.5 5 l-5.5 5 v-3 h-5 z" fill="#e01010" stroke="#a00000" stroke-width="0.8" stroke-linejoin="round"/><path d="M1603 913 L1607 917 L1603 921" fill="none" stroke="#a0a0a0" stroke-width="1.3"/><path d="M1613 917.5 H1617" stroke="#808080" stroke-dasharray="1 1"/><rect x="1618.5" y="911" width="12" height="12" fill="#fff" stroke="#2a4a7a" stroke-width="1"/><path d="M1621 917.5 L1623.5 920.2 L1628.5 913.5" fill="none" stroke="#10a020" stroke-width="1.6"/><path d="M1636 915 h5 v-3 l5.5 5 l-5.5 5 v-3 h-5 z" fill="#e01010" stroke="#a00000" stroke-width="0.8" stroke-linejoin="round"/><path d="M1603 929 L1607 933 L1603 937" fill="none" stroke="#a0a0a0" stroke-width="1.3"/><path d="M1613 933.5 H1617" stroke="#808080" stroke-dasharray="1 1"/><rect x="1618.5" y="927" width="12" height="12" fill="#fff" stroke="#2a4a7a" stroke-width="1"/><path d="M1621 933.5 L1623.5 936.2 L1628.5 929.5" fill="none" stroke="#10a020" stroke-width="1.6"/><path d="M1636 931 h5 v-3 l5.5 5 l-5.5 5 v-3 h-5 z" fill="#e01010" stroke="#a00000" stroke-width="0.8" stroke-linejoin="round"/><path d="M1603 945 L1607 949 L1603 953" fill="none" stroke="#a0a0a0" stroke-width="1.3"/><path d="M1613 949.5 H1617" stroke="#808080" stroke-dasharray="1 1"/><rect x="1618.5" y="943" width="12" height="12" fill="#fff" stroke="#2a4a7a" stroke-width="1"/><path d="M1621 949.5 L1623.5 952.2 L1628.5 945.5" fill="none" stroke="#10a020" stroke-width="1.6"/><path d="M1636 947 h5 v-3 l5.5 5 l-5.5 5 v-3 h-5 z" fill="#e01010" stroke="#a00000" stroke-width="0.8" stroke-linejoin="round"/><path d="M1603 961 L1607 965 L1603 969" fill="none" stroke="#a0a0a0" stroke-width="1.3"/><path d="M1613 965.5 H1617" stroke="#808080" stroke-dasharray="1 1"/><rect x="1618.5" y="959" width="12" height="12" fill="#fff" stroke="#2a4a7a" stroke-width="1"/><path d="M1621 965.5 L1623.5 968.2 L1628.5 961.5" fill="none" stroke="#10a020" stroke-width="1.6"/><path d="M1636 963 h5 v-3 l5.5 5 l-5.5 5 v-3 h-5 z" fill="#e01010" stroke="#a00000" stroke-width="0.8" stroke-linejoin="round"/><path d="M1603 977 L1607 981 L1603 985" fill="none" stroke="#a0a0a0" stroke-width="1.3"/><path d="M1613 981.5 H1617" stroke="#808080" stroke-dasharray="1 1"/><rect x="1618.5" y="975" width="12" height="12" fill="#fff" stroke="#2a4a7a" stroke-width="1"/><path d="M1621 981.5 L1623.5 984.2 L1628.5 977.5" fill="none" stroke="#10a020" stroke-width="1.6"/><path d="M1636 979 h5 v-3 l5.5 5 l-5.5 5 v-3 h-5 z" fill="#e01010" stroke="#a00000" stroke-width="0.8" stroke-linejoin="round"/></svg><div style="left:1706px;top:748px;width:16px;height:239px;background:#f0f0f0"></div><div style="left:1707px;top:767px;width:14px;height:128px;background:#cdcdcd"></div><svg style="left:1706px;top:748px" width="16" height="239" viewBox="0 0 16 239"><path d="M4.0 10.5 L8.0 6.5 L12.0 10.5" fill="none" stroke="#606060" stroke-width="1.6"/><path d="M4.0 228.5 L8.0 232.5 L12.0 228.5" fill="none" stroke="#606060" stroke-width="1.6"/></svg><div style="left:1556px;top:987px;width:150px;height:17px;background:#f0f0f0"></div><div style="left:1574px;top:988px;width:87px;height:15px;background:#cdcdcd"></div><svg style="left:1556px;top:987px" width="150" height="17" viewBox="0 0 150 17"><path d="M10.5 4.5 L6.5 8.5 L10.5 12.5" fill="none" stroke="#404040" stroke-width="1.6"/><path d="M139.5 4.5 L143.5 8.5 L139.5 12.5" fill="none" stroke="#404040" stroke-width="1.6"/></svg><div style="left:1706px;top:987px;width:17px;height:17px;background:#f0f0f0"></div><div style="left:1745px;top:748px;width:1px;height:57px;background:#e0e0e0"></div><span class="t" style="left:1783px;top:752px;">Model (2)</span><div style="left:1755px;top:771.0px;width:13px;height:13px;border:1px solid #444;background:#fff"><svg width="11" height="11" viewBox="0 0 11 11" style="position:absolute;left:0;top:0"><path d="M1.5 5.5 L4.2 8.5 L9.8 1.8" fill="none" stroke="#333" stroke-width="1.3"/></svg></div><div style="left:1755px;top:789.0px;width:13px;height:13px;border:1px solid #444;background:#fff"><svg width="11" height="11" viewBox="0 0 11 11" style="position:absolute;left:0;top:0"><path d="M1.5 5.5 L4.2 8.5 L9.8 1.8" fill="none" stroke="#333" stroke-width="1.3"/></svg></div><svg style="left:1774px;top:770px" width="16" height="32" viewBox="1774 770 16 32"><path d="M1776 775.5 h5 v-3 l5.5 5 l-5.5 5 v-3 h-5 z" fill="#6a8fd8" stroke="#1f3f90" stroke-width="0.8" stroke-linejoin="round"/><path d="M1776 793.5 h5 v-3 l5.5 5 l-5.5 5 v-3 h-5 z" fill="#e01010" stroke="#a00000" stroke-width="0.8" stroke-linejoin="round"/></svg><span class="t" style="left:1792px;top:770px;">Control</span><span class="t" style="left:1792px;top:788px;">Boundaries</span><div style="left:1730px;top:987px;width:127px;height:17px;background:#f0f0f0"></div><div style="left:1748px;top:988px;width:83px;height:15px;background:#cdcdcd"></div><svg style="left:1730px;top:987px" width="127" height="17" viewBox="0 0 127 17"><path d="M10.5 4.5 L6.5 8.5 L10.5 12.5" fill="none" stroke="#b0b0b0" stroke-width="1.6"/><path d="M116.5 4.5 L120.5 8.5 L116.5 12.5" fill="none" stroke="#404040" stroke-width="1.6"/></svg><div style="left:1858px;top:143px;width:1px;height:863px;background:#a0a0a0"></div><span class="tt" style="left:1479px;top:1012px;top:1011px;letter-spacing:-0.09px">Select boundary properties</span><div style="left:1674px;top:1010px;width:1px;height:18px;background:#d0d0d0"></div><span class="tt" style="left:1679px;top:1012px;top:1011px;letter-spacing:-0.45px">u: 4.645 v: 15.668</span><svg style="left:1846px;top:1016px" width="12" height="12" viewBox="0 0 12 12"><rect x="9" y="1" width="1.5" height="1.5" fill="#b0b0b0"/><rect x="9" y="5" width="1.5" height="1.5" fill="#b0b0b0"/><rect x="9" y="9" width="1.5" height="1.5" fill="#b0b0b0"/><rect x="5" y="5" width="1.5" height="1.5" fill="#b0b0b0"/><rect x="5" y="9" width="1.5" height="1.5" fill="#b0b0b0"/><rect x="1" y="9" width="1.5" height="1.5" fill="#b0b0b0"/></svg></body></html>
